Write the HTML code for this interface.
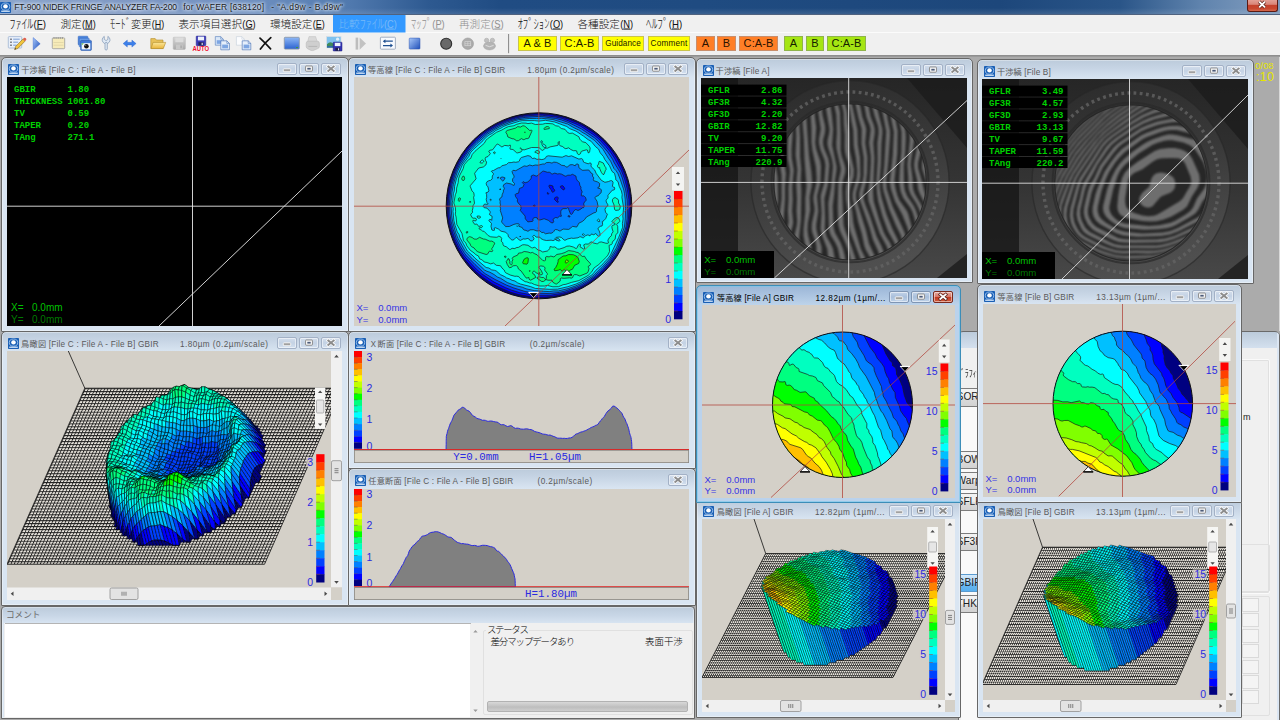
<!DOCTYPE html><html lang="ja"><head><meta charset="utf-8"><title>FT-900 NIDEK FRINGE ANALYZER FA-200 for WAFER</title><style>
*{box-sizing:border-box;margin:0;padding:0}
html,body{width:1280px;height:720px;overflow:hidden;background:#ababab}
body{font-family:"Liberation Sans","Noto Sans CJK JP",sans-serif;font-size:8px;color:#000;position:relative}
#root{position:absolute;left:0;top:0;width:1280px;height:720px;overflow:hidden;background:#ababab}
.abs{position:absolute}
#tb{position:absolute;left:0;top:0;width:1280px;height:15px;background:linear-gradient(rgba(255,255,255,0) 0,rgba(255,255,255,0) 8px,rgba(255,255,255,.12) 14px),linear-gradient(90deg,#8ba5cb 0,#8099c4 120px,#6f90c0 250px,#5079ae 350px,#2d5990 430px,#204c83 500px,#1f4b81 700px,#1d477b 1000px,#2a5588 1120px,#5f83ad 1200px,#7493b8 1245px,#7a98bb 1280px);border-bottom:1px solid #4f627f}
#tb .t{position:absolute;left:14px;top:1px;font-size:8.35px;line-height:13px;color:#1a1a1a;white-space:nowrap;text-shadow:0 0 3px #dfe9f6,0 0 3px #dfe9f6,0 0 4px #dfe9f6;letter-spacing:0.05px}
#tb .ic{position:absolute;left:0px;top:2px;width:11px;height:11px}
#tb .cl{position:absolute;left:1247px;top:-1px;width:31px;height:13px;border:1px solid #5b1a12;border-top:none;border-radius:0 0 3px 3px;background:linear-gradient(#e5a59b 0,#d98578 45%,#c4402b 50%,#c8472f 80%,#d4684c 100%)}
#mb{position:absolute;left:0;top:15px;width:1280px;height:18px;background:#f0f0f0;border-bottom:1px solid #fbfbfb;font-family:"Liberation Sans","Noto Sans CJK JP",sans-serif;font-size:10.4px;line-height:18px;white-space:nowrap}
#mb span{position:absolute;top:0;height:18px;letter-spacing:-0.2px}
#mb span u{text-decoration:underline;text-underline-offset:1px}
#mb .dis{color:#8d8d8d}
#mb .hl{background:#3399ff;color:#74b6f8}
#tl{position:absolute;left:0;top:33px;width:1280px;height:23px;background:#f0f0f0;border-bottom:1px solid #8e8e8e}
.tbtn{position:absolute;top:3px;height:15px;border:1px solid;text-align:center;white-space:nowrap;color:#1a1a00;font-family:"Liberation Sans",sans-serif}
.ty{background:#ffff00;border-color:#c9c44a}
.to{background:#ff7f27;border-color:#c98d6a;color:#2a1200}
.tg{background:#a5e513;border-color:#8fb44a;color:#142000}
.win{position:absolute;border:1px solid #676767;border-radius:5px 5px 1px 1px;background:linear-gradient(#bccbdb 0,#c6d4e4 8px,#d8e4f1 19px,#d9e5f2 20px);box-shadow:inset 0 0 0 1px rgba(255,255,255,.35)}
.win.act{border-color:#3c8db8;background:linear-gradient(#9bb6d6 0,#a9c2df 8px,#bdd3ea 19px,#bad2ec 20px);box-shadow:inset 0 0 0 1px rgba(120,200,235,.6)}
.win .ti{position:absolute;left:6px;top:6px;width:11px;height:11px}
.win .tt{position:absolute;left:19px;top:4px;height:14px;line-height:14px;font-size:8.2px;color:#5a5a5a;white-space:nowrap;letter-spacing:.22px}
.win.act .tt{color:#000}
.win .tr{position:absolute;top:4px;height:14px;line-height:14px;font-size:8.2px;color:#5a5a5a;white-space:nowrap;letter-spacing:.22px}
.win.act .tr{color:#000}
.wb{position:absolute;top:5.3px;width:20px;height:11.4px;border:1px solid #a3b1c6;border-radius:2px;background:linear-gradient(#d3deec,#c4d2e4 50%,#d4e1f0);box-shadow:inset 0 0 0 1px rgba(255,255,255,.5)}
.win.act .wb{border-color:#7f95b3;background:linear-gradient(#c3d3e8,#a9bfdb 50%,#bfd3ea)}
.win.act .wb.cl{border-color:#7a2a1c;background:linear-gradient(#e6a79d 0,#d77a6a 45%,#c23a22 52%,#d0593a 100%)}
.wb svg{position:absolute;left:0;top:0;width:18px;height:9.4px}
.cnt{position:absolute;overflow:hidden}
.mono{font-family:"Liberation Mono",monospace}
</style></head><body><div id="root"><div id="tb"><svg class="ic" viewBox="0 0 11 11" style=""><rect width="11" height="11" rx="0.8" fill="#1a5fb4"/><ellipse cx="5.5" cy="4.6" rx="4.2" ry="3.6" fill="none" stroke="#9cc3ee" stroke-width="0.9"/><ellipse cx="5.5" cy="4.4" rx="2.3" ry="2.1" fill="#fff"/><rect x="1.2" y="8.6" width="8.6" height="1.3" fill="#cfe2f7"/></svg><div class="t" style="left:14.25px;font-size:8.5px;letter-spacing:-0.083px">FT-900 NIDEK FRINGE ANALYZER FA-200</div><div class="t" style="left:183.25px;font-size:8.5px;letter-spacing:0.161px">for WAFER [638120]</div><div class="t" style="left:271.25px;font-size:8.5px;letter-spacing:0.366px">- &quot;A.d9w - B.d9w&quot;</div><div class="cl"><svg viewBox="0 0 29 12" width="29" height="12" style="position:absolute;left:0;top:0"><path d="M11.2 2.6L17 8.4M17 2.6L11.2 8.4" stroke="#5a1d14" stroke-width="3.4"/><path d="M11.2 2.6L17 8.4M17 2.6L11.2 8.4" stroke="#fff" stroke-width="1.9"/></svg></div></div><div id="mb"><svg width="1280" height="19" viewBox="0 0 1280 19" style="position:absolute;left:0;top:0"><rect x="333" y="-0.5" width="72.5" height="18" fill="#3399ff"/><text fill="#111" font-family="Liberation Sans,Noto Sans CJK JP,sans-serif" font-weight="300"><tspan x="9.50" y="12.8" font-size="13" textLength="23.75" lengthAdjust="spacingAndGlyphs">ﾌｧｲﾙ</tspan><tspan x="33.55" y="12.5" font-size="10.6" textLength="12.40" lengthAdjust="spacingAndGlyphs">(<tspan text-decoration="underline">F</tspan>)</tspan></text><text fill="#111" font-family="Liberation Sans,Noto Sans CJK JP,sans-serif" font-weight="300"><tspan x="60.50" y="12.5" font-size="10.5" textLength="21.25" lengthAdjust="spacingAndGlyphs">測定</tspan><tspan x="82.05" y="12.5" font-size="10.6" textLength="13.65" lengthAdjust="spacingAndGlyphs">(<tspan text-decoration="underline">M</tspan>)</tspan></text><text fill="#111" font-family="Liberation Sans,Noto Sans CJK JP,sans-serif" font-weight="300"><tspan x="110.00" y="12.8" font-size="13" textLength="21.00" lengthAdjust="spacingAndGlyphs">ﾓｰﾄﾞ</tspan><tspan x="131.00" y="12.5" font-size="10.5" textLength="20.50" lengthAdjust="spacingAndGlyphs">変更</tspan><tspan x="151.80" y="12.5" font-size="10.6" textLength="12.40" lengthAdjust="spacingAndGlyphs">(<tspan text-decoration="underline">H</tspan>)</tspan></text><text fill="#111" font-family="Liberation Sans,Noto Sans CJK JP,sans-serif" font-weight="300"><tspan x="178.50" y="12.5" font-size="10.5" textLength="63.50" lengthAdjust="spacingAndGlyphs">表示項目選択</tspan><tspan x="242.30" y="12.5" font-size="10.6" textLength="13.40" lengthAdjust="spacingAndGlyphs">(<tspan text-decoration="underline">G</tspan>)</tspan></text><text fill="#111" font-family="Liberation Sans,Noto Sans CJK JP,sans-serif" font-weight="300"><tspan x="270.00" y="12.5" font-size="10.5" textLength="42.40" lengthAdjust="spacingAndGlyphs">環境設定</tspan><tspan x="312.70" y="12.5" font-size="10.6" textLength="12.00" lengthAdjust="spacingAndGlyphs">(<tspan text-decoration="underline">E</tspan>)</tspan></text><text fill="#79b9f7" font-family="Liberation Sans,Noto Sans CJK JP,sans-serif" font-weight="300"><tspan x="338.50" y="12.5" font-size="10.5" textLength="21.20" lengthAdjust="spacingAndGlyphs">比較</tspan><tspan x="359.70" y="12.8" font-size="13" textLength="24.00" lengthAdjust="spacingAndGlyphs">ﾌｧｲﾙ</tspan><tspan x="384.00" y="12.5" font-size="10.6" textLength="12.90" lengthAdjust="spacingAndGlyphs">(<tspan text-decoration="underline">C</tspan>)</tspan></text><text fill="#8f8f8f" font-family="Liberation Sans,Noto Sans CJK JP,sans-serif" font-weight="300"><tspan x="411.00" y="12.8" font-size="13" textLength="21.00" lengthAdjust="spacingAndGlyphs">ﾏｯﾌﾟ</tspan><tspan x="432.30" y="12.5" font-size="10.6" textLength="12.40" lengthAdjust="spacingAndGlyphs">(<tspan text-decoration="underline">P</tspan>)</tspan></text><text fill="#8f8f8f" font-family="Liberation Sans,Noto Sans CJK JP,sans-serif" font-weight="300"><tspan x="459.00" y="12.5" font-size="10.5" textLength="31.80" lengthAdjust="spacingAndGlyphs">再測定</tspan><tspan x="491.10" y="12.5" font-size="10.6" textLength="12.60" lengthAdjust="spacingAndGlyphs">(<tspan text-decoration="underline">S</tspan>)</tspan></text><text fill="#111" font-family="Liberation Sans,Noto Sans CJK JP,sans-serif" font-weight="300"><tspan x="517.50" y="12.8" font-size="13" textLength="32.00" lengthAdjust="spacingAndGlyphs">ｵﾌﾟｼｮﾝ</tspan><tspan x="549.80" y="12.5" font-size="10.6" textLength="13.40" lengthAdjust="spacingAndGlyphs">(<tspan text-decoration="underline">O</tspan>)</tspan></text><text fill="#111" font-family="Liberation Sans,Noto Sans CJK JP,sans-serif" font-weight="300"><tspan x="577.50" y="12.5" font-size="10.5" textLength="42.40" lengthAdjust="spacingAndGlyphs">各種設定</tspan><tspan x="620.20" y="12.5" font-size="10.6" textLength="13.00" lengthAdjust="spacingAndGlyphs">(<tspan text-decoration="underline">N</tspan>)</tspan></text><text fill="#111" font-family="Liberation Sans,Noto Sans CJK JP,sans-serif" font-weight="300"><tspan x="646.00" y="12.8" font-size="13" textLength="22.50" lengthAdjust="spacingAndGlyphs">ﾍﾙﾌﾟ</tspan><tspan x="668.80" y="12.5" font-size="10.6" textLength="13.40" lengthAdjust="spacingAndGlyphs">(<tspan text-decoration="underline">H</tspan>)</tspan></text></svg></div><div id="tl"><svg width="512" height="23" viewBox="0 33 512 23" style="position:absolute;left:0;top:0"><defs>
<linearGradient id="gb" x1="0" y1="0" x2="0" y2="1"><stop offset="0" stop-color="#8fb8f6"/><stop offset="1" stop-color="#2a62d0"/></linearGradient>
<linearGradient id="gb2" x1="0" y1="0" x2="1" y2="1"><stop offset="0" stop-color="#a8c8fa"/><stop offset="1" stop-color="#1e4eb8"/></linearGradient>
<linearGradient id="gy" x1="0" y1="0" x2="0" y2="1"><stop offset="0" stop-color="#fbe79a"/><stop offset="1" stop-color="#e9b43a"/></linearGradient>
<linearGradient id="gg" x1="0" y1="0" x2="0" y2="1"><stop offset="0" stop-color="#d6d6d6"/><stop offset="1" stop-color="#a9a9a9"/></linearGradient>
</defs><rect x="8.3" y="36.6" width="13.4" height="11.4" rx="0.8" fill="#e9f0fa" stroke="#9fb4d2" stroke-width="0.8"/><path d="M10.2 39.2h1.6M10.2 42.2h1.6M10.2 45.2h1.6" stroke="#6f6f78" stroke-width="1.5"/><path d="M13.2 39.2h6.5M13.2 42.2h5M13.2 45.2h3.5" stroke="#9db7df" stroke-width="1.6"/><path d="M14.6 49.6l1.1 -3.2l7.2 -7.3l2.1 2.1l-7.2 7.3z" fill="#f2c53d" stroke="#8a6a20" stroke-width="0.6"/><path d="M22.9 39.1l1-1a1.1 1.1 0 0 1 1.6 0l.5.5a1.1 1.1 0 0 1 0 1.6l-1 1z" fill="#e0604f"/><path d="M14.6 49.6l.5-1.6l1.1 1.1z" fill="#333"/><path d="M33.2 37.6L40.2 43.8L33.2 50z" fill="url(#gb2)" stroke="#2a5ad0" stroke-width="0.4"/><rect x="52.3" y="37.9" width="12.4" height="10.8" rx="0.8" fill="#f6ebb8" stroke="#a5a5a0" stroke-width="0.9"/><path d="M54 37v2M56.1 37v2M58.2 37v2M60.3 37v2M62.4 37v2" stroke="#8f8f8f" stroke-width="0.8"/><path d="M53.5 42.5h10M53.5 45.2h10" stroke="#ddd0a0" stroke-width="0.7"/><rect x="78.2" y="36.2" width="9.6" height="8.6" rx="0.6" fill="#4a86e0" stroke="#2c5fb8" stroke-width="0.5"/><rect x="79.2" y="38.2" width="10" height="8.6" rx="0.6" fill="#6b9fe9" stroke="#2c5fb8" stroke-width="0.5"/><rect x="80.6" y="40.4" width="10.8" height="10" rx="0.8" fill="#3f79d6" stroke="#2856a8" stroke-width="0.6"/><rect x="81.7" y="43.2" width="8.6" height="6.2" fill="#f4f6f8"/><circle cx="86.4" cy="46.2" r="2.3" fill="#111"/><circle cx="85.7" cy="45.5" r="0.6" fill="#888"/><path d="M81.7 43.2h2.2l-2.2 2.2z" fill="#6cc04a"/><path d="M104.3 36.4a3.9 3.9 0 1 0 3.6 0v3l-1.8 1.2l-1.8 -1.2z" fill="#dfe9f4" stroke="#7f96b4" stroke-width="0.7"/><rect x="105" y="42.4" width="2.3" height="7.6" rx="1.1" fill="#dfe9f4" stroke="#7f96b4" stroke-width="0.7"/><path d="M123.1 43.6l4.2 -3.5v2.2h4.6v-2.2l4.2 3.5l-4.2 3.5v-2.2h-4.6v2.2z" fill="#3d80ea" stroke="#2a62c8" stroke-width="0.4"/><path d="M150.8 48.4v-9.8h4.4l1.2 1.4h6.6v8.4z" fill="#e8c25a" stroke="#b08a2a" stroke-width="0.6"/><path d="M151 48.6l2.1 -6.2h12.6l-2.4 6.2z" fill="url(#gy)" stroke="#b08a2a" stroke-width="0.6"/><rect x="173.2" y="37.2" width="12.2" height="12.2" rx="0.8" fill="url(#gg)" stroke="#b5b5b5" stroke-width="0.5"/><rect x="175.3" y="37.6" width="8" height="4.6" fill="#dcdcdc"/><rect x="176" y="44.6" width="6.6" height="4.6" fill="#c8c8c8"/><rect x="180.3" y="45.4" width="1.6" height="3" fill="#aaa"/><rect x="196.2" y="36.1" width="9.6" height="9.6" rx="0.6" fill="#3a3ab8" stroke="#23238a" stroke-width="0.5"/><rect x="197.9" y="36.6" width="6.2" height="3.8" fill="#eef2fb"/><rect x="198.4" y="42.2" width="5.2" height="3.3" fill="#23235a"/><rect x="201.6" y="42.8" width="1.2" height="2.2" fill="#dde"/><text x="200.8" y="51.2" font-family="Liberation Sans,sans-serif" font-weight="bold" font-size="6.8" fill="#f01030" text-anchor="middle" textLength="16.6" lengthAdjust="spacingAndGlyphs">AUTO</text><path d="M215.3 36.6h5.4l2.6 2.6v6.0h-8z" fill="#dbe8f8" stroke="#4f78b8" stroke-width="0.6"/><path d="M220.70000000000002 36.6v2.6h2.6" fill="none" stroke="#4f78b8" stroke-width="0.5"/><rect x="216.70000000000002" y="40.212" width="5.2" height="3.6119999999999997" fill="#7ea6e2"/><path d="M220.8 40.8h6.0l2.6 2.6v6.4h-8.6z" fill="#e6effb" stroke="#3a66b0" stroke-width="0.6"/><path d="M226.8 40.8v2.6h2.6" fill="none" stroke="#3a66b0" stroke-width="0.5"/><rect x="222.20000000000002" y="44.58" width="5.8" height="3.78" fill="#7ea6e2"/><path d="M236.4 36.6h5.4l2.6 2.6v6.0h-8z" fill="#fbfcfe" stroke="#c2ccd8" stroke-width="0.6"/><path d="M241.8 36.6v2.6h2.6" fill="none" stroke="#c2ccd8" stroke-width="0.5"/><path d="M242.2 40.8h6.0l2.6 2.6v6.4h-8.6z" fill="#e6effb" stroke="#3a66b0" stroke-width="0.6"/><path d="M248.2 40.8v2.6h2.6" fill="none" stroke="#3a66b0" stroke-width="0.5"/><rect x="243.6" y="44.58" width="5.8" height="3.78" fill="#7ea6e2"/><path d="M260 38.2q5 4.6 10.6 10.6M270.8 37.6q-5.8 5 -10.4 11.4" stroke="#111" stroke-width="1.7" fill="none" stroke-linecap="round"/><rect x="284.3" y="37.3" width="15" height="11.8" rx="0.8" fill="url(#gb)" stroke="#8a98ac" stroke-width="0.9"/><rect x="296" y="47" width="2" height="1" fill="#3c9a3c"/><path d="M309 36.6h6.6l1.6 5h-9.6z" fill="#d9d9d9" stroke="#bdbdbd" stroke-width="0.5"/><path d="M306.2 43.2q0 -2 2 -2h9.2q2 0 2 2v3.4q0 1.6 -2 2.2l-4 1.6q-1.2.4 -2.4 0l-3 -1.4q-1.8 -.8 -1.8 -2.4z" fill="#cfcfcf" stroke="#b4b4b4" stroke-width="0.5"/><path d="M308.4 46.4h8.8" stroke="#b0b0b0" stroke-width="0.8"/><rect x="326.6" y="36.6" width="14.4" height="11.2" fill="#7fc2ee" stroke="#d8dde4" stroke-width="0.7"/><path d="M327 44.2q3 -3.4 5.4 -1.2t4 -.4v5h-9.4z" fill="#3f8a58"/><path d="M327 46h9v1.6h-9z" fill="#2e6aa8"/><circle cx="337.6" cy="39.2" r="1.6" fill="#e8f4ff" opacity="0.9"/><rect x="333.2" y="42.2" width="8.8" height="8.8" rx="0.5" fill="#3434b4" stroke="#20207a" stroke-width="0.5"/><rect x="334.8" y="42.8" width="5.6" height="3.3" fill="#eef2fb"/><rect x="335.3" y="47.8" width="4.6" height="3" fill="#20204a"/><rect x="338" y="48.3" width="1.1" height="2" fill="#dde"/><rect x="355.6" y="37.6" width="2.6" height="12" fill="#bdbdbd"/><path d="M359.6 37.6L366 43.6L359.6 49.8z" fill="#c2c2c2"/><rect x="380.4" y="37.2" width="15" height="12" rx="0.8" fill="#f8fafe" stroke="#9aa6ba" stroke-width="0.9"/><path d="M384.6 41.2h8.2M391.2 45.6h-8.2" stroke="#1f4f90" stroke-width="1.3"/><path d="M385.4 39.2l-2.6 2l2.6 2zM390.4 43.6l2.6 2l-2.6 2z" fill="#1f4f90"/><rect x="409.2" y="38.1" width="10.8" height="11" rx="0.8" fill="url(#gb2)" stroke="#2a52b0" stroke-width="0.5"/><circle cx="446.2" cy="43.7" r="5.5" fill="#696969" stroke="#2e2e2e" stroke-width="1.1"/><circle cx="467.8" cy="43.7" r="5.7" fill="#ababab" stroke="#9a9a9a" stroke-width="0.6"/><rect x="464.9" y="41.7" width="5.8" height="4" fill="none" stroke="#d6d6d6" stroke-width="0.7"/><path d="M467.8 41.7v4M464.9 43.7h5.8" stroke="#d6d6d6" stroke-width="0.6"/><ellipse cx="489.5" cy="46" rx="6" ry="3.9" fill="#b4b4b4" stroke="#a0a0a0" stroke-width="0.5"/><circle cx="486.6" cy="40.4" r="2.2" fill="#c0c0c0" stroke="#a4a4a4" stroke-width="0.5"/><circle cx="492.4" cy="40.4" r="2.2" fill="#c0c0c0" stroke="#a4a4a4" stroke-width="0.5"/><path d="M485.6 45.4q4 2.6 8 0" stroke="#e2e2e2" stroke-width="0.9" fill="none"/><path d="M508.6 34v19.2" stroke="#7a7a7a" stroke-width="0.9"/></svg><div class="tbtn ty" style="left:518px;width:39px;font-size:11px;line-height:13px;letter-spacing:0.094px;text-indent:0.094px">A &amp; B</div><div class="tbtn ty" style="left:560px;width:39px;font-size:11px;line-height:13px;letter-spacing:0.131px;text-indent:0.131px">C:A-B</div><div class="tbtn ty" style="left:602px;width:42px;font-size:8.2px;line-height:13px;letter-spacing:0.067px;text-indent:0.067px">Guidance</div><div class="tbtn ty" style="left:648px;width:42px;font-size:8.2px;line-height:13px;letter-spacing:0.214px;text-indent:0.214px">Comment</div><div class="tbtn to" style="left:696px;width:19px;font-size:11px;line-height:13px">A</div><div class="tbtn to" style="left:717px;width:19px;font-size:11px;line-height:13px">B</div><div class="tbtn to" style="left:739px;width:39px;font-size:11px;line-height:13px;letter-spacing:0.131px;text-indent:0.131px">C:A-B</div><div class="tbtn tg" style="left:784px;width:19px;font-size:11px;line-height:13px">A</div><div class="tbtn tg" style="left:806px;width:18px;font-size:11px;line-height:13px">B</div><div class="tbtn tg" style="left:827px;width:39px;font-size:11px;line-height:13px;letter-spacing:0.131px;text-indent:0.131px">C:A-B</div></div><div class="abs" style="left:0;top:56px;width:1280px;height:1px;background:#9a9a9a"></div><div class="abs" style="left:1279px;top:57px;width:1px;height:274px;background:#d8d8d8"></div><div class="abs" style="left:1255px;top:60px;font-size:9.5px;line-height:11px;color:#e6e600;white-space:nowrap">0/08</div><div class="abs" style="left:1256px;top:70px;font-size:13px;line-height:14px;color:#e6e600;white-space:nowrap">:10</div><div class="abs" style="left:958px;top:331px;width:322px;height:400px;border:1px solid #6a6a6a;border-radius:5px 5px 0 0;background:linear-gradient(#bccbdb 0,#d4e0ee 16px,#dbe6f3 17px);overflow:hidden"><div class="abs" style="left:0;top:16px;width:318px;height:400px;background:#f0f0f0"></div><div class="abs" style="left:2px;top:74px;width:18px;height:326px;background:#f9f9f9"></div><div class="abs" style="left:-2px;top:36px;font-size:10px;line-height:12px;white-space:nowrap;color:#333;letter-spacing:-0.2px;transform:scaleX(.8);transform-origin:0 0">ｸﾞﾗﾌｨｯｸ</div><div class="abs" style="left:-5px;top:56px;width:60px;height:19px;border:1px solid #7c7c7c;background:linear-gradient(#f3f3f3 0,#ececec 50%,#dadada 55%,#d2d2d2);font-size:10.2px;line-height:16px;padding-left:1.6px;color:#222;white-space:nowrap">SORI</div><div class="abs" style="left:-5px;top:119px;width:60px;height:18px;border:1px solid #7c7c7c;background:linear-gradient(#f3f3f3 0,#ececec 50%,#dadada 55%,#d2d2d2);font-size:10.2px;line-height:15px;padding-left:1.6px;color:#222;white-space:nowrap">BOW</div><div class="abs" style="left:-5px;top:140px;width:60px;height:18px;border:1px solid #7c7c7c;background:linear-gradient(#f3f3f3 0,#ececec 50%,#dadada 55%,#d2d2d2);font-size:10.2px;line-height:15px;padding-left:1.6px;color:#222;white-space:nowrap">Warp</div><div class="abs" style="left:-5px;top:161px;width:60px;height:18px;border:1px solid #7c7c7c;background:linear-gradient(#f3f3f3 0,#ececec 50%,#dadada 55%,#d2d2d2);font-size:10.2px;line-height:15px;padding-left:1.6px;color:#222;white-space:nowrap">SFLR</div><div class="abs" style="left:-5px;top:201px;width:60px;height:18px;border:1px solid #7c7c7c;background:linear-gradient(#f3f3f3 0,#ececec 50%,#dadada 55%,#d2d2d2);font-size:10.2px;line-height:15px;padding-left:1.6px;color:#222;white-space:nowrap">SF3R</div><div class="abs" style="left:-5px;top:242px;width:60px;height:18px;border:1px solid #5a9bd0;background:linear-gradient(#d6eafb 0,#a4d2f5 50%,#6ab8f0 55%,#58afee);font-size:10.2px;line-height:15px;padding-left:1.6px;color:#222;white-space:nowrap">GBIR</div><div class="abs" style="left:-5px;top:263px;width:60px;height:18px;border:1px solid #7c7c7c;background:linear-gradient(#f3f3f3 0,#ececec 50%,#dadada 55%,#d2d2d2);font-size:10.2px;line-height:15px;padding-left:1.6px;color:#222;white-space:nowrap">THK</div><div class="abs" style="left:281px;top:27px;width:30px;height:235px;border:1px solid #fafafa;border-radius:2px;box-shadow:0 0 0 1px #e0e0e0 inset"></div><div class="abs" style="left:284px;top:80px;font-size:9px;color:#222">m</div><div class="abs" style="left:281px;top:212px;width:30px;height:48px;border:1px solid #e0e0e0;border-radius:2px"></div><div class="abs" style="left:281px;top:264px;width:30px;height:120px;border:1px solid #e0e0e0;border-radius:2px"></div><div class="abs" style="left:283px;top:266.0px;width:17px;height:14px;border:1px solid #dadada;background:#f4f4f4"></div><div class="abs" style="left:283px;top:281.4px;width:17px;height:14px;border:1px solid #dadada;background:#f4f4f4"></div><div class="abs" style="left:283px;top:296.8px;width:17px;height:14px;border:1px solid #dadada;background:#f4f4f4"></div><div class="abs" style="left:283px;top:312.2px;width:17px;height:14px;border:1px solid #dadada;background:#f4f4f4"></div><div class="abs" style="left:283px;top:327.6px;width:17px;height:14px;border:1px solid #dadada;background:#f4f4f4"></div><div class="abs" style="left:283px;top:343.0px;width:17px;height:14px;border:1px solid #dadada;background:#f4f4f4"></div><div class="abs" style="left:283px;top:358.4px;width:17px;height:14px;border:1px solid #dadada;background:#f4f4f4"></div><div class="abs" style="left:318px;top:0;width:3px;height:400px;background:#dbe6f3"></div></div><div class="win" style="left:1px;top:57px;width:348px;height:275px"><svg class="ti" viewBox="0 0 11 11" style=""><rect width="11" height="11" rx="0.8" fill="#1a5fb4"/><ellipse cx="5.5" cy="4.6" rx="4.2" ry="3.6" fill="none" stroke="#9cc3ee" stroke-width="0.9"/><ellipse cx="5.5" cy="4.4" rx="2.3" ry="2.1" fill="#fff"/><rect x="1.2" y="8.6" width="8.6" height="1.3" fill="#cfe2f7"/></svg><div class="tt" style="top:5.5px;letter-spacing:0.222px;left:19.2px">干渉縞 [File C : File A - File B]</div><div class="wb" style="left:274.5px"><svg viewBox="0 0 18 9"><rect x="5.3" y="4.6" width="7.4" height="2.9" rx="0.7" fill="#a0a0a0" stroke="#fff" stroke-width="0.8"/></svg></div><div class="wb" style="left:296.5px"><svg viewBox="0 0 18 9"><rect x="5.6" y="1.8" width="6.8" height="5.2" rx="0.5" fill="#fdfdfd" stroke="#8a8a8a" stroke-width="1"/><rect x="7.3" y="3.6" width="3.4" height="1.8" fill="#4b5a78"/></svg></div><div class="wb cl" style="left:318.5px"><svg viewBox="0 0 18 9"><path d="M6.3 2.3L11.7 6.7M11.7 2.3L6.3 6.7" stroke="#fff" stroke-width="3.3" stroke-linecap="square"/><path d="M6.3 2.3L11.7 6.7M11.7 2.3L6.3 6.7" stroke="#8c8c8c" stroke-width="1.9" stroke-linecap="square"/></svg></div><div class="cnt" style="left:5px;top:19px;width:335px;height:249px;background:#000"><svg width="335" height="249" viewBox="0 0 335 249" style="position:absolute;left:0;top:0;"><rect width="335" height="249" fill="#000"/><path d="M185.5 0V249M0 129.2H335M152 249L335 74" stroke="#e8e8e8" stroke-width="0.9" fill="none"/><text x="7" y="14.7" font-family="Liberation Mono,monospace" font-size="9" font-weight="bold" fill="#00d000" text-anchor="start" >GBIR</text><text x="60.5" y="14.7" font-family="Liberation Mono,monospace" font-size="9" font-weight="bold" fill="#00d000" text-anchor="start" >1.80</text><text x="7" y="26.8" font-family="Liberation Mono,monospace" font-size="9" font-weight="bold" fill="#00d000" text-anchor="start" >THICKNESS</text><text x="60.5" y="26.8" font-family="Liberation Mono,monospace" font-size="9" font-weight="bold" fill="#00d000" text-anchor="start" >1001.80</text><text x="7" y="38.8" font-family="Liberation Mono,monospace" font-size="9" font-weight="bold" fill="#00d000" text-anchor="start" >TV</text><text x="60.5" y="38.8" font-family="Liberation Mono,monospace" font-size="9" font-weight="bold" fill="#00d000" text-anchor="start" >0.59</text><text x="7" y="50.9" font-family="Liberation Mono,monospace" font-size="9" font-weight="bold" fill="#00d000" text-anchor="start" >TAPER</text><text x="60.5" y="50.9" font-family="Liberation Mono,monospace" font-size="9" font-weight="bold" fill="#00d000" text-anchor="start" >0.20</text><text x="7" y="62.9" font-family="Liberation Mono,monospace" font-size="9" font-weight="bold" fill="#00d000" text-anchor="start" >TAng</text><text x="60.5" y="62.9" font-family="Liberation Mono,monospace" font-size="9" font-weight="bold" fill="#00d000" text-anchor="start" >271.1</text><text x="4" y="234" font-family="Liberation Sans,sans-serif" font-size="10" font-weight="normal" fill="#00c000" text-anchor="start" >X=</text><text x="25" y="234" font-family="Liberation Sans,sans-serif" font-size="10" font-weight="normal" fill="#00c000" text-anchor="start" >0.0mm</text><text x="4" y="245.5" font-family="Liberation Sans,sans-serif" font-size="10" font-weight="normal" fill="#007800" text-anchor="start" >Y=</text><text x="25" y="245.5" font-family="Liberation Sans,sans-serif" font-size="10" font-weight="normal" fill="#007800" text-anchor="start" >0.0mm</text></svg></div></div><div class="win" style="left:348px;top:57px;width:348px;height:275px"><svg class="ti" viewBox="0 0 11 11" style=""><rect width="11" height="11" rx="0.8" fill="#1a5fb4"/><ellipse cx="5.5" cy="4.6" rx="4.2" ry="3.6" fill="none" stroke="#9cc3ee" stroke-width="0.9"/><ellipse cx="5.5" cy="4.4" rx="2.3" ry="2.1" fill="#fff"/><rect x="1.2" y="8.6" width="8.6" height="1.3" fill="#cfe2f7"/></svg><div class="tt" style="top:5.5px;letter-spacing:0.214px;left:18.9px">等高線 [File C : File A - File B] GBIR</div><div class="tr" style="left:178.2px;top:5.5px;letter-spacing:0.384px">1.80µm (0.2µm/scale)</div><div class="wb" style="left:274.5px"><svg viewBox="0 0 18 9"><rect x="5.3" y="4.6" width="7.4" height="2.9" rx="0.7" fill="#a0a0a0" stroke="#fff" stroke-width="0.8"/></svg></div><div class="wb" style="left:296.5px"><svg viewBox="0 0 18 9"><rect x="5.6" y="1.8" width="6.8" height="5.2" rx="0.5" fill="#fdfdfd" stroke="#8a8a8a" stroke-width="1"/><rect x="7.3" y="3.6" width="3.4" height="1.8" fill="#4b5a78"/></svg></div><div class="wb cl" style="left:318.5px"><svg viewBox="0 0 18 9"><path d="M6.3 2.3L11.7 6.7M11.7 2.3L6.3 6.7" stroke="#fff" stroke-width="3.3" stroke-linecap="square"/><path d="M6.3 2.3L11.7 6.7M11.7 2.3L6.3 6.7" stroke="#8c8c8c" stroke-width="1.9" stroke-linecap="square"/></svg></div><div class="cnt" style="left:5px;top:19px;width:335px;height:249px;background:#d4d0c8"><svg width="335" height="249" viewBox="0 0 335 249" style="position:absolute;left:0;top:0;"><clipPath id="cC"><ellipse cx="185" cy="128.8" rx="92.8" ry="93"/></clipPath><g clip-path="url(#cC)"><ellipse cx="185" cy="128.8" rx="93.8" ry="94" fill="#000080"/><path d="M172.6 37.7l8.7 -0.8 7.4 0.1 9.3 0.9 10.2 2.1 7.4 2.5 8.6 3.5 6.7 3.8 8.9 5.9 7.4 6.1 5.5 5.8 5.3 6.3 5 7.5 4.9 9.3 3.2 7.4 2.1 6.6 2.2 10.2 1 8.3 0.1 8.4 -0.9 11.2 -1.5 8.3 -2.3 7.5 -5 12.1 -3.8 6.8 -4.2 6.2 -6.1 7.2 -6.7 6.7 -5.6 4.7 -8.3 5.5 -8.1 4.3 -7.9 3.2 -7.9 2.3 -9.3 1.8 -7.4 0.7 -9.3 0.1 -6.5 -0.6 -11.1 -2 -8.4 -2.5 -10.6 -4.5 -7.1 -3.7 -9.7 -6.5 -5.6 -4.6 -6.9 -7 -6.5 -7.7 -3.7 -5.7 -4.6 -8.8 -3.6 -9 -2 -6.8 -1.8 -9 -0.7 -6.5 -0.2 -11.1 1.1 -9.3 1.6 -8.5 2.8 -9.2 3.7 -8.7 3.7 -6.8 6.5 -9.5 4.7 -5.5 5.5 -5.6 8.1 -6.7 7.1 -4.6 6.9 -3.8 8.8 -3.7 9 -2.7 9.9 -1.9z" fill="#0000ff" stroke="#1a1a1a" stroke-width="0.7" stroke-linejoin="round" fill-rule="evenodd"/><path d="M176 38.6l8.1 -0.5 4.6 0.2 13 1.7 6.5 1.4 13.9 5.5 4.7 2.4 13 8.6 4.9 3.9 7 7.5 5.3 6.5 3.6 5.6 7 12.6 3 7.8 2.7 10.3 1.6 10.2 0.1 9.3 -0.6 11.2 -2.2 10.8 -6.6 17.1 -3.7 6.5 -5.2 7.4 -7.4 8.4 -4.9 4.6 -8.4 6.5 -7.4 4.5 -5.6 2.7 -10.2 3.7 -6.5 1.6 -10.2 1.7 -13 0 -6.5 -0.6 -11.1 -2.1 -8.3 -2.6 -5.8 -2.4 -11.3 -5.5 -12.6 -8.4 -5.3 -4.7 -10.5 -11.3 -2.8 -3.7 -3.7 -6.2 -4.2 -8.5 -2.6 -7.5 -2.2 -8.3 -1.5 -9.3 -0.4 -10.3 0.2 -5.5 2.3 -14 2.7 -9.3 2 -5.2 3.7 -7.5 10.2 -14.9 7.4 -7.7 6.5 -5.7 4.9 -3.6 9.5 -5.6 8.1 -3.7 10 -3.2 7.4 -1.7 6.8 -0.7zM179.4 128.5l-0.2 0.3 1.2 0.7 0.9 -0.7 -0.9 -0.7 -1 0.4zM193.4 115.6l-0.1 1.1 1 0.6 0.5 -0.6 -0.7 -0.9 -0.7 -0.2zM195.2 108.2l-0.3 1.1 1.2 2.4 1.4 1.3 0.5 1.9 0.9 0.4 0.8 -0.4 0.9 -1 0.1 -0.9 -1.6 -1.9 -0.2 -2.1 -1.8 -0.6 -1.9 -0.2zM201.7 120l-0.9 0.9 -0.5 1.4 2.8 2.8 0.5 0.3 0.7 -0.3 -0.8 -1.9 0.7 -1.8 -0.2 -1 -0.4 -0.5 -1.9 0.1zM207.3 108.9l-0.9 0.4 0 0.9 2.7 2.7 1 -0.2 0.5 -0.6 0 -1 -1.5 -2.1 -0.9 -0.4 -0.9 0.3z" fill="#0040ff" stroke="#1a1a1a" stroke-width="0.7" stroke-linejoin="round" fill-rule="evenodd"/><path d="M183 39.5l4.8 0.1 13.9 1.9 5.6 1.4 7.4 2.7 13 6.5 13 8.9 3.7 3.2 9.3 10.7 4.9 7.4 1.7 3.7 5.8 9.3 2.2 5.6 3.4 12.1 1.5 10.2 0.2 8.4 -0.3 10.2 -1 7.5 -1 3.7 -7.2 18.2 -8 12.5 -7.8 8.8 -7.9 7 -5.1 3.7 -7.4 4.4 -4.7 2.3 -11.1 3.9 -6.5 1.6 -10.2 1.2 -13.9 -0.5 -5.6 -0.8 -4.6 -0.8 -11.2 -3.5 -7.4 -2.9 -11.7 -5.8 -9.6 -5.6 -2.8 -2.3 -7.4 -6.9 -8.4 -8.6 -2.2 -2.7 -4.3 -7.1 -3.9 -7.7 -3.2 -9.4 -2.1 -8.3 -1 -7.5 -0.4 -11.1 1 -9.3 1.5 -8.4 2.8 -9.3 1.7 -4.6 3.2 -6.5 8.6 -13.1 3 -3.6 5.5 -5.7 9.3 -8 3.7 -2.7 10.2 -5.8 6.5 -2.9 11.2 -3.5 7.4 -1.3 11.9 -0.9zM188.7 94.3l-5.6 4.6 -0.9 0.2 -2.8 -1.1 -1.8 0.7 -0.4 0.3 0.1 1.9 -0.3 0.9 -3.1 3.1 -2.8 0.9 -1.9 -1.2 -0.9 1 1.7 1.8 -0.8 2.2 -0.4 0.6 -3.3 1.2 -0.9 4.7 -2.8 0.8 -0.6 0.7 0.3 1.9 2 2.8 -0.2 1.9 0.9 1.8 2.6 2.8 0.2 2.8 -0.8 1.8 4.9 5.6 0.2 2.8 2.6 3.1 4.6 -0.5 0.5 -0.7 -0.2 -1.9 1.1 -0.9 1.4 -0.4 1.9 0.4 0.9 1.9 1.8 0.2 3.7 -1.1 1 0 3.7 1.4 2.8 2.3 1.8 0.3 0.8 -1.3 -0.6 -1.8 0.3 -1 2.3 -1.3 1.9 0.4 1.8 -1.7 1.9 0.1 0.2 -0.3 -0.7 -1.8 0 -2.8 0.5 -1.3 0.9 -1 0.9 -0.4 3.4 -0.1 1.4 -0.9 0.8 0.6 0 1.2 1.9 4.6 0.9 0.3 0.9 -0.7 1.2 -2.3 1.6 -1.8 0.9 0 1.9 0.9 2.1 -1 2.5 -1.8 0.9 0 0.7 -1 0 -0.9 -0.6 -1.9 0.9 -1.8 1.7 -1.9 -0.1 -0.9 -0.6 -1.9 -1 -0.9 -1 -0.7 -1.8 0.2 -0.3 -0.4 0 -1.9 0.8 -1.8 -1.4 -3 0.2 -1.7 -1.2 -1.9 -0.4 -2.7 -2.4 -2.5 -0.6 -1.3 -0.5 -2.8 -3.5 -1.7 -1.8 0.9 -2.8 0 -1.9 1 -0.9 -0.1 -3.3 -1.9 -2.3 -0.5 -1.8 0.3 -2.8 -0.9 -2.8 1.1 -1.9 -1.7 -0.9 -0.3 -1.8 0.1 -3.8 -1.2 -0.9 0.2zM214.7 138.5l-0.9 0.5 0.9 1 1.2 0 0 -1 -1.2 -0.5z" fill="#0080ff" stroke="#1a1a1a" stroke-width="0.7" stroke-linejoin="round" fill-rule="evenodd"/><path d="M182.5 41.4l5.3 -0.1 11.1 1.2 14.9 4.6 6 3.6 6 2.8 2.3 1.8 3.5 1.9 9.1 6.3 8.3 8.8 5.5 9.1 2.1 2.8 3.4 7.4 2 2 1.9 2.9 2.5 6.3 3.4 10.2 0.7 3.7 0.7 5.6 0.4 9.3 -0.3 10.2 -0.9 8.4 -7.9 20.5 -6.8 11.1 -7.6 8.5 -7.7 7.3 -2.5 2.1 -5.4 3.5 -6.4 3.7 -4.2 1.9 -7.8 2.8 -9.6 2.3 -4.7 0 -4.6 0.7 -5.6 -0.3 -9.2 -0.7 -8.4 -1.8 -3.7 -1.6 -6.5 -1.5 -8.4 -3.1 -6.8 -4.3 -3.4 -1.4 -3 -2.3 -4.4 -2.4 -2.8 -0.9 -2.5 -1.3 -8.6 -8.3 -2.8 -2 -7.8 -8.3 -7.3 -13 -2.3 -5.6 -3.1 -11.2 -1 -6.5 -0.7 -13 1.1 -10.2 1.4 -7.5 1.6 -5.6 2.5 -7.4 2.6 -5.6 7.1 -10.2 2 -3.7 2.4 -2.8 5.2 -5.4 10.7 -9.5 7.2 -4.7 6.8 -3.7 9.7 -3.9 7.4 -2.2 11.1 -1.2 6.8 -0.1zM192.4 85.6l-1.8 1.4 -1.9 0 -4.6 1.2 -2.8 -0.2 -2.8 0.8 -2.8 -0.8 -2.8 1.3 -2.7 -0.4 -8.4 4.8 -2.8 -0.4 -0.9 1.1 0.4 1.9 1.6 2.7 -0.2 1.4 -1.2 1.4 -0.2 1 0.2 1.8 1.8 1.9 -0.4 1.8 -0.8 0 -2.1 -1.3 -4.7 -1 -2.8 1.7 -0.5 1.6 1.1 1.8 0 1 -0.9 0.9 0 1.9 -1.2 2.7 -0.3 2.4 -2 1.4 -0.4 0.9 0.7 1.9 -0.2 1.8 0.5 1.9 -0.4 1.8 0.5 1.9 -0.3 1.9 2.4 7.4 -1.1 3.7 0.2 0.9 2.9 2.8 0.9 1.3 3.7 -0.1 4.6 -2.1 2.8 -0.7 1.9 0.2 0.7 0.5 -0.5 0.9 0.1 1 3.4 1.3 0.6 1.4 1 1 2.1 0.4 1.9 0.9 0.9 -0.3 0.9 -1.1 3.7 -0.2 3.7 1.3 1.9 -0.4 0.9 0.3 1.9 1.7 1.8 -0.2 1.9 1.4 3.7 -0.7 1.9 0.2 1.8 -0.9 0.9 -0.9 0.8 -1.5 1.1 -0.5 1.9 0.4 1.8 1 0.9 0 2.8 -1.8 5.6 0.3 1.9 -1.2 1.8 -1.9 3.7 0.7 0.9 -0.2 1.9 -3.7 3.3 -1.5 2.3 -1.9 2 -2.7 7.3 -4.1 2 -0.6 0.7 -0.7 0.1 -3 1.3 -1.9 0.1 -0.9 -1 -4.6 -1.8 -2.8 -0.1 -1 0.7 -0.9 2.6 -0.9 0.5 -1 2.2 -1.8 0.3 -2.8 -1.2 -1.4 -2.5 -0.5 0.5 -0.9 1.1 -0.3 0.4 -3.4 -2.2 -1.6 -3.8 -1.2 -0.4 -0.9 0.5 -1.9 -1.4 -1.9 0.5 -1.8 -1.9 -1.2 -1.7 -2.5 -1.1 -0.5 -5.6 0.3 -0.9 -0.5 -2.8 -2.1 -0.2 -2.8 -0.7 -0.8 -1 -0.1 -0.9 0.4 -0.7 0.5 -0.2 0.9 -2.8 -1.2 -2.8 0.3 -1.8 2 -1 0.2 -0.9 -0.3 -0.9 -1 -3.7 -0.6 -1.5 -1.2 -3.2 -1.6 -2.8 -0.3 -1.8 1 -2.8 -0.7 -2.8 0.2zM144.2 99.9l-0.9 1 0.9 0.4 0.4 -0.4 -0.1 -0.9 -0.3 -0.1zM146 111.9l-0.4 0.2 0.4 0.8 1 -0.8 -1 -0.2zM147 100.3l-0.7 0.6 0.1 0.9 2.4 2.3 0.7 -0.4 1.6 -2.8 -2.3 -0.9 -1.8 0.3zM162.7 149.1l0.8 0.2 -0.8 -0.2zM183.1 151.1l0.2 0 -0.2 0z" fill="#00c0ff" stroke="#1a1a1a" stroke-width="0.7" stroke-linejoin="round" fill-rule="evenodd"/><path d="M165.5 44.2l2.8 -0.5 12.1 -0.1 4.6 0.5 6.5 -0.8 9.3 1.7 12 4.5 2.8 2.1 6.5 2.6 7.4 4.9 4.7 3.6 2.8 1.5 4.6 5.5 3 2.4 1.6 3.7 3.2 3.7 1.3 2.8 4.8 6.5 2.5 5.6 2.5 1.9 1.2 4.6 0.1 1.9 2.2 1.8 1.2 4.7 2.2 4.6 0.8 3.7 -0.3 2.8 1.7 10.3 -0.8 8.3 0.3 2.8 -0.7 4.7 0.3 3.7 -4 10.2 -8.2 17.6 -2.7 3.8 -2.2 1.9 -2.6 3.2 -7.4 6.6 -2.4 3.2 -2.2 1.8 -11.2 6.8 -3.7 1.7 -8.3 2.7 -10.2 2.4 -8.4 0.2 -13.9 -0.9 -4.7 -1.8 -10.2 -2.6 -2.7 -1.1 -2.8 -1.9 -2.8 -0.7 -2.8 -1.5 -2.8 -0.9 -1.8 -1.3 -4.3 -2 -4.1 -3.6 -1.8 -0.7 -2.8 -0.4 -2.8 -1.9 -2.8 -0.5 -11.1 -9.3 -1.9 -2.2 -5.6 -4.8 -7.7 -13.8 -0.7 -2.8 -1.8 -2.6 -2.2 -6.7 -1.2 -4.6 -0.9 -9.3 0.3 -2.8 -0.8 -2.8 -0.3 -2.8 0.6 -2.8 0.6 -6.5 0.9 -2.8 0.3 -4.6 1.8 -7.3 5.9 -14.1 6.5 -8.4 1.6 -3.7 2.4 -2.8 10.2 -9.3 2.2 -2.6 3.7 -3 3.4 -1.8 3.4 -2.8 5.3 -2.4 2.7 -1.7 3.7 -1.5 12.1 -3.7zM173.9 78.6l-6.5 1.9 -1 0.9 -1.2 2.8 -0.6 0.5 -2.8 0.6 -1.9 -0.3 -2.7 0.6 -2.8 0.1 -1.9 1.8 -4.7 1.3 -1.8 2 -1.8 0 -4.7 2.7 -1.8 0.4 -0.4 0.5 2 1.9 0.2 0.9 -1.2 1.8 -0.1 2.8 -1.5 1.5 -1.8 0.4 -1.9 1 -0.8 1.8 0.4 1.8 1.4 1.6 0.9 4 -0.9 1.2 -2.1 0.7 0.7 1.8 0.1 2.8 -0.5 1.9 0.8 3.3 1.2 1.3 -1.2 0.5 -1.8 -0.3 -1 0.2 -0.9 1.5 -0.1 0.9 1 1 2.8 0.4 3 3.3 0.3 0.9 -0.8 1.9 0.3 0.8 2.1 1 0.2 1 -0.4 3.3 -0.4 -0.5 -1.5 -0.4 -0.6 0.4 -0.3 0.9 2.6 2.8 -0.5 2.8 0.9 3.7 1.6 0.5 1 -0.3 -0.3 -2.1 1.2 -0.4 3 1.3 2.6 2.2 4.6 1 2.4 2.4 0.4 2.2 1.9 1.6 0.9 1.2 0.9 0.5 1.8 -0.4 1.9 -2.1 0.9 -0.3 1.9 2.2 1.8 1 2.8 -1.6 1.9 0.2 2.8 -0.7 0.9 0.5 1.8 2.1 1.9 -0.3 0.9 -0.7 0.6 -1.6 -1.3 -1.9 0.7 -0.9 1 -0.2 1.8 1.7 3.7 0.1 1 1.4 2.7 1.3 2.8 0.6 4.7 -0.3 1.8 0.4 1.5 -0.4 0.4 -0.7 0.8 -0.2 -0.5 -0.9 1 -1 3.3 -0.4 1.9 0.4 2.8 2.6 0.9 0.3 2.8 -1.4 3.7 -0.8 1.8 0.3 4.7 -0.6 1.8 -1 1 0 1.8 0.9 0.9 0 1.9 -1.9 1.9 -0.8 0.9 0 1.8 0.9 1 -1.6 0.9 -0.2 1.9 0.7 1.8 -1.2 0.5 0.1 1.4 2 0.9 0.5 0.9 0 0.6 -0.6 0.2 -1.9 -0.9 -2.8 -1.2 -1.9 0.1 -0.9 2.1 -1.7 1.9 -0.5 0.5 -1.5 -0.3 -2.8 1.7 -1.1 1.8 -2.1 1.6 -4.2 -1.8 -1.9 -0.6 -2.8 0.6 -1.8 2.2 -1.9 0.2 -0.9 -1.7 -2.8 -0.3 -1.9 1.8 -1.8 0.3 -1 -0.2 -1.8 0.6 -1 3.8 -4.4 1.9 -0.3 0.4 -0.8 0.1 -1 -0.4 -0.9 -1.1 -0.2 -0.8 -0.7 0.7 -3.7 -0.8 -1.6 -0.9 -0.4 -0.9 0.1 -2.1 0.9 -3.5 0.7 -3.7 -2.1 -5.1 -6.9 -1.4 -3.3 -3.5 -3.3 -0.2 -0.9 0.3 -1.8 -0.3 -0.7 -1 -0.4 -1.8 0.9 -3.7 -1.3 -0.9 -0.4 -1 -2.8 -0.9 -0.7 -2.8 0.5 -7.4 -3.3 -2.8 0.7 -2.8 -0.9 -3.7 1.6 -13.9 -1.4 -1.9 0.6 -1.1 2 -2 0.9 -1.5 0.3 -2.8 -0.5 -1.9 0.3 -2.7 -1.3 -1.9 0.4 -0.9 -0.6 -1 -1.6 -2.7 -0.7zM147 81.2l0 0.4 0 -0.4zM203.6 161.3l-1.9 1 0.5 0.9 3.2 0.9 0.8 -0.9 -1.7 -1.6 -0.9 -0.3zM136.1 122.3l0.9 0 0.3 0.9 -0.6 0.5 -0.5 -0.5 -0.1 -0.9zM243.5 142.8l0.9 -0.7 0.9 0.5 0.3 2 -1.5 0 -0.8 -0.9 0.2 -0.9zM229.5 156.7l0.9 0.9 -0.9 0.8 -1.3 -0.8 1.3 -0.9zM165.7 159.5l1.1 0 -1.1 0z" fill="#00ffff" stroke="#1a1a1a" stroke-width="0.7" stroke-linejoin="round" fill-rule="evenodd"/><path d="M167.6 46l4.4 0.1 1.9 0.5 3.7 -0.5 3.7 1.4 7.4 -0.3 2.8 -0.8 4.6 0.2 2.8 0.3 2.8 1.9 2.8 0.4 2.8 2.3 3.7 0.8 2.8 3.4 1.8 0.7 2.8 -0.3 6.5 3.7 0.9 2.4 1 1.1 1.8 1.5 3.2 0.8 3.5 3.7 0.9 1.8 -0.6 3.8 -0.5 0.8 -0.9 0.1 -0.8 -2.8 -1.1 -0.2 -4.6 1.4 -0.7 0.7 -0.5 1.8 -1.7 1 -1.4 -1 -0.8 -2.8 -0.5 -0.2 -2.8 0 -2.7 -1.3 -1.9 -1.6 -2.8 0.9 -0.9 -0.2 -2.8 -2.2 -1.9 -0.3 -1.2 -1.6 0.3 -2.9 -0.9 0.4 -0.4 0.7 0.1 1.8 -0.4 1 -7.7 1.5 -2.7 1.3 -1.8 -0.1 0.3 -1.8 -0.3 -0.9 -2.9 -1.7 -0.7 0.7 0.8 1.9 2.7 1.8 -2.8 2.3 -0.9 -0.3 -2.8 -2.5 -7.4 -0.1 -7.4 2.4 -1.9 -0.4 -0.4 1.4 -0.9 1 -3.3 1 -1 -0.1 -3.7 -3.3 -2.8 -0.3 -0.3 -1.1 0.6 -1.8 -0.3 -1.3 -1.8 0.9 -3.7 -0.5 -2.8 1.6 -3.7 -2.7 -1 -0.2 -0.5 0.3 -4.1 5.4 -2.8 0.5 -0.8 0.6 -0.2 1 1.2 0.9 0.3 0.9 -2.3 2.8 -2.4 0.9 -0.4 1 0.2 1.8 1.2 1.9 -0.7 2.8 -2.6 2.1 -4.6 1 -4.1 5.3 1.5 5.5 -5.8 6.8 -0.1 0.7 1.8 4.6 1.8 1.9 0.4 2.8 -0.6 1.8 0.9 5.6 -0.5 1.5 -1.3 1.3 0.3 1.9 -0.7 2.8 0.3 1.8 -1.8 1.9 0 0.9 1.4 2.6 0.9 0.5 1.9 -0.1 1.3 0.7 0.1 1 -0.5 1 -0.9 0.1 -1.9 -0.7 -0.2 0.5 0 0.9 1.1 2.1 1 0.6 1.8 -0.2 0.5 0.3 1.4 2.1 2.8 -1 1.1 0.8 -1.1 1.4 -1.9 0 -0.5 0.4 0.1 0.9 2.1 1 1.1 1 1.8 0.4 4 4.2 2.5 1.2 5.6 0.5 0.9 -0.1 1 -0.9 0.9 -0.1 1.9 1 0.7 1.2 -0.5 2.7 1.6 1.7 0.3 2.1 0.6 0.9 2.8 1.1 2.8 2.4 0.9 0.2 1.9 -1.2 2.8 0.3 1.2 -0.9 2.5 -0.4 3.7 -2.4 1.9 -0.2 3.7 0.6 3.7 2.4 0.9 0.2 1.9 -0.6 0.9 0.3 2.8 2.5 1.9 0.3 2.7 1.6 4.7 -1 0.9 -0.7 1.4 -1.7 0.4 -2.1 2.8 0.7 1.9 -0.3 2.8 2.1 1.8 0.1 4.7 -1.5 2.7 -1.4 2.8 -0.2 3.7 1 2.8 1.6 1.1 -0.9 0.8 -2.3 1.8 -1.4 0.8 0.9 -0.6 1.8 3.5 2.3 1.3 -0.4 -1.1 -3.7 1.7 -0.9 2.8 0.1 2.8 -2.2 0.9 0.1 1.6 1 3 0.7 1 0 1.8 -1.4 1.9 -0.4 4.6 1.3 1.9 0.2 0.7 -0.4 -0.5 -2.8 0.5 -0.9 1.1 -1.9 1.9 -1.7 0.3 -2 1.4 -1.9 -1.1 -3.7 -0.1 -1.8 0.4 -0.7 2.9 -1.2 -0.2 -0.9 -2.2 -1 -0.9 -0.9 0.5 -0.9 2.7 -2.5 1.9 -0.8 1.8 0.8 0.9 2.4 0 1 -0.9 1 -1.5 0.9 -0.6 0.9 1 1.9 0.2 6.5 -2.1 1.8 -0.7 4.7 -2.1 1.8 -0.6 1 -0.3 1.8 -0.7 0.7 -1.9 0.4 -0.4 0.8 0.5 5.6 -1.7 3.7 -1.2 1.6 -7.8 7.7 -5 3.7 -2.1 3.7 -3.6 3.6 -9.3 5.2 -7.4 1.8 -5.6 1.9 -2.8 0.4 -4.6 2 -5.6 0.1 -5.5 -1.4 -2.8 0.6 -4.7 0 -5.5 -1.5 -2.8 -1.4 -1.9 -0.1 -2.8 -1.1 -1.8 -0.2 -5.1 -3.4 -1.4 -1.8 -1.9 -0.3 -1.8 0.1 -4.7 -1.3 -4.5 -2.2 -0.8 -1 -0.7 -1.8 -2.2 -1.9 -1 -1.9 -1 -0.5 -3.7 -0.4 -2.8 -2.3 -2.8 0.9 -3.7 -1.4 -2.8 -0.5 -1.8 -2 -2.8 -1.2 -1.1 -2.8 -2.6 -1.3 -1.9 -1.8 -3.7 -2.6 -3.5 -4.5 -1 -2.8 -1.9 -1.9 -0.5 -0.9 -1.4 -6.7 -5.2 -9.1 -0.7 -7.4 -0.8 -2.8 0.3 -2.8 -0.2 -3.7 -1.6 -4.7 1.6 -8.4 1.1 -2.7 0.1 -3.8 1.6 -5.5 0.3 -3.8 1.3 -3.7 3.4 -6.5 0.9 -3.7 4.4 -5.2 2.2 -1.3 1.5 -3.9 2.8 -3.2 9.2 -7.9 1.9 -3.3 1.3 -1.3 8.9 -6.4 5.6 -2.4 3.7 -2.2 2.8 -1.2 5.5 -0.9 2.8 -1.4 4.9 -1.3zM186.9 64.3l0 1.2 0.9 0.8 0.7 -1.7 -0.7 -0.9 -0.9 0.6zM116.3 124.1l-1 1 1 0.4 0.6 -0.4 -0.6 -1zM128.4 83l-0.9 0.4 -1.5 1.7 0.3 0.9 2 0 1 -0.9 0.5 -0.9 -0.5 -0.7 -0.9 -0.5zM166.4 70.7l-0.3 0.4 0.3 0.5 0.3 -0.5 -0.3 -0.4zM167.4 71.8l-0.4 0.3 0.4 0.4 0.5 -0.4 -0.5 -0.3zM182.1 73.9l1 -0.5 1.9 0.7 0.5 0.8 0 0.9 -0.5 0.8 -0.9 0.2 -1.9 -1.2 -0.9 0 -0.6 -0.7 1.4 -1zM140 74.9l0.8 0 0.5 0.9 -0.8 1.1 -1.2 -1.1 0.7 -0.9zM244.9 85.1l0.4 -0.8 4 1.7 1.6 3.4 1 1.3 0.2 1.8 -0.7 1 -1.4 3.8 -1 0.3 -1.7 -2.3 -1.6 -3.7 0.1 -0.9 -1.4 0.1 -0.8 -1.1 -0.3 -0.9 1.3 -1.8 0.3 -1.9zM259.3 121.4l1.8 -0.9 2.9 1.8 0.5 0.9 0 2.8 1.2 1.9 0.6 1.8 -0.6 2.6 -0.9 0.7 -2.8 0.4 -0.9 -0.3 -0.5 -0.6 -0.6 -4.6 -1.6 -3.7 0.2 -1.9 0.7 -0.9zM123.2 139l2.5 0 0.9 1 -0.4 0.9 -1.5 0.4 -0.9 -0.4 -0.7 -0.9 0.1 -1z" fill="#00ffc0" stroke="#1a1a1a" stroke-width="0.7" stroke-linejoin="round" fill-rule="evenodd"/><path d="M168.8 48.8l1.4 0.1 1.5 0.9 4 3.7 1.9 -0.4 0.3 0.4 -0.1 0.9 -3 6.7 -0.9 0.5 -1.9 0 -1.8 1 -1 0 -1.8 -1 -2.8 2 -1.9 0.2 -2.8 -1.9 -1.8 -0.2 -4.2 -1.7 -0.9 -2.8 -1.2 -1.9 0.3 -0.9 1.1 -0.9 8.6 -2.5 1.9 -1.4 2.7 0.5 2.4 -1.3zM192 49.8l1.4 -0.3 1.1 0.3 1 0.9 -0.3 0.9 -4.9 0.9 -0.5 -0.9 2.2 -1.8zM108.4 100l0.5 -0.8 0.9 -0.1 0.5 0.9 0.4 1.8 -0.9 1.7 -0.9 -0.1 -0.9 -0.6 -0.4 -1 0.8 -1.8zM104.5 121.4l0.7 -0.6 1.3 0.6 -0.4 1.7 -0.9 1.4 -0.9 -0.9 0.2 -2.2zM112.4 154.8l1.1 -0.3 0.4 0.3 -0.4 1.1 -0.9 0.2 -0.4 -0.3 0.2 -1zM114.2 160.4l1.2 -0.7 0.9 0.1 1.9 0.7 1.8 1.5 1.9 0.2 0.9 -0.1 2.8 -1.8 3.7 1.7 1.9 0.2 4.6 2 1.9 -0.1 1.8 0.8 1.1 1.1 0 0.9 -1.2 1.9 -0.2 0.9 -1.4 1.9 0.1 0.9 0.8 0.9 -0.3 1 -0.7 0.2 -1.9 -0.4 -0.6 0.2 -1.7 2.8 -1.4 0.3 -8.3 -2.7 -1.9 -1.5 -1.9 -2.4 -2.4 -1.2 -0.8 -0.9 -0.7 -1.9 -2.6 -3.1 -0.7 -1.5 0.2 -0.9 1.2 -1zM212.9 174.4l1.8 -0.8 5.6 0.8 1.8 0.8 1.9 0.3 0.9 0.6 2.8 3 0.9 0.4 1.9 -0.3 1.8 3 4 4.3 0.3 0.9 -0.6 0.9 -1.7 1 -0.1 0.9 0.8 0.9 -0.1 0.9 -0.8 2.8 -0.8 1.2 -7.5 3 -3.4 -1.4 -2.1 0.1 -1 0.9 -0.5 1.8 -1.3 0.7 -1.9 -0.3 -5.5 0.5 -2.8 -0.3 -1 0.7 -0.1 2.4 -3.6 2.9 -0.9 -0.1 -2.8 -1.6 -0.9 -2.1 -4 0 -2.5 -0.8 -0.1 0.8 -1.8 1.2 -1.8 0.2 -4.7 -3.3 0.1 -0.9 1.8 -0.7 2.8 0.8 1.8 0 1.9 1.7 0.9 -0.7 -0.1 -2.9 1 -1 0.1 -0.9 -2.8 -3.7 0.5 -1.9 -0.5 -1 -1.2 -0.8 -2.5 -0.4 -1.4 0.4 -0.7 0.9 2.7 3.7 1.1 2.8 -0.5 0.9 -3.1 0.5 -0.8 -0.5 1.3 -0.9 0.4 -1 -0.9 0.2 -0.9 0.7 -1.9 -0.8 -1.8 -1.6 -1 0 -0.9 1.6 0.3 0.9 1.7 0.9 1.3 2.8 -5.2 2.8 -1.5 -0.9 -0.3 -1.9 -1.9 0.7 -0.9 -0.2 -5 -7 -2.6 -1.9 -0.7 -2.2 -1 -1 -0.9 -0.2 -2.8 0.2 -1.8 1.6 -1.9 0.3 -2.1 -3.3 -1 -2.8 1.4 -1.9 0.2 -0.9 1.2 0 0.9 2.8 -0.1 1.9 1.4 1.2 0.7 -0.3 0.3 -0.9 -0.2 -1.9 0.9 -1.9 -0.8 -0.9 1 -1.8 4.5 -1.9 1 -2 2.8 -0.3 2.8 -1.3 3.7 0.5 2.7 0.9 1.9 -0.5 1.9 1.2 2.7 1.2 5.6 5.6 1.9 0.6 0.9 -0.9 0.2 -3.1 0.7 -0.5 2.8 0.4 0.9 -0.7 1 0 2.7 0.7 1.5 -0.9 1.3 -1.5 4.7 -0.8 3.7 -1.2 1.9 -1.1zM175.7 193.3l-0.4 0.6 0.4 0.7 0.4 -0.7 -0.4 -0.6zM150.4 180l0.3 -0.9 0.9 -0.1 0.6 1 -0.6 0.7 -1.2 -0.7z" fill="#00ff80" stroke="#1a1a1a" stroke-width="0.7" stroke-linejoin="round" fill-rule="evenodd"/><path d="M170.6 55.3l0.5 -0.4 0.1 0.4 -0.1 0.3 -0.5 -0.3zM213.3 178.1l1.4 -0.6 4.6 0.2 3.7 1.8 1.1 1.4 1.2 3.7 -0.7 1.9 -3.9 1.8 -2.3 4 -2.2 0.7 -1.5 1.8 -0.9 0.6 -1.9 -0.6 -0.9 -1.9 -0.9 -0.4 -1.9 1.5 -0.9 -0.3 -1 -1.3 -1.8 0.8 -3.7 0.6 -0.7 -0.8 0.2 -1 1.4 -1.5 1.6 -3.1 0.8 -2.8 0 -1.9 5 -3.7 2.8 -0.2 1.4 -0.7zM172.2 180.9l1.7 -0.1 0.5 1 -0.5 4.1 -1 1.3 -3.7 -0.5 -0.6 -1.2 1.6 -3.4 2 -1.2z" fill="#00ff00" stroke="#1a1a1a" stroke-width="0.7" stroke-linejoin="round" fill-rule="evenodd"/><path d="M211.6 183.7l1.2 -0.8 1.4 0.8 0 0.9 -0.9 0.9 -1.4 0.6 -0.7 -0.6 0.4 -1.8z" fill="#80ff00" stroke="#1a1a1a" stroke-width="0.7" stroke-linejoin="round" fill-rule="evenodd"/></g><ellipse cx="185" cy="128.8" rx="92.8" ry="93" fill="none" stroke="#101010" stroke-width="1"/><path d="M184.79999999999995 0V249M0 129.2H335M151 249L335 73" stroke="#b0433a" stroke-width="0.9" fill="none" opacity="0.85"/><path d="M213 192.6l4.6 5h-9.2z" fill="#fff" stroke="#000" stroke-width="0.7"/><path d="M208 198h10" stroke="#000" stroke-width="1.3"/><path d="M179.5 220.6l4.6 -5h-9.2z" fill="#000" stroke="#fff" stroke-width="0.7"/><path d="M174.5 215.4h10" stroke="#fff" stroke-width="1.1"/><rect x="318" y="90" width="12" height="23.5" fill="#f4f4f2"/><path d="M321.8 97.05l2.2 -2.6l2.2 2.6z M321.8 106.45l2.2 2.6l2.2 -2.6z" fill="#4a4a4a"/><rect x="320" y="114" width="8.5" height="8.3" fill="#ff0000"/><rect x="320" y="122" width="8.5" height="8.3" fill="#ff4000"/><rect x="320" y="130" width="8.5" height="8.3" fill="#ff8000"/><rect x="320" y="138" width="8.5" height="8.3" fill="#ffc000"/><rect x="320" y="146" width="8.5" height="8.3" fill="#ffff00"/><rect x="320" y="154" width="8.5" height="8.3" fill="#c0ff00"/><rect x="320" y="162" width="8.5" height="8.3" fill="#80ff00"/><rect x="320" y="170" width="8.5" height="8.3" fill="#00ff00"/><rect x="320" y="178" width="8.5" height="8.3" fill="#00ff80"/><rect x="320" y="186" width="8.5" height="8.3" fill="#00ffc0"/><rect x="320" y="194" width="8.5" height="8.3" fill="#00ffff"/><rect x="320" y="202" width="8.5" height="8.3" fill="#00c0ff"/><rect x="320" y="210" width="8.5" height="8.3" fill="#0080ff"/><rect x="320" y="218" width="8.5" height="8.3" fill="#0040ff"/><rect x="320" y="226" width="8.5" height="8.3" fill="#0000ff"/><rect x="320" y="234" width="8.5" height="8.3" fill="#000080"/><path d="M320 122h3.8M320 130h3.8M320 138h3.8M320 146h3.8M320 154h3.8M320 162h3.8M320 170h3.8M320 178h3.8M320 186h3.8M320 194h3.8M320 202h3.8M320 210h3.8M320 218h3.8M320 226h3.8M320 234h3.8" stroke="#a04030" stroke-width="0.6" opacity="0.8"/><text x="317" y="125.6" font-family="Liberation Sans,sans-serif" font-size="10.5" font-weight="normal" fill="#2a2ae0" text-anchor="end" >3</text><text x="317" y="165.6" font-family="Liberation Sans,sans-serif" font-size="10.5" font-weight="normal" fill="#2a2ae0" text-anchor="end" >2</text><text x="317" y="205.6" font-family="Liberation Sans,sans-serif" font-size="10.5" font-weight="normal" fill="#2a2ae0" text-anchor="end" >1</text><text x="317" y="245.6" font-family="Liberation Sans,sans-serif" font-size="10.5" font-weight="normal" fill="#2a2ae0" text-anchor="end" >0</text><text x="2.4" y="234.3" font-family="Liberation Sans,sans-serif" font-size="9.5" font-weight="normal" fill="#3434e6" text-anchor="start" >X=</text><text x="24.2" y="234.3" font-family="Liberation Sans,sans-serif" font-size="9.5" font-weight="normal" fill="#3434e6" text-anchor="start" >0.0mm</text><text x="2.4" y="245.5" font-family="Liberation Sans,sans-serif" font-size="9.5" font-weight="normal" fill="#3434e6" text-anchor="start" >Y=</text><text x="24.2" y="245.5" font-family="Liberation Sans,sans-serif" font-size="9.5" font-weight="normal" fill="#3434e6" text-anchor="start" >0.0mm</text></svg></div></div><div class="win" style="left:696px;top:58px;width:277px;height:225px"><svg class="ti" viewBox="0 0 11 11" style=""><rect width="11" height="11" rx="0.8" fill="#1a5fb4"/><ellipse cx="5.5" cy="4.6" rx="4.2" ry="3.6" fill="none" stroke="#9cc3ee" stroke-width="0.9"/><ellipse cx="5.5" cy="4.4" rx="2.3" ry="2.1" fill="#fff"/><rect x="1.2" y="8.6" width="8.6" height="1.3" fill="#cfe2f7"/></svg><div class="tt" style="top:5.5px;letter-spacing:0.177px;left:18.6px">干渉縞 [File A]</div><div class="wb" style="left:203.5px"><svg viewBox="0 0 18 9"><rect x="5.3" y="4.6" width="7.4" height="2.9" rx="0.7" fill="#a0a0a0" stroke="#fff" stroke-width="0.8"/></svg></div><div class="wb" style="left:225.5px"><svg viewBox="0 0 18 9"><rect x="5.6" y="1.8" width="6.8" height="5.2" rx="0.5" fill="#fdfdfd" stroke="#8a8a8a" stroke-width="1"/><rect x="7.3" y="3.6" width="3.4" height="1.8" fill="#4b5a78"/></svg></div><div class="wb cl" style="left:247.5px"><svg viewBox="0 0 18 9"><path d="M6.3 2.3L11.7 6.7M11.7 2.3L6.3 6.7" stroke="#fff" stroke-width="3.3" stroke-linecap="square"/><path d="M6.3 2.3L11.7 6.7M11.7 2.3L6.3 6.7" stroke="#8c8c8c" stroke-width="1.9" stroke-linecap="square"/></svg></div><div class="cnt" style="left:4px;top:19px;width:266px;height:200px;background:#222"><svg width="266" height="200" viewBox="0 0 266 200" style="position:absolute;left:0;top:0;"><defs><filter id="fAb" x="-5%" y="-5%" width="110%" height="110%"><feGaussianBlur stdDeviation="0.8"/></filter><radialGradient id="fAg" cx="0.55" cy="0.5" r="0.75"><stop offset="0" stop-color="#3d3d3d"/><stop offset="0.6" stop-color="#333"/><stop offset="1" stop-color="#1c1c1c"/></radialGradient><linearGradient id="fAl" x1="0" y1="0" x2="0" y2="1"><stop offset="0" stop-color="#262626"/><stop offset="0.55" stop-color="#353535"/><stop offset="1" stop-color="#484848"/></linearGradient><linearGradient id="fAr" x1="0" y1="0" x2="0.25" y2="1"><stop offset="0" stop-color="#2b2b2b"/><stop offset="0.5" stop-color="#3a3a3a"/><stop offset="1" stop-color="#505050"/></linearGradient><clipPath id="fAc"><ellipse cx="149" cy="104" rx="76.2" ry="78"/></clipPath></defs><rect width="266" height="200" fill="url(#fAl)"/><rect width="37" height="200" fill="#141414" opacity="0.75"/><path d="M206 0L266 0L266 70z" fill="#1a1a1a" opacity="0.7"/><path d="M236 200L266 200L266 176z" fill="#1c1c1c" opacity="0.8"/><ellipse cx="149" cy="104" rx="99.06" ry="101.4" fill="url(#fAr)" opacity="0.9"/><ellipse cx="149" cy="104" rx="99.06" ry="101.4" fill="none" stroke="#262626" stroke-width="1.4" opacity="0.6"/><ellipse cx="149" cy="104" rx="88.01100000000001" ry="90.09" fill="none" stroke="#636363" stroke-width="3.4" stroke-dasharray="2.8 3.4" opacity="0.8"/><ellipse cx="149" cy="104" rx="78.486" ry="80.34" fill="none" stroke="#2a2a2a" stroke-width="2" opacity="0.7"/><ellipse cx="149" cy="104" rx="76.2" ry="78" fill="#272727"/><g clip-path="url(#fAc)"><path d="M75.4 10.4l3.6 0 -0.5 15.6 -2.3 14 -2.2 18 2 13.2 -1.7 14.9 2.2 13.2 0.5 22.6 -1.9 12.5 -3.7 14.8 -0.7 13.3 -4.6 22.6 -0.3 5.5 1.1 7 -5.7 0 -0.5 -6.2 0.4 -4.7 5.2 -25 1.4 -14 4 -15.6 1.6 -9.4 -0.7 -22.6 -2.5 -14 1.5 -14.1 -2 -9.3 -0.3 -3.9 3.3 -20.3 2.6 -12.5 0.2 -15.6zM82.7 10.4l3.9 0 0 2.3 -0.2 6.3 -2.5 21.8 -0.8 19.5 0.1 11.7 -0.4 10.2 2.1 13.2 -0.9 12.5 0 13.3 -1.5 21.8 -3.1 11.7 -3 21.8 -0.1 9.4 1.4 11.7 -5.6 0 -1.2 -8.6 0.2 -6.2 3.4 -19.5 0.9 -12.5 2.9 -11.7 2.3 -17.9 0 -24.2 -2 -12.5 1.2 -12.5 -1.1 -14.8 1.3 -16.4 2.1 -17.1 0.6 -13.3zM90.6 10.4l3.9 0 0.2 4.7 -0.3 5.4 -2.2 11 -0.8 7 0.1 18.7 -1 14 0.2 8.6 2.1 12.5 -1.6 16.4 0.5 13.2 -0.6 11 1.1 11.7 -0.9 4.6 -3.2 9.4 -0.9 7.8 0.2 20.3 1.2 4.7 2.8 6.2 -7.3 0 -2.3 -11.7 -0.3 -12.5 1.7 -14.8 3.7 -10.9 0.7 -3.9 -0.7 -10.9 0.7 -11.7 -0.1 -11.7 1.5 -15.6 -0.3 -3.9 -2 -9.4 0.1 -13.3 0.7 -10.9 0.3 -16.4 0.9 -9.3 2 -12.5 -0.1 -7.8zM98.2 10.4l3.4 0 0.1 3.9 -0.5 7.8 -2.7 13.3 -0.6 6.2 1.1 17.9 0.1 19.5 1.1 11.7 -0.5 11.7 0.6 11 -0.4 28.8 -1.9 17.2 2.9 17.9 1.4 12.5 1.7 7.8 -5.7 0 -2.9 -7.8 -0.8 -3.9 0 -10.1 -1.5 -13.3 0.3 -4.7 2.3 -9.8 0.5 -5 -0.7 -10.1 0.5 -11.7 -0.7 -14.9 1.1 -14.8 -1.8 -14.8 0.7 -18.7 -0.7 -16.4 0.8 -7.8 2.6 -13.3 0.2 -10.1zM104.9 10.4l3.2 0 -0.2 8.6 -2.2 16.4 -0.3 6.2 2.5 35.3 2.5 17.7 0.6 7.8 -0.3 5.5 -2.1 10.9 0.6 13.3 -2.4 13.2 -0.3 7.1 0.7 5.4 2.9 10.9 0 12.5 0.5 5.5 1.3 4.7 2.7 6.2 -5.5 0 -2.2 -8.6 -1.6 -16.4 -2.8 -14.8 0.1 -7 1.8 -17.2 -0.1 -13.2 1.3 -12.5 -2.1 -27.3 -0.6 -19.5 -1.5 -19.5 0.4 -5.5 2.7 -14.8 0.4 -10.9zM111.3 10.4l3.4 0 0.1 5.5 -1.4 16.3 0.3 5.5 1.5 11.7 -1 15.6 1 6.2 4 11.7 0.8 5.5 -0.5 15.6 -3.5 14 1.3 15.6 -2 12.5 -0.1 3.9 0.7 3.9 4.6 14.8 0.2 3.9 -0.9 7.8 0.2 2.8 1.2 2.7 3.8 6.2 1.2 5.5 -5.4 0 -1.3 -3.1 -3.3 -5.1 -1.2 -2.7 -0.7 -5.5 1.2 -9.3 -0.1 -3.9 -0.9 -4.7 -3.1 -8.6 -0.7 -3.9 0.2 -5.5 2.7 -12.4 -0.1 -3.9 -1.1 -7.1 0.1 -3.9 2.7 -11.7 0.5 -6.2 -0.8 -11.7 -3.4 -15.6 -1 -8.6 0 -14 -0.9 -14.1 1.7 -18.7 0 -7zM118.3 10.4l3.6 0 -0.9 22.6 0.6 4.7 2.3 9.4 0.4 3.9 -0.4 3.9 -1.8 7 0 4.7 1 3.9 4.2 10.1 1.1 6.2 -1.6 20.3 -3.4 13.3 0.7 19.5 -0.4 11.7 1.7 6.6 5 9 1.6 3.9 3.8 20.3 0.5 6.2 -5.3 0 -0.6 -6.2 -3.1 -10.2 -1 -10.1 -5.4 -14.1 -1.3 -6.2 1 -15.6 -1 -16.4 0.5 -3.1 3.1 -10.1 1.3 -18 -0.8 -5.4 -4.4 -11 -1.4 -6.2 0.1 -3.9 1.8 -10.1 -2.7 -18 1.2 -22.6zM125.2 10.4l3.1 0 0.1 10.9 2.5 16.4 1.3 13.3 -1.1 16.3 4.5 21.1 -0.1 3.9 -1.4 9.4 -0.9 14 -1.5 12.5 0.8 21 1.5 5.5 5.6 10.1 2.4 6.3 1.6 6.2 3.7 20.3 -5.1 0 -5.3 -27.3 -2.4 -5.4 -4.9 -7.9 -1.6 -5.4 -0.7 -26.5 2.8 -15.6 1.9 -21.1 -1 -7 -3.8 -11.7 -0.8 -3.9 0.2 -3.9 1.6 -7 0.3 -3.9 -3.3 -19.5 -0.3 -10.2 0.3 -10.9zM131.4 10.4l3.4 0 0.3 9.4 3.8 14 0.8 22.6 -0.1 15.6 1 6 3 8.8 0.9 3.9 -0.2 3.9 -2.6 8.6 -0.7 6.3 1.6 37.4 1.7 6.2 5.5 13.3 4.2 12.5 1.8 8.6 0.9 10.1 -4.7 0 -2.8 -17.9 -1.3 -5.5 -2.8 -7.8 -6.1 -13.3 -1.6 -6.2 -0.7 -17.9 0.6 -21.9 0.5 -5.4 1.9 -8.6 0.1 -3.1 -4.3 -19.5 -0.2 -5.5 0.6 -10.1 -0.5 -18 -3.7 -17.1 -0.3 -9.4zM138.4 10.4l3.7 0 0.4 9.4 3.4 14 0.8 11 1.4 9.3 0.5 17.9 4.3 19.5 -0.3 7 -3 9.4 -1 4.7 -0.4 4.7 0.4 4.6 2.5 11 1.2 11.7 1.2 5.4 6.3 21.1 5.8 11.7 1.7 4.7 0.5 4.6 -0.3 5.5 -5.7 0 0.3 -7 -0.8 -4.7 -11.8 -32 -1.8 -7 -0.6 -12.5 -2 -12.5 -0.3 -7.8 0.7 -7 3.2 -10.1 0.4 -4.7 -0.8 -4.7 -3.3 -9.3 -1 -4.7 -0.3 -5.5 0.2 -10.9 -1 -10.9 -0.2 -10.9 -0.6 -3.9 -3.3 -11.7 -0.4 -9.4zM145.6 10.4l3.3 0 1.3 12.5 6.2 28.8 0.4 14.9 2.2 13.2 0.4 18 -0.8 4.6 -3.5 11.7 -0.3 3.9 0.3 3.2 9.9 31.2 3 13.2 5.7 12.5 4.9 14 1.4 5.5 -6.2 0 -0.7 -6.2 -1.9 -7.1 -1.9 -4.6 -4.4 -7.8 -1.5 -3.9 -2.6 -12.5 -3.4 -10.9 -2.4 -11.7 -3.1 -11 -0.4 -3.9 0.3 -3.9 4 -14 0.5 -7.8 -1.2 -11.7 -2.3 -12.5 -0.5 -15.6 -1.8 -9.3 -1.4 -10.2 -2.7 -11.7 -0.8 -10.9zM152.2 10.4l3.2 0 1.2 8.5 3 11 1.6 8.9 3.5 9.8 0.6 3.1 -1.1 13.3 2.2 14 -0.3 14.9 -1 9.3 -2.9 11.7 0.3 6.3 1.7 5.4 4.7 11.7 6.7 20.3 5.1 10.1 6.6 17.2 3 11.7 -4.9 0 -1.9 -7 -6.8 -18.7 -4.7 -10.2 -3.5 -12.5 -9.9 -28 -0.4 -3.9 0.3 -3.2 3.1 -10.9 1 -5.4 0.2 -18 -2.3 -14 0.2 -14.8 -3.2 -11 -3.7 -17.1 -1.6 -12.5zM158.8 10.4l3.6 0 1 6.2 3.9 11 2.2 10.9 3.3 8.6 0.9 3.9 0.1 3.9 -1.5 10.1 1.1 14.8 -1.4 34.3 0.7 9.4 5.2 17.2 4.6 13 2 4.1 4.5 7 2.1 4.7 5.5 16.4 3.2 11.7 -4.8 0 -1.7 -7.8 -2.1 -7 -5.6 -14.8 -6.8 -12.5 -11.3 -32.8 -0.6 -6.2 1.9 -14.1 1.1 -17.9 -0.1 -7 -1.7 -12.5 1.6 -13.3 -0.8 -3.9 -3.4 -8.5 -2 -11 -3.8 -11.7 -0.9 -6.2zM166.3 10.4l4.1 0 1 6.2 5 14.9 4.9 19.5 0.1 3.9 -1 10.9 -0.5 20.3 -1.4 17.9 0.4 7 1.3 7.6 5.1 17.4 6.3 15.6 5.1 10.1 12.3 35.9 -4.5 0 -10.5 -31.9 -6.9 -12.5 -5.3 -14.1 -4.5 -15.6 -1.3 -8.6 -0.6 -10.9 1.3 -21.8 -0.3 -17.2 1.2 -9.4 0 -3.9 -0.6 -3.9 -3.4 -10.1 -2.4 -10.1 -3.9 -11 -1 -6.2zM174.7 10.4l4.3 0 2.3 9.4 3.8 11.7 1.5 10.1 2.4 10.9 0.1 4.7 -1.9 27.3 -2.1 18.7 0.6 7.8 5.8 17.2 11.9 25.7 3.9 14.8 9 22.7 3.2 6.2 -5.7 0 -0.7 -1.6 -10.1 -27.3 -3.3 -11.7 -4.6 -9.3 -6.9 -16.4 -5.6 -17.9 -0.8 -5 -0.1 -5.2 1.6 -15.6 1.9 -34.3 -3.9 -20.3 -4.9 -14 -1.7 -8.6zM183.1 10.4l3.7 0 5.4 20.3 4.4 21.8 -0.3 22.6 -2.8 26.6 0.2 4.6 1.3 6.3 1.6 5.4 1.9 4.4 6.8 9.7 1.7 3.1 7.5 27.2 6.8 15.7 10.1 19.5 -5.9 0 -7.9 -15.9 -7 -16.9 -4.4 -16 -5.2 -12.8 -6.9 -12.5 -4.2 -12.5 -0.8 -4.7 -0.1 -3.9 2.8 -24.9 1.1 -23.4 -2.7 -13.3 -1.5 -10.1 -5.6 -20.3zM190.4 10.4l3.5 0 2.2 10.9 4.5 14.1 3.9 18.7 0.3 5.4 -0.5 12.5 -1.5 16.4 0.2 17.9 0.9 6.3 2.2 5.4 6.1 9.1 2.3 4.5 3.1 9.1 4.2 16.3 7.9 14.9 7.1 16.3 3.6 6.1 0 3.3 -3.1 0 -0.7 -0.9 -3.6 -6.1 -6.5 -13.3 -9.4 -20.3 -3.7 -17.1 -2 -6.3 -2.5 -4.6 -6.6 -9.1 -2.6 -6.5 -1.1 -6.3 -0.3 -5.4 0.8 -15.6 1.3 -11.7 0.2 -20.3 -4.4 -21.1 -3.4 -11.7 -2.4 -10.9zM197.5 10.4l3.6 0 2.4 10.9 4.9 13.2 4.5 19.6 0.1 8.6 -2.9 19.5 -0.4 4.6 1.8 13.3 0.3 8.6 0.5 3.1 1.4 3.9 5.9 10.1 9 18.8 1.5 3.9 3 10.9 7.3 15.7 0 10.9 -5.3 -13.4 -7.9 -15.6 -3.5 -11.7 -5.9 -14.8 -2.3 -4.7 -5.8 -9.3 -1.8 -4.7 -0.5 -3.9 -0.1 -8.6 -0.9 -12.5 2.4 -24.1 0 -7.1 -4.2 -20.2 -5 -14.1 -2.1 -10.9zM204.7 10.4l3.4 0 7.6 20.3 3.6 14.8 1.3 9.4 -0.3 13.2 -0.7 6.3 -2.6 10.1 0 5.5 3.3 10.9 3.1 12.5 11.7 26.7 2.8 7.6 2.5 10.1 0 9.3 -3.2 -7.7 -2.5 -10.2 -1.6 -4.6 -14.3 -28.9 -1.7 -4.7 -1 -9.3 -2.5 -10.2 -0.5 -4.7 0.5 -4.6 2.8 -14.1 0.7 -8.6 -0.2 -6.2 -4.8 -20.3 -4.7 -12.5 -2.7 -10.1zM211.6 10.4l3.8 0 8.9 17.9 1.4 3.9 0.5 3.9 1.4 35.1 -0.3 5.5 -1.9 9.4 0 3.9 1 4.6 7.7 24.2 6.3 15.8 0 10.5 -10.3 -26.3 -9 -28.1 -0.1 -5.4 2.3 -8.6 0.7 -5.5 -0.2 -16.3 -0.5 -7.1 -2.7 -16.3 -9 -21.1zM219.5 10.4l4.1 0 3.3 7 5 8.6 1.8 5.5 0.4 6.2 -0.9 14.8 1.4 18.7 -0.1 17.2 1.7 10.1 4.2 13.6 0 12 -6.5 -18.5 -2.7 -9.4 -1.1 -5.5 -0.1 -4.6 1.2 -14.1 -1.3 -19.5 0.5 -15.6 -0.3 -4.7 -1.5 -4.6 -4.5 -7.8 -4.6 -9.4z" fill="#6e6e6e" filter="url(#fAb)"/></g><ellipse cx="149" cy="104" rx="76.2" ry="78" fill="none" stroke="#222" stroke-width="1.2" opacity="0.8"/><path d="M147.70000000000005 0V200M0 104.4H266M73.39999999999998 200L266 22.5" stroke="#e0e0e0" stroke-width="0.9" fill="none"/><rect x="0" y="6.6" width="85.5" height="11" fill="#000"/><text x="7" y="15.2" font-family="Liberation Mono,monospace" font-size="9" font-weight="bold" fill="#00d000" text-anchor="start" >GFLR</text><text x="81.5" y="15.2" font-family="Liberation Mono,monospace" font-size="9" font-weight="bold" fill="#00d000" text-anchor="end" >2.86</text><rect x="0" y="18.5" width="85.5" height="11" fill="#000"/><text x="7" y="27.1" font-family="Liberation Mono,monospace" font-size="9" font-weight="bold" fill="#00d000" text-anchor="start" >GF3R</text><text x="81.5" y="27.1" font-family="Liberation Mono,monospace" font-size="9" font-weight="bold" fill="#00d000" text-anchor="end" >4.32</text><rect x="0" y="30.4" width="85.5" height="11" fill="#000"/><text x="7" y="39" font-family="Liberation Mono,monospace" font-size="9" font-weight="bold" fill="#00d000" text-anchor="start" >GF3D</text><text x="81.5" y="39" font-family="Liberation Mono,monospace" font-size="9" font-weight="bold" fill="#00d000" text-anchor="end" >2.20</text><rect x="0" y="42.3" width="85.5" height="11" fill="#000"/><text x="7" y="50.9" font-family="Liberation Mono,monospace" font-size="9" font-weight="bold" fill="#00d000" text-anchor="start" >GBIR</text><text x="81.5" y="50.9" font-family="Liberation Mono,monospace" font-size="9" font-weight="bold" fill="#00d000" text-anchor="end" >12.82</text><rect x="0" y="54.2" width="85.5" height="11" fill="#000"/><text x="7" y="62.8" font-family="Liberation Mono,monospace" font-size="9" font-weight="bold" fill="#00d000" text-anchor="start" >TV</text><text x="81.5" y="62.8" font-family="Liberation Mono,monospace" font-size="9" font-weight="bold" fill="#00d000" text-anchor="end" >9.20</text><rect x="0" y="66.1" width="85.5" height="11" fill="#000"/><text x="7" y="74.7" font-family="Liberation Mono,monospace" font-size="9" font-weight="bold" fill="#00d000" text-anchor="start" >TAPER</text><text x="81.5" y="74.7" font-family="Liberation Mono,monospace" font-size="9" font-weight="bold" fill="#00d000" text-anchor="end" >11.75</text><rect x="0" y="78" width="85.5" height="11" fill="#000"/><text x="7" y="86.6" font-family="Liberation Mono,monospace" font-size="9" font-weight="bold" fill="#00d000" text-anchor="start" >TAng</text><text x="81.5" y="86.6" font-family="Liberation Mono,monospace" font-size="9" font-weight="bold" fill="#00d000" text-anchor="end" >220.9</text><rect x="0" y="173" width="73" height="27" fill="#000"/><text x="3.2" y="185" font-family="Liberation Sans,sans-serif" font-size="9.6" font-weight="normal" fill="#00c000" text-anchor="start" >X=</text><text x="25" y="185" font-family="Liberation Sans,sans-serif" font-size="9.6" font-weight="normal" fill="#00c000" text-anchor="start" >0.0mm</text><text x="3.2" y="196.5" font-family="Liberation Sans,sans-serif" font-size="9.6" font-weight="normal" fill="#007800" text-anchor="start" >Y=</text><text x="25" y="196.5" font-family="Liberation Sans,sans-serif" font-size="9.6" font-weight="normal" fill="#007800" text-anchor="start" >0.0mm</text></svg></div></div><div class="win" style="left:977px;top:59px;width:277px;height:225px"><svg class="ti" viewBox="0 0 11 11" style=""><rect width="11" height="11" rx="0.8" fill="#1a5fb4"/><ellipse cx="5.5" cy="4.6" rx="4.2" ry="3.6" fill="none" stroke="#9cc3ee" stroke-width="0.9"/><ellipse cx="5.5" cy="4.4" rx="2.3" ry="2.1" fill="#fff"/><rect x="1.2" y="8.6" width="8.6" height="1.3" fill="#cfe2f7"/></svg><div class="tt" style="top:5.5px;letter-spacing:0.139px;left:18.9px">干渉縞 [File B]</div><div class="wb" style="left:203.5px"><svg viewBox="0 0 18 9"><rect x="5.3" y="4.6" width="7.4" height="2.9" rx="0.7" fill="#a0a0a0" stroke="#fff" stroke-width="0.8"/></svg></div><div class="wb" style="left:225.5px"><svg viewBox="0 0 18 9"><rect x="5.6" y="1.8" width="6.8" height="5.2" rx="0.5" fill="#fdfdfd" stroke="#8a8a8a" stroke-width="1"/><rect x="7.3" y="3.6" width="3.4" height="1.8" fill="#4b5a78"/></svg></div><div class="wb cl" style="left:247.5px"><svg viewBox="0 0 18 9"><path d="M6.3 2.3L11.7 6.7M11.7 2.3L6.3 6.7" stroke="#fff" stroke-width="3.3" stroke-linecap="square"/><path d="M6.3 2.3L11.7 6.7M11.7 2.3L6.3 6.7" stroke="#8c8c8c" stroke-width="1.9" stroke-linecap="square"/></svg></div><div class="cnt" style="left:4px;top:19px;width:266px;height:200px;background:#222"><svg width="266" height="200" viewBox="0 0 266 200" style="position:absolute;left:0;top:0;"><defs><filter id="fBb" x="-5%" y="-5%" width="110%" height="110%"><feGaussianBlur stdDeviation="0.8"/></filter><radialGradient id="fBg" cx="0.55" cy="0.5" r="0.75"><stop offset="0" stop-color="#3d3d3d"/><stop offset="0.6" stop-color="#333"/><stop offset="1" stop-color="#1c1c1c"/></radialGradient><linearGradient id="fBl" x1="0" y1="0" x2="0" y2="1"><stop offset="0" stop-color="#262626"/><stop offset="0.55" stop-color="#353535"/><stop offset="1" stop-color="#484848"/></linearGradient><linearGradient id="fBr" x1="0" y1="0" x2="0.25" y2="1"><stop offset="0" stop-color="#2b2b2b"/><stop offset="0.5" stop-color="#3a3a3a"/><stop offset="1" stop-color="#505050"/></linearGradient><clipPath id="fBc"><ellipse cx="149" cy="104" rx="76.2" ry="78"/></clipPath></defs><rect width="266" height="200" fill="url(#fBl)"/><rect width="37" height="200" fill="#141414" opacity="0.75"/><path d="M206 0L266 0L266 70z" fill="#1a1a1a" opacity="0.7"/><path d="M236 200L266 200L266 176z" fill="#1c1c1c" opacity="0.8"/><ellipse cx="149" cy="104" rx="99.06" ry="101.4" fill="url(#fBr)" opacity="0.9"/><ellipse cx="149" cy="104" rx="99.06" ry="101.4" fill="none" stroke="#262626" stroke-width="1.4" opacity="0.6"/><ellipse cx="149" cy="104" rx="88.01100000000001" ry="90.09" fill="none" stroke="#636363" stroke-width="3.4" stroke-dasharray="2.8 3.4" opacity="0.8"/><ellipse cx="149" cy="104" rx="78.486" ry="80.34" fill="none" stroke="#2a2a2a" stroke-width="2" opacity="0.7"/><ellipse cx="149" cy="104" rx="76.2" ry="78" fill="#272727"/><g clip-path="url(#fBc)"><path d="M175.6 93.9l3.1 -0.4 3.8 0.6 4.6 1.4 3 1.9 1.8 1.9 1.2 3.1 0.3 3.2 -0.6 3.1 -1.3 2.3 -2.6 2.4 -8.7 3.6 -2.2 1.6 -7.7 8.8 -3.8 1.3 -3.8 -0.7 -2.5 -1.4 -2.5 -3.1 -0.6 -2.3 0.6 -3.2 2.7 -4.2 6.6 -5.9 1 -2.3 1.3 -5.5 1.7 -3.1 2.4 -2.2 2.2 -0.9zM186.9 68.9l5.5 0.2 6.1 1.2 4.4 1.7 3.3 2.3 2.1 2.4 1.9 3.1 7 15.6 0.7 5.5 -1 4.7 -1.8 3.9 -5.1 7.8 -5 10.1 -4.2 3.7 -11.3 6.4 -8.5 3.2 -6.9 1.6 -6.1 0.3 -7.6 -0.7 -15.5 -2.8 -5 -2.1 -2 -1.8 -1.5 -2.3 -0.8 -2.4 -0.3 -3.1 1 -10.9 1.2 -7 2.5 -10.2 2.6 -5.4 4.1 -4.5 8.7 -6.5 17.2 -11 5.4 -2 8.9 -1zM189.4 79l-9.9 0.2 -4.6 1 -4.6 2.7 -9.9 7.3 -8.4 3.9 -3.5 2.9 -1.8 3 -1 3.2 -2.5 16.4 0.1 3.9 0.8 3.9 1.1 1.9 1.9 2 4.9 2.6 8.4 2.5 6.1 0.8 5.4 -0.5 3 -0.9 4 -2.2 18.9 -11.4 3 -2.7 7.7 -13.2 0.9 -3.9 -0.8 -4.6 -5.5 -13.3 -2.3 -3.1 -2.3 -1.5 -2.3 -0.7 -6.8 -0.2zM186.1 55.6l4 -0.1 5.4 0.7 18.3 4.8 4.4 3.2 6.5 8.6 2.8 4.7 1.8 4.7 1.8 10.1 -0.1 6.2 -0.8 6.3 -1.3 4.7 -2.2 4.8 -6.4 8.4 -3.9 7.8 -3.1 3.9 -5.7 3.9 -13.6 7.7 -4.6 2 -5 1.2 -8.7 1.1 -13.7 0.5 -19.1 -1.9 -4.6 -1.3 -4.5 -2.2 -5.8 -4 -4 -3.9 -2.3 -3.9 -0.7 -3.9 0.2 -3.1 4.2 -17.1 4.6 -11.7 3.5 -7.1 4.1 -5.9 4.5 -4.9 7.5 -6.3 10.8 -7.9 4.6 -2.7 5.3 -2.4 9.9 -3.6 5.9 -1.4zM182.5 61.8l-6.8 2 -5 2 -14.1 8.8 -13.1 10.7 -3.6 3.9 -2.3 3.4 -2.4 5.2 -4 12.4 -4 18 0.5 3.9 2 3.9 3.3 3.6 3.6 2.6 3.3 1.5 3.8 1 22.8 2.3 10.7 -0.7 11.4 -2.5 4.6 -2.1 9.8 -5.7 5.4 -3.9 2.8 -3.9 3.8 -8.6 7.2 -9.9 1.8 -4.1 0.8 -3.9 0.3 -4.7 -0.7 -5.5 -3.2 -8.6 -8.1 -12.4 -4.7 -4.1 -7 -3 -11.3 -2.1 -3.8 -0.1 -3.8 0.6zM187.6 47.1l7.9 -0.3 11.4 2.2 10.7 0.2 4.6 1 3 2 3.3 3.4 5.9 8.6 3 5.3 1.5 4.1 1.5 6.8 0 23 -1.6 6.1 -3.7 10.1 -3.9 7.8 -3.8 6.2 -3 3.5 -3.8 2.8 -24.6 12.5 -8.1 3 -9.2 1.6 -22.8 0.8 -14.5 -1.4 -7.6 -2.5 -16 -9 -3.9 -3.4 -2.3 -4 -1.1 -4.6 0.2 -4.7 2.7 -12.5 1.8 -5.5 7.2 -17.1 6 -9.4 6.1 -8 5.4 -5.6 19 -13.6 5.3 -2.6 11.5 -4.1 6.1 -1.7 5.8 -1zM187.9 50.9l-4.6 0.8 -5.3 1.5 -13 4.7 -4.6 2.3 -17.5 12.8 -5.3 5.2 -4.5 5.5 -6 9.4 -3.3 7 -4.3 11.7 -3.7 15.6 -0.2 4.7 1.4 4.6 2.3 3.2 4.6 3.9 11.4 6.6 4.6 1.7 4.5 1 16 1.3 11.5 -0.3 9.1 -0.7 7.6 -1.4 6.7 -2.8 20.8 -11 3.9 -3 2.7 -3.1 8.9 -15.6 2.6 -7 1.7 -6.9 0.8 -8 -0.2 -6.2 -1.2 -7 -2.5 -8.1 -2.3 -4.4 -5.7 -8.6 -2.6 -2.9 -2.3 -1.5 -3.8 -1.1 -9.9 -1.1 -11.5 -2.6 -6.8 -0.2zM192.7 39.3l8.1 -0.5 18.3 1.6 3.8 0.7 3.8 1.5 3.1 2 3 2.8 7.6 9.6 0 7.4 -7.4 -10.3 -4.1 -4.7 -4.5 -3.3 -4.5 -1.5 -11.5 -0.3 -11.4 -1.5 -7.6 0.5 -8.4 1.4 -6.1 1.5 -9.9 3.5 -6.1 2.8 -18.3 12.3 -4 3.3 -5.5 6.3 -10.3 14 -9.5 20.3 -1.9 5.4 -3.6 16.4 0.2 4.7 1.2 3.9 2.9 5 3.8 3.6 22.1 11.3 5.4 1.1 9.1 0.7 23.6 -0.3 9.2 -1 9.1 -2.6 16.8 -7.7 15 -7.8 4.6 -3.9 4 -5.4 3.8 -6.6 3.8 -8.7 0 8.8 -6.8 10.6 -3.1 3.7 -3.7 3.1 -15.6 8.6 -19.5 8.3 -7.6 2.3 -6.1 1.1 -26 0.4 -10.6 -0.3 -4.6 -0.5 -5.6 -2 -17.4 -8.5 -3.7 -2.3 -4.3 -4.8 -3 -6.2 -1.1 -5.5 0.6 -6.2 3.8 -15.6 1.7 -4.7 4.8 -8.6 5.4 -11.7 9.7 -13.4 4.3 -5.3 4.8 -4.4 22.1 -14.6 6.9 -3.1 9.1 -3.2 17.8 -3.5zM199.4 30.7l6.8 0.2 16 2.6 4.5 1 4.4 1.6 4.8 2.8 4.5 3.8 0 7 -3.4 -4.2 -3.4 -3.1 -3.3 -2.4 -3.6 -1.7 -6.1 -1.5 -20.5 -2.1 -7.7 0.9 -19.8 4.7 -11.4 4.4 -9.6 5.5 -15 10.1 -6.7 5.5 -4.5 5.4 -10.1 14.9 -4.8 9.3 -5.1 8.6 -2.4 6.2 -4.9 21.1 0.2 5.5 1.6 5.4 3.4 6.5 4.5 4.4 20.4 10.2 4.8 1.9 7.6 1.2 34.3 0 6.1 -0.8 8.5 -2.3 21.7 -8.6 14 -7.8 4.8 -3.1 4 -3.9 6.4 -8.5 0 4.3 -4.6 5.7 -4 3.9 -16.5 10.2 -6.7 3.1 -14.6 5.7 -9.2 2.9 -7 1.5 -7.5 0.5 -16.7 -0.3 -13.7 0.3 -4.6 -0.4 -5.3 -1.5 -6.1 -2.5 -16 -7.7 -3.9 -2.4 -2.6 -2.3 -1.9 -2.7 -3.8 -8.3 -1.2 -6.2 0.8 -7 2.5 -8.6 2.4 -11.1 1.9 -5.3 12 -20.3 10 -14.8 4.2 -4.7 5.9 -4.6 16.2 -11 10 -5.8 6.9 -3 6.8 -2.3 18.3 -5 7 -1zM198.4 23.7l6.2 -0.4 5.4 0.4 14.4 3 6.9 1.9 5.3 2.1 3.8 2 0 4.5 -7.4 -4.2 -9.3 -2.8 -17.5 -3.2 -5.4 -0.1 -6.1 0.6 -23.6 7 -9.1 3.7 -13.8 8 -16.7 11.6 -6 4.9 -4.6 5.4 -21.4 33.6 -1.9 5.4 -6.1 23.4 -0.4 6.3 1.2 6.2 2.1 4.7 2.7 4.7 2.8 3.1 3.4 2.5 16.7 8.4 5.7 2.3 8.1 2.5 6.8 0.7 13 -0.5 18.3 0.4 6.8 -0.8 6.9 -1.7 13.6 -4.5 17.6 -7.4 16 -10 3.8 -3.4 3.8 -4.3 0 3.6 -3.5 3.6 -4.1 3.2 -12.3 7.7 -6.7 3.5 -19.8 7.8 -13 3.6 -7.6 1.3 -6.9 0.4 -12.9 -0.4 -12.2 0.5 -7.6 -0.8 -6.9 -1.9 -6.9 -2.4 -17.1 -8.5 -3.9 -2.3 -2.6 -2.3 -2.6 -3.2 -2.8 -4.6 -2 -4.7 -1.3 -7 0.8 -7.8 6.4 -22.7 2.3 -6.2 21.9 -33.5 4 -4.8 5.3 -4.6 17.6 -12.4 13.7 -8.5 11.4 -5.1 19.8 -6 7.5 -1.5zM200.8 17.4l6.1 -0.4 5.3 0.3 16 3 12.2 4.7 0 3.7 -5.3 -2.5 -6.1 -2 -16.7 -3.7 -8.4 -0.4 -9.9 1.3 -22.9 6.6 -6.9 2.9 -7.6 4.2 -11.2 7.3 -17 12.1 -6.1 5.1 -5.2 6.2 -19.2 28.2 -3.1 5.3 -2.4 6.3 -7.1 22.6 -0.9 7.8 1 7 2.2 5.5 3.8 6.2 3.4 3.9 4.1 3.1 17.3 8.7 5.4 2.2 11.4 3.3 8.4 1.1 29.7 -0.5 8.4 -1.4 12.5 -3.2 12.6 -4.4 13.7 -6 15.3 -9.4 6.8 -5.5 0 3 -6.1 4.6 -10.8 6.7 -15.8 7.7 -10.7 3.9 -12.2 3.3 -7.6 1.8 -7.6 1.1 -24.4 0.9 -10.7 -1.1 -10.6 -2.8 -6.7 -2.3 -17 -8.1 -4.7 -2.8 -3.7 -3.1 -2.7 -3.1 -3.1 -4.7 -2.2 -4.7 -1.3 -3.9 -0.9 -4.7 -0.1 -4.7 0.5 -4.6 2 -7.1 6.3 -17.9 2.3 -5.5 3.7 -6.2 16.6 -24.2 6.4 -8 6.1 -5.7 17.5 -13.1 19.1 -12.1 9.1 -4.2 21.3 -6 8.4 -1.6zM203.2 12l9.8 -0.2 15.2 2 12.2 4.5 0 3.2 -11.4 -4.4 -10.8 -2 -11.3 -0.8 -10.7 1.2 -24.3 6.5 -5.4 2 -11.4 6.7 -17.5 11.8 -13.7 10.7 -7.2 7.1 -13.5 18 -11.4 17.2 -3.7 7.7 -8.4 23.4 -0.9 8.6 1.2 8.6 2.3 6.2 3.6 6.3 4.7 5.4 5.1 3.9 16 7.9 6.8 2.8 15.3 4.2 9.1 1.4 7.6 0 20.6 -1.4 9.1 -1.6 15.3 -4 12.2 -4.1 12.2 -5.6 10.2 -5.8 10.3 -7.2 0 2.5 -7.6 5.3 -8.4 5 -11.4 5.7 -8.9 3.5 -26.1 7.1 -10 1.5 -12.9 1.1 -7.6 0.4 -7.6 -0.6 -19.9 -4.7 -11.4 -4.3 -10.7 -5 -5.5 -3.3 -3.7 -3.1 -3.6 -3.9 -2.7 -3.9 -2.6 -4.7 -1.7 -4.7 -1.3 -5.4 -0.5 -5.5 0.1 -4.7 2.4 -9.3 8.3 -21.1 3.8 -7 9.6 -14.8 11.2 -14.9 9.3 -10.1 16.4 -13.3 16.2 -10.9 9.9 -6.2 6.1 -2.7 21.1 -5.9 12.5 -2.3zM184 11.2l3.2 -0.8 10.9 0 -11.8 2.6 -15.2 4.3 -5.3 2 -5.4 3 -22.1 14.6 -13.7 10.8 -8.4 7.9 -11.9 14.1 -7.9 10.7 -10.1 16.6 -2.9 6.2 -6.8 17.4 -2 6.8 -0.6 6.2 0.7 8.6 1.8 7 3.2 6.4 4.9 6.9 5 4.8 6.1 4 11.4 5.4 9.1 3.3 18.3 4.7 10.7 1.5 9.9 -0.1 17.5 -2.1 9.2 -1.7 18.5 -5 9.7 -3.2 9.8 -4.6 11.5 -6.2 9.1 -6.2 0 2.2 -6.8 4.7 -7.6 4.4 -10.7 5.4 -7.6 3.2 -27.5 7.5 -22.8 3.4 -12.2 0.2 -13 -1.9 -22.1 -5.9 -7.6 -3 -9.1 -4.4 -3.8 -2.5 -3.8 -3.2 -3.9 -4.3 -3.6 -5.1 -4.1 -7.8 -2 -9.3 -0.4 -8.6 1.2 -7 7.5 -20.3 4 -8.6 10.3 -17.2 6.3 -8.5 14.3 -16.4 10 -9.5 11.4 -9 25.2 -16.6 6.8 -3.2 15.2 -4.6zM169.9 11.2l2.4 -0.8 6.6 0 -11.6 3.8 -6.9 3.3 -25.4 17.1 -9.6 7.4 -7.6 7.1 -11.3 12 -12.4 15.1 -13.5 23.1 -6.3 15.6 -3.2 9.4 -1.3 7 0 7.8 0.9 7.8 2.1 6.1 4.6 7.6 5.8 7.4 5.2 4.6 5.7 3.5 9.9 4.5 8.4 2.7 21.4 5.1 12.9 1.6 12.2 -0.3 18.3 -2.8 28 -7.2 7 -2.5 8.4 -4 11.5 -6.2 8.3 -5.5 0 2 -15.2 9.3 -8.9 4.5 -6.3 2.7 -27.5 7.7 -19.8 3.4 -12.2 0.8 -13.7 -1.2 -25.1 -5.4 -9.2 -2.8 -12.2 -5.7 -6.6 -4.9 -4.3 -4.7 -5.1 -7 -3 -4.9 -2 -4.5 -1 -3.9 -0.6 -5.5 -0.1 -7 0.4 -5.4 2.5 -9.4 5.2 -14 4.6 -10.2 13.1 -21.7 9.1 -11 16 -16.8 11.5 -10 25.1 -17.3 7.2 -4.3 7.6 -3.1zM160.1 11.2l1.6 -0.8 4.8 0 -5.3 2.3 -6.1 3.6 -25.5 17.5 -7.3 5.9 -22.1 22.5 -6.3 7.5 -4.3 6.1 -13.5 23.5 -5.6 14 -3.7 11.8 -1.3 7.8 0.1 10.9 0.9 6.2 2.2 5.5 6.1 9.3 5.6 7.1 5.4 4.8 6 3.5 10.7 4.7 6.9 2 22.8 4.9 15.3 1.7 12.9 -0.3 18.3 -2.9 27.5 -7.3 6.8 -2.4 8.4 -3.9 11.4 -6.3 7.6 -4.9 0 1.8 -16.7 10 -13.7 6.2 -26.7 7.6 -18.3 3.3 -12.2 0.9 -15.2 -1.1 -8.8 -1.3 -24 -5 -14.5 -6 -7.5 -4.6 -7 -7.3 -8.5 -12.2 -3 -7 -1 -7.8 0.5 -13.3 2.5 -10.1 4.7 -13.3 5.4 -11.7 11.7 -20.2 8.3 -10.9 22.1 -22.7 6.1 -5.6 29 -20.1 6.5 -3.9zM152.8 11.2l1.2 -0.8 3.6 0 -30.2 20.3 -7.4 6 -24 24.4 -6.4 7.8 -4.2 6.2 -10.3 18 -3.8 7.8 -4.8 11.7 -4.2 14 -1.1 7.8 0 11.7 1.2 6.3 2.7 6.2 6.4 9.4 5.9 7.2 5.3 4.8 6.2 3.6 12.1 5.1 6.9 2.1 23.6 4.4 16 1.5 7.6 0.3 7.6 -0.5 16.6 -2.8 6.8 -1.6 26.1 -7.8 13.2 -6.2 15 -9 0 1.7 -16 9.5 -14.4 6.5 -25.2 7.4 -17.5 3.3 -29 0.1 -9.1 -1.1 -23.6 -4.3 -5.4 -1.7 -10.6 -4.4 -7.7 -4.1 -3.8 -3.1 -3.8 -3.9 -8.9 -11.7 -4.2 -7.8 -2 -7.8 -0.2 -12.5 1.4 -9.4 5 -15.6 6.1 -14 12.2 -21.8 6.6 -9.5 6.9 -7.8 24.4 -24.2 4.8 -3.8 26.4 -17.9zM146.7 11.2l1 -0.8 3.1 0 -25.4 17.3 -6.1 4.9 -23.6 23.5 -8.3 9.7 -6.2 9.3 -12.4 22.7 -5.7 13.2 -5.5 18 0 -7.4 6.4 -17.6 8 -16.2 8.7 -15 5.8 -8.6 8.4 -9.8 24.4 -24.1 5.3 -4.2 22.1 -14.9zM57.6 151.6l2.9 7.8 4.4 7 8.8 10.9 7.5 6.6 6.7 3.6 15.4 6 6.1 1.5 15.6 2.6 -10.8 0 -10.2 -2 -16.7 -6.3 -7.6 -4.1 -4 -3.2 -4.4 -4.4 -10.2 -12.8 -3.5 -6.7 0 -6.5zM240.3 172.6l0.1 1.6 -9.9 5.9 -9.9 5.2 -9.9 4.4 -26.6 7.9 -7.8 0 11.6 -2.6 23.6 -7.2 14.2 -6.6 14.6 -8.6zM141 11.2l1.1 -0.8 2.8 0 -21.8 14.8 -5.8 4.7 -22.4 22.2 -8 9 -7.2 10.2 -10.7 18.6 -7.2 14.9 -4.2 11.1 0 -5.1 8.3 -18.5 11.5 -20.3 8.4 -12 8.3 -9.5 22.5 -22.2 6 -4.6 18.4 -12.5zM57.6 163.3l3.7 5.4 6.9 8.4 4.7 4.9 4.5 3.9 8.4 4.7 18.8 7 -6.7 -0.3 -13.7 -5.3 -7.6 -4.4 -7.2 -6.4 -10.1 -11.7 -1.7 -2.4 0 -3.8zM240.4 175.8l0 1.5 -7.6 4.7 -8.4 4.6 -10.6 5 -7.6 2.9 -10.1 3.1 -5.8 0 15.1 -4.4 9.1 -3.5 13 -6.3 12.9 -7.6zM135.5 11.2l1.1 -0.8 2.7 0 -17.7 12.1 -6.1 4.8 -19.1 18.6 -9.9 10.8 -7.4 9.9 -7.2 11.7 -7.4 13.2 -6.9 14.7 0 -4.1 8 -16 10.8 -18 9.4 -12.7 12.9 -14 15.1 -14.6 6.2 -5 15.5 -10.6zM57.6 171.1l0 -0.5 11.4 12.8 6.5 5.6 7.2 4.3 11.3 4.3 -5 0 -2.2 -0.8 -7.1 -3.1 -5.4 -3.3 -6.8 -5.9 -9.5 -10.3 -0.4 -0.5 0 -2.6zM239.2 179.7l1.2 -0.8 0 1.6 -9.9 6 -9.1 4.6 -15.2 6.5 -4.6 0 9.1 -3.2 9.9 -4.5 9.2 -4.6 9.4 -5.6zM130.3 11.2l1 -0.8 2.6 0 -15.4 10.8 -6.8 5.5 -12.2 11.7 -13 13.8 -7.6 9.8 -6.8 10 -8.7 14.8 -5.8 11.5 0 -3.6 9.9 -18 8.6 -13.3 9.7 -12.5 12.9 -13.9 10.7 -10.2 7.6 -6.2 13.3 -9.4zM57.6 177.3l0 -0.8 8.7 9.4 5.7 5.1 5.4 3.5 6.7 3.1 -4.4 0 -4.6 -2.4 -4.5 -3.1 -5.4 -4.7 -7.6 -8 0 -2.1zM125.4 11.2l1.1 -0.8 2.4 0 -13.4 9.6 -7.4 6 -9.4 8.9 -12.9 13.8 -15.1 20.2 -13.1 22.3 0 -3.2 9.4 -16 7.5 -10.9 10.5 -13.6 12.2 -13.1 8.8 -8.4 7.5 -6.2 11.9 -8.6z" fill="#6e6e6e" filter="url(#fBb)"/></g><ellipse cx="149" cy="104" rx="76.2" ry="78" fill="none" stroke="#222" stroke-width="1.2" opacity="0.8"/><path d="M147.5 0V200M0 104.19999999999999H266M80 200L266 16" stroke="#e0e0e0" stroke-width="0.9" fill="none"/><rect x="0" y="6.6" width="85.5" height="11" fill="#000"/><text x="7" y="15.2" font-family="Liberation Mono,monospace" font-size="9" font-weight="bold" fill="#00d000" text-anchor="start" >GFLR</text><text x="81.5" y="15.2" font-family="Liberation Mono,monospace" font-size="9" font-weight="bold" fill="#00d000" text-anchor="end" >3.49</text><rect x="0" y="18.5" width="85.5" height="11" fill="#000"/><text x="7" y="27.1" font-family="Liberation Mono,monospace" font-size="9" font-weight="bold" fill="#00d000" text-anchor="start" >GF3R</text><text x="81.5" y="27.1" font-family="Liberation Mono,monospace" font-size="9" font-weight="bold" fill="#00d000" text-anchor="end" >4.57</text><rect x="0" y="30.4" width="85.5" height="11" fill="#000"/><text x="7" y="39" font-family="Liberation Mono,monospace" font-size="9" font-weight="bold" fill="#00d000" text-anchor="start" >GF3D</text><text x="81.5" y="39" font-family="Liberation Mono,monospace" font-size="9" font-weight="bold" fill="#00d000" text-anchor="end" >2.93</text><rect x="0" y="42.3" width="85.5" height="11" fill="#000"/><text x="7" y="50.9" font-family="Liberation Mono,monospace" font-size="9" font-weight="bold" fill="#00d000" text-anchor="start" >GBIR</text><text x="81.5" y="50.9" font-family="Liberation Mono,monospace" font-size="9" font-weight="bold" fill="#00d000" text-anchor="end" >13.13</text><rect x="0" y="54.2" width="85.5" height="11" fill="#000"/><text x="7" y="62.8" font-family="Liberation Mono,monospace" font-size="9" font-weight="bold" fill="#00d000" text-anchor="start" >TV</text><text x="81.5" y="62.8" font-family="Liberation Mono,monospace" font-size="9" font-weight="bold" fill="#00d000" text-anchor="end" >9.67</text><rect x="0" y="66.1" width="85.5" height="11" fill="#000"/><text x="7" y="74.7" font-family="Liberation Mono,monospace" font-size="9" font-weight="bold" fill="#00d000" text-anchor="start" >TAPER</text><text x="81.5" y="74.7" font-family="Liberation Mono,monospace" font-size="9" font-weight="bold" fill="#00d000" text-anchor="end" >11.59</text><rect x="0" y="78" width="85.5" height="11" fill="#000"/><text x="7" y="86.6" font-family="Liberation Mono,monospace" font-size="9" font-weight="bold" fill="#00d000" text-anchor="start" >TAng</text><text x="81.5" y="86.6" font-family="Liberation Mono,monospace" font-size="9" font-weight="bold" fill="#00d000" text-anchor="end" >220.2</text><rect x="0" y="173" width="73" height="27" fill="#000"/><text x="3.2" y="185" font-family="Liberation Sans,sans-serif" font-size="9.6" font-weight="normal" fill="#00c000" text-anchor="start" >X=</text><text x="25" y="185" font-family="Liberation Sans,sans-serif" font-size="9.6" font-weight="normal" fill="#00c000" text-anchor="start" >0.0mm</text><text x="3.2" y="196.5" font-family="Liberation Sans,sans-serif" font-size="9.6" font-weight="normal" fill="#007800" text-anchor="start" >Y=</text><text x="25" y="196.5" font-family="Liberation Sans,sans-serif" font-size="9.6" font-weight="normal" fill="#007800" text-anchor="start" >0.0mm</text></svg></div></div><div class="win" style="left:696px;top:499px;width:265px;height:219px"><svg class="ti" viewBox="0 0 11 11" style=""><rect width="11" height="11" rx="0.8" fill="#1a5fb4"/><ellipse cx="5.5" cy="4.6" rx="4.2" ry="3.6" fill="none" stroke="#9cc3ee" stroke-width="0.9"/><ellipse cx="5.5" cy="4.4" rx="2.3" ry="2.1" fill="#fff"/><rect x="1.2" y="8.6" width="8.6" height="1.3" fill="#cfe2f7"/></svg><div class="tt" style="top:5.5px;letter-spacing:0.167px;left:19.7px">鳥瞰図 [File A] GBIR</div><div class="tr" style="left:118px;top:5.5px;letter-spacing:0.486px">12.82µm (1µm/...</div><div class="wb" style="left:191.5px"><svg viewBox="0 0 18 9"><rect x="5.3" y="4.6" width="7.4" height="2.9" rx="0.7" fill="#a0a0a0" stroke="#fff" stroke-width="0.8"/></svg></div><div class="wb" style="left:213.5px"><svg viewBox="0 0 18 9"><rect x="5.6" y="1.8" width="6.8" height="5.2" rx="0.5" fill="#fdfdfd" stroke="#8a8a8a" stroke-width="1"/><rect x="7.3" y="3.6" width="3.4" height="1.8" fill="#4b5a78"/></svg></div><div class="wb cl" style="left:235.5px"><svg viewBox="0 0 18 9"><path d="M6.3 2.3L11.7 6.7M11.7 2.3L6.3 6.7" stroke="#fff" stroke-width="3.3" stroke-linecap="square"/><path d="M6.3 2.3L11.7 6.7M11.7 2.3L6.3 6.7" stroke="#8c8c8c" stroke-width="1.9" stroke-linecap="square"/></svg></div><div class="cnt" style="left:5px;top:19px;width:253px;height:193px;background:#d4d0c8"><svg width="253" height="193" viewBox="0 0 253 193" style="position:absolute;left:0;top:0;"><clipPath id="fl7k"><rect width="243" height="181"/></clipPath><g clip-path="url(#fl7k)"><pattern id="fl7" patternUnits="userSpaceOnUse" width="2.011" height="2.478" patternTransform="matrix(1 0 -0.5141 1 81.437 34.500)"><rect width="2.011" height="2.478" fill="#e8e4dc"/><path d="M0 0H2.011" stroke="#202020" stroke-width="1.36"/><path d="M0 0V2.478" stroke="#202020" stroke-width="1.2"/></pattern><path d="M0.0 158.4L191.0 158.4L254.7 34.5L63.7 34.5z" fill="url(#fl7)" stroke="#111" stroke-width="0.8"/><path d="M63.7 34.5L52.0 0" stroke="#111" stroke-width="0.8"/><g stroke="#000" stroke-width="0.4" stroke-linejoin="round"><path d="M138.8 30.7l2.3 0.5 -1.6 1.5 -2.3 -0.3zM141.1 31.2l2.4 0.5 -1.7 1.2 -2.3 -0.2zM143.5 31.7l2.4 0.8 -1.6 1.5 -2.5 -1.1zM145.9 32.5l2.5 0.9 -1.7 1.3 -2.4 -0.7zM148.4 33.4l2.4 0.8 -1.7 1.3 -2.4 -0.8z" fill="#00c0ff"/><path d="M150.8 34.2l2.5 0.7 -1.6 1.6 -2.6 -1zM153.3 34.9l2.3 0.7 -1.5 1.6 -2.4 -0.7zM155.6 35.6l2.4 0.5 -1.5 1.7 -2.4 -0.6zM158 36.1l2.4 0.8 -1.5 1.6 -2.4 -0.7zM160.4 36.9l2.4 0.7 -1.5 1.8 -2.4 -0.9zM162.8 37.6l2.6 1.3 -1.5 1.7 -2.6 -1.2z" fill="#0080ff"/><path d="M165.4 38.9l2.6 1.3 -1.5 1.5 -2.6 -1.1zM168 40.2l2.7 1.4 -1.6 1.4 -2.6 -1.3zM170.7 41.6l2.5 1.1 -1.6 1.5 -2.5 -1.2z" fill="#0040ff"/><path d="M173.2 42.7l-1.6 1.5 3.5 10.1 1.2 -2.5z" fill="#0000ff"/><path d="M130.2 30.8l2.5 0.8 -1.8 1.2 -2.4 -0.7z" fill="#00ffff"/><path d="M132.7 31.6l2.2 0.3 -1.7 1.3 -2.3 -0.4zM134.9 31.9l2.3 0.5 -1.6 1.2 -2.4 -0.4zM137.2 32.4l2.3 0.3 -1.6 1.4 -2.3 -0.5zM139.5 32.7l2.3 0.2 -1.5 1.8 -2.4 -0.6zM141.8 32.9l2.5 1.1 -1.6 1.3 -2.4 -0.6zM144.3 34l2.4 0.7 -1.5 1.8 -2.5 -1.2zM146.7 34.7l2.4 0.8 -1.5 1.8 -2.4 -0.8zM149.1 35.5l2.6 1 -1.6 1.7 -2.5 -0.9z" fill="#00c0ff"/><path d="M151.7 36.5l2.4 0.7 -1.7 1.3 -2.3 -0.3zM154.1 37.2l2.4 0.6 -1.7 1.4 -2.4 -0.7zM156.5 37.8l2.4 0.7 -1.6 1.6 -2.5 -0.9zM158.9 38.5l2.4 0.9 -1.5 1.7 -2.5 -1zM161.3 39.4l2.6 1.2 -1.6 1.5 -2.5 -1z" fill="#0080ff"/><path d="M163.9 40.6l2.6 1.1 -1.7 1.4 -2.5 -1zM166.5 41.7l2.6 1.3 -1.7 1.2 -2.6 -1.1zM169.1 43l2.5 1.2 -1.5 1.6 -2.7 -1.6zM171.6 44.2l2.6 1.3 -1.6 1.5 -2.5 -1.2z" fill="#0040ff"/><path d="M174.2 45.5l2.6 1.1 -1.6 1.6 -2.6 -1.2zM176.8 46.6l2.5 1 -1.5 1.9 -2.6 -1.3z" fill="#0000ff"/><path d="M179.3 47.6l-1.5 1.9 2.5 7.3 1.3 -2.5z" fill="#000080"/><path d="M123.9 31.3l2.3 0.3 -1.7 1.2 -2.2 0zM126.2 31.6l2.3 0.5 -1.7 1.2 -2.3 -0.5zM128.5 32.1l2.4 0.7 -1.7 1.2 -2.4 -0.7zM130.9 32.8l2.3 0.4 -1.7 1.2 -2.3 -0.4zM133.2 33.2l2.4 0.4 -1.7 1.5 -2.4 -0.7zM135.6 33.6l2.3 0.5 -1.5 1.7 -2.5 -0.7z" fill="#00ffff"/><path d="M137.9 34.1l2.4 0.6 -1.5 1.8 -2.4 -0.7zM140.3 34.7l2.4 0.6 -1.5 1.9 -2.4 -0.7zM142.7 35.3l2.5 1.2 -1.7 1.3 -2.3 -0.6zM145.2 36.5l2.4 0.8 -1.6 1.4 -2.5 -0.9zM147.6 37.3l2.5 0.9 -1.7 1.2 -2.4 -0.7zM150.1 38.2l2.3 0.3 -1.6 1.4 -2.4 -0.5z" fill="#00c0ff"/><path d="M152.4 38.5l2.4 0.7 -1.6 1.5 -2.4 -0.8zM154.8 39.2l2.5 0.9 -1.6 1.4 -2.5 -0.8zM157.3 40.1l2.5 1 -1.6 1.5 -2.5 -1.1zM159.8 41.1l2.5 1 -1.6 1.5 -2.5 -1zM162.3 42.1l2.5 1 -1.5 1.7 -2.6 -1.2z" fill="#0080ff"/><path d="M164.8 43.1l2.6 1.1 -1.5 1.9 -2.6 -1.3zM167.4 44.2l2.7 1.6 -1.5 1.9 -2.7 -1.6zM170.1 45.8l2.5 1.2 -1.5 1.8 -2.5 -1.1zM172.6 47l2.6 1.2 -1.5 1.8 -2.6 -1.2z" fill="#0040ff"/><path d="M175.2 48.2l2.6 1.3 -1.6 1.5 -2.5 -1zM177.8 49.5l2.6 1.3 -1.6 1.4 -2.6 -1.2zM180.4 50.8l2.5 0.9 -1.6 1.6 -2.5 -1.1zM182.9 51.7l2.5 0.9 -1.7 1.4 -2.4 -0.7z" fill="#0000ff"/><path d="M185.4 52.6l-1.7 1.4 1.8 5.3 1.3 -2.5z" fill="#000080"/><path d="M117.9 32.7l2.2 -0.1 -1.5 1.7 -2.3 -0.2zM120.1 32.6l2.2 0.2 -1.5 1.8 -2.2 -0.3zM122.3 32.8l2.2 0 -1.5 1.9 -2.2 -0.1zM124.5 32.8l2.3 0.5 -1.5 1.8 -2.3 -0.4zM126.8 33.3l2.4 0.7 -1.7 1.2 -2.2 -0.1zM129.2 34l2.3 0.4 -1.6 1.5 -2.4 -0.7zM131.5 34.4l2.4 0.7 -1.7 1.2 -2.3 -0.4zM133.9 35.1l2.5 0.7 -1.7 1.2 -2.5 -0.7zM136.4 35.8l2.4 0.7 -1.6 1.6 -2.5 -1.1z" fill="#00ffff"/><path d="M138.8 36.5l2.4 0.7 -1.6 1.5 -2.4 -0.6zM141.2 37.2l2.3 0.6 -1.6 1.3 -2.3 -0.4zM143.5 37.8l2.5 0.9 -1.7 1.1 -2.4 -0.7zM146 38.7l2.4 0.7 -1.7 1.2 -2.4 -0.8zM148.4 39.4l2.4 0.5 -1.6 1.6 -2.5 -0.9zM150.8 39.9l2.4 0.8 -1.6 1.5 -2.4 -0.7z" fill="#00c0ff"/><path d="M153.2 40.7l2.5 0.8 -1.5 2 -2.6 -1.3zM155.7 41.5l2.5 1.1 -1.6 1.6 -2.4 -0.7zM158.2 42.6l2.5 1 -1.5 1.9 -2.6 -1.3zM160.7 43.6l2.6 1.2 -1.5 1.8 -2.6 -1.1zM163.3 44.8l2.6 1.3 -1.5 1.9 -2.6 -1.4z" fill="#0080ff"/><path d="M165.9 46.1l2.7 1.6 -1.6 1.5 -2.6 -1.2zM168.6 47.7l2.5 1.1 -1.5 1.8 -2.6 -1.4zM171.1 48.8l2.6 1.2 -1.5 1.6 -2.6 -1z" fill="#0040ff"/><path d="M173.7 50l2.5 1 -1.5 1.7 -2.5 -1.1zM176.2 51l2.6 1.2 -1.6 1.4 -2.5 -0.9zM178.8 52.2l2.5 1.1 -1.7 1.1 -2.4 -0.8zM181.3 53.3l2.4 0.7 -1.5 1.7 -2.6 -1.3zM183.7 54l2.6 1.1 -1.5 1.7 -2.6 -1.1z" fill="#0000ff"/><path d="M186.3 55.1l-1.5 1.7 1.6 5 1.3 -2.5z" fill="#000080"/><path d="M111.6 33l2.4 0.7 -1.5 1.9 -2.2 -0.2zM114 33.7l2.3 0.4 -1.5 1.9 -2.3 -0.4zM116.3 34.1l2.3 0.2 -1.6 1.7 -2.2 0z" fill="#00ffc0"/><path d="M118.6 34.3l2.2 0.3 -1.5 1.8 -2.3 -0.4zM120.8 34.6l2.2 0.1 -1.5 1.8 -2.2 -0.1zM123 34.7l2.3 0.4 -1.6 1.5 -2.2 -0.1zM125.3 35.1l2.2 0.1 -1.5 1.8 -2.3 -0.4zM127.5 35.2l2.4 0.7 -1.6 1.5 -2.3 -0.4zM129.9 35.9l2.3 0.4 -1.6 1.4 -2.3 -0.3zM132.2 36.3l2.5 0.7 -1.5 1.8 -2.6 -1.1zM134.7 37l2.5 1.1 -1.5 1.7 -2.5 -1zM137.2 38.1l2.4 0.6 -1.6 1.5 -2.3 -0.4zM139.6 38.7l2.3 0.4 -1.5 1.8 -2.4 -0.7z" fill="#00ffff"/><path d="M141.9 39.1l2.4 0.7 -1.6 1.6 -2.3 -0.5zM144.3 39.8l2.4 0.8 -1.6 1.5 -2.4 -0.7zM146.7 40.6l2.5 0.9 -1.6 1.6 -2.5 -1zM149.2 41.5l2.4 0.7 -1.4 2.1 -2.6 -1.2zM151.6 42.2l2.6 1.3 -1.6 1.6 -2.4 -0.8z" fill="#00c0ff"/><path d="M154.2 43.5l2.4 0.7 -1.5 1.8 -2.5 -0.9zM156.6 44.2l2.6 1.3 -1.5 1.7 -2.6 -1.2zM159.2 45.5l2.6 1.1 -1.5 1.8 -2.6 -1.2zM161.8 46.6l2.6 1.4 -1.6 1.4 -2.5 -1z" fill="#0080ff"/><path d="M164.4 48l2.6 1.2 -1.6 1.6 -2.6 -1.4zM167 49.2l2.6 1.4 -1.6 1.5 -2.6 -1.3zM169.6 50.6l2.6 1 -1.6 1.6 -2.6 -1.1zM172.2 51.6l2.5 1.1 -1.7 1.2 -2.4 -0.7z" fill="#0040ff"/><path d="M174.7 52.7l2.5 0.9 -1.6 1.6 -2.6 -1.3zM177.2 53.6l2.4 0.8 -1.6 1.6 -2.4 -0.8zM179.6 54.4l2.6 1.3 -1.6 1.4 -2.6 -1.1zM182.2 55.7l2.6 1.1 -1.6 1.7 -2.6 -1.4zM184.8 56.8l2.5 1.2 -1.4 1.9 -2.7 -1.4z" fill="#0000ff"/><path d="M187.3 58l2.5 0.9 -1.5 1.9 -2.4 -0.9z" fill="#000080"/><path d="M189.8 58.9l-1.5 1.9 1.2 3.4 1.3 -2.4z" fill="#000080"/><path d="M107.8 34.3l2.5 1.1 -1.5 1.8 -2.5 -1zM110.3 35.4l2.2 0.2 -1.5 1.9 -2.2 -0.3zM112.5 35.6l2.3 0.4 -1.6 1.5 -2.2 0zM114.8 36l2.2 0 -1.6 1.5 -2.2 0zM117 36l2.3 0.4 -1.6 1.5 -2.3 -0.4zM119.3 36.4l2.2 0.1 -1.4 2.1 -2.4 -0.7z" fill="#00ffc0"/><path d="M121.5 36.5l2.2 0.1 -1.3 2.4 -2.3 -0.4zM123.7 36.6l2.3 0.4 -1.3 2.2 -2.3 -0.2zM126 37l2.3 0.4 -1.4 2 -2.2 -0.2zM128.3 37.4l2.3 0.3 -1.4 2 -2.3 -0.3zM130.6 37.7l2.6 1.1 -1.5 1.8 -2.5 -0.9zM133.2 38.8l2.5 1 -1.6 1.7 -2.4 -0.9zM135.7 39.8l2.3 0.4 -1.5 1.8 -2.4 -0.5zM138 40.2l2.4 0.7 -1.6 1.7 -2.3 -0.6zM140.4 40.9l2.3 0.5 -1.4 2.1 -2.5 -0.9z" fill="#00ffff"/><path d="M142.7 41.4l2.4 0.7 -1.4 2.2 -2.4 -0.8zM145.1 42.1l2.5 1 -1.4 2 -2.5 -0.8zM147.6 43.1l2.6 1.2 -1.5 1.7 -2.5 -0.9zM150.2 44.3l2.4 0.8 -1.6 1.3 -2.3 -0.4zM152.6 45.1l2.5 0.9 -1.7 1.1 -2.4 -0.7z" fill="#00c0ff"/><path d="M155.1 46l2.6 1.2 -1.7 1.4 -2.6 -1.5zM157.7 47.2l2.6 1.2 -1.8 1.2 -2.5 -1zM160.3 48.4l2.5 1 -1.7 1.4 -2.6 -1.2zM162.8 49.4l2.6 1.4 -1.6 1.3 -2.7 -1.3z" fill="#0080ff"/><path d="M165.4 50.8l2.6 1.3 -1.6 1.4 -2.6 -1.4zM168 52.1l2.6 1.1 -1.7 1.2 -2.5 -0.9zM170.6 53.2l2.4 0.7 -1.7 1.3 -2.4 -0.8zM173 53.9l2.6 1.3 -1.7 1.1 -2.6 -1.1z" fill="#0040ff"/><path d="M175.6 55.2l2.4 0.8 -1.5 1.9 -2.6 -1.6zM178 56l2.6 1.1 -1.5 1.8 -2.6 -1zM180.6 57.1l2.6 1.4 -1.5 1.7 -2.6 -1.3zM183.2 58.5l2.7 1.4 -1.6 1.6 -2.6 -1.3z" fill="#0000ff"/><path d="M185.9 59.9l2.4 0.9 -1.5 1.9 -2.5 -1.2zM188.3 60.8l2.5 0.9 -1.6 1.6 -2.4 -0.6z" fill="#000080"/><path d="M190.8 61.7l-1.6 1.6 1.2 3.4 1.3 -2.5z" fill="#000080"/><path d="M104 35.9l2.3 0.3 -1.6 1.5 -2.2 -0.1zM106.3 36.2l2.5 1 -1.7 1.3 -2.4 -0.8zM108.8 37.2l2.2 0.3 -1.5 1.5 -2.4 -0.5zM111 37.5l2.2 0 -1.6 1.3 -2.1 0.2zM113.2 37.5l2.2 0 -1.6 1.4 -2.2 -0.1zM115.4 37.5l2.3 0.4 -1.7 1.3 -2.2 -0.3zM117.7 37.9l2.4 0.7 -1.6 1.4 -2.5 -0.8zM120.1 38.6l2.3 0.4 -1.5 1.7 -2.4 -0.7zM122.4 39l2.3 0.2 -1.5 1.8 -2.3 -0.3z" fill="#00ffc0"/><path d="M124.7 39.2l2.2 0.2 -1.5 1.9 -2.2 -0.3zM126.9 39.4l2.3 0.3 -1.4 2.2 -2.4 -0.6zM129.2 39.7l2.5 0.9 -1.5 1.8 -2.4 -0.5zM131.7 40.6l2.4 0.9 -1.6 1.5 -2.3 -0.6zM134.1 41.5l2.4 0.5 -1.5 1.9 -2.5 -0.9zM136.5 42l2.3 0.6 -1.4 2 -2.4 -0.7zM138.8 42.6l2.5 0.9 -1.4 2 -2.5 -0.9z" fill="#00ffff"/><path d="M141.3 43.5l2.4 0.8 -1.5 1.8 -2.3 -0.6zM143.7 44.3l2.5 0.8 -1.5 1.9 -2.5 -0.9zM146.2 45.1l2.5 0.9 -1.7 1.3 -2.3 -0.3zM148.7 46l2.3 0.4 -1.6 1.5 -2.4 -0.6zM151 46.4l2.4 0.7 -1.5 1.8 -2.5 -1zM153.4 47.1l2.6 1.5 -1.7 1.2 -2.4 -0.9z" fill="#00c0ff"/><path d="M156 48.6l2.5 1 -1.6 1.4 -2.6 -1.2zM158.5 49.6l2.6 1.2 -1.6 1.5 -2.6 -1.3zM161.1 50.8l2.7 1.3 -1.6 1.8 -2.7 -1.6zM163.8 52.1l2.6 1.4 -1.6 1.6 -2.6 -1.2z" fill="#0080ff"/><path d="M166.4 53.5l2.5 0.9 -1.6 1.7 -2.5 -1zM168.9 54.4l2.4 0.8 -1.5 1.7 -2.5 -0.8zM171.3 55.2l2.6 1.1 -1.6 1.8 -2.5 -1.2zM173.9 56.3l2.6 1.6 -1.5 1.6 -2.7 -1.4z" fill="#0040ff"/><path d="M176.5 57.9l2.6 1 -1.5 1.8 -2.6 -1.2zM179.1 58.9l2.6 1.3 -1.6 1.5 -2.5 -1zM181.7 60.2l2.6 1.3 -1.6 1.4 -2.6 -1.2zM184.3 61.5l2.5 1.2 -1.5 1.5 -2.6 -1.3z" fill="#0000ff"/><path d="M186.8 62.7l2.4 0.6 -1.5 1.8 -2.4 -0.9zM189.2 63.3l2.5 0.8 -1.5 1.9 -2.5 -0.9z" fill="#000080"/><path d="M191.7 64.1l-1.5 1.9 1.1 3.2 1.3 -2.5z" fill="#000080"/><path d="M100.1 37.1l2.4 0.5 -1.5 1.9 -2.4 -0.8zM102.5 37.6l2.2 0.1 -1.6 1.7 -2.1 0.1zM104.7 37.7l2.4 0.8 -1.6 1.6 -2.4 -0.7zM107.1 38.5l2.4 0.5 -1.7 1.4 -2.3 -0.3zM109.5 39l2.1 -0.2 -1.5 1.9 -2.3 -0.3zM111.6 38.8l2.2 0.1 -1.6 1.7 -2.1 0.1zM113.8 38.9l2.2 0.3 -1.5 1.8 -2.3 -0.4zM116 39.2l2.5 0.8 -1.6 1.5 -2.4 -0.5zM118.5 40l2.4 0.7 -1.5 1.7 -2.5 -0.9zM120.9 40.7l2.3 0.3 -1.5 2 -2.3 -0.6zM123.2 41l2.2 0.3 -1.5 1.8 -2.2 -0.1zM125.4 41.3l2.4 0.6 -1.6 1.6 -2.3 -0.4z" fill="#00ffc0"/><path d="M127.8 41.9l2.4 0.5 -1.5 1.9 -2.5 -0.8zM130.2 42.4l2.3 0.6 -1.5 1.8 -2.3 -0.5zM132.5 43l2.5 0.9 -1.6 1.6 -2.4 -0.7zM135 43.9l2.4 0.7 -1.5 1.8 -2.5 -0.9zM137.4 44.6l2.5 0.9 -1.7 1.4 -2.3 -0.5zM139.9 45.5l2.3 0.6 -1.5 1.5 -2.5 -0.7z" fill="#00ffff"/><path d="M142.2 46.1l2.5 0.9 -1.7 1.3 -2.3 -0.7zM144.7 47l2.3 0.3 -1.6 1.5 -2.4 -0.5zM147 47.3l2.4 0.6 -1.5 2 -2.5 -1.1zM149.4 47.9l2.5 1 -1.6 1.6 -2.4 -0.6zM151.9 48.9l2.4 0.9 -1.6 1.4 -2.4 -0.7zM154.3 49.8l2.6 1.2 -1.6 1.5 -2.6 -1.3z" fill="#00c0ff"/><path d="M156.9 51l2.6 1.3 -1.6 1.5 -2.6 -1.3zM159.5 52.3l2.7 1.6 -1.6 1.5 -2.7 -1.6zM162.2 53.9l2.6 1.2 -1.6 1.6 -2.6 -1.3zM164.8 55.1l2.5 1 -1.6 1.4 -2.5 -0.8z" fill="#0080ff"/><path d="M167.3 56.1l2.5 0.8 -1.7 1.2 -2.4 -0.6zM169.8 56.9l2.5 1.2 -1.6 1.4 -2.6 -1.4zM172.3 58.1l2.7 1.4 -1.7 1.3 -2.6 -1.3zM175 59.5l2.6 1.2 -1.8 1.1 -2.5 -1z" fill="#0040ff"/><path d="M177.6 60.7l2.5 1 -1.7 1.3 -2.6 -1.2zM180.1 61.7l2.6 1.2 -1.6 1.6 -2.7 -1.5zM182.7 62.9l2.6 1.3 -1.6 1.7 -2.6 -1.4zM185.3 64.2l2.4 0.9 -1.5 1.7 -2.5 -0.9z" fill="#0000ff"/><path d="M187.7 65.1l2.5 0.9 -1.5 1.7 -2.5 -0.9zM190.2 66l2.5 1.1 -1.4 1.8 -2.6 -1.2z" fill="#000080"/><path d="M192.7 67.1l-1.4 1.8 0.9 2.8 1.3 -2.5z" fill="#000080"/><path d="M96.4 38.8l2.2 -0.1 -1.3 2.5 -2.2 -0.2zM98.6 38.7l2.4 0.8 -1.5 1.7 -2.2 0zM101 39.5l2.1 -0.1 -1.5 1.6 -2.1 0.2z" fill="#00ff80"/><path d="M103.1 39.4l2.4 0.7 -1.5 1.6 -2.4 -0.7zM105.5 40.1l2.3 0.3 -1.5 1.6 -2.3 -0.3zM107.8 40.4l2.3 0.3 -1.6 1.6 -2.2 -0.3zM110.1 40.7l2.1 -0.1 -1.4 2.1 -2.3 -0.4zM112.2 40.6l2.3 0.4 -1.4 1.9 -2.3 -0.2zM114.5 41l2.4 0.5 -1.5 1.9 -2.3 -0.5zM116.9 41.5l2.5 0.9 -1.6 1.7 -2.4 -0.7zM119.4 42.4l2.3 0.6 -1.3 2.2 -2.6 -1.1zM121.7 43l2.2 0.1 -1.3 2.2 -2.2 -0.1zM123.9 43.1l2.3 0.4 -1.4 2.1 -2.2 -0.3zM126.2 43.5l2.5 0.8 -1.5 1.9 -2.4 -0.6z" fill="#00ffc0"/><path d="M128.7 44.3l2.3 0.5 -1.5 1.8 -2.3 -0.4zM131 44.8l2.4 0.7 -1.5 1.7 -2.4 -0.6zM133.4 45.5l2.5 0.9 -1.7 1.2 -2.3 -0.4zM135.9 46.4l2.3 0.5 -1.6 1.5 -2.4 -0.8zM138.2 46.9l2.5 0.7 -1.7 1.4 -2.4 -0.6zM140.7 47.6l2.3 0.7 -1.6 1.4 -2.4 -0.7zM143 48.3l2.4 0.5 -1.6 1.7 -2.4 -0.8z" fill="#00ffff"/><path d="M145.4 48.8l2.5 1.1 -1.5 1.8 -2.6 -1.2zM147.9 49.9l2.4 0.6 -1.6 1.5 -2.3 -0.3zM150.3 50.5l2.4 0.7 -1.4 2 -2.6 -1.2zM152.7 51.2l2.6 1.3 -1.5 1.6 -2.5 -0.9zM155.3 52.5l2.6 1.3 -1.4 1.9 -2.7 -1.6z" fill="#00c0ff"/><path d="M157.9 53.8l2.7 1.6 -1.6 1.4 -2.5 -1.1zM160.6 55.4l2.6 1.3 -1.7 1 -2.5 -0.9zM163.2 56.7l2.5 0.8 -1.7 1.3 -2.5 -1.1zM165.7 57.5l2.4 0.6 -1.6 1.6 -2.5 -0.9z" fill="#0080ff"/><path d="M168.1 58.1l2.6 1.4 -1.8 1 -2.4 -0.8zM170.7 59.5l2.6 1.3 -1.7 1.2 -2.7 -1.5zM173.3 60.8l2.5 1 -1.6 1.4 -2.6 -1.2zM175.8 61.8l2.6 1.2 -1.7 1.2 -2.5 -1z" fill="#0040ff"/><path d="M178.4 63l2.7 1.5 -1.6 1.5 -2.8 -1.8zM181.1 64.5l2.6 1.4 -1.5 1.6 -2.7 -1.5zM183.7 65.9l2.5 0.9 -1.4 2.2 -2.6 -1.5zM186.2 66.8l2.5 0.9 -1.5 1.8 -2.4 -0.5z" fill="#0000ff"/><path d="M188.7 67.7l2.6 1.2 -1.6 1.7 -2.5 -1.1zM191.3 68.9l2.6 1.5 -1.6 1.6 -2.6 -1.4z" fill="#000080"/><path d="M193.9 70.4l-1.6 1.6 0.8 2.1 1.3 -2.4z" fill="#000080"/><path d="M92.7 40.5l2.4 0.5 -1.7 1.5 -2.2 -0.3zM95.1 41l2.2 0.2 -1.5 1.7 -2.4 -0.4zM97.3 41.2l2.2 0 -1.5 1.8 -2.2 -0.1zM99.5 41.2l2.1 -0.2 -1.4 2.2 -2.2 -0.2zM101.6 41l2.4 0.7 -1.5 1.9 -2.3 -0.4zM104 41.7l2.3 0.3 -1.4 2.1 -2.4 -0.5z" fill="#00ff80"/><path d="M106.3 42l2.2 0.3 -1.4 2.2 -2.2 -0.4zM108.5 42.3l2.3 0.4 -1.4 2 -2.3 -0.2zM110.8 42.7l2.3 0.2 -1.4 2.2 -2.3 -0.4zM113.1 42.9l2.3 0.5 -1.4 2.1 -2.3 -0.4zM115.4 43.4l2.4 0.7 -1.5 1.8 -2.3 -0.4zM117.8 44.1l2.6 1.1 -1.7 1.3 -2.4 -0.6zM120.4 45.2l2.2 0.1 -1.6 1.7 -2.3 -0.5zM122.6 45.3l2.2 0.3 -1.5 1.8 -2.3 -0.4zM124.8 45.6l2.4 0.6 -1.5 1.7 -2.4 -0.5zM127.2 46.2l2.3 0.4 -1.5 1.7 -2.3 -0.4z" fill="#00ffc0"/><path d="M129.5 46.6l2.4 0.6 -1.5 1.8 -2.4 -0.7zM131.9 47.2l2.3 0.4 -1.6 1.6 -2.2 -0.2zM134.2 47.6l2.4 0.8 -1.5 1.7 -2.5 -0.9zM136.6 48.4l2.4 0.6 -1.4 2 -2.5 -0.9zM139 49l2.4 0.7 -1.4 2.2 -2.4 -0.9zM141.4 49.7l2.4 0.8 -1.3 2.2 -2.5 -0.8zM143.8 50.5l2.6 1.2 -1.5 1.6 -2.4 -0.6z" fill="#00ffff"/><path d="M146.4 51.7l2.3 0.3 -1.5 2 -2.3 -0.7zM148.7 52l2.6 1.2 -1.6 1.7 -2.5 -0.9zM151.3 53.2l2.5 0.9 -1.6 1.6 -2.5 -0.8zM153.8 54.1l2.7 1.6 -1.8 1.2 -2.5 -1.2z" fill="#00c0ff"/><path d="M156.5 55.7l2.5 1.1 -1.6 1.4 -2.7 -1.3zM159 56.8l2.5 0.9 -1.7 1.3 -2.4 -0.8zM161.5 57.7l2.5 1.1 -1.6 1.4 -2.6 -1.2zM164 58.8l2.5 0.9 -1.6 1.6 -2.5 -1.1zM166.5 59.7l2.4 0.8 -1.4 2.1 -2.6 -1.3z" fill="#0080ff"/><path d="M168.9 60.5l2.7 1.5 -1.5 1.8 -2.6 -1.2zM171.6 62l2.6 1.2 -1.4 2 -2.7 -1.4zM174.2 63.2l2.5 1 -1.4 2.1 -2.5 -1.1zM176.7 64.2l2.8 1.8 -1.6 1.7 -2.6 -1.4z" fill="#0040ff"/><path d="M179.5 66l2.7 1.5 -1.7 1.5 -2.6 -1.3zM182.2 67.5l2.6 1.5 -1.6 1.3 -2.7 -1.3zM184.8 69l2.4 0.5 -1.5 1.9 -2.5 -1.1z" fill="#0000ff"/><path d="M187.2 69.5l2.5 1.1 -1.5 1.9 -2.5 -1.1zM189.7 70.6l2.6 1.4 -1.5 1.8 -2.6 -1.3zM192.3 72l2.7 1.4 -1.5 1.8 -2.7 -1.4z" fill="#000080"/><path d="M195 73.4l-1.5 1.8 0.5 1.4 1.2 -2.5z" fill="#000080"/><path d="M88.8 41.6l2.4 0.6 -1.6 1.6 -2.4 -0.8zM91.2 42.2l2.2 0.3 -1.6 1.2 -2.2 0.1zM93.4 42.5l2.4 0.4 -1.8 1.1 -2.2 -0.3zM95.8 42.9l2.2 0.1 -1.7 1.4 -2.3 -0.4zM98 43l2.2 0.2 -1.6 1.4 -2.3 -0.2zM100.2 43.2l2.3 0.4 -1.6 1.4 -2.3 -0.4zM102.5 43.6l2.4 0.5 -1.7 1.4 -2.3 -0.5zM104.9 44.1l2.2 0.4 -1.6 1.4 -2.3 -0.4zM107.1 44.5l2.3 0.2 -1.6 1.6 -2.3 -0.4z" fill="#00ff80"/><path d="M109.4 44.7l2.3 0.4 -1.7 1.3 -2.2 -0.1zM111.7 45.1l2.3 0.4 -1.6 1.4 -2.4 -0.5zM114 45.5l2.3 0.4 -1.7 1.3 -2.2 -0.3zM116.3 45.9l2.4 0.6 -1.7 1.2 -2.4 -0.5zM118.7 46.5l2.3 0.5 -1.7 1.2 -2.3 -0.5zM121 47l2.3 0.4 -1.6 1.4 -2.4 -0.6zM123.3 47.4l2.4 0.5 -1.6 1.6 -2.4 -0.7zM125.7 47.9l2.3 0.4 -1.6 1.7 -2.3 -0.5zM128 48.3l2.4 0.7 -1.6 1.6 -2.4 -0.6zM130.4 49l2.2 0.2 -1.4 2.1 -2.4 -0.7z" fill="#00ffc0"/><path d="M132.6 49.2l2.5 0.9 -1.4 2 -2.5 -0.8zM135.1 50.1l2.5 0.9 -1.6 1.7 -2.3 -0.6zM137.6 51l2.4 0.9 -1.4 2.1 -2.6 -1.3zM140 51.9l2.5 0.8 -1.4 2 -2.5 -0.7zM142.5 52.7l2.4 0.6 -1.5 1.9 -2.3 -0.5zM144.9 53.3l2.3 0.7 -1.4 1.9 -2.4 -0.7z" fill="#00ffff"/><path d="M147.2 54l2.5 0.9 -1.4 2 -2.5 -1zM149.7 54.9l2.5 0.8 -1.3 2.4 -2.6 -1.2zM152.2 55.7l2.5 1.2 -1.4 2.1 -2.4 -0.9zM154.7 56.9l2.7 1.3 -1.7 1.4 -2.4 -0.6z" fill="#00c0ff"/><path d="M157.4 58.2l2.4 0.8 -1.5 1.8 -2.6 -1.2zM159.8 59l2.6 1.2 -1.6 1.5 -2.5 -0.9zM162.4 60.2l2.5 1.1 -1.5 1.8 -2.6 -1.4zM164.9 61.3l2.6 1.3 -1.5 1.7 -2.6 -1.2z" fill="#0080ff"/><path d="M167.5 62.6l2.6 1.2 -1.4 2 -2.7 -1.5zM170.1 63.8l2.7 1.4 -1.5 1.9 -2.6 -1.3zM172.8 65.2l2.5 1.1 -1.5 1.9 -2.5 -1.1zM175.3 66.3l2.6 1.4 -1.4 1.9 -2.7 -1.4z" fill="#0040ff"/><path d="M177.9 67.7l2.6 1.3 -1.4 1.8 -2.6 -1.2zM180.5 69l2.7 1.3 -1.5 1.8 -2.6 -1.3zM183.2 70.3l2.5 1.1 -1.4 2.1 -2.6 -1.4zM185.7 71.4l2.5 1.1 -1.3 2.2 -2.6 -1.2z" fill="#0000ff"/><path d="M188.2 72.5l2.6 1.3 -1.3 2.1 -2.6 -1.2zM190.8 73.8l2.7 1.4 -1.4 2.3 -2.6 -1.6zM193.5 75.2l2.6 1.4 -1.3 2.3 -2.7 -1.4z" fill="#000080"/><path d="M196.1 76.6l-1.3 2.3 0.1 0.2 1.2 -2.5z" fill="#000080"/><path d="M87.2 43l2.4 0.8 -1.7 1.1 -2.3 -0.2zM89.6 43.8l2.2 -0.1 -1.7 1.4 -2.2 -0.2zM91.8 43.7l2.2 0.3 -1.6 1.4 -2.3 -0.3zM94 44l2.3 0.4 -1.6 1.5 -2.3 -0.5zM96.3 44.4l2.3 0.2 -1.6 1.7 -2.3 -0.4zM98.6 44.6l2.3 0.4 -1.6 1.7 -2.3 -0.4zM100.9 45l2.3 0.5 -1.6 1.4 -2.3 -0.2zM103.2 45.5l2.3 0.4 -1.6 1.5 -2.3 -0.5zM105.5 45.9l2.3 0.4 -1.6 1.3 -2.3 -0.2zM107.8 46.3l2.2 0.1 -1.6 1.5 -2.2 -0.3zM110 46.4l2.4 0.5 -1.7 1.2 -2.3 -0.2zM112.4 46.9l2.2 0.3 -1.7 1.1 -2.2 -0.2z" fill="#00ff80"/><path d="M114.6 47.2l2.4 0.5 -1.7 1.2 -2.4 -0.6zM117 47.7l2.3 0.5 -1.6 1.4 -2.4 -0.7zM119.3 48.2l2.4 0.6 -1.6 1.5 -2.4 -0.7zM121.7 48.8l2.4 0.7 -1.6 1.7 -2.4 -0.9zM124.1 49.5l2.3 0.5 -1.4 1.9 -2.5 -0.7zM126.4 50l2.4 0.6 -1.4 2.1 -2.4 -0.8zM128.8 50.6l2.4 0.7 -1.5 1.7 -2.3 -0.3z" fill="#00ffc0"/><path d="M131.2 51.3l2.5 0.8 -1.4 2.2 -2.6 -1.3zM133.7 52.1l2.3 0.6 -1.2 2.6 -2.5 -1zM136 52.7l2.6 1.3 -1.4 2.1 -2.4 -0.8zM138.6 54l2.5 0.7 -1.4 2.2 -2.5 -0.8zM141.1 54.7l2.3 0.5 -1.3 2.5 -2.4 -0.8zM143.4 55.2l2.4 0.7 -1.3 2.4 -2.4 -0.6z" fill="#00ffff"/><path d="M145.8 55.9l2.5 1 -1.5 1.9 -2.3 -0.5zM148.3 56.9l2.6 1.2 -1.6 1.5 -2.5 -0.8zM150.9 58.1l2.4 0.9 -1.6 1.5 -2.4 -0.9zM153.3 59l2.4 0.6 -1.5 1.7 -2.5 -0.8zM155.7 59.6l2.6 1.2 -1.5 1.7 -2.6 -1.2z" fill="#00c0ff"/><path d="M158.3 60.8l2.5 0.9 -1.5 1.8 -2.5 -1zM160.8 61.7l2.6 1.4 -1.6 1.5 -2.5 -1.1zM163.4 63.1l2.6 1.2 -1.6 1.6 -2.6 -1.3zM166 64.3l2.7 1.5 -1.6 1.6 -2.7 -1.5z" fill="#0080ff"/><path d="M168.7 65.8l2.6 1.3 -1.5 1.7 -2.7 -1.4zM171.3 67.1l2.5 1.1 -1.4 1.9 -2.6 -1.3zM173.8 68.2l2.7 1.4 -1.6 1.5 -2.5 -1zM176.5 69.6l2.6 1.2 -1.6 1.6 -2.6 -1.3z" fill="#0040ff"/><path d="M179.1 70.8l2.6 1.3 -1.6 1.7 -2.6 -1.4zM181.7 72.1l2.6 1.4 -1.6 1.5 -2.6 -1.2zM184.3 73.5l2.6 1.2 -1.6 1.6 -2.6 -1.3z" fill="#0000ff"/><path d="M186.9 74.7l2.6 1.2 -1.6 1.7 -2.6 -1.3zM189.5 75.9l2.6 1.6 -1.5 1.6 -2.7 -1.5zM192.1 77.5l2.7 1.4 -1.5 1.9 -2.7 -1.7z" fill="#000080"/><path d="M194.8 78.9l-1.5 1.9 0.3 0.8 1.3 -2.5z" fill="#000080"/><path d="M83.2 44l2.4 0.7 -1.4 2 -2.3 -0.4z" fill="#00ff00"/><path d="M85.6 44.7l2.3 0.2 -1.5 1.9 -2.2 -0.1zM87.9 44.9l2.2 0.2 -1.5 1.7 -2.2 0zM90.1 45.1l2.3 0.3 -1.5 1.9 -2.3 -0.5zM92.4 45.4l2.3 0.5 -1.5 1.7 -2.3 -0.3zM94.7 45.9l2.3 0.4 -1.6 1.4 -2.2 -0.1zM97 46.3l2.3 0.4 -1.5 1.8 -2.4 -0.8zM99.3 46.7l2.3 0.2 -1.5 1.9 -2.3 -0.3zM101.6 46.9l2.3 0.5 -1.6 1.6 -2.2 -0.2zM103.9 47.4l2.3 0.2 -1.6 1.6 -2.3 -0.2zM106.2 47.6l2.2 0.3 -1.5 1.7 -2.3 -0.4zM108.4 47.9l2.3 0.2 -1.5 2 -2.3 -0.5zM110.7 48.1l2.2 0.2 -1.6 1.6 -2.1 0.2zM112.9 48.3l2.4 0.6 -1.5 1.9 -2.5 -0.9zM115.3 48.9l2.4 0.7 -1.6 1.7 -2.3 -0.5z" fill="#00ff80"/><path d="M117.7 49.6l2.4 0.7 -1.7 1.3 -2.3 -0.3zM120.1 50.3l2.4 0.9 -1.6 1.3 -2.5 -0.9zM122.5 51.2l2.5 0.7 -1.7 1.4 -2.4 -0.8zM125 51.9l2.4 0.8 -1.6 1.4 -2.5 -0.8zM127.4 52.7l2.3 0.3 -1.6 1.6 -2.3 -0.5zM129.7 53l2.6 1.3 -1.6 1.6 -2.6 -1.3z" fill="#00ffc0"/><path d="M132.3 54.3l2.5 1 -1.6 1.5 -2.5 -0.9zM134.8 55.3l2.4 0.8 -1.6 1.5 -2.4 -0.8zM137.2 56.1l2.5 0.8 -1.5 1.8 -2.6 -1.1zM139.7 56.9l2.4 0.8 -1.5 1.7 -2.4 -0.7zM142.1 57.7l2.4 0.6 -1.6 1.6 -2.3 -0.5zM144.5 58.3l2.3 0.5 -1.5 1.6 -2.4 -0.5z" fill="#00ffff"/><path d="M146.8 58.8l2.5 0.8 -1.6 1.6 -2.4 -0.8zM149.3 59.6l2.4 0.9 -1.5 1.6 -2.5 -0.9zM151.7 60.5l2.5 0.8 -1.5 1.8 -2.5 -1zM154.2 61.3l2.6 1.2 -1.6 1.6 -2.5 -1zM156.8 62.5l2.5 1 -1.6 1.7 -2.5 -1.1z" fill="#00c0ff"/><path d="M159.3 63.5l2.5 1.1 -1.5 1.7 -2.6 -1.1zM161.8 64.6l2.6 1.3 -1.5 1.7 -2.6 -1.3zM164.4 65.9l2.7 1.5 -1.5 1.8 -2.7 -1.6z" fill="#0080ff"/><path d="M167.1 67.4l2.7 1.4 -1.6 1.7 -2.6 -1.3zM169.8 68.8l2.6 1.3 -1.6 1.5 -2.6 -1.1zM172.4 70.1l2.5 1 -1.5 2 -2.6 -1.5zM174.9 71.1l2.6 1.3 -1.4 2.1 -2.7 -1.4z" fill="#0040ff"/><path d="M177.5 72.4l2.6 1.4 -1.4 2 -2.6 -1.3zM180.1 73.8l2.6 1.2 -1.5 1.8 -2.5 -1zM182.7 75l2.6 1.3 -1.5 1.7 -2.6 -1.2zM185.3 76.3l2.6 1.3 -1.6 1.6 -2.5 -1.2z" fill="#0000ff"/><path d="M187.9 77.6l2.7 1.5 -1.6 1.6 -2.7 -1.5zM190.6 79.1l2.7 1.7 -1.7 1.3 -2.6 -1.4zM193.3 80.8l2.5 0.8 -1.5 1.8 -2.7 -1.3z" fill="#000080"/><path d="M195.8 81.6l-1.5 1.8 0.2 0.7 1.3 -2.5z" fill="#000080"/><path d="M81.9 46.3l2.3 0.4 -1.6 1.6 -2.3 -0.4zM84.2 46.7l2.2 0.1 -1.5 1.7 -2.3 -0.2zM86.4 46.8l2.2 0 -1.4 2.1 -2.3 -0.4zM88.6 46.8l2.3 0.5 -1.4 1.9 -2.3 -0.3z" fill="#00ff00"/><path d="M90.9 47.3l2.3 0.3 -1.6 1.6 -2.1 0zM93.2 47.6l2.2 0.1 -1.5 2 -2.3 -0.5zM95.4 47.7l2.4 0.8 -1.5 1.7 -2.4 -0.5zM97.8 48.5l2.3 0.3 -1.5 1.8 -2.3 -0.4zM100.1 48.8l2.2 0.2 -1.7 1.2 -2 0.4zM102.3 49l2.3 0.2 -1.7 1.2 -2.3 -0.2zM104.6 49.2l2.3 0.4 -1.6 1.6 -2.4 -0.8zM106.9 49.6l2.3 0.5 -1.7 1.3 -2.2 -0.2zM109.2 50.1l2.1 -0.2 -1.4 1.9 -2.4 -0.4zM111.3 49.9l2.5 0.9 -1.6 1.6 -2.3 -0.6zM113.8 50.8l2.3 0.5 -1.5 1.6 -2.4 -0.5zM116.1 51.3l2.3 0.3 -1.5 1.9 -2.3 -0.6z" fill="#00ff80"/><path d="M118.4 51.6l2.5 0.9 -1.6 1.6 -2.4 -0.6zM120.9 52.5l2.4 0.8 -1.5 1.7 -2.5 -0.9zM123.3 53.3l2.5 0.8 -1.7 1.4 -2.3 -0.5zM125.8 54.1l2.3 0.5 -1.6 1.5 -2.4 -0.6zM128.1 54.6l2.6 1.3 -1.7 1.2 -2.5 -1zM130.7 55.9l2.5 0.9 -1.7 1.2 -2.5 -0.9z" fill="#00ffc0"/><path d="M133.2 56.8l2.4 0.8 -1.7 1 -2.4 -0.6zM135.6 57.6l2.6 1.1 -1.8 0.9 -2.5 -1zM138.2 58.7l2.4 0.7 -1.9 0.6 -2.3 -0.4zM140.6 59.4l2.3 0.5 -1.8 1 -2.4 -0.9zM142.9 59.9l2.4 0.5 -1.7 1.3 -2.5 -0.8zM145.3 60.4l2.4 0.8 -1.6 1.6 -2.5 -1.1z" fill="#00ffff"/><path d="M147.7 61.2l2.5 0.9 -1.6 1.7 -2.5 -1zM150.2 62.1l2.5 1 -1.4 2.1 -2.7 -1.4zM152.7 63.1l2.5 1 -1.5 1.9 -2.4 -0.8zM155.2 64.1l2.5 1.1 -1.5 1.7 -2.5 -0.9zM157.7 65.2l2.6 1.1 -1.6 1.7 -2.5 -1.1z" fill="#00c0ff"/><path d="M160.3 66.3l2.6 1.3 -1.6 1.6 -2.6 -1.2zM162.9 67.6l2.7 1.6 -1.6 1.4 -2.7 -1.4zM165.6 69.2l2.6 1.3 -1.6 1.5 -2.6 -1.4z" fill="#0080ff"/><path d="M168.2 70.5l2.6 1.1 -1.5 1.9 -2.7 -1.5zM170.8 71.6l2.6 1.5 -1.5 1.7 -2.6 -1.3zM173.4 73.1l2.7 1.4 -1.6 1.7 -2.6 -1.4zM176.1 74.5l2.6 1.3 -1.6 1.6 -2.6 -1.2z" fill="#0040ff"/><path d="M178.7 75.8l2.5 1 -1.5 1.9 -2.6 -1.3zM181.2 76.8l2.6 1.2 -1.6 1.6 -2.5 -0.9zM183.8 78l2.5 1.2 -1.5 1.8 -2.6 -1.4z" fill="#0000ff"/><path d="M186.3 79.2l2.7 1.5 -1.5 1.7 -2.7 -1.4zM189 80.7l2.6 1.4 -1.5 1.7 -2.6 -1.4zM191.6 82.1l2.7 1.3 -1.6 1.7 -2.6 -1.3z" fill="#000080"/><path d="M194.3 83.4l-1.6 1.7 0.5 1.4 1.3 -2.4z" fill="#000080"/><path d="M80.3 47.9l2.3 0.4 -1.8 0.9 -2.2 0zM82.6 48.3l2.3 0.2 -1.6 1.6 -2.5 -0.9zM84.9 48.5l2.3 0.4 -1.5 1.8 -2.4 -0.6zM87.2 48.9l2.3 0.3 -1.5 1.9 -2.3 -0.4zM89.5 49.2l2.1 0 -1.4 2 -2.2 -0.1zM91.6 49.2l2.3 0.5 -1.4 1.9 -2.3 -0.4z" fill="#00ff00"/><path d="M93.9 49.7l2.4 0.5 -1.5 1.7 -2.3 -0.3zM96.3 50.2l2.3 0.4 -1.6 1.5 -2.2 -0.2zM98.6 50.6l2 -0.4 -1.4 1.9 -2.2 0zM100.6 50.2l2.3 0.2 -1.5 1.9 -2.2 -0.2zM102.9 50.4l2.4 0.8 -1.6 1.6 -2.3 -0.5zM105.3 51.2l2.2 0.2 -1.5 1.8 -2.3 -0.4zM107.5 51.4l2.4 0.4 -1.6 1.7 -2.3 -0.3zM109.9 51.8l2.3 0.6 -1.5 1.6 -2.4 -0.5zM112.2 52.4l2.4 0.5 -1.5 1.9 -2.4 -0.8zM114.6 52.9l2.3 0.6 -1.6 1.5 -2.2 -0.2zM116.9 53.5l2.4 0.6 -1.6 1.5 -2.4 -0.6zM119.3 54.1l2.5 0.9 -1.7 1.4 -2.4 -0.8z" fill="#00ff80"/><path d="M121.8 55l2.3 0.5 -1.5 1.8 -2.5 -0.9zM124.1 55.5l2.4 0.6 -1.5 1.8 -2.4 -0.6zM126.5 56.1l2.5 1 -1.6 1.4 -2.4 -0.6zM129 57.1l2.5 0.9 -1.8 1.1 -2.3 -0.6zM131.5 58l2.4 0.6 -1.7 1.3 -2.5 -0.8zM133.9 58.6l2.5 1 -1.8 1 -2.4 -0.7z" fill="#00ffc0"/><path d="M136.4 59.6l2.3 0.4 -1.6 1.5 -2.5 -0.9zM138.7 60l2.4 0.9 -1.5 1.5 -2.5 -0.9zM141.1 60.9l2.5 0.8 -1.6 1.6 -2.4 -0.9zM143.6 61.7l2.5 1.1 -1.6 1.5 -2.5 -1zM146.1 62.8l2.5 1 -1.4 2 -2.7 -1.5z" fill="#00ffff"/><path d="M148.6 63.8l2.7 1.4 -1.5 1.8 -2.6 -1.2zM151.3 65.2l2.4 0.8 -1.4 2 -2.5 -1zM153.7 66l2.5 0.9 -1.5 1.9 -2.4 -0.8zM156.2 66.9l2.5 1.1 -1.5 1.7 -2.5 -0.9z" fill="#00c0ff"/><path d="M158.7 68l2.6 1.2 -1.5 1.7 -2.6 -1.2zM161.3 69.2l2.7 1.4 -1.5 1.9 -2.7 -1.6zM164 70.6l2.6 1.4 -1.4 2.1 -2.7 -1.6zM166.6 72l2.7 1.5 -1.4 2.1 -2.7 -1.5z" fill="#0080ff"/><path d="M169.3 73.5l2.6 1.3 -1.4 2 -2.6 -1.2zM171.9 74.8l2.6 1.4 -1.5 1.8 -2.5 -1.2zM174.5 76.2l2.6 1.2 -1.5 1.7 -2.6 -1.1z" fill="#0040ff"/><path d="M177.1 77.4l2.6 1.3 -1.6 1.5 -2.5 -1.1zM179.7 78.7l2.5 0.9 -1.4 2 -2.7 -1.4zM182.2 79.6l2.6 1.4 -1.3 2.2 -2.7 -1.6zM184.8 81l2.7 1.4 -1.5 2 -2.5 -1.2z" fill="#0000ff"/><path d="M187.5 82.4l2.6 1.4 -1.4 2 -2.7 -1.4zM190.1 83.8l2.6 1.3 -1.5 1.6 -2.5 -0.9zM192.7 85.1l2.6 1.3 -1.6 1.4 -2.5 -1.1z" fill="#000080"/><path d="M195.3 86.4l-1.6 1.4 0.4 1.2 1.3 -2.5z" fill="#000080"/><path d="M76.4 49.1l2.2 0.1 -1.6 1.4 -2.4 -0.7zM78.6 49.2l2.2 0 -1.6 1.4 -2.2 0zM80.8 49.2l2.5 0.9 -1.7 1.3 -2.4 -0.8zM83.3 50.1l2.4 0.6 -1.6 1.6 -2.5 -0.9zM85.7 50.7l2.3 0.4 -1.6 1.6 -2.3 -0.4zM88 51.1l2.2 0.1 -1.5 2 -2.3 -0.5zM90.2 51.2l2.3 0.4 -1.6 1.5 -2.2 0.1zM92.5 51.6l2.3 0.3 -1.7 1.5 -2.2 -0.3zM94.8 51.9l2.2 0.2 -1.6 1.6 -2.3 -0.3zM97 52.1l2.2 0 -1.6 1.7 -2.2 -0.1zM99.2 52.1l2.2 0.2 -1.6 1.5 -2.2 0z" fill="#00ff00"/><path d="M101.4 52.3l2.3 0.5 -1.6 1.4 -2.3 -0.4zM103.7 52.8l2.3 0.4 -1.5 1.7 -2.4 -0.7zM106 53.2l2.3 0.3 -1.5 1.7 -2.3 -0.3zM108.3 53.5l2.4 0.5 -1.7 1.5 -2.2 -0.3zM110.7 54l2.4 0.8 -1.7 1.4 -2.4 -0.7zM113.1 54.8l2.2 0.2 -1.5 1.8 -2.4 -0.6zM115.3 55l2.4 0.6 -1.5 1.8 -2.4 -0.6zM117.7 55.6l2.4 0.8 -1.5 1.8 -2.4 -0.8zM120.1 56.4l2.5 0.9 -1.5 1.7 -2.5 -0.8z" fill="#00ff80"/><path d="M122.6 57.3l2.4 0.6 -1.6 1.5 -2.3 -0.4zM125 57.9l2.4 0.6 -1.6 1.5 -2.4 -0.6zM127.4 58.5l2.3 0.6 -1.4 1.9 -2.5 -1zM129.7 59.1l2.5 0.8 -1.5 1.8 -2.4 -0.7zM132.2 59.9l2.4 0.7 -1.4 2 -2.5 -0.9zM134.6 60.6l2.5 0.9 -1.5 2 -2.4 -0.9z" fill="#00ffc0"/><path d="M137.1 61.5l2.5 0.9 -1.6 1.7 -2.4 -0.6zM139.6 62.4l2.4 0.9 -1.5 1.8 -2.5 -1zM142 63.3l2.5 1 -1.5 1.6 -2.5 -0.8zM144.5 64.3l2.7 1.5 -1.6 1.5 -2.6 -1.4z" fill="#00ffff"/><path d="M147.2 65.8l2.6 1.2 -1.7 1.2 -2.5 -0.9zM149.8 67l2.5 1 -1.7 1.2 -2.5 -1zM152.3 68l2.4 0.8 -1.5 1.6 -2.6 -1.2zM154.7 68.8l2.5 0.9 -1.5 1.7 -2.5 -1zM157.2 69.7l2.6 1.2 -1.5 1.8 -2.6 -1.3z" fill="#00c0ff"/><path d="M159.8 70.9l2.7 1.6 -1.4 2.1 -2.8 -1.9zM162.5 72.5l2.7 1.6 -1.4 2.1 -2.7 -1.6zM165.2 74.1l2.7 1.5 -1.5 1.9 -2.6 -1.3z" fill="#0080ff"/><path d="M167.9 75.6l2.6 1.2 -1.5 2.1 -2.6 -1.4zM170.5 76.8l2.5 1.2 -1.5 1.9 -2.5 -1zM173 78l2.6 1.1 -1.6 1.7 -2.5 -0.9zM175.6 79.1l2.5 1.1 -1.5 1.7 -2.6 -1.1z" fill="#0040ff"/><path d="M178.1 80.2l2.7 1.4 -1.5 1.8 -2.7 -1.5zM180.8 81.6l2.7 1.6 -1.5 1.8 -2.7 -1.6zM183.5 83.2l2.5 1.2 -1.3 2.2 -2.7 -1.6z" fill="#0000ff"/><path d="M186 84.4l2.7 1.4 -1.4 2.1 -2.6 -1.3zM188.7 85.8l2.5 0.9 -1.5 1.8 -2.4 -0.6zM191.2 86.7l2.5 1.1 -1.4 2.2 -2.6 -1.5z" fill="#000080"/><path d="M193.7 87.8l-1.4 2.2 0.5 1.5 1.3 -2.5z" fill="#000080"/><path d="M74.6 49.9l2.4 0.7 -1.6 1.4 -2.3 -0.3zM77 50.6l2.2 0 -1.5 1.8 -2.3 -0.4zM79.2 50.6l2.4 0.8 -1.5 1.6 -2.4 -0.6zM81.6 51.4l2.5 0.9 -1.6 1.4 -2.4 -0.7zM84.1 52.3l2.3 0.4 -1.6 1.4 -2.3 -0.4zM86.4 52.7l2.3 0.5 -1.6 1.3 -2.3 -0.4zM88.7 53.2l2.2 -0.1 -1.7 1.4 -2.1 0zM90.9 53.1l2.2 0.3 -1.5 1.6 -2.4 -0.5zM93.1 53.4l2.3 0.3 -1.7 1.1 -2.1 0.2zM95.4 53.7l2.2 0.1 -1.6 1.4 -2.3 -0.4zM97.6 53.8l2.2 0 -1.5 1.8 -2.3 -0.4zM99.8 53.8l2.3 0.4 -1.5 1.8 -2.3 -0.4zM102.1 54.2l2.4 0.7 -1.6 1.5 -2.3 -0.4z" fill="#00ff00"/><path d="M104.5 54.9l2.3 0.3 -1.6 1.6 -2.3 -0.4zM106.8 55.2l2.2 0.3 -1.4 1.8 -2.4 -0.5zM109 55.5l2.4 0.7 -1.3 2.1 -2.5 -1zM111.4 56.2l2.4 0.6 -1.5 1.8 -2.2 -0.3zM113.8 56.8l2.4 0.6 -1.4 2 -2.5 -0.8zM116.2 57.4l2.4 0.8 -1.3 2.2 -2.5 -1zM118.6 58.2l2.5 0.8 -1.5 1.9 -2.3 -0.5zM121.1 59l2.3 0.4 -1.4 2.1 -2.4 -0.6z" fill="#00ff80"/><path d="M123.4 59.4l2.4 0.6 -1.5 2.1 -2.3 -0.6zM125.8 60l2.5 1 -1.5 2 -2.5 -0.9zM128.3 61l2.4 0.7 -1.5 1.7 -2.4 -0.4zM130.7 61.7l2.5 0.9 -1.6 1.6 -2.4 -0.8zM133.2 62.6l2.4 0.9 -1.5 1.8 -2.5 -1.1zM135.6 63.5l2.4 0.6 -1.5 1.8 -2.4 -0.6z" fill="#00ffc0"/><path d="M138 64.1l2.5 1 -1.6 1.4 -2.4 -0.6zM140.5 65.1l2.5 0.8 -1.6 1.8 -2.5 -1.2zM143 65.9l2.6 1.4 -1.6 1.4 -2.6 -1zM145.6 67.3l2.5 0.9 -1.6 1.6 -2.5 -1.1z" fill="#00ffff"/><path d="M148.1 68.2l2.5 1 -1.5 1.8 -2.6 -1.2zM150.6 69.2l2.6 1.2 -1.7 1.4 -2.4 -0.8zM153.2 70.4l2.5 1 -1.5 1.8 -2.7 -1.4zM155.7 71.4l2.6 1.3 -1.5 1.9 -2.6 -1.4z" fill="#00c0ff"/><path d="M158.3 72.7l2.8 1.9 -1.6 1.6 -2.7 -1.6zM161.1 74.6l2.7 1.6 -1.5 1.7 -2.8 -1.7zM163.8 76.2l2.6 1.3 -1.4 2 -2.7 -1.6z" fill="#0080ff"/><path d="M166.4 77.5l2.6 1.4 -1.4 1.9 -2.6 -1.3zM169 78.9l2.5 1 -1.5 1.7 -2.4 -0.8zM171.5 79.9l2.5 0.9 -1.5 1.6 -2.5 -0.8zM174 80.8l2.6 1.1 -1.4 2.3 -2.7 -1.8z" fill="#0040ff"/><path d="M176.6 81.9l2.7 1.5 -1.4 2.2 -2.7 -1.4zM179.3 83.4l2.7 1.6 -1.4 2.1 -2.7 -1.5zM182 85l2.7 1.6 -1.5 1.9 -2.6 -1.4z" fill="#0000ff"/><path d="M184.7 86.6l2.6 1.3 -1.5 1.9 -2.6 -1.3zM187.3 87.9l2.4 0.6 -1.3 2.6 -2.6 -1.3zM189.7 88.5l2.6 1.5 -1.3 2.3 -2.6 -1.2z" fill="#000080"/><path d="M192.3 90l-1.3 2.3 0.6 1.7 1.2 -2.5z" fill="#000080"/><path d="M73.1 51.7l2.3 0.3 -1.6 1.5 -2.2 0.1zM75.4 52l2.3 0.4 -1.6 1.7 -2.3 -0.6z" fill="#80ff00"/><path d="M77.7 52.4l2.4 0.6 -1.6 1.7 -2.4 -0.6zM80.1 53l2.4 0.7 -1.6 1.6 -2.4 -0.6zM82.5 53.7l2.3 0.4 -1.6 1.5 -2.3 -0.3zM84.8 54.1l2.3 0.4 -1.7 1.2 -2.2 -0.1zM87.1 54.5l2.1 0 -1.6 1.5 -2.2 -0.3zM89.2 54.5l2.4 0.5 -1.7 1.2 -2.3 -0.2zM91.6 55l2.1 -0.2 -1.6 1.5 -2.2 -0.1zM93.7 54.8l2.3 0.4 -1.6 1.5 -2.3 -0.4zM96 55.2l2.3 0.4 -1.5 1.8 -2.4 -0.7zM98.3 55.6l2.3 0.4 -1.5 1.8 -2.3 -0.4zM100.6 56l2.3 0.4 -1.4 2.1 -2.4 -0.7zM102.9 56.4l2.3 0.4 -1.4 2.2 -2.3 -0.5z" fill="#00ff00"/><path d="M105.2 56.8l2.4 0.5 -1.5 2 -2.3 -0.3zM107.6 57.3l2.5 1 -1.7 1.5 -2.3 -0.5zM110.1 58.3l2.2 0.3 -1.4 2 -2.5 -0.8zM112.3 58.6l2.5 0.8 -1.5 1.8 -2.4 -0.6zM114.8 59.4l2.5 1 -1.6 1.5 -2.4 -0.7zM117.3 60.4l2.3 0.5 -1.6 1.5 -2.3 -0.5zM119.6 60.9l2.4 0.6 -1.5 1.7 -2.5 -0.8zM122 61.5l2.3 0.6 -1.5 1.6 -2.3 -0.5z" fill="#00ff80"/><path d="M124.3 62.1l2.5 0.9 -1.6 1.3 -2.4 -0.6zM126.8 63l2.4 0.4 -1.5 1.9 -2.5 -1zM129.2 63.4l2.4 0.8 -1.5 1.9 -2.4 -0.8zM131.6 64.2l2.5 1.1 -1.6 1.5 -2.4 -0.7zM134.1 65.3l2.4 0.6 -1.5 1.8 -2.5 -0.9zM136.5 65.9l2.4 0.6 -1.5 1.8 -2.4 -0.6z" fill="#00ffc0"/><path d="M138.9 66.5l2.5 1.2 -1.6 1.5 -2.4 -0.9zM141.4 67.7l2.6 1 -1.6 1.7 -2.6 -1.2zM144 68.7l2.5 1.1 -1.5 1.7 -2.6 -1.1zM146.5 69.8l2.6 1.2 -1.6 1.6 -2.5 -1.1z" fill="#00ffff"/><path d="M149.1 71l2.4 0.8 -1.4 2.1 -2.6 -1.3zM151.5 71.8l2.7 1.4 -1.5 1.8 -2.6 -1.1zM154.2 73.2l2.6 1.4 -1.5 1.7 -2.6 -1.3zM156.8 74.6l2.7 1.6 -1.5 1.6 -2.7 -1.5z" fill="#00c0ff"/><path d="M159.5 76.2l2.8 1.7 -1.6 1.7 -2.7 -1.8zM162.3 77.9l2.7 1.6 -1.7 1.4 -2.6 -1.3zM165 79.5l2.6 1.3 -1.6 1.6 -2.7 -1.5z" fill="#0080ff"/><path d="M167.6 80.8l2.4 0.8 -1.4 1.9 -2.6 -1.1zM170 81.6l2.5 0.8 -1.4 2.4 -2.5 -1.3zM172.5 82.4l2.7 1.8 -1.4 1.9 -2.7 -1.3zM175.2 84.2l2.7 1.4 -1.5 1.8 -2.6 -1.3z" fill="#0040ff"/><path d="M177.9 85.6l2.7 1.5 -1.5 1.8 -2.7 -1.5zM180.6 87.1l2.6 1.4 -1.5 1.7 -2.6 -1.3zM183.2 88.5l2.6 1.3 -1.5 1.9 -2.6 -1.5z" fill="#0000ff"/><path d="M185.8 89.8l2.6 1.3 -1.5 1.7 -2.6 -1.1zM188.4 91.1l2.6 1.2 -1.6 1.6 -2.5 -1.1z" fill="#000080"/><path d="M191 92.3l-1.6 1.6 0.9 2.6 1.3 -2.5z" fill="#000080"/><path d="M71.6 53.6l2.2 -0.1 -1.6 1.6 -2.3 -0.3zM73.8 53.5l2.3 0.6 -1.6 1.3 -2.3 -0.3zM76.1 54.1l2.4 0.6 -1.7 1.2 -2.3 -0.5zM78.5 54.7l2.4 0.6 -1.7 1.3 -2.4 -0.7z" fill="#80ff00"/><path d="M80.9 55.3l2.3 0.3 -1.8 1.2 -2.2 -0.2zM83.2 55.6l2.2 0.1 -1.7 1.2 -2.3 -0.1zM85.4 55.7l2.2 0.3 -1.6 1.4 -2.3 -0.5zM87.6 56l2.3 0.2 -1.6 1.5 -2.3 -0.3zM89.9 56.2l2.2 0.1 -1.5 1.9 -2.3 -0.5zM92.1 56.3l2.3 0.4 -1.5 1.8 -2.3 -0.3zM94.4 56.7l2.4 0.7 -1.5 1.8 -2.4 -0.7zM96.8 57.4l2.3 0.4 -1.6 1.5 -2.2 -0.1zM99.1 57.8l2.4 0.7 -1.6 1.6 -2.4 -0.8zM101.5 58.5l2.3 0.5 -1.6 1.4 -2.3 -0.3zM103.8 59l2.3 0.3 -1.5 1.7 -2.4 -0.6zM106.1 59.3l2.3 0.5 -1.5 1.7 -2.3 -0.5z" fill="#00ff00"/><path d="M108.4 59.8l2.5 0.8 -1.6 1.6 -2.4 -0.7zM110.9 60.6l2.4 0.6 -1.6 1.7 -2.4 -0.7zM113.3 61.2l2.4 0.7 -1.6 1.6 -2.4 -0.6zM115.7 61.9l2.3 0.5 -1.6 1.4 -2.3 -0.3zM118 62.4l2.5 0.8 -1.6 1.7 -2.5 -1.1zM120.5 63.2l2.3 0.5 -1.6 1.4 -2.3 -0.2zM122.8 63.7l2.4 0.6 -1.6 1.6 -2.4 -0.8z" fill="#00ff80"/><path d="M125.2 64.3l2.5 1 -1.6 1.4 -2.5 -0.8zM127.7 65.3l2.4 0.8 -1.6 1.5 -2.4 -0.9zM130.1 66.1l2.4 0.7 -1.5 1.8 -2.5 -1zM132.5 66.8l2.5 0.9 -1.6 1.6 -2.4 -0.7zM135 67.7l2.4 0.6 -1.5 1.8 -2.5 -0.8zM137.4 68.3l2.4 0.9 -1.5 1.8 -2.4 -0.9z" fill="#00ffc0"/><path d="M139.8 69.2l2.6 1.2 -1.6 1.5 -2.5 -0.9zM142.4 70.4l2.6 1.1 -1.7 1.4 -2.5 -1zM145 71.5l2.5 1.1 -1.6 1.3 -2.6 -1zM147.5 72.6l2.6 1.3 -1.7 1.2 -2.5 -1.2z" fill="#00ffff"/><path d="M150.1 73.9l2.6 1.1 -1.6 1.6 -2.7 -1.5zM152.7 75l2.6 1.3 -1.5 1.8 -2.7 -1.5zM155.3 76.3l2.7 1.5 -1.5 2 -2.7 -1.7z" fill="#00c0ff"/><path d="M158 77.8l2.7 1.8 -1.5 1.6 -2.7 -1.4zM160.7 79.6l2.6 1.3 -1.5 1.8 -2.6 -1.5zM163.3 80.9l2.7 1.5 -1.5 1.7 -2.7 -1.4z" fill="#0080ff"/><path d="M166 82.4l2.6 1.1 -1.5 1.9 -2.6 -1.3zM168.6 83.5l2.5 1.3 -1.4 1.8 -2.6 -1.2zM171.1 84.8l2.7 1.3 -1.5 1.9 -2.6 -1.4zM173.8 86.1l2.6 1.3 -1.6 1.7 -2.5 -1.1z" fill="#0040ff"/><path d="M176.4 87.4l2.7 1.5 -1.7 1.4 -2.6 -1.2zM179.1 88.9l2.6 1.3 -1.6 1.7 -2.7 -1.6zM181.7 90.2l2.6 1.5 -1.6 1.5 -2.6 -1.3zM184.3 91.7l2.6 1.1 -1.6 1.4 -2.6 -1z" fill="#0000ff"/><path d="M186.9 92.8l2.5 1.1 -1.6 1.5 -2.5 -1.2z" fill="#000080"/><path d="M189.4 93.9l-1.6 1.5 1.2 3.5 1.3 -2.4z" fill="#000080"/><path d="M69.9 54.8l2.3 0.3 -1.8 1 -2.2 -0.2zM72.2 55.1l2.3 0.3 -1.7 1.4 -2.4 -0.7zM74.5 55.4l2.3 0.5 -1.6 1.5 -2.4 -0.6zM76.8 55.9l2.4 0.7 -1.7 1.2 -2.3 -0.4zM79.2 56.6l2.2 0.2 -1.6 1.4 -2.3 -0.4zM81.4 56.8l2.3 0.1 -1.6 1.7 -2.3 -0.4zM83.7 56.9l2.3 0.5 -1.6 1.5 -2.3 -0.3zM86 57.4l2.3 0.3 -1.7 1.4 -2.2 -0.2z" fill="#80ff00"/><path d="M88.3 57.7l2.3 0.5 -1.6 1.4 -2.4 -0.5zM90.6 58.2l2.3 0.3 -1.7 1.4 -2.2 -0.3zM92.9 58.5l2.4 0.7 -1.7 1.1 -2.4 -0.4zM95.3 59.2l2.2 0.1 -1.6 1.5 -2.3 -0.5zM97.5 59.3l2.4 0.8 -1.6 1.3 -2.4 -0.6zM99.9 60.1l2.3 0.3 -1.6 1.4 -2.3 -0.4zM102.2 60.4l2.4 0.6 -1.7 1.2 -2.3 -0.4zM104.6 61l2.3 0.5 -1.8 1 -2.2 -0.3zM106.9 61.5l2.4 0.7 -1.7 1.3 -2.5 -1z" fill="#00ff00"/><path d="M109.3 62.2l2.4 0.7 -1.6 1.5 -2.5 -0.9zM111.7 62.9l2.4 0.6 -1.6 1.5 -2.4 -0.6zM114.1 63.5l2.3 0.3 -1.5 1.8 -2.4 -0.6zM116.4 63.8l2.5 1.1 -1.6 1.4 -2.4 -0.7zM118.9 64.9l2.3 0.2 -1.5 1.9 -2.4 -0.7zM121.2 65.1l2.4 0.8 -1.6 1.6 -2.3 -0.5zM123.6 65.9l2.5 0.8 -1.7 1.5 -2.4 -0.7z" fill="#00ff80"/><path d="M126.1 66.7l2.4 0.9 -1.6 1.6 -2.5 -1zM128.5 67.6l2.5 1 -1.6 1.4 -2.5 -0.8zM131 68.6l2.4 0.7 -1.6 1.6 -2.4 -0.9zM133.4 69.3l2.5 0.8 -1.5 1.8 -2.6 -1zM135.9 70.1l2.4 0.9 -1.6 1.3 -2.3 -0.4zM138.3 71l2.5 0.9 -1.6 1.3 -2.5 -0.9z" fill="#00ffc0"/><path d="M140.8 71.9l2.5 1 -1.6 1.6 -2.5 -1.3zM143.3 72.9l2.6 1 -1.6 1.8 -2.6 -1.2zM145.9 73.9l2.5 1.2 -1.4 2.1 -2.7 -1.5zM148.4 75.1l2.7 1.5 -1.6 1.7 -2.5 -1.1z" fill="#00ffff"/><path d="M151.1 76.6l2.7 1.5 -1.6 1.6 -2.7 -1.4zM153.8 78.1l2.7 1.7 -1.6 1.4 -2.7 -1.5zM156.5 79.8l2.7 1.4 -1.6 1.6 -2.7 -1.6z" fill="#00c0ff"/><path d="M159.2 81.2l2.6 1.5 -1.6 1.4 -2.6 -1.3zM161.8 82.7l2.7 1.4 -1.7 1.3 -2.6 -1.3zM164.5 84.1l2.6 1.3 -1.6 1.4 -2.7 -1.4z" fill="#0080ff"/><path d="M167.1 85.4l2.6 1.2 -1.5 1.8 -2.7 -1.6zM169.7 86.6l2.6 1.4 -1.6 1.6 -2.5 -1.2zM172.3 88l2.5 1.1 -1.5 1.6 -2.6 -1.1zM174.8 89.1l2.6 1.2 -1.4 2 -2.7 -1.6z" fill="#0040ff"/><path d="M177.4 90.3l2.7 1.6 -1.6 1.6 -2.5 -1.2zM180.1 91.9l2.6 1.3 -1.6 1.3 -2.6 -1zM182.7 93.2l2.6 1 -1.7 1.3 -2.5 -1zM185.3 94.2l2.5 1.2 -1.7 1.3 -2.5 -1.2z" fill="#0000ff"/><path d="M187.8 95.4l-1.7 1.3 1.6 4.7 1.3 -2.5z" fill="#000080"/><path d="M68.2 55.9l2.2 0.2 -1.8 1 -2.2 -0.4zM70.4 56.1l2.4 0.7 -1.6 1.3 -2.6 -1zM72.8 56.8l2.4 0.6 -1.7 1.1 -2.3 -0.4zM75.2 57.4l2.3 0.4 -1.7 1.1 -2.3 -0.4zM77.5 57.8l2.3 0.4 -1.6 1.3 -2.4 -0.6zM79.8 58.2l2.3 0.4 -1.7 1.3 -2.2 -0.4zM82.1 58.6l2.3 0.3 -1.6 1.6 -2.4 -0.6zM84.4 58.9l2.2 0.2 -1.6 1.4 -2.2 0zM86.6 59.1l2.4 0.5 -1.7 1.3 -2.3 -0.4zM89 59.6l2.2 0.3 -1.5 1.6 -2.4 -0.6zM91.2 59.9l2.4 0.4 -1.7 1.4 -2.2 -0.2z" fill="#80ff00"/><path d="M93.6 60.3l2.3 0.5 -1.7 1.2 -2.3 -0.3zM95.9 60.8l2.4 0.6 -1.7 1.4 -2.4 -0.8zM98.3 61.4l2.3 0.4 -1.6 1.7 -2.4 -0.7zM100.6 61.8l2.3 0.4 -1.6 1.5 -2.3 -0.2zM102.9 62.2l2.2 0.3 -1.5 1.6 -2.3 -0.4zM105.1 62.5l2.5 1 -1.6 1.3 -2.4 -0.7zM107.6 63.5l2.5 0.9 -1.7 1 -2.4 -0.6zM110.1 64.4l2.4 0.6 -1.6 1.6 -2.5 -1.2z" fill="#00ff00"/><path d="M112.5 65l2.4 0.6 -1.5 1.8 -2.5 -0.8zM114.9 65.6l2.4 0.7 -1.6 1.6 -2.3 -0.5zM117.3 66.3l2.4 0.7 -1.6 1.6 -2.4 -0.7zM119.7 67l2.3 0.5 -1.5 1.6 -2.4 -0.5zM122 67.5l2.4 0.7 -1.4 1.9 -2.5 -1zM124.4 68.2l2.5 1 -1.5 1.6 -2.4 -0.7z" fill="#00ff80"/><path d="M126.9 69.2l2.5 0.8 -1.5 1.8 -2.5 -1zM129.4 70l2.4 0.9 -1.5 1.5 -2.4 -0.6zM131.8 70.9l2.6 1 -1.6 1.5 -2.5 -1zM134.4 71.9l2.3 0.4 -1.5 2 -2.4 -0.9zM136.7 72.3l2.5 0.9 -1.4 2.1 -2.6 -1z" fill="#00ffc0"/><path d="M139.2 73.2l2.5 1.3 -1.4 2.1 -2.5 -1.3zM141.7 74.5l2.6 1.2 -1.4 2.1 -2.6 -1.2zM144.3 75.7l2.7 1.5 -1.5 1.8 -2.6 -1.2zM147 77.2l2.5 1.1 -1.5 1.7 -2.5 -1z" fill="#00ffff"/><path d="M149.5 78.3l2.7 1.4 -1.6 1.6 -2.6 -1.3zM152.2 79.7l2.7 1.5 -1.6 1.6 -2.7 -1.5zM154.9 81.2l2.7 1.6 -1.7 1.4 -2.6 -1.4z" fill="#00c0ff"/><path d="M157.6 82.8l2.6 1.3 -1.7 1.3 -2.6 -1.2zM160.2 84.1l2.6 1.3 -1.7 1.3 -2.6 -1.3zM162.8 85.4l2.7 1.4 -1.7 1.4 -2.7 -1.5zM165.5 86.8l2.7 1.6 -1.7 1.4 -2.7 -1.6z" fill="#0080ff"/><path d="M168.2 88.4l2.5 1.2 -1.5 1.7 -2.7 -1.5zM170.7 89.6l2.6 1.1 -1.5 1.9 -2.6 -1.3zM173.3 90.7l2.7 1.6 -1.6 1.6 -2.6 -1.3z" fill="#0040ff"/><path d="M176 92.3l2.5 1.2 -1.5 1.6 -2.6 -1.2zM178.5 93.5l2.6 1 -1.6 1.6 -2.5 -1zM181.1 94.5l2.5 1 -1.6 1.7 -2.5 -1.1zM183.6 95.5l2.5 1.2 -1.5 1.6 -2.6 -1.1z" fill="#0000ff"/><path d="M186.1 96.7l-1.5 1.6 1.9 5.6 1.2 -2.5z" fill="#000080"/><path d="M66.4 56.7l2.2 0.4 -1.8 0.9 -2.3 -0.4zM68.6 57.1l2.6 1 -2 0.5 -2.4 -0.6zM71.2 58.1l2.3 0.4 -1.9 0.9 -2.4 -0.8z" fill="#c0ff00"/><path d="M73.5 58.5l2.3 0.4 -1.7 1.2 -2.5 -0.7zM75.8 58.9l2.4 0.6 -1.8 1.2 -2.3 -0.6zM78.2 59.5l2.2 0.4 -1.6 1.2 -2.4 -0.4zM80.4 59.9l2.4 0.6 -1.7 1.1 -2.3 -0.5zM82.8 60.5l2.2 0 -1.6 1.4 -2.3 -0.3zM85 60.5l2.3 0.4 -1.6 1.5 -2.3 -0.5zM87.3 60.9l2.4 0.6 -1.7 1.3 -2.3 -0.4zM89.7 61.5l2.2 0.2 -1.7 1.1 -2.2 0zM91.9 61.7l2.3 0.3 -1.6 1.6 -2.4 -0.8zM94.2 62l2.4 0.8 -1.6 1.3 -2.4 -0.5z" fill="#80ff00"/><path d="M96.6 62.8l2.4 0.7 -1.7 1.2 -2.3 -0.6zM99 63.5l2.3 0.2 -1.5 1.8 -2.5 -0.8zM101.3 63.7l2.3 0.4 -1.6 1.6 -2.2 -0.2zM103.6 64.1l2.4 0.7 -1.6 1.5 -2.4 -0.6zM106 64.8l2.4 0.6 -1.6 1.6 -2.4 -0.7zM108.4 65.4l2.5 1.2 -1.6 1.4 -2.5 -1zM110.9 66.6l2.5 0.8 -1.6 1.7 -2.5 -1.1z" fill="#00ff00"/><path d="M113.4 67.4l2.3 0.5 -1.5 1.8 -2.4 -0.6zM115.7 67.9l2.4 0.7 -1.6 1.5 -2.3 -0.4zM118.1 68.6l2.4 0.5 -1.5 1.8 -2.5 -0.8zM120.5 69.1l2.5 1 -1.6 1.7 -2.4 -0.9zM123 70.1l2.4 0.7 -1.6 1.7 -2.4 -0.7zM125.4 70.8l2.5 1 -1.6 1.7 -2.5 -1z" fill="#00ff80"/><path d="M127.9 71.8l2.4 0.6 -1.6 1.6 -2.4 -0.5zM130.3 72.4l2.5 1 -1.7 1.5 -2.4 -0.9zM132.8 73.4l2.4 0.9 -1.6 1.5 -2.5 -0.9zM135.2 74.3l2.6 1 -1.5 2 -2.7 -1.5zM137.8 75.3l2.5 1.3 -1.4 1.8 -2.6 -1.1z" fill="#00ffc0"/><path d="M140.3 76.6l2.6 1.2 -1.5 1.7 -2.5 -1.1zM142.9 77.8l2.6 1.2 -1.5 1.7 -2.6 -1.2zM145.5 79l2.5 1 -1.5 1.8 -2.5 -1.1zM148 80l2.6 1.3 -1.6 1.5 -2.5 -1z" fill="#00ffff"/><path d="M150.6 81.3l2.7 1.5 -1.6 1.5 -2.7 -1.5zM153.3 82.8l2.6 1.4 -1.7 1.1 -2.5 -1zM155.9 84.2l2.6 1.2 -1.5 1.6 -2.8 -1.7z" fill="#00c0ff"/><path d="M158.5 85.4l2.6 1.3 -1.5 1.7 -2.6 -1.4zM161.1 86.7l2.7 1.5 -1.6 1.6 -2.6 -1.4zM163.8 88.2l2.7 1.6 -1.5 1.8 -2.8 -1.8z" fill="#0080ff"/><path d="M166.5 89.8l2.7 1.5 -1.5 1.8 -2.7 -1.5zM169.2 91.3l2.6 1.3 -1.7 1.3 -2.4 -0.8zM171.8 92.6l2.6 1.3 -1.6 1.4 -2.7 -1.4zM174.4 93.9l2.6 1.2 -1.7 1.3 -2.5 -1.1z" fill="#0040ff"/><path d="M177 95.1l2.5 1 -1.6 1.5 -2.6 -1.2zM179.5 96.1l2.5 1.1 -1.5 1.6 -2.6 -1.2zM182 97.2l2.6 1.1 -1.5 2 -2.6 -1.5z" fill="#0000ff"/><path d="M184.6 98.3l-1.5 2 2.1 6.1 1.3 -2.5z" fill="#000080"/><path d="M64.5 57.6l2.3 0.4 -1.6 1.3 -2.4 -0.7z" fill="#c0ff00"/><path d="M62.8 58.6l2.4 0.7 16.7 49.5 -2.2 0z" fill="#00ffff"/><path d="M66.8 58l2.4 0.6 -1.8 1 -2.2 -0.3zM69.2 58.6l2.4 0.8 -1.8 0.8 -2.4 -0.6zM71.6 59.4l2.5 0.7 -1.8 0.9 -2.5 -0.8zM74.1 60.1l2.3 0.6 -1.8 0.9 -2.3 -0.6z" fill="#c0ff00"/><path d="M76.4 60.7l2.4 0.4 -2 0.6 -2.2 -0.1zM78.8 61.1l2.3 0.5 -1.8 1 -2.5 -0.9zM81.1 61.6l2.3 0.3 -1.7 1.3 -2.4 -0.6zM83.4 61.9l2.3 0.5 -1.8 1.1 -2.2 -0.3zM85.7 62.4l2.3 0.4 -1.7 1.3 -2.4 -0.6zM88 62.8l2.2 0 -1.5 1.8 -2.4 -0.5zM90.2 62.8l2.4 0.8 -1.6 1.6 -2.3 -0.6zM92.6 63.6l2.4 0.5 -1.7 1.3 -2.3 -0.2zM95 64.1l2.3 0.6 -1.6 1.4 -2.4 -0.7zM97.3 64.7l2.5 0.8 -1.8 1.2 -2.3 -0.6z" fill="#80ff00"/><path d="M99.8 65.5l2.2 0.2 -1.6 1.4 -2.4 -0.4zM102 65.7l2.4 0.6 -1.8 1.1 -2.2 -0.3zM104.4 66.3l2.4 0.7 -1.7 1.1 -2.5 -0.7zM106.8 67l2.5 1 -1.7 1.1 -2.5 -1zM109.3 68l2.5 1.1 -1.8 0.9 -2.4 -0.9zM111.8 69.1l2.4 0.6 -1.7 1.3 -2.5 -1z" fill="#00ff00"/><path d="M114.2 69.7l2.3 0.4 -1.5 1.9 -2.5 -1zM116.5 70.1l2.5 0.8 -1.6 1.6 -2.4 -0.5zM119 70.9l2.4 0.9 -1.6 1.5 -2.4 -0.8zM121.4 71.8l2.4 0.7 -1.5 1.7 -2.5 -0.9zM123.8 72.5l2.5 1 -1.6 1.4 -2.4 -0.7zM126.3 73.5l2.4 0.5 -1.5 1.7 -2.5 -0.8z" fill="#00ff80"/><path d="M128.7 74l2.4 0.9 -1.3 2.2 -2.6 -1.4zM131.1 74.9l2.5 0.9 -1.3 2.5 -2.5 -1.2zM133.6 75.8l2.7 1.5 -1.4 2 -2.6 -1zM136.3 77.3l2.6 1.1 -1.6 1.7 -2.4 -0.8z" fill="#00ffc0"/><path d="M138.9 78.4l2.5 1.1 -1.5 1.7 -2.6 -1.1zM141.4 79.5l2.6 1.2 -1.6 1.7 -2.5 -1.2zM144 80.7l2.5 1.1 -1.5 1.8 -2.6 -1.2zM146.5 81.8l2.5 1 -1.4 2.1 -2.6 -1.3z" fill="#00ffff"/><path d="M149 82.8l2.7 1.5 -1.6 1.6 -2.5 -1zM151.7 84.3l2.5 1 -1.5 1.8 -2.6 -1.2zM154.2 85.3l2.8 1.7 -1.6 1.5 -2.7 -1.4zM157 87l2.6 1.4 -1.6 1.5 -2.6 -1.4z" fill="#00c0ff"/><path d="M159.6 88.4l2.6 1.4 -1.5 1.7 -2.7 -1.6zM162.2 89.8l2.8 1.8 -1.6 1.4 -2.7 -1.5zM165 91.6l2.7 1.5 -1.7 1.3 -2.6 -1.4z" fill="#0080ff"/><path d="M167.7 93.1l2.4 0.8 -1.6 1.5 -2.5 -1zM170.1 93.9l2.7 1.4 -1.7 1.4 -2.6 -1.3zM172.8 95.3l2.5 1.1 -1.5 1.8 -2.7 -1.5zM175.3 96.4l2.6 1.2 -1.6 1.5 -2.5 -0.9z" fill="#0040ff"/><path d="M177.9 97.6l2.6 1.2 -1.5 2 -2.7 -1.7zM180.5 98.8l2.6 1.5 -1.5 1.7 -2.6 -1.2z" fill="#0000ff"/><path d="M183.1 100.3l-1.5 1.7 2.3 6.8 1.3 -2.4zM179 100.8l2.6 1.2 2.3 6.8 -2.1 0z" fill="#000080"/><path d="M65.2 59.3l2.2 0.3 -1.7 1 -2.4 -0.5zM67.4 59.6l2.4 0.6 -1.8 0.9 -2.3 -0.5zM69.8 60.2l2.5 0.8 -1.8 1 -2.5 -0.9zM72.3 61l2.3 0.6 -1.8 0.8 -2.3 -0.4zM74.6 61.6l2.2 0.1 -1.6 1.3 -2.4 -0.6zM76.8 61.7l2.5 0.9 -1.7 1.2 -2.4 -0.8zM79.3 62.6l2.4 0.6 -1.7 1.2 -2.4 -0.6z" fill="#c0ff00"/><path d="M81.7 63.2l2.2 0.3 -1.6 1.5 -2.3 -0.6zM83.9 63.5l2.4 0.6 -1.6 1.4 -2.4 -0.5zM86.3 64.1l2.4 0.5 -1.7 1.4 -2.3 -0.5zM88.7 64.6l2.3 0.6 -1.6 1.4 -2.4 -0.6zM91 65.2l2.3 0.2 -1.5 2 -2.4 -0.8zM93.3 65.4l2.4 0.7 -1.5 1.8 -2.4 -0.5zM95.7 66.1l2.3 0.6 -1.5 1.5 -2.3 -0.3zM98 66.7l2.4 0.4 -1.7 1.4 -2.2 -0.3zM100.4 67.1l2.2 0.3 -1.6 1.5 -2.3 -0.4z" fill="#80ff00"/><path d="M102.6 67.4l2.5 0.7 -1.6 1.7 -2.5 -0.9zM105.1 68.1l2.5 1 -1.7 1.4 -2.4 -0.7zM107.6 69.1l2.4 0.9 -1.6 1.5 -2.5 -1zM110 70l2.5 1 -1.5 1.6 -2.6 -1.1zM112.5 71l2.5 1 -1.6 1.5 -2.4 -0.9z" fill="#00ff00"/><path d="M115 72l2.4 0.5 -1.5 2 -2.5 -1zM117.4 72.5l2.4 0.8 -1.4 2 -2.5 -0.8zM119.8 73.3l2.5 0.9 -1.5 1.9 -2.4 -0.8zM122.3 74.2l2.4 0.7 -1.5 1.7 -2.4 -0.5zM124.7 74.9l2.5 0.8 -1.5 2 -2.5 -1.1zM127.2 75.7l2.6 1.4 -1.5 1.8 -2.6 -1.2z" fill="#00ff80"/><path d="M129.8 77.1l2.5 1.2 -1.4 1.9 -2.6 -1.3zM132.3 78.3l2.6 1 -1.6 1.7 -2.4 -0.8zM134.9 79.3l2.4 0.8 -1.5 1.9 -2.5 -1zM137.3 80.1l2.6 1.1 -1.5 1.8 -2.6 -1z" fill="#00ffc0"/><path d="M139.9 81.2l2.5 1.2 -1.5 1.8 -2.5 -1.2zM142.4 82.4l2.6 1.2 -1.4 1.9 -2.7 -1.3zM145 83.6l2.6 1.3 -1.4 1.9 -2.6 -1.3zM147.6 84.9l2.5 1 -1.4 2 -2.5 -1.1z" fill="#00ffff"/><path d="M150.1 85.9l2.6 1.2 -1.3 2.3 -2.7 -1.5zM152.7 87.1l2.7 1.4 -1.5 2.1 -2.5 -1.2zM155.4 88.5l2.6 1.4 -1.5 1.7 -2.6 -1zM158 89.9l2.7 1.6 -1.6 1.4 -2.6 -1.3z" fill="#00c0ff"/><path d="M160.7 91.5l2.7 1.5 -1.7 1.4 -2.6 -1.5zM163.4 93l2.6 1.4 -1.7 1.3 -2.6 -1.3zM166 94.4l2.5 1 -1.5 1.8 -2.7 -1.5z" fill="#0080ff"/><path d="M168.5 95.4l2.6 1.3 -1.5 1.7 -2.6 -1.2zM171.1 96.7l2.7 1.5 -1.5 1.7 -2.7 -1.5zM173.8 98.2l2.5 0.9 -1.5 2 -2.5 -1.2z" fill="#0040ff"/><path d="M176.3 99.1l2.7 1.7 -1.6 1.5 -2.6 -1.2z" fill="#0000ff"/><path d="M179 100.8l-1.6 1.5 3.1 9 1.3 -2.5z" fill="#000080"/><path d="M63.3 60.1l2.4 0.5 -1.7 1.2 -2.4 -0.5zM65.7 60.6l2.3 0.5 -1.7 1.3 -2.3 -0.6z" fill="#ffff00"/><path d="M68 61.1l2.5 0.9 -1.8 0.8 -2.4 -0.4zM70.5 62l2.3 0.4 -1.8 1 -2.3 -0.6zM72.8 62.4l2.4 0.6 -1.8 1 -2.4 -0.6zM75.2 63l2.4 0.8 -1.7 1.3 -2.5 -1.1zM77.6 63.8l2.4 0.6 -1.8 1.1 -2.3 -0.4zM80 64.4l2.3 0.6 -1.8 0.8 -2.3 -0.3zM82.3 65l2.4 0.5 -1.8 1 -2.4 -0.7z" fill="#c0ff00"/><path d="M84.7 65.5l2.3 0.5 -1.6 1.3 -2.5 -0.8zM87 66l2.4 0.6 -1.7 1.1 -2.3 -0.4zM89.4 66.6l2.4 0.8 -1.8 0.8 -2.3 -0.5zM91.8 67.4l2.4 0.5 -1.8 1 -2.4 -0.7zM94.2 67.9l2.3 0.3 -1.7 1.3 -2.4 -0.6zM96.5 68.2l2.2 0.3 -1.5 1.6 -2.4 -0.6zM98.7 68.5l2.3 0.4 -1.5 1.8 -2.3 -0.6zM101 68.9l2.5 0.9 -1.6 1.4 -2.4 -0.5z" fill="#80ff00"/><path d="M103.5 69.8l2.4 0.7 -1.6 1.5 -2.4 -0.8zM105.9 70.5l2.5 1 -1.5 1.8 -2.6 -1.3zM108.4 71.5l2.6 1.1 -1.6 1.6 -2.5 -0.9zM111 72.6l2.4 0.9 -1.6 1.3 -2.4 -0.6zM113.4 73.5l2.5 1 -1.6 1.4 -2.5 -1.1z" fill="#00ff00"/><path d="M115.9 74.5l2.5 0.8 -1.5 2 -2.6 -1.4zM118.4 75.3l2.4 0.8 -1.5 1.8 -2.4 -0.6zM120.8 76.1l2.4 0.5 -1.5 2 -2.4 -0.7zM123.2 76.6l2.5 1.1 -1.5 1.9 -2.5 -1zM125.7 77.7l2.6 1.2 -1.4 2.2 -2.7 -1.5z" fill="#00ff80"/><path d="M128.3 78.9l2.6 1.3 -1.5 2 -2.5 -1.1zM130.9 80.2l2.4 0.8 -1.3 2.3 -2.6 -1.1zM133.3 81l2.5 1 -1.3 2.2 -2.5 -0.9zM135.8 82l2.6 1 -1.4 2.4 -2.5 -1.2z" fill="#00ffc0"/><path d="M138.4 83l2.5 1.2 -1.3 2.3 -2.6 -1.1zM140.9 84.2l2.7 1.3 -1.7 1.5 -2.3 -0.5zM143.6 85.5l2.6 1.3 -1.7 1.4 -2.6 -1.2zM146.2 86.8l2.5 1.1 -1.5 1.9 -2.7 -1.6z" fill="#00ffff"/><path d="M148.7 87.9l2.7 1.5 -1.6 1.6 -2.6 -1.2zM151.4 89.4l2.5 1.2 -1.5 1.6 -2.6 -1.2zM153.9 90.6l2.6 1 -1.5 2 -2.6 -1.4zM156.5 91.6l2.6 1.3 -1.5 2 -2.6 -1.3z" fill="#00c0ff"/><path d="M159.1 92.9l2.6 1.5 -1.6 1.4 -2.5 -0.9zM161.7 94.4l2.6 1.3 -1.6 1.4 -2.6 -1.3zM164.3 95.7l2.7 1.5 -1.6 1.4 -2.7 -1.5zM167 97.2l2.6 1.2 -1.5 1.7 -2.7 -1.5z" fill="#0080ff"/><path d="M169.6 98.4l2.7 1.5 -1.5 1.9 -2.7 -1.7zM172.3 99.9l2.5 1.2 -1.5 1.7 -2.5 -1zM174.8 101.1l2.6 1.2 -1.5 1.6 -2.6 -1.1z" fill="#0040ff"/><path d="M177.4 102.3l-1.5 1.6 3.3 9.9 1.3 -2.5z" fill="#0000ff"/><path d="M61.6 61.3l2.4 0.5 -1.8 1.2 -2.3 -0.4z" fill="#ffff00"/><path d="M59.9 62.6l2.3 0.4 18.1 53.3 -2.2 0z" fill="#00ffff"/><path d="M64 61.8l2.3 0.6 -1.7 1.2 -2.4 -0.6zM66.3 62.4l2.4 0.4 -1.8 1.2 -2.3 -0.4zM68.7 62.8l2.3 0.6 -1.7 1.2 -2.4 -0.6z" fill="#ffff00"/><path d="M71 63.4l2.4 0.6 -1.7 1.3 -2.4 -0.7zM73.4 64l2.5 1.1 -1.7 1.2 -2.5 -1zM75.9 65.1l2.3 0.4 -1.7 1.1 -2.3 -0.3zM78.2 65.5l2.3 0.3 -1.7 1.2 -2.3 -0.4zM80.5 65.8l2.4 0.7 -1.7 1.1 -2.4 -0.6zM82.9 66.5l2.5 0.8 -1.8 1 -2.4 -0.7zM85.4 67.3l2.3 0.4 -1.8 1 -2.3 -0.4zM87.7 67.7l2.3 0.5 -1.8 1 -2.3 -0.5z" fill="#c0ff00"/><path d="M90 68.2l2.4 0.7 -1.7 1.1 -2.5 -0.8zM92.4 68.9l2.4 0.6 -1.8 1 -2.3 -0.5zM94.8 69.5l2.4 0.6 -1.8 1.2 -2.4 -0.8zM97.2 70.1l2.3 0.6 -1.6 1.4 -2.5 -0.8zM99.5 70.7l2.4 0.5 -1.6 1.6 -2.4 -0.7zM101.9 71.2l2.4 0.8 -1.5 1.7 -2.5 -0.9z" fill="#80ff00"/><path d="M104.3 72l2.6 1.3 -1.6 1.4 -2.5 -1zM106.9 73.3l2.5 0.9 -1.5 1.8 -2.6 -1.3zM109.4 74.2l2.4 0.6 -1.5 2 -2.4 -0.8zM111.8 74.8l2.5 1.1 -1.5 1.8 -2.5 -0.9zM114.3 75.9l2.6 1.4 -1.6 1.5 -2.5 -1.1z" fill="#00ff00"/><path d="M116.9 77.3l2.4 0.6 -1.5 1.8 -2.5 -0.9zM119.3 77.9l2.4 0.7 -1.5 1.8 -2.4 -0.7zM121.7 78.6l2.5 1 -1.3 2.2 -2.7 -1.4zM124.2 79.6l2.7 1.5 -1.4 2 -2.6 -1.3z" fill="#00ff80"/><path d="M126.9 81.1l2.5 1.1 -1.3 2.1 -2.6 -1.2zM129.4 82.2l2.6 1.1 -1.4 2.2 -2.5 -1.2zM132 83.3l2.5 0.9 -1.4 2.2 -2.5 -0.9zM134.5 84.2l2.5 1.2 -1.4 2 -2.5 -1zM137 85.4l2.6 1.1 -1.5 1.8 -2.5 -0.9z" fill="#00ffc0"/><path d="M139.6 86.5l2.3 0.5 -1.4 2.1 -2.4 -0.8zM141.9 87l2.6 1.2 -1.5 1.8 -2.5 -0.9zM144.5 88.2l2.7 1.6 -1.5 1.7 -2.7 -1.5zM147.2 89.8l2.6 1.2 -1.5 1.7 -2.6 -1.2z" fill="#00ffff"/><path d="M149.8 91l2.6 1.2 -1.5 1.9 -2.6 -1.4zM152.4 92.2l2.6 1.4 -1.4 2.2 -2.7 -1.7zM155 93.6l2.6 1.3 -1.4 2 -2.6 -1.1zM157.6 94.9l2.5 0.9 -1.5 1.7 -2.4 -0.6z" fill="#00c0ff"/><path d="M160.1 95.8l2.6 1.3 -1.5 1.8 -2.6 -1.4zM162.7 97.1l2.7 1.5 -1.6 1.6 -2.6 -1.3zM165.4 98.6l2.7 1.5 -1.6 1.7 -2.7 -1.6z" fill="#0080ff"/><path d="M168.1 100.1l2.7 1.7 -1.7 1.2 -2.6 -1.2zM170.8 101.8l2.5 1 -1.5 1.8 -2.7 -1.6zM173.3 102.8l2.6 1.1 -1.4 2.1 -2.7 -1.4z" fill="#0040ff"/><path d="M175.9 103.9l-1.4 2.1 3.4 10.3 1.3 -2.5zM171.8 104.6l2.7 1.4 3.4 10.3 -2.1 0z" fill="#0000ff"/><path d="M62.2 63l2.4 0.6 -1.8 0.8 -2.3 -0.4z" fill="#ffff00"/><path d="M60.5 64l2.3 0.4 18.4 54.4 -2.2 0z" fill="#00ffff"/><path d="M64.6 63.6l2.3 0.4 -1.8 0.7 -2.3 -0.3zM66.9 64l2.4 0.6 -1.8 0.9 -2.4 -0.8zM69.3 64.6l2.4 0.7 -1.8 1 -2.4 -0.8zM71.7 65.3l2.5 1 -1.8 0.7 -2.5 -0.7z" fill="#ffff00"/><path d="M74.2 66.3l2.3 0.3 -1.7 1.1 -2.4 -0.7zM76.5 66.6l2.3 0.4 -1.6 1.4 -2.4 -0.7zM78.8 67l2.4 0.6 -1.7 1.4 -2.3 -0.6zM81.2 67.6l2.4 0.7 -1.6 1.7 -2.5 -1zM83.6 68.3l2.3 0.4 -1.6 1.5 -2.3 -0.2zM85.9 68.7l2.3 0.5 -1.5 1.7 -2.4 -0.7zM88.2 69.2l2.5 0.8 -1.7 1.2 -2.3 -0.3zM90.7 70l2.3 0.5 -1.7 1.3 -2.3 -0.6z" fill="#c0ff00"/><path d="M93 70.5l2.4 0.8 -1.6 1.4 -2.5 -0.9zM95.4 71.3l2.5 0.8 -1.7 1.3 -2.4 -0.7zM97.9 72.1l2.4 0.7 -1.6 1.6 -2.5 -1zM100.3 72.8l2.5 0.9 -1.5 1.9 -2.6 -1.2zM102.8 73.7l2.5 1 -1.5 1.8 -2.5 -0.9z" fill="#80ff00"/><path d="M105.3 74.7l2.6 1.3 -1.5 1.9 -2.6 -1.4zM107.9 76l2.4 0.8 -1.5 1.8 -2.4 -0.7zM110.3 76.8l2.5 0.9 -1.5 1.7 -2.5 -0.8zM112.8 77.7l2.5 1.1 -1.6 1.3 -2.4 -0.7zM115.3 78.8l2.5 0.9 -1.6 1.6 -2.5 -1.2z" fill="#00ff00"/><path d="M117.8 79.7l2.4 0.7 -1.4 2 -2.6 -1.1zM120.2 80.4l2.7 1.4 -1.5 2 -2.6 -1.4zM122.9 81.8l2.6 1.3 -1.5 1.9 -2.6 -1.2zM125.5 83.1l2.6 1.2 -1.4 2.1 -2.7 -1.4z" fill="#00ff80"/><path d="M128.1 84.3l2.5 1.2 -1.5 1.8 -2.4 -0.9zM130.6 85.5l2.5 0.9 -1.4 1.9 -2.6 -1zM133.1 86.4l2.5 1 -1.5 1.8 -2.4 -0.9zM135.6 87.4l2.5 0.9 -1.6 1.7 -2.4 -0.8zM138.1 88.3l2.4 0.8 -1.5 1.8 -2.5 -0.9z" fill="#00ffc0"/><path d="M140.5 89.1l2.5 0.9 -1.5 1.7 -2.5 -0.8zM143 90l2.7 1.5 -1.6 1.5 -2.6 -1.3zM145.7 91.5l2.6 1.2 -1.5 2 -2.7 -1.7z" fill="#00ffff"/><path d="M148.3 92.7l2.6 1.4 -1.4 2.1 -2.7 -1.5zM150.9 94.1l2.7 1.7 -1.4 1.9 -2.7 -1.5zM153.6 95.8l2.6 1.1 -1.5 1.7 -2.5 -0.9zM156.2 96.9l2.4 0.6 -1.4 2.3 -2.5 -1.2z" fill="#00c0ff"/><path d="M158.6 97.5l2.6 1.4 -1.4 2 -2.6 -1.1zM161.2 98.9l2.6 1.3 -1.5 1.8 -2.5 -1.1zM163.8 100.2l2.7 1.6 -1.6 1.5 -2.6 -1.3zM166.5 101.8l2.6 1.2 -1.5 1.7 -2.7 -1.4z" fill="#0080ff"/><path d="M169.1 103l2.7 1.6 -1.5 1.6 -2.7 -1.5z" fill="#0040ff"/><path d="M171.8 104.6l-1.5 1.6 4.2 12.6 1.3 -2.5z" fill="#0000ff"/><path d="M62.8 64.4l2.3 0.3 -1.8 1 -2.3 -0.2zM65.1 64.7l2.4 0.8 -1.7 1.1 -2.5 -0.9zM67.5 65.5l2.4 0.8 -1.7 1.2 -2.4 -0.9zM69.9 66.3l2.5 0.7 -1.8 1 -2.4 -0.5zM72.4 67l2.4 0.7 -1.8 1 -2.4 -0.7zM74.8 67.7l2.4 0.7 -1.8 1.2 -2.4 -0.9z" fill="#ffff00"/><path d="M77.2 68.4l2.3 0.6 -1.6 1.3 -2.5 -0.7zM79.5 69l2.5 1 -1.6 1.2 -2.5 -0.9zM82 70l2.3 0.2 -1.6 1.5 -2.3 -0.5zM84.3 70.2l2.4 0.7 -1.6 1.4 -2.4 -0.6zM86.7 70.9l2.3 0.3 -1.6 1.7 -2.3 -0.6zM89 71.2l2.3 0.6 -1.5 1.8 -2.4 -0.7zM91.3 71.8l2.5 0.9 -1.6 1.5 -2.4 -0.6z" fill="#c0ff00"/><path d="M93.8 72.7l2.4 0.7 -1.6 1.4 -2.4 -0.6zM96.2 73.4l2.5 1 -1.6 1.5 -2.5 -1.1zM98.7 74.4l2.6 1.2 -1.5 1.8 -2.7 -1.5zM101.3 75.6l2.5 0.9 -1.5 1.8 -2.5 -0.9zM103.8 76.5l2.6 1.4 -1.6 1.5 -2.5 -1.1z" fill="#80ff00"/><path d="M106.4 77.9l2.4 0.7 -1.5 1.7 -2.5 -0.9zM108.8 78.6l2.5 0.8 -1.6 1.5 -2.4 -0.6zM111.3 79.4l2.4 0.7 -1.5 1.9 -2.5 -1.1zM113.7 80.1l2.5 1.2 -1.5 1.6 -2.5 -0.9zM116.2 81.3l2.6 1.1 -1.4 2.2 -2.7 -1.7z" fill="#00ff00"/><path d="M118.8 82.4l2.6 1.4 -1.4 1.8 -2.6 -1zM121.4 83.8l2.6 1.2 -1.5 1.7 -2.5 -1.1zM124 85l2.7 1.4 -1.8 1.2 -2.4 -0.9zM126.7 86.4l2.4 0.9 -1.6 1.3 -2.6 -1z" fill="#00ff80"/><path d="M129.1 87.3l2.6 1 -1.7 1.4 -2.5 -1.1zM131.7 88.3l2.4 0.9 -1.5 1.7 -2.6 -1.2zM134.1 89.2l2.4 0.8 -1.4 2 -2.5 -1.1zM136.5 90l2.5 0.9 -1.5 1.9 -2.4 -0.8z" fill="#00ffc0"/><path d="M139 90.9l2.5 0.8 -1.3 2.4 -2.7 -1.3zM141.5 91.7l2.6 1.3 -1.4 2.2 -2.5 -1.1zM144.1 93l2.7 1.7 -1.5 1.8 -2.6 -1.3zM146.8 94.7l2.7 1.5 -1.6 1.5 -2.6 -1.2z" fill="#00ffff"/><path d="M149.5 96.2l2.7 1.5 -1.6 1.6 -2.7 -1.6zM152.2 97.7l2.5 0.9 -1.5 1.9 -2.6 -1.2zM154.7 98.6l2.5 1.2 -1.5 1.6 -2.5 -0.9zM157.2 99.8l2.6 1.1 -1.6 1.7 -2.5 -1.2z" fill="#00c0ff"/><path d="M159.8 100.9l2.5 1.1 -1.5 1.8 -2.6 -1.2zM162.3 102l2.6 1.3 -1.5 1.6 -2.6 -1.1zM164.9 103.3l2.7 1.4 -1.6 1.7 -2.6 -1.5z" fill="#0080ff"/><path d="M167.6 104.7l2.7 1.5 -1.7 1.4 -2.6 -1.2z" fill="#0040ff"/><path d="M170.3 106.2l-1.7 1.4 4.6 13.6 1.3 -2.4zM166 106.4l2.6 1.2 4.6 13.6 -2.2 0z" fill="#0000ff"/><path d="M61 65.5l2.3 0.2 -1.7 1.2 -2.3 -0.4z" fill="#ffc000"/><path d="M59.3 66.5l2.3 0.4 19.2 56.8 -2.2 0z" fill="#00ffc0"/><path d="M63.3 65.7l2.5 0.9 -1.8 0.9 -2.4 -0.6z" fill="#ffc000"/><path d="M65.8 66.6l2.4 0.9 -1.7 1.1 -2.5 -1.1zM68.2 67.5l2.4 0.5 -1.7 1.2 -2.4 -0.6zM70.6 68l2.4 0.7 -1.9 0.8 -2.2 -0.3zM73 68.7l2.4 0.9 -1.9 0.5 -2.4 -0.6zM75.4 69.6l2.5 0.7 -1.8 1 -2.6 -1.2zM77.9 70.3l2.5 0.9 -1.9 0.8 -2.4 -0.7z" fill="#ffff00"/><path d="M80.4 71.2l2.3 0.5 -1.8 0.9 -2.4 -0.6zM82.7 71.7l2.4 0.6 -1.8 1 -2.4 -0.7zM85.1 72.3l2.3 0.6 -1.8 0.9 -2.3 -0.5zM87.4 72.9l2.4 0.7 -1.7 1.1 -2.5 -0.9zM89.8 73.6l2.4 0.6 -1.7 1.2 -2.4 -0.7zM92.2 74.2l2.4 0.6 -1.6 1.5 -2.5 -0.9z" fill="#c0ff00"/><path d="M94.6 74.8l2.5 1.1 -1.6 1.4 -2.5 -1zM97.1 75.9l2.7 1.5 -1.7 1.2 -2.6 -1.3zM99.8 77.4l2.5 0.9 -1.6 1.5 -2.6 -1.2zM102.3 78.3l2.5 1.1 -1.7 1.3 -2.4 -0.9zM104.8 79.4l2.5 0.9 -1.6 1.5 -2.6 -1.1z" fill="#80ff00"/><path d="M107.3 80.3l2.4 0.6 -1.6 1.6 -2.4 -0.7zM109.7 80.9l2.5 1.1 -1.6 1.6 -2.5 -1.1zM112.2 82l2.5 0.9 -1.5 1.9 -2.6 -1.2zM114.7 82.9l2.7 1.7 -1.5 1.6 -2.7 -1.4z" fill="#00ff00"/><path d="M117.4 84.6l2.6 1 -1.6 1.6 -2.5 -1zM120 85.6l2.5 1.1 -1.5 1.8 -2.6 -1.3zM122.5 86.7l2.4 0.9 -1.5 1.8 -2.4 -0.9zM124.9 87.6l2.6 1 -1.6 1.6 -2.5 -0.8z" fill="#00ff80"/><path d="M127.5 88.6l2.5 1.1 -1.5 1.8 -2.6 -1.3zM130 89.7l2.6 1.2 -1.5 1.8 -2.6 -1.2zM132.6 90.9l2.5 1.1 -1.5 1.7 -2.5 -1zM135.1 92l2.4 0.8 -1.2 2.5 -2.7 -1.6zM137.5 92.8l2.7 1.3 -1.4 2.1 -2.5 -0.9z" fill="#00ffc0"/><path d="M140.2 94.1l2.5 1.1 -1.4 2 -2.5 -1zM142.7 95.2l2.6 1.3 -1.5 1.9 -2.5 -1.2zM145.3 96.5l2.6 1.2 -1.6 1.5 -2.5 -0.8zM147.9 97.7l2.7 1.6 -1.6 1.4 -2.7 -1.5z" fill="#00ffff"/><path d="M150.6 99.3l2.6 1.2 -1.6 1.5 -2.6 -1.3zM153.2 100.5l2.5 0.9 -1.7 1.5 -2.4 -0.9zM155.7 101.4l2.5 1.2 -1.6 1.4 -2.6 -1.1zM158.2 102.6l2.6 1.2 -1.6 1.4 -2.6 -1.2z" fill="#00c0ff"/><path d="M160.8 103.8l2.6 1.1 -1.5 2 -2.7 -1.7zM163.4 104.9l2.6 1.5 -1.5 1.8 -2.6 -1.3z" fill="#0080ff"/><path d="M166 106.4l-1.5 1.8 5.3 15.5 1.2 -2.5zM161.9 106.9l2.6 1.3 5.3 15.5 -2.2 0z" fill="#0000ff"/><path d="M61.6 66.9l2.4 0.6 -1.8 1.1 -2.4 -0.8z" fill="#ffc000"/><path d="M59.8 67.8l2.4 0.8 19.5 57.6 -2.2 0z" fill="#00ffc0"/><path d="M64 67.5l2.5 1.1 -1.8 0.8 -2.5 -0.8zM66.5 68.6l2.4 0.6 -1.9 0.7 -2.3 -0.5z" fill="#ffc000"/><path d="M68.9 69.2l2.2 0.3 -1.9 0.6 -2.2 -0.2zM71.1 69.5l2.4 0.6 -1.9 0.4 -2.4 -0.4zM73.5 70.1l2.6 1.2 -2.1 0.1 -2.4 -0.9zM76.1 71.3l2.4 0.7 -1.9 0.6 -2.6 -1.2zM78.5 72l2.4 0.6 -1.9 0.8 -2.4 -0.8zM80.9 72.6l2.4 0.7 -1.8 0.9 -2.5 -0.8z" fill="#ffff00"/><path d="M83.3 73.3l2.3 0.5 -1.7 1 -2.4 -0.6zM85.6 73.8l2.5 0.9 -1.8 0.8 -2.4 -0.7zM88.1 74.7l2.4 0.7 -1.7 1.3 -2.5 -1.2zM90.5 75.4l2.5 0.9 -1.9 0.8 -2.3 -0.4zM93 76.3l2.5 1 -1.7 1.2 -2.7 -1.4z" fill="#c0ff00"/><path d="M95.5 77.3l2.6 1.3 -1.6 1.5 -2.7 -1.6zM98.1 78.6l2.6 1.2 -1.7 1.4 -2.5 -1.1zM100.7 79.8l2.4 0.9 -1.5 1.7 -2.6 -1.2zM103.1 80.7l2.6 1.1 -1.6 1.6 -2.5 -1zM105.7 81.8l2.4 0.7 -1.4 2 -2.6 -1.1z" fill="#80ff00"/><path d="M108.1 82.5l2.5 1.1 -1.5 1.8 -2.4 -0.9zM110.6 83.6l2.6 1.2 -1.4 2 -2.7 -1.4zM113.2 84.8l2.7 1.4 -1.6 1.6 -2.5 -1zM115.9 86.2l2.5 1 -1.6 1.7 -2.5 -1.1z" fill="#00ff00"/><path d="M118.4 87.2l2.6 1.3 -1.6 1.6 -2.6 -1.2zM121 88.5l2.4 0.9 -1.5 1.7 -2.5 -1zM123.4 89.4l2.5 0.8 -1.4 2 -2.6 -1.1zM125.9 90.2l2.6 1.3 -1.4 2 -2.6 -1.3z" fill="#00ff80"/><path d="M128.5 91.5l2.6 1.2 -1.5 1.9 -2.5 -1.1zM131.1 92.7l2.5 1 -1.5 1.9 -2.5 -1zM133.6 93.7l2.7 1.6 -1.6 1.5 -2.6 -1.2zM136.3 95.3l2.5 0.9 -1.6 1.7 -2.5 -1.1z" fill="#00ffc0"/><path d="M138.8 96.2l2.5 1 -1.5 1.9 -2.6 -1.2zM141.3 97.2l2.5 1.2 -1.5 1.7 -2.5 -1zM143.8 98.4l2.5 0.8 -1.4 2.1 -2.6 -1.2zM146.3 99.2l2.7 1.5 -1.5 1.8 -2.6 -1.2z" fill="#00ffff"/><path d="M149 100.7l2.6 1.3 -1.6 1.6 -2.5 -1.1zM151.6 102l2.4 0.9 -1.5 1.5 -2.5 -0.8zM154 102.9l2.6 1.1 -1.6 1.5 -2.5 -1.1zM156.6 104l2.6 1.2 -1.6 1.5 -2.6 -1.2z" fill="#00c0ff"/><path d="M159.2 105.2l2.7 1.7 -1.6 1.4 -2.7 -1.6z" fill="#0080ff"/><path d="M161.9 106.9l-1.6 1.4 6 17.9 1.3 -2.5z" fill="#0000ff"/><path d="M157.6 106.7l2.7 1.6 6 17.9 -2.1 0z" fill="#0040ff"/><path d="M62.2 68.6l2.5 0.8 -1.9 0.9 -2.3 -0.5z" fill="#ffc000"/><path d="M60.5 69.8l2.3 0.5 19.8 58.4 -2.2 0z" fill="#00ffc0"/><path d="M64.7 69.4l2.3 0.5 -1.8 0.9 -2.4 -0.5zM67 69.9l2.2 0.2 -1.7 1.1 -2.3 -0.4zM69.2 70.1l2.4 0.4 -1.9 0.9 -2.2 -0.2zM71.6 70.5l2.4 0.9 -1.8 0.8 -2.5 -0.8z" fill="#ffc000"/><path d="M74 71.4l2.6 1.2 -1.8 0.9 -2.6 -1.3zM76.6 72.6l2.4 0.8 -1.7 1 -2.5 -0.9zM79 73.4l2.5 0.8 -1.7 1.2 -2.5 -1zM81.5 74.2l2.4 0.6 -1.8 1.2 -2.3 -0.6zM83.9 74.8l2.4 0.7 -1.7 1.4 -2.5 -0.9z" fill="#ffff00"/><path d="M86.3 75.5l2.5 1.2 -1.7 1.2 -2.5 -1zM88.8 76.7l2.3 0.4 -1.4 2 -2.6 -1.2zM91.1 77.1l2.7 1.4 -1.5 1.8 -2.6 -1.2zM93.8 78.5l2.7 1.6 -1.7 1.3 -2.5 -1.1z" fill="#c0ff00"/><path d="M96.5 80.1l2.5 1.1 -1.6 1.5 -2.6 -1.3zM99 81.2l2.6 1.2 -1.6 1.5 -2.6 -1.2zM101.6 82.4l2.5 1 -1.4 1.9 -2.7 -1.4zM104.1 83.4l2.6 1.1 -1.5 1.8 -2.5 -1z" fill="#80ff00"/><path d="M106.7 84.5l2.4 0.9 -1.4 2 -2.5 -1.1zM109.1 85.4l2.7 1.4 -1.6 1.4 -2.5 -0.8zM111.8 86.8l2.5 1 -1.7 1.3 -2.4 -0.9zM114.3 87.8l2.5 1.1 -1.6 1.6 -2.6 -1.4zM116.8 88.9l2.6 1.2 -1.6 1.6 -2.6 -1.2z" fill="#00ff00"/><path d="M119.4 90.1l2.5 1 -1.4 1.9 -2.7 -1.3zM121.9 91.1l2.6 1.1 -1.5 2 -2.5 -1.2zM124.5 92.2l2.6 1.3 -1.6 1.8 -2.5 -1.1zM127.1 93.5l2.5 1.1 -1.5 1.9 -2.6 -1.2z" fill="#00ff80"/><path d="M129.6 94.6l2.5 1 -1.4 2 -2.6 -1.1zM132.1 95.6l2.6 1.2 -1.5 2 -2.5 -1.2zM134.7 96.8l2.5 1.1 -1.4 1.9 -2.6 -1zM137.2 97.9l2.6 1.2 -1.4 2 -2.6 -1.3z" fill="#00ffc0"/><path d="M139.8 99.1l2.5 1 -1.4 2.1 -2.5 -1.1zM142.3 100.1l2.6 1.2 -1.5 1.7 -2.5 -0.8zM144.9 101.3l2.6 1.2 -1.6 1.7 -2.5 -1.2zM147.5 102.5l2.5 1.1 -1.5 1.7 -2.6 -1.1z" fill="#00ffff"/><path d="M150 103.6l2.5 0.8 -1.4 2.1 -2.6 -1.2zM152.5 104.4l2.5 1.1 -1.5 2 -2.4 -1zM155 105.5l2.6 1.2 -1.5 1.8 -2.6 -1z" fill="#00c0ff"/><path d="M157.6 106.7l-1.5 1.8 6.8 20.2 1.3 -2.5zM153.5 107.5l2.6 1 6.8 20.2 -2.2 0z" fill="#0040ff"/><path d="M62.8 70.3l2.4 0.5 -1.9 0.7 -2.2 -0.2z" fill="#ffc000"/><path d="M61.1 71.3l2.2 0.2 20.2 59.6 -2.2 0z" fill="#00ffc0"/><path d="M65.2 70.8l2.3 0.4 -1.8 1.1 -2.4 -0.8zM67.5 71.2l2.2 0.2 -1.6 1.4 -2.4 -0.5zM69.7 71.4l2.5 0.8 -1.6 1.7 -2.5 -1.1zM72.2 72.2l2.6 1.3 -1.7 1.3 -2.5 -0.9z" fill="#ffc000"/><path d="M74.8 73.5l2.5 0.9 -1.6 1.7 -2.6 -1.3zM77.3 74.4l2.5 1 -1.8 1.1 -2.3 -0.4zM79.8 75.4l2.3 0.6 -1.6 1.3 -2.5 -0.8zM82.1 76l2.5 0.9 -1.7 1.1 -2.4 -0.7zM84.6 76.9l2.5 1 -1.6 1.4 -2.6 -1.3z" fill="#ffff00"/><path d="M87.1 77.9l2.6 1.2 -1.6 1.6 -2.6 -1.4zM89.7 79.1l2.6 1.2 -1.6 1.7 -2.6 -1.3zM92.3 80.3l2.5 1.1 -1.5 1.8 -2.6 -1.2zM94.8 81.4l2.6 1.3 -1.5 1.9 -2.6 -1.4z" fill="#c0ff00"/><path d="M97.4 82.7l2.6 1.2 -1.5 1.8 -2.6 -1.1zM100 83.9l2.7 1.4 -1.6 1.7 -2.6 -1.3zM102.7 85.3l2.5 1 -1.6 1.8 -2.5 -1.1zM105.2 86.3l2.5 1.1 -1.5 1.7 -2.6 -1z" fill="#80ff00"/><path d="M107.7 87.4l2.5 0.8 -1.6 1.8 -2.4 -0.9zM110.2 88.2l2.4 0.9 -1.5 1.7 -2.5 -0.8zM112.6 89.1l2.6 1.4 -1.4 1.8 -2.7 -1.5zM115.2 90.5l2.6 1.2 -1.4 2 -2.6 -1.4z" fill="#00ff00"/><path d="M117.8 91.7l2.7 1.3 -1.5 2 -2.6 -1.3zM120.5 93l2.5 1.2 -1.5 1.8 -2.5 -1zM123 94.2l2.5 1.1 -1.5 1.6 -2.5 -0.9zM125.5 95.3l2.6 1.2 -1.5 1.8 -2.6 -1.4z" fill="#00ff80"/><path d="M128.1 96.5l2.6 1.1 -1.5 2 -2.6 -1.3zM130.7 97.6l2.5 1.2 -1.5 1.6 -2.5 -0.8zM133.2 98.8l2.6 1 -1.5 1.9 -2.6 -1.3zM135.8 99.8l2.6 1.3 -1.5 2 -2.6 -1.4z" fill="#00ffc0"/><path d="M138.4 101.1l2.5 1.1 -1.4 2.1 -2.6 -1.2zM140.9 102.2l2.5 0.8 -1.4 2.1 -2.5 -0.8zM143.4 103l2.5 1.2 -1.5 1.8 -2.4 -0.9zM145.9 104.2l2.6 1.1 -1.5 2 -2.6 -1.3z" fill="#00ffff"/><path d="M148.5 105.3l2.6 1.2 -1.6 1.5 -2.5 -0.7zM151.1 106.5l2.4 1 -1.5 1.7 -2.5 -1.2z" fill="#00c0ff"/><path d="M153.5 107.5l-1.5 1.7 7.4 21.9 1.3 -2.4zM149.5 108l2.5 1.2 7.4 21.9 -2.1 0z" fill="#0040ff"/><path d="M63.3 71.5l2.4 0.8 -1.7 1.1 -2.4 -0.9z" fill="#ffc000"/><path d="M61.6 72.5l2.4 0.9 20.4 60.2 -2.2 0z" fill="#00ffc0"/><path d="M65.7 72.3l2.4 0.5 -1.6 1.4 -2.5 -0.8z" fill="#ffc000"/><path d="M64 73.4l2.5 0.8 20 59.4 -2.1 0z" fill="#00ffc0"/><path d="M68.1 72.8l2.5 1.1 -1.8 0.9 -2.3 -0.6zM70.6 73.9l2.5 0.9 -1.8 1 -2.5 -1zM73.1 74.8l2.6 1.3 -1.8 0.8 -2.6 -1.1z" fill="#ffc000"/><path d="M75.7 76.1l2.3 0.4 -1.7 1.1 -2.4 -0.7zM78 76.5l2.5 0.8 -1.7 1.4 -2.5 -1.1zM80.5 77.3l2.4 0.7 -1.5 1.8 -2.6 -1.1zM82.9 78l2.6 1.3 -1.6 1.6 -2.5 -1.1zM85.5 79.3l2.6 1.4 -1.6 1.3 -2.6 -1.1z" fill="#ffff00"/><path d="M88.1 80.7l2.6 1.3 -1.6 1.4 -2.6 -1.4zM90.7 82l2.6 1.2 -1.6 1.4 -2.6 -1.2zM93.3 83.2l2.6 1.4 -1.7 1 -2.5 -1zM95.9 84.6l2.6 1.1 -1.7 1.3 -2.6 -1.4z" fill="#c0ff00"/><path d="M98.5 85.7l2.6 1.3 -1.6 1.4 -2.7 -1.4zM101.1 87l2.5 1.1 -1.5 1.6 -2.6 -1.3zM103.6 88.1l2.6 1 -1.5 1.8 -2.6 -1.2zM106.2 89.1l2.4 0.9 -1.3 2.2 -2.6 -1.3z" fill="#80ff00"/><path d="M108.6 90l2.5 0.8 -1.3 2.4 -2.5 -1zM111.1 90.8l2.7 1.5 -1.5 2.1 -2.5 -1.2zM113.8 92.3l2.6 1.4 -1.4 2 -2.7 -1.3zM116.4 93.7l2.6 1.3 -1.5 1.7 -2.5 -1z" fill="#00ff00"/><path d="M119 95l2.5 1 -1.4 2 -2.6 -1.3zM121.5 96l2.5 0.9 -1.4 2.2 -2.5 -1.1zM124 96.9l2.6 1.4 -1.4 1.9 -2.6 -1.1zM126.6 98.3l2.6 1.3 -1.5 1.6 -2.5 -1z" fill="#00ff80"/><path d="M129.2 99.6l2.5 0.8 -1.7 1.4 -2.3 -0.6zM131.7 100.4l2.6 1.3 -1.5 1.7 -2.8 -1.6zM134.3 101.7l2.6 1.4 -1.5 1.7 -2.6 -1.4z" fill="#00ffc0"/><path d="M136.9 103.1l2.6 1.2 -1.4 2 -2.7 -1.5zM139.5 104.3l2.5 0.8 -1.4 2.2 -2.5 -1zM142 105.1l2.4 0.9 -1.3 2.2 -2.5 -0.9zM144.4 106l2.6 1.3 -1.4 1.9 -2.5 -1zM147 107.3l2.5 0.7 -1.5 1.9 -2.4 -0.7z" fill="#00ffff"/><path d="M149.5 108l-1.5 1.9 8 23.7 1.3 -2.5zM145.6 109.2l2.4 0.7 8 23.7 -2.2 0z" fill="#0040ff"/><path d="M66.5 74.2l2.3 0.6 -1.7 1.2 -2.4 -0.7z" fill="#ffc000"/><path d="M64.7 75.3l2.4 0.7 20.3 60.1 -2.1 0z" fill="#00ffc0"/><path d="M68.8 74.8l2.5 1 -1.8 0.8 -2.4 -0.6zM71.3 75.8l2.6 1.1 -1.9 0.7 -2.5 -1zM73.9 76.9l2.4 0.7 -1.7 1.1 -2.6 -1.1zM76.3 77.6l2.5 1.1 -1.7 1.2 -2.5 -1.2z" fill="#ffc000"/><path d="M78.8 78.7l2.6 1.1 -1.8 1.1 -2.5 -1zM81.4 79.8l2.5 1.1 -1.7 1.2 -2.6 -1.2zM83.9 80.9l2.6 1.1 -1.8 1 -2.5 -0.9zM86.5 82l2.6 1.4 -1.8 1 -2.6 -1.4z" fill="#ffff00"/><path d="M89.1 83.4l2.6 1.2 -1.7 1.2 -2.7 -1.4zM91.7 84.6l2.5 1 -1.7 1.3 -2.5 -1.1zM94.2 85.6l2.6 1.4 -1.6 1.3 -2.7 -1.4zM96.8 87l2.7 1.4 -1.6 1.5 -2.7 -1.6z" fill="#c0ff00"/><path d="M99.5 88.4l2.6 1.3 -1.6 1.7 -2.6 -1.5zM102.1 89.7l2.6 1.2 -1.5 1.8 -2.7 -1.3zM104.7 90.9l2.6 1.3 -1.6 1.7 -2.5 -1.2z" fill="#80ff00"/><path d="M107.3 92.2l2.5 1 -1.5 1.8 -2.6 -1.1zM109.8 93.2l2.5 1.2 -1.4 2 -2.6 -1.4zM112.3 94.4l2.7 1.3 -1.6 1.8 -2.5 -1.1zM115 95.7l2.5 1 -1.5 1.8 -2.6 -1z" fill="#00ff00"/><path d="M117.5 96.7l2.6 1.3 -1.5 1.7 -2.6 -1.2zM120.1 98l2.5 1.1 -1.4 2 -2.6 -1.4zM122.6 99.1l2.6 1.1 -1.5 1.8 -2.5 -0.9zM125.2 100.2l2.5 1 -1.5 1.8 -2.5 -1z" fill="#00ff80"/><path d="M127.7 101.2l2.3 0.6 -1.3 2.1 -2.5 -0.9zM130 101.8l2.8 1.6 -1.5 1.9 -2.6 -1.4zM132.8 103.4l2.6 1.4 -1.5 1.7 -2.6 -1.2zM135.4 104.8l2.7 1.5 -1.5 2 -2.7 -1.8z" fill="#00ffc0"/><path d="M138.1 106.3l2.5 1 -1.5 1.9 -2.5 -0.9zM140.6 107.3l2.5 0.9 -1.5 1.9 -2.5 -0.9z" fill="#00ffff"/><path d="M139.1 109.2l2.5 0.9 8.8 26 -2.2 0z" fill="#0040ff"/><path d="M143.1 108.2l2.5 1 -1.6 1.7 -2.4 -0.8z" fill="#00ffff"/><path d="M145.6 109.2l-1.6 1.7 8.5 25.2 1.3 -2.5zM141.6 110.1l2.4 0.8 8.5 25.2 -2.1 0z" fill="#0040ff"/><path d="M67.1 76l2.4 0.6 -1.7 1.3 -2.3 -0.4z" fill="#ff8000"/><path d="M65.5 77.5l2.3 0.4 20.5 60.7 -2.1 0z" fill="#00ffc0"/><path d="M69.5 76.6l2.5 1 -1.7 1.1 -2.5 -0.8z" fill="#ffc000"/><path d="M67.8 77.9l2.5 0.8 20.2 59.9 -2.2 0z" fill="#00ffc0"/><path d="M72 77.6l2.6 1.1 -1.8 1.1 -2.5 -1.1zM74.6 78.7l2.5 1.2 -1.6 1.3 -2.7 -1.4zM77.1 79.9l2.5 1 -1.6 1.3 -2.5 -1z" fill="#ffc000"/><path d="M79.6 80.9l2.6 1.2 -1.8 1 -2.4 -0.9zM82.2 82.1l2.5 0.9 -1.7 1.3 -2.6 -1.2zM84.7 83l2.6 1.4 -1.7 1.2 -2.6 -1.3zM87.3 84.4l2.7 1.4 -1.7 1.4 -2.7 -1.6z" fill="#ffff00"/><path d="M90 85.8l2.5 1.1 -1.5 1.7 -2.7 -1.4zM92.5 86.9l2.7 1.4 -1.6 1.6 -2.6 -1.3zM95.2 88.3l2.7 1.6 -1.6 1.5 -2.7 -1.5z" fill="#c0ff00"/><path d="M97.9 89.9l2.6 1.5 -1.5 1.6 -2.7 -1.6zM100.5 91.4l2.7 1.3 -1.6 1.8 -2.6 -1.5zM103.2 92.7l2.5 1.2 -1.4 2.2 -2.7 -1.6zM105.7 93.9l2.6 1.1 -1.4 2.2 -2.6 -1.1z" fill="#80ff00"/><path d="M108.3 95l2.6 1.4 -1.5 1.7 -2.5 -0.9zM110.9 96.4l2.5 1.1 -1.5 1.8 -2.5 -1.2zM113.4 97.5l2.6 1 -1.5 1.8 -2.6 -1zM116 98.5l2.6 1.2 -1.6 1.6 -2.5 -1z" fill="#00ff00"/><path d="M118.6 99.7l2.6 1.4 -1.7 1.3 -2.5 -1.1zM121.2 101.1l2.5 0.9 -1.5 1.9 -2.7 -1.5zM123.7 102l2.5 1 -1.5 2 -2.5 -1.1zM126.2 103l2.5 0.9 -1.5 1.9 -2.5 -0.8z" fill="#00ff80"/><path d="M128.7 103.9l2.6 1.4 -1.5 1.7 -2.6 -1.2zM131.3 105.3l2.6 1.2 -1.4 2.1 -2.7 -1.6zM133.9 106.5l2.7 1.8 -1.5 1.8 -2.6 -1.5z" fill="#00ffc0"/><path d="M132.5 108.6l2.6 1.5 9.7 28.5 -2.2 0z" fill="#0080ff"/><path d="M136.6 108.3l2.5 0.9 -1.4 2 -2.6 -1.1z" fill="#00ffff"/><path d="M139.1 109.2l-1.4 2 9.2 27.4 1.3 -2.5z" fill="#0040ff"/><path d="M135.1 110.1l2.6 1.1 9.2 27.4 -2.1 0z" fill="#0080ff"/><path d="M70.3 78.7l2.5 1.1 -1.8 1 -2.6 -1.2z" fill="#ffc000"/><path d="M68.4 79.6l2.6 1.2 20.4 60.3 -2.2 0z" fill="#00ffc0"/><path d="M72.8 79.8l2.7 1.4 -1.8 1 -2.7 -1.4z" fill="#ffc000"/><path d="M71 80.8l2.7 1.4 19.9 58.9 -2.2 0z" fill="#00ffc0"/><path d="M75.5 81.2l2.5 1 -1.8 1.1 -2.5 -1.1z" fill="#ffc000"/><path d="M73.7 82.2l2.5 1.1 19.5 57.8 -2.1 0z" fill="#00ffc0"/><path d="M78 82.2l2.4 0.9 -1.6 1.3 -2.6 -1.1z" fill="#ffc000"/><path d="M80.4 83.1l2.6 1.2 -1.6 1.4 -2.6 -1.3zM83 84.3l2.6 1.3 -1.5 1.7 -2.7 -1.6zM85.6 85.6l2.7 1.6 -1.6 1.5 -2.6 -1.4zM88.3 87.2l2.7 1.4 -1.7 1.4 -2.6 -1.3z" fill="#ffff00"/><path d="M91 88.6l2.6 1.3 -1.6 1.6 -2.7 -1.5zM93.6 89.9l2.7 1.5 -1.7 1.5 -2.6 -1.4zM96.3 91.4l2.7 1.6 -1.6 1.5 -2.8 -1.6z" fill="#c0ff00"/><path d="M99 93l2.6 1.5 -1.5 1.6 -2.7 -1.6zM101.6 94.5l2.7 1.6 -1.6 1.3 -2.6 -1.3zM104.3 96.1l2.6 1.1 -1.6 1.4 -2.6 -1.2z" fill="#80ff00"/><path d="M106.9 97.2l2.5 0.9 -1.5 1.8 -2.6 -1.3zM109.4 98.1l2.5 1.2 -1.4 1.8 -2.6 -1.2zM111.9 99.3l2.6 1 -1.4 2.1 -2.6 -1.3zM114.5 100.3l2.5 1 -1.5 2 -2.4 -0.9z" fill="#00ff00"/><path d="M117 101.3l2.5 1.1 -1.4 2 -2.6 -1.1zM119.5 102.4l2.7 1.5 -1.6 1.6 -2.5 -1.1zM122.2 103.9l2.5 1.1 -1.5 1.8 -2.6 -1.3zM124.7 105l2.5 0.8 -1.4 2.2 -2.6 -1.2z" fill="#00ff80"/><path d="M123.2 106.8l2.6 1.2 11.2 33.1 -2.2 0z" fill="#0080ff"/><path d="M127.2 105.8l2.6 1.2 -1.5 2.1 -2.5 -1.1z" fill="#00ffc0"/><path d="M125.8 108l2.5 1.1 10.8 32 -2.1 0z" fill="#0080ff"/><path d="M129.8 107l2.7 1.6 -1.6 1.7 -2.6 -1.2z" fill="#00ffc0"/><path d="M132.5 108.6l-1.6 1.7 10.4 30.8 1.3 -2.5zM128.3 109.1l2.6 1.2 10.4 30.8 -2.2 0z" fill="#0080ff"/><path d="M76.2 83.3l2.6 1.1 -1.6 1.6 -2.6 -1.4z" fill="#ffc000"/><path d="M74.6 84.6l2.6 1.4 19.4 57.5 -2.1 0z" fill="#00ffc0"/><path d="M78.8 84.4l2.6 1.3 -1.6 1.7 -2.6 -1.4z" fill="#ffc000"/><path d="M77.2 86l2.6 1.4 19 56.1 -2.2 0z" fill="#00ffc0"/><path d="M81.4 85.7l2.7 1.6 -1.5 1.9 -2.8 -1.8z" fill="#ffff00"/><path d="M79.8 87.4l2.8 1.8 18.4 54.3 -2.2 0z" fill="#00ffff"/><path d="M84.1 87.3l2.6 1.4 -1.4 2 -2.7 -1.5z" fill="#ffff00"/><path d="M82.6 89.2l2.7 1.5 17.8 52.8 -2.1 0z" fill="#00ffff"/><path d="M86.7 88.7l2.6 1.3 -1.4 1.9 -2.6 -1.2z" fill="#ffff00"/><path d="M89.3 90l2.7 1.5 -1.6 1.6 -2.5 -1.2zM92 91.5l2.6 1.4 -1.5 1.7 -2.7 -1.5zM94.6 92.9l2.8 1.6 -1.6 1.7 -2.7 -1.6z" fill="#c0ff00"/><path d="M97.4 94.5l2.7 1.6 -1.6 1.6 -2.7 -1.5zM100.1 96.1l2.6 1.3 -1.6 1.6 -2.6 -1.3zM102.7 97.4l2.6 1.2 -1.6 1.7 -2.6 -1.3zM105.3 98.6l2.6 1.3 -1.5 1.9 -2.7 -1.5z" fill="#80ff00"/><path d="M107.9 99.9l2.6 1.2 -1.5 1.8 -2.6 -1.1zM110.5 101.1l2.6 1.3 -1.5 1.8 -2.6 -1.3zM113.1 102.4l2.4 0.9 -1.3 2.2 -2.6 -1.3zM115.5 103.3l2.6 1.1 -1.5 2 -2.4 -0.9z" fill="#00ff00"/><path d="M114.2 105.5l2.4 0.9 12.6 37.1 -2.2 0z" fill="#00c0ff"/><path d="M118.1 104.4l2.5 1.1 -1.3 2.2 -2.7 -1.3z" fill="#00ff80"/><path d="M116.6 106.4l2.7 1.3 12.1 35.8 -2.2 0z" fill="#0080ff"/><path d="M120.6 105.5l2.6 1.3 -1.4 2 -2.5 -1.1z" fill="#00ff80"/><path d="M123.2 106.8l-1.4 2 11.7 34.7 1.3 -2.4zM119.3 107.7l2.5 1.1 11.7 34.7 -2.1 0z" fill="#0080ff"/><path d="M85.3 90.7l2.6 1.2 -1.4 2.1 -2.7 -1.4z" fill="#ffff00"/><path d="M83.8 92.6l2.7 1.4 17.5 52 -2.1 0z" fill="#00ffff"/><path d="M87.9 91.9l2.5 1.2 -1.5 1.6 -2.4 -0.7z" fill="#ffff00"/><path d="M86.5 94l2.4 0.7 17.3 51.3 -2.2 0z" fill="#00ffff"/><path d="M90.4 93.1l2.7 1.5 -1.5 1.6 -2.7 -1.5z" fill="#c0ff00"/><path d="M88.9 94.7l2.7 1.5 16.8 49.8 -2.2 0z" fill="#00ffff"/><path d="M93.1 94.6l2.7 1.6 -1.6 1.6 -2.6 -1.6z" fill="#c0ff00"/><path d="M91.6 96.2l2.6 1.6 16.4 48.2 -2.2 0z" fill="#00ffff"/><path d="M95.8 96.2l2.7 1.5 -1.7 1.3 -2.6 -1.2z" fill="#c0ff00"/><path d="M94.2 97.8l2.6 1.2 15.9 47 -2.1 0z" fill="#00ffff"/><path d="M98.5 97.7l2.6 1.3 -1.7 1.3 -2.6 -1.3z" fill="#80ff00"/><path d="M96.8 99l2.6 1.3 15.5 45.7 -2.2 0z" fill="#00c0ff"/><path d="M101.1 99l2.6 1.3 -1.6 1.4 -2.7 -1.4z" fill="#80ff00"/><path d="M99.4 100.3l2.7 1.4 15 44.3 -2.2 0z" fill="#00c0ff"/><path d="M103.7 100.3l2.7 1.5 -1.6 1.5 -2.7 -1.6z" fill="#80ff00"/><path d="M102.1 101.7l2.7 1.6 14.4 42.7 -2.1 0z" fill="#00c0ff"/><path d="M106.4 101.8l2.6 1.1 -1.6 1.6 -2.6 -1.2z" fill="#00ff00"/><path d="M104.8 103.3l2.6 1.2 14 41.5 -2.2 0z" fill="#00c0ff"/><path d="M109 102.9l2.6 1.3 -1.6 1.6 -2.6 -1.3z" fill="#00ff00"/><path d="M107.4 104.5l2.6 1.3 13.6 40.2 -2.2 0z" fill="#00c0ff"/><path d="M111.6 104.2l2.6 1.3 -1.6 1.6 -2.6 -1.3z" fill="#00ff00"/><path d="M114.2 105.5l-1.6 1.6 13.1 38.9 1.3 -2.5zM110 105.8l2.6 1.3 13.1 38.9 -2.1 0z" fill="#00c0ff"/></g></g><rect x="225.20000000000005" y="8" width="10.8" height="40.7" fill="#f6f6f4"/><path d="M228.40000000000006 13.5l2.2 -2.6l2.2 2.6z M228.40000000000006 43.2l2.2 2.6l2.2 -2.6z" fill="#4a4a4a"/><rect x="226.70000000000005" y="23" width="7.800000000000001" height="10" rx="1" fill="#e6e6e6" stroke="#9a9a9a" stroke-width="0.7"/><rect x="227.20000000000005" y="47.5" width="8" height="8.3" fill="#ff0000"/><rect x="227.20000000000005" y="55.5" width="8" height="8.3" fill="#ff4000"/><rect x="227.20000000000005" y="63.5" width="8" height="8.3" fill="#ff8000"/><rect x="227.20000000000005" y="71.5" width="8" height="8.3" fill="#ffc000"/><rect x="227.20000000000005" y="79.5" width="8" height="8.3" fill="#ffff00"/><rect x="227.20000000000005" y="87.5" width="8" height="8.3" fill="#c0ff00"/><rect x="227.20000000000005" y="95.5" width="8" height="8.3" fill="#80ff00"/><rect x="227.20000000000005" y="103.5" width="8" height="8.3" fill="#00ff00"/><rect x="227.20000000000005" y="111.5" width="8" height="8.3" fill="#00ff80"/><rect x="227.20000000000005" y="119.5" width="8" height="8.3" fill="#00ffc0"/><rect x="227.20000000000005" y="127.5" width="8" height="8.3" fill="#00ffff"/><rect x="227.20000000000005" y="135.5" width="8" height="8.3" fill="#00c0ff"/><rect x="227.20000000000005" y="143.5" width="8" height="8.3" fill="#0080ff"/><rect x="227.20000000000005" y="151.5" width="8" height="8.3" fill="#0040ff"/><rect x="227.20000000000005" y="159.5" width="8" height="8.3" fill="#0000ff"/><rect x="227.20000000000005" y="167.5" width="8" height="8.3" fill="#000080"/><path d="M227.20000000000005 55.5h3.6M227.20000000000005 63.5h3.6M227.20000000000005 71.5h3.6M227.20000000000005 79.5h3.6M227.20000000000005 87.5h3.6M227.20000000000005 95.5h3.6M227.20000000000005 103.5h3.6M227.20000000000005 111.5h3.6M227.20000000000005 119.5h3.6M227.20000000000005 127.5h3.6M227.20000000000005 135.5h3.6M227.20000000000005 143.5h3.6M227.20000000000005 151.5h3.6M227.20000000000005 159.5h3.6M227.20000000000005 167.5h3.6" stroke="#a04030" stroke-width="0.6" opacity="0.8"/><rect x="210.7" y="50.4" width="14" height="10" fill="#d4d0c8" opacity="0.8"/><text x="224.2" y="59.1" font-family="Liberation Sans,sans-serif" font-size="10.5" font-weight="normal" fill="#2a2ae0" text-anchor="end" >15</text><rect x="210.7" y="90.3" width="14" height="10" fill="#d4d0c8" opacity="0.8"/><text x="224.2" y="99" font-family="Liberation Sans,sans-serif" font-size="10.5" font-weight="normal" fill="#2a2ae0" text-anchor="end" >10</text><rect x="217.2" y="130.2" width="7.5" height="10" fill="#d4d0c8" opacity="0.8"/><text x="224.2" y="138.9" font-family="Liberation Sans,sans-serif" font-size="10.5" font-weight="normal" fill="#2a2ae0" text-anchor="end" >5</text><rect x="217.2" y="170" width="7.5" height="10" fill="#d4d0c8" opacity="0.8"/><text x="224.2" y="178.7" font-family="Liberation Sans,sans-serif" font-size="10.5" font-weight="normal" fill="#2a2ae0" text-anchor="end" >0</text><rect x="243" y="0" width="10" height="181" fill="#f0f0f0"/><path d="M245.7 6.5l2.3 -2.8l2.3 2.8z M245.7 174.5l2.3 2.8l2.3 -2.8z" fill="#4a4a4a"/><rect x="243.5" y="91.39999999999998" width="9" height="14" rx="1.5" fill="#e3e3e3" stroke="#8e8e8e" stroke-width="0.8"/><path d="M246.0 96.39999999999998h4M246.0 98.39999999999998h4M246.0 100.39999999999998h4" stroke="#555" stroke-width="0.7"/><rect x="0" y="181" width="243" height="12" fill="#f0f0f0"/><path d="M6.5 184.7l-2.8 2.3l2.8 2.3z M236.5 184.7l2.8 2.3l-2.8 2.3z" fill="#4a4a4a"/><rect x="78.5" y="181.5" width="20.5" height="11" rx="1.5" fill="#e3e3e3" stroke="#8e8e8e" stroke-width="0.8"/><path d="M86.75 185.0v4M88.75 185.0v4M90.75 185.0v4" stroke="#555" stroke-width="0.7"/><rect x="243" y="181" width="10" height="12" fill="#d4d0c8"/></svg></div></div><div class="win" style="left:977px;top:499px;width:265px;height:219px"><svg class="ti" viewBox="0 0 11 11" style=""><rect width="11" height="11" rx="0.8" fill="#1a5fb4"/><ellipse cx="5.5" cy="4.6" rx="4.2" ry="3.6" fill="none" stroke="#9cc3ee" stroke-width="0.9"/><ellipse cx="5.5" cy="4.4" rx="2.3" ry="2.1" fill="#fff"/><rect x="1.2" y="8.6" width="8.6" height="1.3" fill="#cfe2f7"/></svg><div class="tt" style="top:5.5px;letter-spacing:0.141px;left:19.7px">鳥瞰図 [File B] GBIR</div><div class="tr" style="left:118px;top:5.5px;letter-spacing:0.486px">13.13µm (1µm/...</div><div class="wb" style="left:191.5px"><svg viewBox="0 0 18 9"><rect x="5.3" y="4.6" width="7.4" height="2.9" rx="0.7" fill="#a0a0a0" stroke="#fff" stroke-width="0.8"/></svg></div><div class="wb" style="left:213.5px"><svg viewBox="0 0 18 9"><rect x="5.6" y="1.8" width="6.8" height="5.2" rx="0.5" fill="#fdfdfd" stroke="#8a8a8a" stroke-width="1"/><rect x="7.3" y="3.6" width="3.4" height="1.8" fill="#4b5a78"/></svg></div><div class="wb cl" style="left:235.5px"><svg viewBox="0 0 18 9"><path d="M6.3 2.3L11.7 6.7M11.7 2.3L6.3 6.7" stroke="#fff" stroke-width="3.3" stroke-linecap="square"/><path d="M6.3 2.3L11.7 6.7M11.7 2.3L6.3 6.7" stroke="#8c8c8c" stroke-width="1.9" stroke-linecap="square"/></svg></div><div class="cnt" style="left:5px;top:19px;width:253px;height:193px;background:#d4d0c8"><svg width="253" height="193" viewBox="0 0 253 193" style="position:absolute;left:0;top:0;"><clipPath id="fl8k"><rect width="243" height="181"/></clipPath><g clip-path="url(#fl8k)"><pattern id="fl8" patternUnits="userSpaceOnUse" width="2.041" height="2.746" patternTransform="matrix(1 0 -0.4406 1 71.926 28.200)"><rect width="2.041" height="2.746" fill="#e8e4dc"/><path d="M0 0H2.041" stroke="#202020" stroke-width="1.36"/><path d="M0 0V2.746" stroke="#202020" stroke-width="1.2"/></pattern><path d="M-1.0 165.5L192.9 165.5L253.4 28.2L59.5 28.2z" fill="url(#fl8)" stroke="#111" stroke-width="0.8"/><path d="M59.5 28.2L50.0 0" stroke="#111" stroke-width="0.8"/><g stroke="#000" stroke-width="0.4" stroke-linejoin="round"><path d="M136.3 26l2.6 1 -1.6 1.6 -2.4 -0.4zM138.9 27l2.4 0.8 -1.7 1.3 -2.3 -0.5zM141.3 27.8l2.3 0.2 -1.4 2.1 -2.6 -1z" fill="#00c0ff"/><path d="M143.6 28l2.5 0.9 -1.4 2 -2.5 -0.8zM146.1 28.9l2.5 0.9 -1.5 1.8 -2.4 -0.7zM148.6 29.8l2.6 1.1 -1.6 1.7 -2.5 -1zM151.2 30.9l2.4 0.5 -1.5 2 -2.5 -0.8zM153.6 31.4l2.5 1 -1.4 2.2 -2.6 -1.2zM156.1 32.4l2.6 1 -1.4 2.2 -2.6 -1z" fill="#0080ff"/><path d="M158.7 33.4l2.5 1 -1.6 1.7 -2.3 -0.5zM161.2 34.4l2.5 1 -1.5 1.8 -2.6 -1.1zM163.7 35.4l2.4 0.5 -1.4 2 -2.5 -0.7zM166.1 35.9l2.4 0.6 -1.4 2.2 -2.4 -0.8zM168.5 36.5l2.6 1.1 -1.4 2.2 -2.6 -1.1z" fill="#0040ff"/><path d="M171.1 37.6l-1.4 2.2 3.5 10.4 1.2 -2.8z" fill="#0000ff"/><path d="M127.5 25.9l2.5 0.6 -1.4 2.3 -2.5 -0.8zM130 26.5l2.4 0.6 -1.4 2.2 -2.4 -0.5zM132.4 27.1l2.5 1.1 -1.5 1.8 -2.4 -0.7zM134.9 28.2l2.4 0.4 -1.5 2.1 -2.4 -0.7zM137.3 28.6l2.3 0.5 -1.3 2.3 -2.5 -0.7zM139.6 29.1l2.6 1 -1.4 2.2 -2.5 -0.9zM142.2 30.1l2.5 0.8 -1.4 2.2 -2.5 -0.8z" fill="#00c0ff"/><path d="M144.7 30.9l2.4 0.7 -1.4 2.3 -2.4 -0.8zM147.1 31.6l2.5 1 -1.3 2.4 -2.6 -1.1zM149.6 32.6l2.5 0.8 -1.3 2.4 -2.5 -0.8zM152.1 33.4l2.6 1.2 -1.5 1.7 -2.4 -0.5zM154.7 34.6l2.6 1 -1.5 2 -2.6 -1.3zM157.3 35.6l2.3 0.5 -1.4 2.2 -2.4 -0.7z" fill="#0080ff"/><path d="M159.6 36.1l2.6 1.1 -1.5 1.9 -2.5 -0.8zM162.2 37.2l2.5 0.7 -1.6 1.7 -2.4 -0.5zM164.7 37.9l2.4 0.8 -1.4 2.1 -2.6 -1.2zM167.1 38.7l2.6 1.1 -1.6 1.7 -2.4 -0.7zM169.7 39.8l2.5 1 -1.4 2.1 -2.7 -1.4z" fill="#0040ff"/><path d="M172.2 40.8l2.5 0.7 -1.3 2.6 -2.6 -1.2zM174.7 41.5l2.5 1 -1.3 2.3 -2.5 -0.7z" fill="#0000ff"/><path d="M177.2 42.5l-1.3 2.3 2.7 8.1 1.2 -2.7z" fill="#000080"/><path d="M121.3 26.8l2.5 0.7 -1.5 2.2 -2.4 -0.8zM123.8 27.5l2.3 0.5 -1.3 2.5 -2.5 -0.8zM126.1 28l2.5 0.8 -1.5 2 -2.3 -0.3z" fill="#00ffff"/><path d="M128.6 28.8l2.4 0.5 -1.3 2.6 -2.6 -1.1zM131 29.3l2.4 0.7 -1.3 2.5 -2.4 -0.6zM133.4 30l2.4 0.7 -1.2 2.6 -2.5 -0.8zM135.8 30.7l2.5 0.7 -1.3 2.5 -2.4 -0.6zM138.3 31.4l2.5 0.9 -1.3 2.5 -2.5 -0.9zM140.8 32.3l2.5 0.8 -1.3 2.6 -2.5 -0.9zM143.3 33.1l2.4 0.8 -1.3 2.4 -2.4 -0.6z" fill="#00c0ff"/><path d="M145.7 33.9l2.6 1.1 -1.4 2.2 -2.5 -0.9zM148.3 35l2.5 0.8 -1.4 2.2 -2.5 -0.8zM150.8 35.8l2.4 0.5 -1.2 2.8 -2.6 -1.1zM153.2 36.3l2.6 1.3 -1.4 2.1 -2.4 -0.6zM155.8 37.6l2.4 0.7 -1.3 2.4 -2.5 -1z" fill="#0080ff"/><path d="M158.2 38.3l2.5 0.8 -1.3 2.3 -2.5 -0.7zM160.7 39.1l2.4 0.5 -1.2 2.7 -2.5 -0.9zM163.1 39.6l2.6 1.2 -1.4 2.3 -2.4 -0.8zM165.7 40.8l2.4 0.7 -1.2 2.5 -2.6 -0.9zM168.1 41.5l2.7 1.4 -1.3 2.3 -2.6 -1.2z" fill="#0040ff"/><path d="M170.8 42.9l2.6 1.2 -1.4 2.1 -2.5 -1zM173.4 44.1l2.5 0.7 -1.4 2.1 -2.5 -0.7zM175.9 44.8l2.5 0.9 -1.3 2.4 -2.6 -1.2zM178.4 45.7l2.5 1 -1.3 2.4 -2.5 -1zM180.9 46.7l2.6 1.2 -1.3 2.5 -2.6 -1.3z" fill="#0000ff"/><path d="M183.5 47.9l-1.3 2.5 1.8 5.3 1.2 -2.8z" fill="#000080"/><path d="M115.1 27.7l2.4 0.8 -1.3 2.3 -2.5 -0.7zM117.5 28.5l2.4 0.4 -1.3 2.5 -2.4 -0.6zM119.9 28.9l2.4 0.8 -1.2 2.5 -2.5 -0.8zM122.3 29.7l2.5 0.8 -1.5 1.9 -2.2 -0.2zM124.8 30.5l2.3 0.3 -1.2 2.8 -2.6 -1.2zM127.1 30.8l2.6 1.1 -1.3 2.3 -2.5 -0.6z" fill="#00ffff"/><path d="M129.7 31.9l2.4 0.6 -1.3 2.5 -2.4 -0.8zM132.1 32.5l2.5 0.8 -1.3 2.4 -2.5 -0.7zM134.6 33.3l2.4 0.6 -1.3 2.5 -2.4 -0.7zM137 33.9l2.5 0.9 -1.3 2.3 -2.5 -0.7zM139.5 34.8l2.5 0.9 -1.5 1.9 -2.3 -0.5zM142 35.7l2.4 0.6 -1.4 2 -2.5 -0.7z" fill="#00c0ff"/><path d="M144.4 36.3l2.5 0.9 -1.4 2.2 -2.5 -1.1zM146.9 37.2l2.5 0.8 -1.5 2 -2.4 -0.6zM149.4 38l2.6 1.1 -1.5 1.8 -2.6 -0.9zM152 39.1l2.4 0.6 -1.4 2.2 -2.5 -1zM154.4 39.7l2.5 1 -1.5 1.9 -2.4 -0.7zM156.9 40.7l2.5 0.7 -1.6 1.8 -2.4 -0.6z" fill="#0080ff"/><path d="M159.4 41.4l2.5 0.9 -1.5 2 -2.6 -1.1zM161.9 42.3l2.4 0.8 -1.4 2 -2.5 -0.8zM164.3 43.1l2.6 0.9 -1.4 2.2 -2.6 -1.1zM166.9 44l2.6 1.2 -1.5 1.9 -2.5 -0.9zM169.5 45.2l2.5 1 -1.5 2 -2.5 -1.1z" fill="#0040ff"/><path d="M172 46.2l2.5 0.7 -1.4 2.4 -2.6 -1.1zM174.5 46.9l2.6 1.2 -1.3 2.5 -2.7 -1.3zM177.1 48.1l2.5 1 -1.5 2 -2.3 -0.5zM179.6 49.1l2.6 1.3 -1.3 2.4 -2.8 -1.7z" fill="#0000ff"/><path d="M182.2 50.4l2.6 1.1 -1.3 2.5 -2.6 -1.2z" fill="#000080"/><path d="M184.8 51.5l-1.3 2.5 1.5 4.4 1.2 -2.7z" fill="#000080"/><path d="M109.2 29.8l2.4 0.3 -1.4 2.3 -2.3 -0.3zM111.6 30.1l2.1 0 -1.3 2.3 -2.2 0zM113.7 30.1l2.5 0.7 -1.4 2.1 -2.4 -0.5zM116.2 30.8l2.4 0.6 -1.3 2.4 -2.5 -0.9zM118.6 31.4l2.5 0.8 -1.4 2.4 -2.4 -0.8zM121.1 32.2l2.2 0.2 -1.1 3 -2.5 -0.8zM123.3 32.4l2.6 1.2 -1.3 2.3 -2.4 -0.5zM125.9 33.6l2.5 0.6 -1.4 2.3 -2.4 -0.6z" fill="#00ffff"/><path d="M128.4 34.2l2.4 0.8 -1.4 2.1 -2.4 -0.6zM130.8 35l2.5 0.7 -1.4 2.2 -2.5 -0.8zM133.3 35.7l2.4 0.7 -1.5 2 -2.3 -0.5zM135.7 36.4l2.5 0.7 -1.5 2.1 -2.5 -0.8zM138.2 37.1l2.3 0.5 -1.4 2.2 -2.4 -0.6zM140.5 37.6l2.5 0.7 -1.6 1.6 -2.3 -0.1zM143 38.3l2.5 1.1 -1.7 1.3 -2.4 -0.8z" fill="#00c0ff"/><path d="M145.5 39.4l2.4 0.6 -1.6 1.4 -2.5 -0.7zM147.9 40l2.6 0.9 -1.7 1.5 -2.5 -1zM150.5 40.9l2.5 1 -1.7 1.4 -2.5 -0.9zM153 41.9l2.4 0.7 -1.6 1.6 -2.5 -0.9zM155.4 42.6l2.4 0.6 -1.5 1.8 -2.5 -0.8zM157.8 43.2l2.6 1.1 -1.6 1.6 -2.5 -0.9z" fill="#0080ff"/><path d="M160.4 44.3l2.5 0.8 -1.5 1.9 -2.6 -1.1zM162.9 45.1l2.6 1.1 -1.6 1.9 -2.5 -1.1zM165.5 46.2l2.5 0.9 -1.4 2.3 -2.7 -1.3zM168 47.1l2.5 1.1 -1.2 2.5 -2.7 -1.3zM170.5 48.2l2.6 1.1 -1.4 2.2 -2.4 -0.8z" fill="#0040ff"/><path d="M173.1 49.3l2.7 1.3 -1.5 1.9 -2.6 -1zM175.8 50.6l2.3 0.5 -1.3 2.4 -2.5 -1zM178.1 51.1l2.8 1.7 -1.5 2 -2.6 -1.3zM180.9 52.8l2.6 1.2 -1.3 2.3 -2.8 -1.5z" fill="#0000ff"/><path d="M183.5 54l2.6 1.2 -1.3 2.3 -2.6 -1.2zM186.1 55.2l2.7 1.4 -1.3 2.4 -2.7 -1.5z" fill="#000080"/><path d="M188.8 56.6l-1.3 2.4 0.7 2.2 1.2 -2.8z" fill="#000080"/><path d="M105.3 31.1l2.6 1 -1.4 2.1 -2.4 -0.6z" fill="#00ffc0"/><path d="M107.9 32.1l2.3 0.3 -1.4 2.2 -2.3 -0.4zM110.2 32.4l2.2 0 -1.3 2.5 -2.3 -0.3zM112.4 32.4l2.4 0.5 -1.4 2.2 -2.3 -0.2zM114.8 32.9l2.5 0.9 -1.4 2.3 -2.5 -1zM117.3 33.8l2.4 0.8 -1.5 1.8 -2.3 -0.3zM119.7 34.6l2.5 0.8 -1.4 2 -2.6 -1zM122.2 35.4l2.4 0.5 -1.4 2.3 -2.4 -0.8zM124.6 35.9l2.4 0.6 -1.5 2 -2.3 -0.3zM127 36.5l2.4 0.6 -1.5 1.9 -2.4 -0.5z" fill="#00ffff"/><path d="M129.4 37.1l2.5 0.8 -1.5 1.9 -2.5 -0.8zM131.9 37.9l2.3 0.5 -1.5 1.9 -2.3 -0.5zM134.2 38.4l2.5 0.8 -1.5 1.7 -2.5 -0.6zM136.7 39.2l2.4 0.6 -1.6 1.4 -2.3 -0.3zM139.1 39.8l2.3 0.1 -1.6 1.7 -2.3 -0.4zM141.4 39.9l2.4 0.8 -1.5 1.9 -2.5 -1zM143.8 40.7l2.5 0.7 -1.6 1.6 -2.4 -0.4zM146.3 41.4l2.5 1 -1.5 1.7 -2.6 -1.1z" fill="#00c0ff"/><path d="M148.8 42.4l2.5 0.9 -1.6 1.4 -2.4 -0.6zM151.3 43.3l2.5 0.9 -1.6 1.4 -2.5 -0.9zM153.8 44.2l2.5 0.8 -1.6 1.5 -2.5 -0.9zM156.3 45l2.5 0.9 -1.5 1.8 -2.6 -1.2zM158.8 45.9l2.6 1.1 -1.6 1.6 -2.5 -0.9z" fill="#0080ff"/><path d="M161.4 47l2.5 1.1 -1.5 1.9 -2.6 -1.4zM163.9 48.1l2.7 1.3 -1.4 2.1 -2.8 -1.5zM166.6 49.4l2.7 1.3 -1.6 1.7 -2.5 -0.9zM169.3 50.7l2.4 0.8 -1.3 2.3 -2.7 -1.4z" fill="#0040ff"/><path d="M171.7 51.5l2.6 1 -1.4 2.4 -2.5 -1.1zM174.3 52.5l2.5 1 -1.3 2.5 -2.6 -1.1zM176.8 53.5l2.6 1.3 -1.2 2.7 -2.7 -1.5zM179.4 54.8l2.8 1.5 -1.4 2.5 -2.6 -1.3z" fill="#0000ff"/><path d="M182.2 56.3l2.6 1.2 -1.4 2.4 -2.6 -1.1zM184.8 57.5l2.7 1.5 -1.5 1.9 -2.6 -1zM187.5 59l2.5 1.1 -1.4 1.9 -2.6 -1.1z" fill="#000080"/><path d="M190 60.1l-1.4 1.9 0.6 1.9 1.2 -2.7z" fill="#000080"/><path d="M101.8 33.4l2.3 0.2 -1.4 2.3 -2.4 -0.6zM104.1 33.6l2.4 0.6 -1.4 2.3 -2.4 -0.6zM106.5 34.2l2.3 0.4 -1.3 2.5 -2.4 -0.6z" fill="#00ffc0"/><path d="M108.8 34.6l2.3 0.3 -1.2 2.7 -2.4 -0.5zM111.1 34.9l2.3 0.2 -1.2 2.8 -2.3 -0.3zM113.4 35.1l2.5 1 -1.4 2.1 -2.3 -0.3zM115.9 36.1l2.3 0.3 -1.3 2.5 -2.4 -0.7zM118.2 36.4l2.6 1 -1.6 1.8 -2.3 -0.3zM120.8 37.4l2.4 0.8 -1.5 2 -2.5 -1zM123.2 38.2l2.3 0.3 -1.3 2.3 -2.5 -0.6zM125.5 38.5l2.4 0.5 -1.5 2 -2.2 -0.2zM127.9 39l2.5 0.8 -1.6 1.6 -2.4 -0.4zM130.4 39.8l2.3 0.5 -1.5 1.7 -2.4 -0.6z" fill="#00ffff"/><path d="M132.7 40.3l2.5 0.6 -1.8 1.1 -2.2 0zM135.2 40.9l2.3 0.3 -1.8 1.2 -2.3 -0.4zM137.5 41.2l2.3 0.4 -1.6 1.6 -2.5 -0.8zM139.8 41.6l2.5 1 -1.6 1.6 -2.5 -1zM142.3 42.6l2.4 0.4 -1.4 2.1 -2.6 -0.9zM144.7 43l2.6 1.1 -1.6 1.8 -2.4 -0.8zM147.3 44.1l2.4 0.6 -1.5 1.9 -2.5 -0.7z" fill="#00c0ff"/><path d="M149.7 44.7l2.5 0.9 -1.6 1.8 -2.4 -0.8zM152.2 45.6l2.5 0.9 -1.5 1.9 -2.6 -1zM154.7 46.5l2.6 1.2 -1.5 1.8 -2.6 -1.1zM157.3 47.7l2.5 0.9 -1.4 2.3 -2.6 -1.4zM159.8 48.6l2.6 1.4 -1.4 2 -2.6 -1.1z" fill="#0080ff"/><path d="M162.4 50l2.8 1.5 -1.6 1.7 -2.6 -1.2zM165.2 51.5l2.5 0.9 -1.3 2.6 -2.8 -1.8zM167.7 52.4l2.7 1.4 -1.3 2.6 -2.7 -1.4z" fill="#0040ff"/><path d="M170.4 53.8l2.5 1.1 -1.2 2.8 -2.6 -1.3zM172.9 54.9l2.6 1.1 -1.1 3 -2.7 -1.3zM175.5 56l2.7 1.5 -1.2 2.6 -2.6 -1.1zM178.2 57.5l2.6 1.3 -1.2 2.6 -2.6 -1.3z" fill="#0000ff"/><path d="M180.8 58.8l2.6 1.1 -1.2 2.6 -2.6 -1.1zM183.4 59.9l2.6 1 -1.2 2.8 -2.6 -1.2zM186 60.9l2.6 1.1 -1.3 2.7 -2.5 -1zM188.6 62l2.6 1.2 -1.4 2.4 -2.5 -0.9z" fill="#000080"/><path d="M191.2 63.2l-1.4 2.4 0.4 1 1.2 -2.7z" fill="#000080"/><path d="M97.9 34.7l2.4 0.6 -1.3 2.5 -2.5 -0.8zM100.3 35.3l2.4 0.6 -1.4 2.4 -2.3 -0.5zM102.7 35.9l2.4 0.6 -1.4 2.4 -2.4 -0.6zM105.1 36.5l2.4 0.6 -1.3 2.6 -2.5 -0.8zM107.5 37.1l2.4 0.5 -1.3 2.5 -2.4 -0.4z" fill="#00ffc0"/><path d="M109.9 37.6l2.3 0.3 -1.3 2.6 -2.3 -0.4zM112.2 37.9l2.3 0.3 -1.2 2.7 -2.4 -0.4zM114.5 38.2l2.4 0.7 -1.3 2.6 -2.3 -0.6zM116.9 38.9l2.3 0.3 -1.2 2.6 -2.4 -0.3zM119.2 39.2l2.5 1 -1.4 2.1 -2.3 -0.5zM121.7 40.2l2.5 0.6 -1.5 1.9 -2.4 -0.4zM124.2 40.8l2.2 0.2 -1.4 2.1 -2.3 -0.4zM126.4 41l2.4 0.4 -1.4 2.3 -2.4 -0.6zM128.8 41.4l2.4 0.6 -1.6 1.8 -2.2 -0.1zM131.2 42l2.2 0 -1.5 2 -2.3 -0.2zM133.4 42l2.3 0.4 -1.5 1.7 -2.3 -0.1z" fill="#00ffff"/><path d="M135.7 42.4l2.5 0.8 -1.6 1.7 -2.4 -0.8zM138.2 43.2l2.5 1 -1.5 1.8 -2.6 -1.1zM140.7 44.2l2.6 0.9 -1.6 1.8 -2.5 -0.9zM143.3 45.1l2.4 0.8 -1.6 1.6 -2.4 -0.6zM145.7 45.9l2.5 0.7 -1.5 1.9 -2.6 -1zM148.2 46.6l2.4 0.8 -1.4 2.2 -2.5 -1.1z" fill="#00c0ff"/><path d="M150.6 47.4l2.6 1 -1.5 2.1 -2.5 -0.9zM153.2 48.4l2.6 1.1 -1.6 1.7 -2.5 -0.7zM155.8 49.5l2.6 1.4 -1.6 1.6 -2.6 -1.3zM158.4 50.9l2.6 1.1 -1.6 1.6 -2.6 -1.1z" fill="#0080ff"/><path d="M161 52l2.6 1.2 -1.5 1.9 -2.7 -1.5zM163.6 53.2l2.8 1.8 -1.5 1.7 -2.8 -1.6zM166.4 55l2.7 1.4 -1.4 2.1 -2.8 -1.8zM169.1 56.4l2.6 1.3 -1.3 2.2 -2.7 -1.4z" fill="#0040ff"/><path d="M171.7 57.7l2.7 1.3 -1.4 2.4 -2.6 -1.5zM174.4 59l2.6 1.1 -1.4 2.4 -2.6 -1.1zM177 60.1l2.6 1.3 -1.4 2.3 -2.6 -1.2z" fill="#0000ff"/><path d="M179.6 61.4l2.6 1.1 -1.3 2.7 -2.7 -1.5zM182.2 62.5l2.6 1.2 -1.4 2.4 -2.5 -0.9zM184.8 63.7l2.5 1 -1.3 2.4 -2.6 -1zM187.3 64.7l2.5 0.9 -1.3 2.4 -2.5 -0.9zM189.8 65.6l2.5 0.9 -1.2 2.6 -2.6 -1.1z" fill="#000080"/><path d="M192.3 66.5l-1.2 2.6 0.1 0.3 1.2 -2.8z" fill="#000080"/><path d="M94.3 37.1l2.2 -0.1 -1.2 2.7 -2.3 -0.2zM96.5 37l2.5 0.8 -1.4 2.3 -2.3 -0.4zM99 37.8l2.3 0.5 -1.3 2.2 -2.4 -0.4zM101.3 38.3l2.4 0.6 -1.4 2.1 -2.3 -0.5zM103.7 38.9l2.5 0.8 -1.4 2 -2.5 -0.7zM106.2 39.7l2.4 0.4 -1.5 2 -2.3 -0.4zM108.6 40.1l2.3 0.4 -1.5 1.9 -2.3 -0.3z" fill="#00ffc0"/><path d="M110.9 40.5l2.4 0.4 -1.6 1.9 -2.3 -0.4zM113.3 40.9l2.3 0.6 -1.4 2 -2.5 -0.7zM115.6 41.5l2.4 0.3 -1.4 2.2 -2.4 -0.5zM118 41.8l2.3 0.5 -1.4 2.1 -2.3 -0.4zM120.3 42.3l2.4 0.4 -1.6 1.7 -2.2 0zM122.7 42.7l2.3 0.4 -1.5 1.8 -2.4 -0.5zM125 43.1l2.4 0.6 -1.5 1.7 -2.4 -0.5zM127.4 43.7l2.2 0.1 -1.4 1.9 -2.3 -0.3zM129.6 43.8l2.3 0.2 -1.5 1.8 -2.2 -0.1zM131.9 44l2.3 0.1 -1.5 2 -2.3 -0.3zM134.2 44.1l2.4 0.8 -1.5 1.9 -2.4 -0.7z" fill="#00ffff"/><path d="M136.6 44.9l2.6 1.1 -1.5 1.8 -2.6 -1zM139.2 46l2.5 0.9 -1.6 1.5 -2.4 -0.6zM141.7 46.9l2.4 0.6 -1.6 1.7 -2.4 -0.8zM144.1 47.5l2.6 1 -1.6 1.7 -2.6 -1zM146.7 48.5l2.5 1.1 -1.5 1.6 -2.6 -1zM149.2 49.6l2.5 0.9 -1.5 1.6 -2.5 -0.9z" fill="#00c0ff"/><path d="M151.7 50.5l2.5 0.7 -1.5 1.9 -2.5 -1zM154.2 51.2l2.6 1.3 -1.4 2.1 -2.7 -1.5zM156.8 52.5l2.6 1.1 -1.3 2.3 -2.7 -1.3zM159.4 53.6l2.7 1.5 -1.3 2.4 -2.7 -1.6z" fill="#0080ff"/><path d="M162.1 55.1l2.8 1.6 -1.4 2.4 -2.7 -1.6zM164.9 56.7l2.8 1.8 -1.5 1.8 -2.7 -1.2zM167.7 58.5l2.7 1.4 -1.6 1.8 -2.6 -1.4z" fill="#0040ff"/><path d="M170.4 59.9l2.6 1.5 -1.6 1.4 -2.6 -1.1zM173 61.4l2.6 1.1 -1.5 1.7 -2.7 -1.4zM175.6 62.5l2.6 1.2 -1.4 2.1 -2.7 -1.6zM178.2 63.7l2.7 1.5 -1.4 1.9 -2.7 -1.3z" fill="#0000ff"/><path d="M180.9 65.2l2.5 0.9 -1.3 2.4 -2.6 -1.4zM183.4 66.1l2.6 1 -1.3 2.5 -2.6 -1.1zM186 67.1l2.5 0.9 -1.3 2.4 -2.5 -0.8zM188.5 68l2.6 1.1 -1.4 2.3 -2.5 -1zM191.1 69.1l2.3 0.3 -1.2 2.7 -2.5 -0.7z" fill="#000080"/><path d="M193.4 69.4l-1.2 2.7 0 0 1.2 -2.7z" fill="#000080"/><path d="M90.8 39.5l2.2 0 -1.5 2 -2.3 -0.4zM93 39.5l2.3 0.2 -1.5 2 -2.3 -0.2zM95.3 39.7l2.3 0.4 -1.4 2.1 -2.4 -0.5zM97.6 40.1l2.4 0.4 -1.3 2.5 -2.5 -0.8zM100 40.5l2.3 0.5 -1.3 2.5 -2.3 -0.5zM102.3 41l2.5 0.7 -1.5 2 -2.3 -0.2zM104.8 41.7l2.3 0.4 -1.6 1.6 -2.2 0zM107.1 42.1l2.3 0.3 -1.5 1.7 -2.4 -0.4zM109.4 42.4l2.3 0.4 -1.5 1.7 -2.3 -0.4zM111.7 42.8l2.5 0.7 -1.6 1.7 -2.4 -0.7z" fill="#00ffc0"/><path d="M114.2 43.5l2.4 0.5 -1.6 1.6 -2.4 -0.4zM116.6 44l2.3 0.4 -1.6 1.6 -2.3 -0.4zM118.9 44.4l2.2 0 -1.5 1.9 -2.3 -0.3zM121.1 44.4l2.4 0.5 -1.6 1.7 -2.3 -0.3zM123.5 44.9l2.4 0.5 -1.6 1.6 -2.4 -0.4zM125.9 45.4l2.3 0.3 -1.6 1.7 -2.3 -0.4zM128.2 45.7l2.2 0.1 -1.4 2.3 -2.4 -0.7zM130.4 45.8l2.3 0.3 -1.5 2 -2.2 0zM132.7 46.1l2.4 0.7 -1.4 2.2 -2.5 -0.9zM135.1 46.8l2.6 1 -1.5 2.1 -2.5 -0.9z" fill="#00ffff"/><path d="M137.7 47.8l2.4 0.6 -1.5 2 -2.4 -0.5zM140.1 48.4l2.4 0.8 -1.5 1.6 -2.4 -0.4zM142.5 49.2l2.6 1 -1.7 1.3 -2.4 -0.7zM145.1 50.2l2.6 1 -1.6 1.6 -2.7 -1.3zM147.7 51.2l2.5 0.9 -1.5 1.9 -2.6 -1.2zM150.2 52.1l2.5 1 -1.4 2.1 -2.6 -1.2z" fill="#00c0ff"/><path d="M152.7 53.1l2.7 1.5 -1.5 1.9 -2.6 -1.3zM155.4 54.6l2.7 1.3 -1.5 2.2 -2.7 -1.6zM158.1 55.9l2.7 1.6 -1.4 2.1 -2.8 -1.5z" fill="#0080ff"/><path d="M160.8 57.5l2.7 1.6 -1.6 1.6 -2.5 -1.1zM163.5 59.1l2.7 1.2 -1.7 1.5 -2.6 -1.1zM166.2 60.3l2.6 1.4 -1.7 1.3 -2.6 -1.2zM168.8 61.7l2.6 1.1 -1.7 1.4 -2.6 -1.2z" fill="#0040ff"/><path d="M171.4 62.8l2.7 1.4 -1.7 1.4 -2.7 -1.4zM174.1 64.2l2.7 1.6 -1.8 1.1 -2.6 -1.3zM176.8 65.8l2.7 1.3 -1.8 1.2 -2.7 -1.4zM179.5 67.1l2.6 1.4 -1.7 1.3 -2.7 -1.5z" fill="#0000ff"/><path d="M182.1 68.5l2.6 1.1 -1.6 1.7 -2.7 -1.5zM184.7 69.6l2.5 0.8 -1.5 1.8 -2.6 -0.9zM187.2 70.4l2.5 1 -1.5 1.8 -2.5 -1zM189.7 71.4l2.5 0.7 -1.5 2 -2.5 -0.9zM192.2 72.1l2.2 0 -1.2 2.8 -2.5 -0.8z" fill="#000080"/><path d="M194.4 72.1l-1.2 2.8 0 0 1.2 -2.8z" fill="#000080"/><path d="M86.8 40.5l2.4 0.6 -1.4 2.1 -2.3 -0.3z" fill="#00ff80"/><path d="M89.2 41.1l2.3 0.4 -1.4 2 -2.3 -0.3zM91.5 41.5l2.3 0.2 -1.5 1.9 -2.2 -0.1zM93.8 41.7l2.4 0.5 -1.4 2.2 -2.5 -0.8zM96.2 42.2l2.5 0.8 -1.5 2.1 -2.4 -0.7zM98.7 43l2.3 0.5 -1.5 1.9 -2.3 -0.3zM101 43.5l2.3 0.2 -1.5 1.9 -2.3 -0.2zM103.3 43.7l2.2 0 -1.4 2.2 -2.3 -0.3zM105.5 43.7l2.4 0.4 -1.3 2.5 -2.5 -0.7zM107.9 44.1l2.3 0.4 -1.3 2.4 -2.3 -0.3zM110.2 44.5l2.4 0.7 -1.5 1.8 -2.2 -0.1zM112.6 45.2l2.4 0.4 -1.5 1.9 -2.4 -0.5zM115 45.6l2.3 0.4 -1.5 1.9 -2.3 -0.4z" fill="#00ffc0"/><path d="M117.3 46l2.3 0.3 -1.4 2.1 -2.4 -0.5zM119.6 46.3l2.3 0.3 -1.5 1.8 -2.2 0zM121.9 46.6l2.4 0.4 -1.6 1.9 -2.3 -0.5zM124.3 47l2.3 0.4 -1.4 2.2 -2.5 -0.7zM126.6 47.4l2.4 0.7 -1.5 1.8 -2.3 -0.3zM129 48.1l2.2 0 -1.5 1.9 -2.2 -0.1zM131.2 48.1l2.5 0.9 -1.5 1.7 -2.5 -0.7zM133.7 49l2.5 0.9 -1.6 1.5 -2.4 -0.7zM136.2 49.9l2.4 0.5 -1.5 1.7 -2.5 -0.7zM138.6 50.4l2.4 0.4 -1.6 1.8 -2.3 -0.5z" fill="#00ffff"/><path d="M141 50.8l2.4 0.7 -1.5 2 -2.5 -0.9zM143.4 51.5l2.7 1.3 -1.5 1.9 -2.7 -1.2zM146.1 52.8l2.6 1.2 -1.5 2 -2.6 -1.3zM148.7 54l2.6 1.2 -1.4 2.3 -2.7 -1.5z" fill="#00c0ff"/><path d="M151.3 55.2l2.6 1.3 -1.4 2.1 -2.6 -1.1zM153.9 56.5l2.7 1.6 -1.4 2 -2.7 -1.5zM156.6 58.1l2.8 1.5 -1.7 1.3 -2.5 -0.8zM159.4 59.6l2.5 1.1 -1.6 1.6 -2.6 -1.4z" fill="#0080ff"/><path d="M161.9 60.7l2.6 1.1 -1.6 1.5 -2.6 -1zM164.5 61.8l2.6 1.2 -1.8 1.1 -2.4 -0.8zM167.1 63l2.6 1.2 -1.6 1.4 -2.8 -1.5zM169.7 64.2l2.7 1.4 -1.7 1.4 -2.6 -1.4z" fill="#0040ff"/><path d="M172.4 65.6l2.6 1.3 -1.5 1.7 -2.8 -1.6zM175 66.9l2.7 1.4 -1.6 1.6 -2.6 -1.3zM177.7 68.3l2.7 1.5 -1.6 1.6 -2.7 -1.5zM180.4 69.8l2.7 1.5 -1.6 1.6 -2.7 -1.5z" fill="#0000ff"/><path d="M183.1 71.3l2.6 0.9 -1.6 1.8 -2.6 -1.1zM185.7 72.2l2.5 1 -1.5 1.9 -2.6 -1.1zM188.2 73.2l2.5 0.9 -1.5 1.9 -2.5 -0.9zM190.7 74.1l2.5 0.8 -1.3 2.6 -2.7 -1.5zM193.2 74.9l2.2 0 -1.2 2.7 -2.3 -0.1z" fill="#000080"/><path d="M195.4 74.9l-1.2 2.7 0 0 1.2 -2.7z" fill="#000080"/><path d="M85.5 42.9l2.3 0.3 -1.4 2.3 -2.3 -0.3zM87.8 43.2l2.3 0.3 -1.3 2.6 -2.4 -0.6z" fill="#00ff80"/><path d="M90.1 43.5l2.2 0.1 -1.1 3 -2.4 -0.5zM92.3 43.6l2.5 0.8 -1.3 2.4 -2.3 -0.2zM94.8 44.4l2.4 0.7 -1.3 2.3 -2.4 -0.6zM97.2 45.1l2.3 0.3 -1.4 2.1 -2.2 -0.1zM99.5 45.4l2.3 0.2 -1.4 2.2 -2.3 -0.3zM101.8 45.6l2.3 0.3 -1.3 2.4 -2.4 -0.5zM104.1 45.9l2.5 0.7 -1.6 1.8 -2.2 -0.1zM106.6 46.6l2.3 0.3 -1.5 1.9 -2.4 -0.4zM108.9 46.9l2.2 0.1 -1.6 1.7 -2.1 0.1zM111.1 47l2.4 0.5 -1.6 1.7 -2.4 -0.5zM113.5 47.5l2.3 0.4 -1.5 1.8 -2.4 -0.5zM115.8 47.9l2.4 0.5 -1.5 1.9 -2.4 -0.6zM118.2 48.4l2.2 0 -1.4 2.3 -2.3 -0.4z" fill="#00ffc0"/><path d="M120.4 48.4l2.3 0.5 -1.3 2.4 -2.4 -0.6zM122.7 48.9l2.5 0.7 -1.4 2.2 -2.4 -0.5zM125.2 49.6l2.3 0.3 -1.4 2.3 -2.3 -0.4zM127.5 49.9l2.2 0.1 -1.4 2.1 -2.2 0.1zM129.7 50l2.5 0.7 -1.4 2.2 -2.5 -0.8zM132.2 50.7l2.4 0.7 -1.7 1.4 -2.1 0.1zM134.6 51.4l2.5 0.7 -1.7 1.4 -2.5 -0.7zM137.1 52.1l2.3 0.5 -1.4 1.9 -2.6 -1zM139.4 52.6l2.5 0.9 -1.5 1.9 -2.4 -0.9z" fill="#00ffff"/><path d="M141.9 53.5l2.7 1.2 -1.6 1.9 -2.6 -1.2zM144.6 54.7l2.6 1.3 -1.6 1.6 -2.6 -1zM147.2 56l2.7 1.5 -1.6 1.6 -2.7 -1.5zM149.9 57.5l2.6 1.1 -1.5 2 -2.7 -1.5z" fill="#00c0ff"/><path d="M152.5 58.6l2.7 1.5 -1.6 1.6 -2.6 -1.1zM155.2 60.1l2.5 0.8 -1.6 1.8 -2.5 -1zM157.7 60.9l2.6 1.4 -1.7 1.3 -2.5 -0.9zM160.3 62.3l2.6 1 -1.7 1.3 -2.6 -1z" fill="#0080ff"/><path d="M162.9 63.3l2.4 0.8 -1.5 1.6 -2.6 -1.1zM165.3 64.1l2.8 1.5 -1.7 1.4 -2.6 -1.3zM168.1 65.6l2.6 1.4 -1.5 1.9 -2.8 -1.9zM170.7 67l2.8 1.6 -1.6 1.8 -2.7 -1.5z" fill="#0040ff"/><path d="M173.5 68.6l2.6 1.3 -1.4 2.2 -2.8 -1.7zM176.1 69.9l2.7 1.5 -1.4 2.2 -2.7 -1.5zM178.8 71.4l2.7 1.5 -1.4 2.2 -2.7 -1.5z" fill="#0000ff"/><path d="M181.5 72.9l2.6 1.1 -1.4 2.2 -2.6 -1.1zM184.1 74l2.6 1.1 -1.4 2.2 -2.6 -1.1zM186.7 75.1l2.5 0.9 -1.4 2.3 -2.5 -1zM189.2 76l2.7 1.5 -1.6 1.6 -2.5 -0.8zM191.9 77.5l2.3 0.1 -1.2 2.8 -2.7 -1.3z" fill="#000080"/><path d="M194.2 77.6l-1.2 2.8 0 0 1.2 -2.8z" fill="#000080"/><path d="M81.8 44.8l2.3 0.4 -1.3 2.4 -2.4 -0.5zM84.1 45.2l2.3 0.3 -1.3 2.5 -2.3 -0.4zM86.4 45.5l2.4 0.6 -1.4 2 -2.3 -0.1zM88.8 46.1l2.4 0.5 -1.5 1.7 -2.3 -0.2z" fill="#00ff80"/><path d="M91.2 46.6l2.3 0.2 -1.5 2 -2.3 -0.5zM93.5 46.8l2.4 0.6 -1.6 1.7 -2.3 -0.3zM95.9 47.4l2.2 0.1 -1.5 1.8 -2.3 -0.2zM98.1 47.5l2.3 0.3 -1.5 1.8 -2.3 -0.3zM100.4 47.8l2.4 0.5 -1.6 1.6 -2.3 -0.3zM102.8 48.3l2.2 0.1 -1.4 2 -2.4 -0.5zM105 48.4l2.4 0.4 -1.6 1.8 -2.2 -0.2zM107.4 48.8l2.1 -0.1 -1.5 1.8 -2.2 0.1zM109.5 48.7l2.4 0.5 -1.6 1.6 -2.3 -0.3zM111.9 49.2l2.4 0.5 -1.6 1.7 -2.4 -0.6zM114.3 49.7l2.4 0.6 -1.5 1.8 -2.5 -0.7zM116.7 50.3l2.3 0.4 -1.4 2.1 -2.4 -0.7zM119 50.7l2.4 0.6 -1.5 1.7 -2.3 -0.2zM121.4 51.3l2.4 0.5 -1.5 1.8 -2.4 -0.6z" fill="#00ffc0"/><path d="M123.8 51.8l2.3 0.4 -1.4 2 -2.4 -0.6zM126.1 52.2l2.2 -0.1 -1.3 2.5 -2.3 -0.4zM128.3 52.1l2.5 0.8 -1.5 1.8 -2.3 -0.1zM130.8 52.9l2.1 -0.1 -1.3 2.3 -2.3 -0.4zM132.9 52.8l2.5 0.7 -1.4 2.2 -2.4 -0.6zM135.4 53.5l2.6 1 -1.5 2.1 -2.5 -0.9zM138 54.5l2.4 0.9 -1.3 2.2 -2.6 -1zM140.4 55.4l2.6 1.2 -1.5 1.8 -2.4 -0.8z" fill="#00ffff"/><path d="M143 56.6l2.6 1 -1.6 1.6 -2.5 -0.8zM145.6 57.6l2.7 1.5 -1.6 1.6 -2.7 -1.5zM148.3 59.1l2.7 1.5 -1.6 1.5 -2.7 -1.4zM151 60.6l2.6 1.1 -1.6 1.6 -2.6 -1.2z" fill="#00c0ff"/><path d="M153.6 61.7l2.5 1 -1.6 1.5 -2.5 -0.9zM156.1 62.7l2.5 0.9 -1.6 1.6 -2.5 -1zM158.6 63.6l2.6 1 -1.6 1.5 -2.6 -0.9zM161.2 64.6l2.6 1.1 -1.6 1.6 -2.6 -1.2z" fill="#0080ff"/><path d="M163.8 65.7l2.6 1.3 -1.5 1.9 -2.7 -1.6zM166.4 67l2.8 1.9 -1.5 1.8 -2.8 -1.8zM169.2 68.9l2.7 1.5 -1.4 2 -2.8 -1.7z" fill="#0040ff"/><path d="M171.9 70.4l2.8 1.7 -1.3 2.2 -2.9 -1.9zM174.7 72.1l2.7 1.5 -1.3 2.3 -2.7 -1.6zM177.4 73.6l2.7 1.5 -1.4 2.1 -2.6 -1.3zM180.1 75.1l2.6 1.1 -1.4 2 -2.6 -1z" fill="#0000ff"/><path d="M182.7 76.2l2.6 1.1 -1.4 2.1 -2.6 -1.2zM185.3 77.3l2.5 1 -1.6 1.6 -2.3 -0.5zM187.8 78.3l2.5 0.8 -1.4 2.1 -2.7 -1.3zM190.3 79.1l2.7 1.3 -1.4 2.3 -2.7 -1.5zM193 80.4l2.2 0 -1.3 2.7 -2.3 -0.4z" fill="#000080"/><path d="M195.2 80.4l-1.3 2.7 0 0 1.3 -2.7z" fill="#000080"/><path d="M80.4 47.1l2.4 0.5 -1.4 2.3 -2.2 -0.1zM82.8 47.6l2.3 0.4 -1.3 2.3 -2.4 -0.4zM85.1 48l2.3 0.1 -1.4 2.3 -2.2 -0.1zM87.4 48.1l2.3 0.2 -1.5 2.2 -2.2 -0.1zM89.7 48.3l2.3 0.5 -1.5 1.8 -2.3 -0.1zM92 48.8l2.3 0.3 -1.6 1.5 -2.2 0zM94.3 49.1l2.3 0.2 -1.6 1.6 -2.3 -0.3zM96.6 49.3l2.3 0.3 -1.6 1.6 -2.3 -0.3z" fill="#00ff80"/><path d="M98.9 49.6l2.3 0.3 -1.4 2.2 -2.5 -0.9zM101.2 49.9l2.4 0.5 -1.6 1.8 -2.2 -0.1zM103.6 50.4l2.2 0.2 -1.6 1.5 -2.2 0.1zM105.8 50.6l2.2 -0.1 -1.5 1.7 -2.3 -0.1zM108 50.5l2.3 0.3 -1.5 1.8 -2.3 -0.4zM110.3 50.8l2.4 0.6 -1.5 1.7 -2.4 -0.5zM112.7 51.4l2.5 0.7 -1.6 1.7 -2.4 -0.7zM115.2 52.1l2.4 0.7 -1.6 1.6 -2.4 -0.6zM117.6 52.8l2.3 0.2 -1.6 1.7 -2.3 -0.3zM119.9 53l2.4 0.6 -1.7 1.3 -2.3 -0.2zM122.3 53.6l2.4 0.6 -1.7 1.4 -2.4 -0.7zM124.7 54.2l2.3 0.4 -1.7 1.3 -2.3 -0.3z" fill="#00ffc0"/><path d="M127 54.6l2.3 0.1 -1.7 1.5 -2.3 -0.3zM129.3 54.7l2.3 0.4 -1.5 1.8 -2.5 -0.7zM131.6 55.1l2.4 0.6 -1.6 1.6 -2.3 -0.4zM134 55.7l2.5 0.9 -1.4 2.2 -2.7 -1.5zM136.5 56.6l2.6 1 -1.6 1.9 -2.4 -0.7zM139.1 57.6l2.4 0.8 -1.5 1.7 -2.5 -0.6zM141.5 58.4l2.5 0.8 -1.6 1.7 -2.4 -0.8z" fill="#00ffff"/><path d="M144 59.2l2.7 1.5 -1.7 1.4 -2.6 -1.2zM146.7 60.7l2.7 1.4 -1.7 1.2 -2.7 -1.2zM149.4 62.1l2.6 1.2 -1.7 1.2 -2.6 -1.2zM152 63.3l2.5 0.9 -1.7 1.2 -2.5 -0.9z" fill="#00c0ff"/><path d="M154.5 64.2l2.5 1 -1.6 1.6 -2.6 -1.4zM157 65.2l2.6 0.9 -1.6 1.9 -2.6 -1.2zM159.6 66.1l2.6 1.2 -1.6 1.7 -2.6 -1zM162.2 67.3l2.7 1.6 -1.6 1.7 -2.7 -1.6z" fill="#0080ff"/><path d="M164.9 68.9l2.8 1.8 -1.5 2 -2.9 -2.1zM167.7 70.7l2.8 1.7 -1.4 2.3 -2.9 -2zM170.5 72.4l2.9 1.9 -1.5 2 -2.8 -1.6z" fill="#0040ff"/><path d="M173.4 74.3l2.7 1.6 -1.5 1.8 -2.7 -1.4zM176.1 75.9l2.6 1.3 -1.5 2 -2.6 -1.5zM178.7 77.2l2.6 1 -1.5 1.9 -2.6 -0.9z" fill="#0000ff"/><path d="M181.3 78.2l2.6 1.2 -1.5 1.9 -2.6 -1.2zM183.9 79.4l2.3 0.5 -1.3 2.5 -2.5 -1.1zM186.2 79.9l2.7 1.3 -1.4 2.2 -2.6 -1zM188.9 81.2l2.7 1.5 -1.6 1.5 -2.5 -0.8zM191.6 82.7l2.3 0.4 -1.5 1.8 -2.4 -0.7z" fill="#000080"/><path d="M193.9 83.1l-1.5 1.8 0.3 1 1.2 -2.8z" fill="#000080"/><path d="M79.2 49.8l2.2 0.1 -1.4 2.2 -2.2 0zM81.4 49.9l2.4 0.4 -1.5 1.9 -2.3 -0.1zM83.8 50.3l2.2 0.1 -1.4 2.1 -2.3 -0.3zM86 50.4l2.2 0.1 -1.3 2.3 -2.3 -0.3zM88.2 50.5l2.3 0.1 -1.4 2.1 -2.2 0.1zM90.5 50.6l2.2 0 -1.4 2.1 -2.2 0zM92.7 50.6l2.3 0.3 -1.5 1.9 -2.2 -0.1zM95 50.9l2.3 0.3 -1.5 1.8 -2.3 -0.2zM97.3 51.2l2.5 0.9 -1.7 1.3 -2.3 -0.4zM99.8 52.1l2.2 0.1 -1.7 1.3 -2.2 -0.1zM102 52.2l2.2 -0.1 -1.6 1.7 -2.3 -0.3zM104.2 52.1l2.3 0.1 -1.7 1.6 -2.2 0z" fill="#00ff80"/><path d="M106.5 52.2l2.3 0.4 -1.7 1.3 -2.3 -0.1zM108.8 52.6l2.4 0.5 -1.7 1.4 -2.4 -0.6zM111.2 53.1l2.4 0.7 -1.7 1.4 -2.4 -0.7zM113.6 53.8l2.4 0.6 -1.6 1.5 -2.5 -0.7zM116 54.4l2.3 0.3 -1.6 1.6 -2.3 -0.4zM118.3 54.7l2.3 0.2 -1.6 1.7 -2.3 -0.3zM120.6 54.9l2.4 0.7 -1.7 1.4 -2.3 -0.4zM123 55.6l2.3 0.3 -1.5 1.7 -2.5 -0.6zM125.3 55.9l2.3 0.3 -1.6 1.5 -2.2 -0.1zM127.6 56.2l2.5 0.7 -1.7 1.4 -2.4 -0.6zM130.1 56.9l2.3 0.4 -1.5 2 -2.5 -1z" fill="#00ffc0"/><path d="M132.4 57.3l2.7 1.5 -1.6 1.6 -2.6 -1.1zM135.1 58.8l2.4 0.7 -1.6 1.4 -2.4 -0.5zM137.5 59.5l2.5 0.6 -1.7 1.4 -2.4 -0.6zM140 60.1l2.4 0.8 -1.6 1.6 -2.5 -1zM142.4 60.9l2.6 1.2 -1.5 1.7 -2.7 -1.3z" fill="#00ffff"/><path d="M145 62.1l2.7 1.2 -1.6 1.7 -2.6 -1.2zM147.7 63.3l2.6 1.2 -1.5 1.9 -2.7 -1.4zM150.3 64.5l2.5 0.9 -1.5 2.1 -2.5 -1.1zM152.8 65.4l2.6 1.4 -1.5 1.9 -2.6 -1.2z" fill="#00c0ff"/><path d="M155.4 66.8l2.6 1.2 -1.4 2 -2.7 -1.3zM158 68l2.6 1 -1.4 2.3 -2.6 -1.3zM160.6 69l2.7 1.6 -1.4 2 -2.7 -1.3z" fill="#0080ff"/><path d="M163.3 70.6l2.9 2.1 -1.4 2 -2.9 -2.1zM166.2 72.7l2.9 2 -1.5 1.8 -2.8 -1.8zM169.1 74.7l2.8 1.6 -1.6 1.7 -2.7 -1.5z" fill="#0040ff"/><path d="M171.9 76.3l2.7 1.4 -1.6 1.9 -2.7 -1.6zM174.6 77.7l2.6 1.5 -1.4 1.9 -2.8 -1.5zM177.2 79.2l2.6 0.9 -1.4 2.3 -2.6 -1.3zM179.8 80.1l2.6 1.2 -1.5 2 -2.5 -0.9z" fill="#0000ff"/><path d="M182.4 81.3l2.5 1.1 -1.4 2 -2.6 -1.1zM184.9 82.4l2.6 1 -1.6 1.7 -2.4 -0.7zM187.5 83.4l2.5 0.8 -1.5 2.1 -2.6 -1.2zM190 84.2l2.4 0.7 -1.5 1.9 -2.4 -0.5zM192.4 84.9l2.5 0.9 -1.5 1.9 -2.5 -0.9z" fill="#000080"/><path d="M194.9 85.8l-1.5 1.9 0.3 0.9 1.2 -2.7z" fill="#000080"/><path d="M75.6 51.9l2.2 0.2 -1.4 2 -2.3 -0.3zM77.8 52.1l2.2 0 -1.4 2.1 -2.2 -0.1zM80 52.1l2.3 0.1 -1.4 2.4 -2.3 -0.4zM82.3 52.2l2.3 0.3 -1.3 2.5 -2.4 -0.4zM84.6 52.5l2.3 0.3 -1.5 2 -2.1 0.2zM86.9 52.8l2.2 -0.1 -1.5 1.9 -2.2 0.2zM89.1 52.7l2.2 0 -1.5 1.9 -2.2 0zM91.3 52.7l2.2 0.1 -1.5 2 -2.2 -0.2zM93.5 52.8l2.3 0.2 -1.5 2 -2.3 -0.2zM95.8 53l2.3 0.4 -1.7 1.3 -2.1 0.3zM98.1 53.4l2.2 0.1 -1.7 1.3 -2.2 -0.1zM100.3 53.5l2.3 0.3 -1.8 1 -2.2 0zM102.6 53.8l2.2 0 -1.7 1.2 -2.3 -0.2zM104.8 53.8l2.3 0.1 -1.7 1.4 -2.3 -0.3zM107.1 53.9l2.4 0.6 -1.8 1.1 -2.3 -0.3zM109.5 54.5l2.4 0.7 -1.6 1.5 -2.6 -1.1z" fill="#00ff80"/><path d="M111.9 55.2l2.5 0.7 -1.6 1.6 -2.5 -0.8zM114.4 55.9l2.3 0.4 -1.7 1.2 -2.2 0zM116.7 56.3l2.3 0.3 -1.7 1.2 -2.3 -0.3zM119 56.6l2.3 0.4 -1.5 1.6 -2.5 -0.8zM121.3 57l2.5 0.6 -1.7 1.6 -2.3 -0.6zM123.8 57.6l2.2 0.1 -1.7 1.4 -2.2 0.1zM126 57.7l2.4 0.6 -1.6 1.6 -2.5 -0.8zM128.4 58.3l2.5 1 -1.5 1.7 -2.6 -1.1zM130.9 59.3l2.6 1.1 -1.6 1.6 -2.5 -1z" fill="#00ffc0"/><path d="M133.5 60.4l2.4 0.5 -1.5 2.1 -2.5 -1zM135.9 60.9l2.4 0.6 -1.5 2 -2.4 -0.5zM138.3 61.5l2.5 1 -1.4 2.1 -2.6 -1.1zM140.8 62.5l2.7 1.3 -1.5 1.9 -2.6 -1.1zM143.5 63.8l2.6 1.2 -1.4 2.3 -2.7 -1.6z" fill="#00ffff"/><path d="M146.1 65l2.7 1.4 -1.4 2.2 -2.7 -1.3zM148.8 66.4l2.5 1.1 -1.4 2.2 -2.5 -1.1zM151.3 67.5l2.6 1.2 -1.4 2 -2.6 -1zM153.9 68.7l2.7 1.3 -1.5 1.8 -2.6 -1.1z" fill="#00c0ff"/><path d="M156.6 70l2.6 1.3 -1.4 1.9 -2.7 -1.4zM159.2 71.3l2.7 1.3 -1.4 2.3 -2.7 -1.7zM161.9 72.6l2.9 2.1 -1.5 2 -2.8 -1.8z" fill="#0080ff"/><path d="M164.8 74.7l2.8 1.8 -1.7 1.4 -2.6 -1.2zM167.6 76.5l2.7 1.5 -1.7 1.3 -2.7 -1.4zM170.3 78l2.7 1.6 -1.7 1.2 -2.7 -1.5z" fill="#0040ff"/><path d="M173 79.6l2.8 1.5 -1.8 1.2 -2.7 -1.5zM175.8 81.1l2.6 1.3 -1.7 1.3 -2.7 -1.4zM178.4 82.4l2.5 0.9 -1.6 1.7 -2.6 -1.3zM180.9 83.3l2.6 1.1 -1.6 1.7 -2.6 -1.1z" fill="#0000ff"/><path d="M183.5 84.4l2.4 0.7 -1.4 2.1 -2.6 -1.1zM185.9 85.1l2.6 1.2 -1.6 1.5 -2.4 -0.6zM188.5 86.3l2.4 0.5 -1.5 1.8 -2.5 -0.8zM190.9 86.8l2.5 0.9 -1.6 1.5 -2.4 -0.6z" fill="#000080"/><path d="M193.4 87.7l-1.6 1.5 0.7 2.2 1.2 -2.8z" fill="#000080"/><path d="M74.1 53.8l2.3 0.3 -1.6 1.6 -2.2 0.1zM76.4 54.1l2.2 0.1 -1.5 1.9 -2.3 -0.4zM78.6 54.2l2.3 0.4 -1.5 1.7 -2.3 -0.2zM80.9 54.6l2.4 0.4 -1.6 1.6 -2.3 -0.3zM83.3 55l2.1 -0.2 -1.5 1.9 -2.2 -0.1zM85.4 54.8l2.2 -0.2 -1.5 2.1 -2.2 0zM87.6 54.6l2.2 0 -1.4 2.2 -2.3 -0.1zM89.8 54.6l2.2 0.2 -1.4 2.2 -2.2 -0.2zM92 54.8l2.3 0.2 -1.7 1.4 -2 0.6zM94.3 55l2.1 -0.3 -1.6 1.5 -2.2 0.2zM96.4 54.7l2.2 0.1 -1.6 1.5 -2.2 -0.1zM98.6 54.8l2.2 0 -1.5 1.7 -2.3 -0.2zM100.8 54.8l2.3 0.2 -1.6 1.7 -2.2 -0.2zM103.1 55l2.3 0.3 -1.7 1.2 -2.2 0.2zM105.4 55.3l2.3 0.3 -1.7 1.3 -2.3 -0.4zM107.7 55.6l2.6 1.1 -1.7 1.2 -2.6 -1zM110.3 56.7l2.5 0.8 -1.8 1 -2.4 -0.6zM112.8 57.5l2.2 0 -1.5 1.9 -2.5 -0.9z" fill="#00ff80"/><path d="M115 57.5l2.3 0.3 -1.5 1.9 -2.3 -0.3zM117.3 57.8l2.5 0.8 -1.6 1.7 -2.4 -0.6zM119.8 58.6l2.3 0.6 -1.6 1.5 -2.3 -0.4zM122.1 59.2l2.2 -0.1 -1.5 1.9 -2.3 -0.3zM124.3 59.1l2.5 0.8 -1.6 1.6 -2.4 -0.5zM126.8 59.9l2.6 1.1 -1.6 1.5 -2.6 -1zM129.4 61l2.5 1 -1.6 1.5 -2.5 -1zM131.9 62l2.5 1 -1.5 1.7 -2.6 -1.2z" fill="#00ffc0"/><path d="M134.4 63l2.4 0.5 -1.4 2 -2.5 -0.8zM136.8 63.5l2.6 1.1 -1.5 1.9 -2.5 -1zM139.4 64.6l2.6 1.1 -1.5 1.8 -2.6 -1zM142 65.7l2.7 1.6 -1.6 1.4 -2.6 -1.2z" fill="#00ffff"/><path d="M144.7 67.3l2.7 1.3 -1.7 1.5 -2.6 -1.4zM147.4 68.6l2.5 1.1 -1.6 1.5 -2.6 -1.1zM149.9 69.7l2.6 1 -1.7 1.5 -2.5 -1zM152.5 70.7l2.6 1.1 -1.6 1.7 -2.7 -1.3z" fill="#00c0ff"/><path d="M155.1 71.8l2.7 1.4 -1.5 2.1 -2.8 -1.8zM157.8 73.2l2.7 1.7 -1.5 1.9 -2.7 -1.5zM160.5 74.9l2.8 1.8 -1.6 1.5 -2.7 -1.4zM163.3 76.7l2.6 1.2 -1.7 1.3 -2.5 -1z" fill="#0080ff"/><path d="M165.9 77.9l2.7 1.4 -1.7 1.3 -2.7 -1.4zM168.6 79.3l2.7 1.5 -1.8 0.9 -2.6 -1.1zM171.3 80.8l2.7 1.5 -1.6 1.5 -2.9 -2.1z" fill="#0040ff"/><path d="M174 82.3l2.7 1.4 -1.5 1.8 -2.8 -1.7zM176.7 83.7l2.6 1.3 -1.4 1.9 -2.7 -1.4zM179.3 85l2.6 1.1 -1.5 1.9 -2.5 -1.1zM181.9 86.1l2.6 1.1 -1.6 1.7 -2.5 -0.9z" fill="#0000ff"/><path d="M184.5 87.2l2.4 0.6 -1.5 1.8 -2.5 -0.7zM186.9 87.8l2.5 0.8 -1.6 1.6 -2.4 -0.6zM189.4 88.6l2.4 0.6 -1.6 1.6 -2.4 -0.6z" fill="#000080"/><path d="M191.8 89.2l-1.6 1.6 1.1 3.3 1.2 -2.7z" fill="#000080"/><path d="M72.6 55.8l2.2 -0.1 -1.4 2.2 -2.3 -0.1zM74.8 55.7l2.3 0.4 -1.5 1.8 -2.2 0zM77.1 56.1l2.3 0.2 -1.5 1.9 -2.3 -0.3zM79.4 56.3l2.3 0.3 -1.5 1.8 -2.3 -0.2zM81.7 56.6l2.2 0.1 -1.6 1.6 -2.1 0.1zM83.9 56.7l2.2 0 -1.6 1.6 -2.2 0zM86.1 56.7l2.3 0.1 -1.7 1.5 -2.2 0zM88.4 56.8l2.2 0.2 -1.6 1.4 -2.3 -0.1zM90.6 57l2 -0.6 -1.6 1.6 -2 0.4zM92.6 56.4l2.2 -0.2 -1.4 2.1 -2.4 -0.3zM94.8 56.2l2.2 0.1 -1.4 2.2 -2.2 -0.2zM97 56.3l2.3 0.2 -1.5 1.9 -2.2 0.1zM99.3 56.5l2.2 0.2 -1.6 1.4 -2.1 0.3zM101.5 56.7l2.2 -0.2 -1.4 2.2 -2.4 -0.6zM103.7 56.5l2.3 0.4 -1.4 2.1 -2.3 -0.3zM106 56.9l2.6 1 -1.6 1.7 -2.4 -0.6zM108.6 57.9l2.4 0.6 -1.6 1.8 -2.4 -0.7zM111 58.5l2.5 0.9 -1.8 1.2 -2.3 -0.3zM113.5 59.4l2.3 0.3 -1.7 1.2 -2.4 -0.3zM115.8 59.7l2.4 0.6 -1.7 1.2 -2.4 -0.6zM118.2 60.3l2.3 0.4 -1.6 1.6 -2.4 -0.8z" fill="#00ff80"/><path d="M120.5 60.7l2.3 0.3 -1.7 1.3 -2.2 0zM122.8 61l2.4 0.5 -1.5 1.9 -2.6 -1.1zM125.2 61.5l2.6 1 -1.6 1.7 -2.5 -0.8zM127.8 62.5l2.5 1 -1.5 2 -2.6 -1.3zM130.3 63.5l2.6 1.2 -1.5 1.8 -2.6 -1zM132.9 64.7l2.5 0.8 -1.5 1.9 -2.5 -0.9z" fill="#00ffc0"/><path d="M135.4 65.5l2.5 1 -1.6 1.6 -2.4 -0.7zM137.9 66.5l2.6 1 -1.7 1.6 -2.5 -1zM140.5 67.5l2.6 1.2 -1.6 1.7 -2.7 -1.3zM143.1 68.7l2.6 1.4 -1.6 1.6 -2.6 -1.3z" fill="#00ffff"/><path d="M145.7 70.1l2.6 1.1 -1.6 1.7 -2.6 -1.2zM148.3 71.2l2.5 1 -1.4 1.9 -2.7 -1.2zM150.8 72.2l2.7 1.3 -1.6 1.7 -2.5 -1.1zM153.5 73.5l2.8 1.8 -1.5 1.7 -2.9 -1.8z" fill="#00c0ff"/><path d="M156.3 75.3l2.7 1.5 -1.5 1.7 -2.7 -1.5zM159 76.8l2.7 1.4 -1.7 1.2 -2.5 -0.9zM161.7 78.2l2.5 1 -1.6 1.4 -2.6 -1.2zM164.2 79.2l2.7 1.4 -1.7 1.4 -2.6 -1.4z" fill="#0080ff"/><path d="M166.9 80.6l2.6 1.1 -1.6 1.6 -2.7 -1.3zM169.5 81.7l2.9 2.1 -1.7 1.3 -2.8 -1.8zM172.4 83.8l2.8 1.7 -1.7 1.3 -2.8 -1.7z" fill="#0040ff"/><path d="M175.2 85.5l2.7 1.4 -1.8 1.3 -2.6 -1.4zM177.9 86.9l2.5 1.1 -1.6 1.5 -2.7 -1.3zM180.4 88l2.5 0.9 -1.4 2 -2.7 -1.4zM182.9 88.9l2.5 0.7 -1.4 2.2 -2.5 -0.9z" fill="#0000ff"/><path d="M185.4 89.6l2.4 0.6 -1.5 2 -2.3 -0.4zM187.8 90.2l2.4 0.6 -1.6 1.7 -2.3 -0.3z" fill="#000080"/><path d="M190.2 90.8l-1.6 1.7 1.5 4.4 1.2 -2.8z" fill="#000080"/><path d="M71.1 57.8l2.3 0.1 -1.6 1.6 -2.2 0.2zM73.4 57.9l2.2 0 -1.5 1.9 -2.3 -0.3zM75.6 57.9l2.3 0.3 -1.6 1.7 -2.2 -0.1zM77.9 58.2l2.3 0.2 -1.6 1.6 -2.3 -0.1zM80.2 58.4l2.1 -0.1 -1.6 1.5 -2.1 0.2zM82.3 58.3l2.2 0 -1.6 1.6 -2.2 -0.1zM84.5 58.3l2.2 0 -1.6 1.5 -2.2 0.1zM86.7 58.3l2.3 0.1 -1.7 1.3 -2.2 0.1zM89 58.4l2 -0.4 -1.5 1.9 -2.2 -0.2zM91 58l2.4 0.3 -1.6 1.8 -2.3 -0.2z" fill="#00ff00"/><path d="M93.4 58.3l2.2 0.2 -1.5 1.8 -2.3 -0.2zM95.6 58.5l2.2 -0.1 -1.4 2.1 -2.3 -0.2zM97.8 58.4l2.1 -0.3 -1.4 2.2 -2.1 0.2zM99.9 58.1l2.4 0.6 -1.6 1.5 -2.2 0.1zM102.3 58.7l2.3 0.3 -1.5 1.8 -2.4 -0.6zM104.6 59l2.4 0.6 -1.5 1.8 -2.4 -0.6zM107 59.6l2.4 0.7 -1.5 1.9 -2.4 -0.8zM109.4 60.3l2.3 0.3 -1.4 2 -2.4 -0.4zM111.7 60.6l2.4 0.3 -1.5 2 -2.3 -0.3zM114.1 60.9l2.4 0.6 -1.5 2 -2.4 -0.6zM116.5 61.5l2.4 0.8 -1.6 1.6 -2.3 -0.4zM118.9 62.3l2.2 0 -1.3 2.3 -2.5 -0.7zM121.1 62.3l2.6 1.1 -1.6 1.7 -2.3 -0.5z" fill="#00ff80"/><path d="M123.7 63.4l2.5 0.8 -1.6 1.8 -2.5 -0.9zM126.2 64.2l2.6 1.3 -1.6 1.4 -2.6 -0.9zM128.8 65.5l2.6 1 -1.6 1.8 -2.6 -1.4zM131.4 66.5l2.5 0.9 -1.5 1.9 -2.6 -1zM133.9 67.4l2.4 0.7 -1.4 2.2 -2.5 -1z" fill="#00ffc0"/><path d="M136.3 68.1l2.5 1 -1.4 2 -2.5 -0.8zM138.8 69.1l2.7 1.3 -1.4 2.1 -2.7 -1.4zM141.5 70.4l2.6 1.3 -1.5 1.9 -2.5 -1.1zM144.1 71.7l2.6 1.2 -1.5 1.7 -2.6 -1z" fill="#00ffff"/><path d="M146.7 72.9l2.7 1.2 -1.5 2.1 -2.7 -1.6zM149.4 74.1l2.5 1.1 -1.3 2.4 -2.7 -1.4zM151.9 75.2l2.9 1.8 -1.6 1.8 -2.6 -1.2zM154.8 77l2.7 1.5 -1.7 1.5 -2.6 -1.2z" fill="#00c0ff"/><path d="M157.5 78.5l2.5 0.9 -1.6 1.7 -2.6 -1.1zM160 79.4l2.6 1.2 -1.6 1.7 -2.6 -1.2zM162.6 80.6l2.6 1.4 -1.5 1.8 -2.7 -1.5zM165.2 82l2.7 1.3 -1.5 1.9 -2.7 -1.4z" fill="#0080ff"/><path d="M167.9 83.3l2.8 1.8 -1.6 1.7 -2.7 -1.6zM170.7 85.1l2.8 1.7 -1.6 1.7 -2.8 -1.7zM173.5 86.8l2.6 1.4 -1.5 1.7 -2.7 -1.4z" fill="#0040ff"/><path d="M176.1 88.2l2.7 1.3 -1.6 1.7 -2.6 -1.3zM178.8 89.5l2.7 1.4 -1.6 1.6 -2.7 -1.3zM181.5 90.9l2.5 0.9 -1.5 1.8 -2.6 -1.1zM184 91.8l2.3 0.4 -1.4 2.1 -2.4 -0.7zM186.3 92.2l2.3 0.3 -1.5 1.9 -2.2 -0.1z" fill="#0000ff"/><path d="M188.6 92.5l-1.5 1.9 1.8 5.2 1.2 -2.7z" fill="#000080"/><path d="M69.6 59.7l2.2 -0.2 -1.4 2.2 -2.1 0.2zM71.8 59.5l2.3 0.3 -1.6 1.8 -2.1 0.1zM74.1 59.8l2.2 0.1 -1.6 1.5 -2.2 0.2zM76.3 59.9l2.3 0.1 -1.6 1.7 -2.3 -0.3zM78.6 60l2.1 -0.2 -1.6 1.7 -2.1 0.2zM80.7 59.8l2.2 0.1 -1.6 1.6 -2.2 0zM82.9 59.9l2.2 -0.1 -1.6 1.7 -2.2 0zM85.1 59.8l2.2 -0.1 -1.7 1.5 -2.1 0.3zM87.3 59.7l2.2 0.2 -1.6 1.5 -2.3 -0.2zM89.5 59.9l2.3 0.2 -1.7 1.2 -2.2 0.1zM91.8 60.1l2.3 0.2 -1.6 1.5 -2.4 -0.5zM94.1 60.3l2.3 0.2 -1.6 1.8 -2.3 -0.5zM96.4 60.5l2.1 -0.2 -1.5 2 -2.2 0zM98.5 60.3l2.2 -0.1 -1.4 2.2 -2.3 -0.1zM100.7 60.2l2.4 0.6 -1.5 1.9 -2.3 -0.3z" fill="#00ff00"/><path d="M103.1 60.8l2.4 0.6 -1.6 1.7 -2.3 -0.4zM105.5 61.4l2.4 0.8 -1.6 1.6 -2.4 -0.7zM107.9 62.2l2.4 0.4 -1.7 1.4 -2.3 -0.2zM110.3 62.6l2.3 0.3 -1.6 1.6 -2.4 -0.5zM112.6 62.9l2.4 0.6 -1.7 1.3 -2.3 -0.3zM115 63.5l2.3 0.4 -1.4 1.9 -2.6 -1zM117.3 63.9l2.5 0.7 -1.5 2 -2.4 -0.8zM119.8 64.6l2.3 0.5 -1.4 2.1 -2.4 -0.6zM122.1 65.1l2.5 0.9 -1.5 1.8 -2.4 -0.6z" fill="#00ff80"/><path d="M124.6 66l2.6 0.9 -1.4 2.2 -2.7 -1.3zM127.2 66.9l2.6 1.4 -1.5 1.7 -2.5 -0.9zM129.8 68.3l2.6 1 -1.6 1.7 -2.5 -1zM132.4 69.3l2.5 1 -1.6 1.6 -2.5 -0.9zM134.9 70.3l2.5 0.8 -1.5 2 -2.6 -1.2z" fill="#00ffc0"/><path d="M137.4 71.1l2.7 1.4 -1.5 1.9 -2.7 -1.3zM140.1 72.5l2.5 1.1 -1.4 1.9 -2.6 -1.1zM142.6 73.6l2.6 1 -1.5 1.9 -2.5 -1zM145.2 74.6l2.7 1.6 -1.5 1.7 -2.7 -1.4z" fill="#00ffff"/><path d="M147.9 76.2l2.7 1.4 -1.6 1.6 -2.6 -1.3zM150.6 77.6l2.6 1.2 -1.5 1.8 -2.7 -1.4zM153.2 78.8l2.6 1.2 -1.5 1.8 -2.6 -1.2z" fill="#00c0ff"/><path d="M155.8 80l2.6 1.1 -1.5 2 -2.6 -1.3zM158.4 81.1l2.6 1.2 -1.5 2 -2.6 -1.2zM161 82.3l2.7 1.5 -1.4 2.1 -2.8 -1.6zM163.7 83.8l2.7 1.4 -1.3 2.4 -2.8 -1.7z" fill="#0080ff"/><path d="M166.4 85.2l2.7 1.6 -1.3 2.4 -2.7 -1.6zM169.1 86.8l2.8 1.7 -1.4 2.1 -2.7 -1.4zM171.9 88.5l2.7 1.4 -1.4 2.1 -2.7 -1.4z" fill="#0040ff"/><path d="M174.6 89.9l2.6 1.3 -1.4 2 -2.6 -1.2zM177.2 91.2l2.7 1.3 -1.6 1.5 -2.5 -0.8zM179.9 92.5l2.6 1.1 -1.8 1.2 -2.4 -0.8zM182.5 93.6l2.4 0.7 -1.7 1.3 -2.5 -0.8zM184.9 94.3l2.2 0.1 -1.5 1.7 -2.4 -0.5z" fill="#0000ff"/><path d="M187.1 94.4l-1.5 1.7 2.1 6.2 1.2 -2.7z" fill="#000080"/><path d="M68.3 61.9l2.1 -0.2 -1.6 1.8 -2.2 -0.1zM70.4 61.7l2.1 -0.1 -1.4 1.9 -2.3 0zM72.5 61.6l2.2 -0.2 -1.4 2.2 -2.2 -0.1zM74.7 61.4l2.3 0.3 -1.6 1.7 -2.1 0.2zM77 61.7l2.1 -0.2 -1.5 1.8 -2.2 0.1zM79.1 61.5l2.2 0 -1.4 2 -2.3 -0.2zM81.3 61.5l2.2 0 -1.4 1.9 -2.2 0.1zM83.5 61.5l2.1 -0.3 -1.3 2.3 -2.2 -0.1zM85.6 61.2l2.3 0.2 -1.4 2.1 -2.2 0zM87.9 61.4l2.2 -0.1 -1.4 2.2 -2.2 0zM90.1 61.3l2.4 0.5 -1.5 2.1 -2.3 -0.4zM92.5 61.8l2.3 0.5 -1.5 1.7 -2.3 -0.1zM94.8 62.3l2.2 0 -1.6 1.6 -2.1 0.1zM97 62.3l2.3 0.1 -1.7 1.4 -2.2 0.1zM99.3 62.4l2.3 0.3 -1.6 1.6 -2.4 -0.5zM101.6 62.7l2.3 0.4 -1.4 2.1 -2.5 -0.9zM103.9 63.1l2.4 0.7 -1.5 1.7 -2.3 -0.3z" fill="#00ff00"/><path d="M106.3 63.8l2.3 0.2 -1.5 1.8 -2.3 -0.3zM108.6 64l2.4 0.5 -1.6 1.7 -2.3 -0.4zM111 64.5l2.3 0.3 -1.5 1.9 -2.4 -0.5zM113.3 64.8l2.6 1 -1.5 2.1 -2.6 -1.2zM115.9 65.8l2.4 0.8 -1.5 2 -2.4 -0.7zM118.3 66.6l2.4 0.6 -1.4 2.2 -2.5 -0.8zM120.7 67.2l2.4 0.6 -1.3 2.5 -2.5 -0.9zM123.1 67.8l2.7 1.3 -1.5 2 -2.5 -0.8z" fill="#00ff80"/><path d="M125.8 69.1l2.5 0.9 -1.6 1.7 -2.4 -0.6zM128.3 70l2.5 1 -1.5 1.7 -2.6 -1zM130.8 71l2.5 0.9 -1.5 1.8 -2.5 -1zM133.3 71.9l2.6 1.2 -1.5 1.9 -2.6 -1.3z" fill="#00ffc0"/><path d="M135.9 73.1l2.7 1.3 -1.5 1.9 -2.7 -1.3zM138.6 74.4l2.6 1.1 -1.5 2 -2.6 -1.2zM141.2 75.5l2.5 1 -1.5 1.9 -2.5 -0.9zM143.7 76.5l2.7 1.4 -1.4 2.1 -2.8 -1.6z" fill="#00ffff"/><path d="M146.4 77.9l2.6 1.3 -1.4 2.1 -2.6 -1.3zM149 79.2l2.7 1.4 -1.4 2.1 -2.7 -1.4zM151.7 80.6l2.6 1.2 -1.4 2.3 -2.6 -1.4zM154.3 81.8l2.6 1.3 -1.4 2.1 -2.6 -1.1z" fill="#00c0ff"/><path d="M156.9 83.1l2.6 1.2 -1.4 2.2 -2.6 -1.3zM159.5 84.3l2.8 1.6 -1.6 1.6 -2.6 -1zM162.3 85.9l2.8 1.7 -1.6 1.7 -2.8 -1.8z" fill="#0080ff"/><path d="M165.1 87.6l2.7 1.6 -1.6 1.7 -2.7 -1.6zM167.8 89.2l2.7 1.4 -1.5 1.9 -2.8 -1.6zM170.5 90.6l2.7 1.4 -1.5 2.1 -2.7 -1.6zM173.2 92l2.6 1.2 -1.4 2.2 -2.7 -1.3z" fill="#0040ff"/><path d="M175.8 93.2l2.5 0.8 -1.5 2 -2.4 -0.6zM178.3 94l2.4 0.8 -1.5 1.8 -2.4 -0.6zM180.7 94.8l2.5 0.8 -1.7 1.4 -2.3 -0.4zM183.2 95.6l2.4 0.5 -1.6 1.6 -2.5 -0.7z" fill="#0000ff"/><path d="M185.6 96.1l-1.6 1.6 2.5 7.4 1.2 -2.8z" fill="#000080"/><path d="M66.6 63.4l2.2 0.1 -1.5 1.8 -2.3 -0.4zM68.8 63.5l2.3 0 -1.5 2 -2.3 -0.2zM71.1 63.5l2.2 0.1 -1.5 1.8 -2.2 0.1zM73.3 63.6l2.1 -0.2 -1.4 2 -2.2 0zM75.4 63.4l2.2 -0.1 -1.4 2.1 -2.2 0zM77.6 63.3l2.3 0.2 -1.5 1.9 -2.2 0zM79.9 63.5l2.2 -0.1 -1.6 1.9 -2.1 0.1zM82.1 63.4l2.2 0.1 -1.5 1.9 -2.3 -0.1zM84.3 63.5l2.2 0 -1.4 2.3 -2.3 -0.4zM86.5 63.5l2.2 0 -1.4 2.2 -2.2 0.1zM88.7 63.5l2.3 0.4 -1.5 2 -2.2 -0.2zM91 63.9l2.3 0.1 -1.6 1.7 -2.2 0.2zM93.3 64l2.1 -0.1 -1.4 2 -2.3 -0.2zM95.4 63.9l2.2 -0.1 -1.4 2.3 -2.2 -0.2zM97.6 63.8l2.4 0.5 -1.4 2.1 -2.4 -0.3zM100 64.3l2.5 0.9 -1.6 1.7 -2.3 -0.5zM102.5 65.2l2.3 0.3 -1.4 2.2 -2.5 -0.8zM104.8 65.5l2.3 0.3 -1.5 2 -2.2 -0.1zM107.1 65.8l2.3 0.4 -1.3 2.4 -2.5 -0.8z" fill="#00ff00"/><path d="M109.4 66.2l2.4 0.5 -1.4 2.3 -2.3 -0.4zM111.8 66.7l2.6 1.2 -1.5 1.8 -2.5 -0.7zM114.4 67.9l2.4 0.7 -1.5 1.6 -2.4 -0.5zM116.8 68.6l2.5 0.8 -1.5 1.8 -2.5 -1zM119.3 69.4l2.5 0.9 -1.6 1.6 -2.4 -0.7zM121.8 70.3l2.5 0.8 -1.5 1.9 -2.6 -1.1z" fill="#00ff80"/><path d="M124.3 71.1l2.4 0.6 -1.5 1.9 -2.4 -0.6zM126.7 71.7l2.6 1 -1.6 1.9 -2.5 -1zM129.3 72.7l2.5 1 -1.5 1.8 -2.6 -0.9zM131.8 73.7l2.6 1.3 -1.4 2 -2.7 -1.5zM134.4 75l2.7 1.3 -1.6 1.8 -2.5 -1.1z" fill="#00ffc0"/><path d="M137.1 76.3l2.6 1.2 -1.5 1.9 -2.7 -1.3zM139.7 77.5l2.5 0.9 -1.2 2.7 -2.8 -1.7zM142.2 78.4l2.8 1.6 -1.4 2.3 -2.6 -1.2zM145 80l2.6 1.3 -1.3 2.6 -2.7 -1.6z" fill="#00ffff"/><path d="M147.6 81.3l2.7 1.4 -1.4 2.3 -2.6 -1.1zM150.3 82.7l2.6 1.4 -1.4 2.1 -2.6 -1.2zM152.9 84.1l2.6 1.1 -1.4 2.1 -2.6 -1.1zM155.5 85.2l2.6 1.3 -1.4 2 -2.6 -1.2z" fill="#00c0ff"/><path d="M158.1 86.5l2.6 1 -1.5 2 -2.5 -1zM160.7 87.5l2.8 1.8 -1.5 1.7 -2.8 -1.5zM163.5 89.3l2.7 1.6 -1.5 1.6 -2.7 -1.5z" fill="#0080ff"/><path d="M166.2 90.9l2.8 1.6 -1.7 1.4 -2.6 -1.4zM169 92.5l2.7 1.6 -1.6 1.4 -2.8 -1.6zM171.7 94.1l2.7 1.3 -1.8 1.1 -2.5 -1zM174.4 95.4l2.4 0.6 -1.7 1.2 -2.5 -0.7z" fill="#0040ff"/><path d="M176.8 96l2.4 0.6 -1.6 1.5 -2.5 -0.9zM179.2 96.6l2.3 0.4 -1.5 1.8 -2.4 -0.7zM181.5 97l2.5 0.7 -1.6 1.7 -2.4 -0.6z" fill="#0000ff"/><path d="M184 97.7l-1.6 1.7 2.9 8.4 1.2 -2.7z" fill="#000080"/><path d="M65 64.9l2.3 0.4 -1.7 1.3 -2.4 -0.6z" fill="#00ff00"/><path d="M63.2 66l2.4 0.6 14.9 44 -2.2 0z" fill="#00c0ff"/><path d="M67.3 65.3l2.3 0.2 -1.7 1.3 -2.3 -0.2zM69.6 65.5l2.2 -0.1 -1.6 1.7 -2.3 -0.3zM71.8 65.4l2.2 0 -1.6 1.6 -2.2 0.1zM74 65.4l2.2 0 -1.6 1.6 -2.2 0zM76.2 65.4l2.2 0 -1.6 1.8 -2.2 -0.2zM78.4 65.4l2.1 -0.1 -1.3 2.2 -2.4 -0.3zM80.5 65.3l2.3 0.1 -1.4 2.2 -2.2 -0.1zM82.8 65.4l2.3 0.4 -1.4 2 -2.3 -0.2zM85.1 65.8l2.2 -0.1 -1.4 2.3 -2.2 -0.2zM87.3 65.7l2.2 0.2 -1.3 2.3 -2.3 -0.2zM89.5 65.9l2.2 -0.2 -1.2 2.7 -2.3 -0.2zM91.7 65.7l2.3 0.2 -1.2 2.7 -2.3 -0.2zM94 65.9l2.2 0.2 -1.2 2.6 -2.2 -0.1zM96.2 66.1l2.4 0.3 -1.4 2.4 -2.2 -0.1zM98.6 66.4l2.3 0.5 -1.3 2.5 -2.4 -0.6zM100.9 66.9l2.5 0.8 -1.5 2 -2.3 -0.3zM103.4 67.7l2.2 0.1 -1.4 2 -2.3 -0.1zM105.6 67.8l2.5 0.8 -1.4 2.3 -2.5 -1.1zM108.1 68.6l2.3 0.4 -1.3 2.3 -2.4 -0.4z" fill="#00ff00"/><path d="M110.4 69l2.5 0.7 -1.3 2.6 -2.5 -1zM112.9 69.7l2.4 0.5 -1.4 2.4 -2.3 -0.3zM115.3 70.2l2.5 1 -1.6 1.7 -2.3 -0.3zM117.8 71.2l2.4 0.7 -1.4 2.2 -2.6 -1.2zM120.2 71.9l2.6 1.1 -1.7 1.3 -2.3 -0.2zM122.8 73l2.4 0.6 -1.6 1.6 -2.5 -0.9zM125.2 73.6l2.5 1 -1.5 1.7 -2.6 -1.1z" fill="#00ff80"/><path d="M127.7 74.6l2.6 0.9 -1.5 2 -2.6 -1.2zM130.3 75.5l2.7 1.5 -1.5 1.8 -2.7 -1.3zM133 77l2.5 1.1 -1.5 1.9 -2.5 -1.2zM135.5 78.1l2.7 1.3 -1.5 1.9 -2.7 -1.3z" fill="#00ffc0"/><path d="M138.2 79.4l2.8 1.7 -1.6 1.7 -2.7 -1.5zM141 81.1l2.6 1.2 -1.6 1.7 -2.6 -1.2zM143.6 82.3l2.7 1.6 -1.6 1.4 -2.7 -1.3z" fill="#00ffff"/><path d="M146.3 83.9l2.6 1.1 -1.6 1.6 -2.6 -1.3zM148.9 85l2.6 1.2 -1.5 2 -2.7 -1.6zM151.5 86.2l2.6 1.1 -1.5 2 -2.6 -1.1zM154.1 87.3l2.6 1.2 -1.5 2.1 -2.6 -1.3z" fill="#00c0ff"/><path d="M156.7 88.5l2.5 1 -1.3 2.2 -2.7 -1.1zM159.2 89.5l2.8 1.5 -1.5 2.2 -2.6 -1.5zM162 91l2.7 1.5 -1.6 1.7 -2.6 -1zM164.7 92.5l2.6 1.4 -1.6 1.5 -2.6 -1.2z" fill="#0080ff"/><path d="M167.3 93.9l2.8 1.6 -1.7 1.4 -2.7 -1.5zM170.1 95.5l2.5 1 -1.7 1.4 -2.5 -1zM172.6 96.5l2.5 0.7 -1.8 1 -2.4 -0.3zM175.1 97.2l2.5 0.9 -1.8 1.1 -2.5 -1zM177.6 98.1l2.4 0.7 -1.8 1 -2.4 -0.6z" fill="#0040ff"/><path d="M180 98.8l2.4 0.6 -1.7 1.2 -2.5 -0.8z" fill="#0000ff"/><path d="M182.4 99.4l-1.7 1.2 3.3 10 1.3 -2.8z" fill="#000080"/><path d="M178.2 99.8l2.5 0.8 3.3 10 -2.2 0z" fill="#0000ff"/><path d="M65.6 66.6l2.3 0.2 -1.6 1.5 -2.3 -0.1zM67.9 66.8l2.3 0.3 -1.6 1.5 -2.3 -0.3zM70.2 67.1l2.2 -0.1 -1.6 1.5 -2.2 0.1zM72.4 67l2.2 0 -1.5 1.9 -2.3 -0.4zM74.6 67l2.2 0.2 -1.5 1.7 -2.2 0z" fill="#80ff00"/><path d="M76.8 67.2l2.4 0.3 -1.5 1.9 -2.4 -0.5zM79.2 67.5l2.2 0.1 -1.3 2.4 -2.4 -0.6zM81.4 67.6l2.3 0.2 -1.4 2.2 -2.2 0zM83.7 67.8l2.2 0.2 -1.4 2.1 -2.2 -0.1zM85.9 68l2.3 0.2 -1.6 1.7 -2.1 0.2zM88.2 68.2l2.3 0.2 -1.5 2 -2.4 -0.5zM90.5 68.4l2.3 0.2 -1.5 2.1 -2.3 -0.3zM92.8 68.6l2.2 0.1 -1.4 2.3 -2.3 -0.3zM95 68.7l2.2 0.1 -1.3 2.5 -2.3 -0.3zM97.2 68.8l2.4 0.6 -1.4 2.1 -2.3 -0.2zM99.6 69.4l2.3 0.3 -1.5 1.7 -2.2 0.1zM101.9 69.7l2.3 0.1 -1.4 2.4 -2.4 -0.8zM104.2 69.8l2.5 1.1 -1.4 2.1 -2.5 -0.8zM106.7 70.9l2.4 0.4 -1.3 2.4 -2.5 -0.7zM109.1 71.3l2.5 1 -1.5 1.9 -2.3 -0.5z" fill="#00ff00"/><path d="M111.6 72.3l2.3 0.3 -1.4 2.2 -2.4 -0.6zM113.9 72.6l2.3 0.3 -1.3 2.4 -2.4 -0.5zM116.2 72.9l2.6 1.2 -1.5 1.7 -2.4 -0.5zM118.8 74.1l2.3 0.2 -1.3 2.3 -2.5 -0.8zM121.1 74.3l2.5 0.9 -1.3 2.3 -2.5 -0.9zM123.6 75.2l2.6 1.1 -1.4 2.2 -2.5 -1z" fill="#00ff80"/><path d="M126.2 76.3l2.6 1.2 -1.3 2.4 -2.7 -1.4zM128.8 77.5l2.7 1.3 -1.4 2.4 -2.6 -1.3zM131.5 78.8l2.5 1.2 -1.5 1.8 -2.4 -0.6zM134 80l2.7 1.3 -1.6 1.7 -2.6 -1.2z" fill="#00ffc0"/><path d="M136.7 81.3l2.7 1.5 -1.4 2.1 -2.9 -1.9zM139.4 82.8l2.6 1.2 -1.4 2 -2.6 -1.1zM142 84l2.7 1.3 -1.5 1.9 -2.6 -1.2zM144.7 85.3l2.6 1.3 -1.5 1.8 -2.6 -1.2z" fill="#00ffff"/><path d="M147.3 86.6l2.7 1.6 -1.5 1.9 -2.7 -1.7zM150 88.2l2.6 1.1 -1.3 2.3 -2.8 -1.5zM152.6 89.3l2.6 1.3 -1.3 2.3 -2.6 -1.3zM155.2 90.6l2.7 1.1 -1.4 2.4 -2.6 -1.2z" fill="#00c0ff"/><path d="M157.9 91.7l2.6 1.5 -1.3 2.4 -2.7 -1.5zM160.5 93.2l2.6 1 -1.4 2.3 -2.5 -0.9zM163.1 94.2l2.6 1.2 -1.4 2.2 -2.6 -1.1zM165.7 95.4l2.7 1.5 -1.5 1.8 -2.6 -1.1z" fill="#0080ff"/><path d="M168.4 96.9l2.5 1 -1.6 1.4 -2.4 -0.6zM170.9 97.9l2.4 0.3 -1.7 1.4 -2.3 -0.3zM173.3 98.2l2.5 1 -1.9 0.9 -2.3 -0.5zM175.8 99.2l2.4 0.6 -1.8 1 -2.5 -0.7z" fill="#0040ff"/><path d="M178.2 99.8l-1.8 1 4.2 12.5 1.2 -2.7z" fill="#0000ff"/><path d="M64 68.2l2.3 0.1 -1.5 1.9 -2.3 -0.3zM66.3 68.3l2.3 0.3 -1.7 1.4 -2.1 0.2zM68.6 68.6l2.2 -0.1 -1.6 1.7 -2.3 -0.2zM70.8 68.5l2.3 0.4 -1.5 1.9 -2.4 -0.6zM73.1 68.9l2.2 0 -1.5 2.1 -2.2 -0.2zM75.3 68.9l2.4 0.5 -1.6 1.8 -2.3 -0.2zM77.7 69.4l2.4 0.6 -1.7 1.5 -2.3 -0.3z" fill="#80ff00"/><path d="M80.1 70l2.2 0 -1.6 1.7 -2.3 -0.2zM82.3 70l2.2 0.1 -1.4 2.1 -2.4 -0.5zM84.5 70.1l2.1 -0.2 -1.4 2 -2.1 0.3zM86.6 69.9l2.4 0.5 -1.5 1.9 -2.3 -0.4zM89 70.4l2.3 0.3 -1.5 2 -2.3 -0.4zM91.3 70.7l2.3 0.3 -1.5 1.8 -2.3 -0.1zM93.6 71l2.3 0.3 -1.5 1.9 -2.3 -0.4zM95.9 71.3l2.3 0.2 -1.4 2.1 -2.4 -0.4zM98.2 71.5l2.2 -0.1 -1.5 2.1 -2.1 0.1zM100.4 71.4l2.4 0.8 -1.4 2 -2.5 -0.7zM102.8 72.2l2.5 0.8 -1.4 2.1 -2.5 -0.9zM105.3 73l2.5 0.7 -1.6 1.8 -2.3 -0.4zM107.8 73.7l2.3 0.5 -1.4 2 -2.5 -0.7zM110.1 74.2l2.4 0.6 -1.3 2.3 -2.5 -0.9z" fill="#00ff00"/><path d="M112.5 74.8l2.4 0.5 -1.3 2.5 -2.4 -0.7zM114.9 75.3l2.4 0.5 -1.3 2.6 -2.4 -0.6zM117.3 75.8l2.5 0.8 -1.4 2.5 -2.4 -0.7zM119.8 76.6l2.5 0.9 -1.3 2.6 -2.6 -1zM122.3 77.5l2.5 1 -1.2 2.8 -2.6 -1.2zM124.8 78.5l2.7 1.4 -1.5 2.1 -2.4 -0.7z" fill="#00ff80"/><path d="M127.5 79.9l2.6 1.3 -1.4 2.3 -2.7 -1.5zM130.1 81.2l2.4 0.6 -1.2 2.6 -2.6 -0.9zM132.5 81.8l2.6 1.2 -1.4 2.2 -2.4 -0.8zM135.1 83l2.9 1.9 -1.6 1.7 -2.7 -1.4z" fill="#00ffc0"/><path d="M138 84.9l2.6 1.1 -1.6 1.7 -2.6 -1.1zM140.6 86l2.6 1.2 -1.5 1.9 -2.7 -1.4zM143.2 87.2l2.6 1.2 -1.4 2.4 -2.7 -1.7z" fill="#00ffff"/><path d="M145.8 88.4l2.7 1.7 -1.4 1.9 -2.7 -1.2zM148.5 90.1l2.8 1.5 -1.5 2.1 -2.7 -1.7zM151.3 91.6l2.6 1.3 -1.5 2 -2.6 -1.2zM153.9 92.9l2.6 1.2 -1.4 2.3 -2.7 -1.5z" fill="#00c0ff"/><path d="M156.5 94.1l2.7 1.5 -1.4 2 -2.7 -1.2zM159.2 95.6l2.5 0.9 -1.5 1.7 -2.4 -0.6zM161.7 96.5l2.6 1.1 -1.6 1.6 -2.5 -1zM164.3 97.6l2.6 1.1 -1.7 1.3 -2.5 -0.8zM166.9 98.7l2.4 0.6 -1.6 1.7 -2.5 -1z" fill="#0080ff"/><path d="M169.3 99.3l2.3 0.3 -1.5 1.8 -2.4 -0.4zM171.6 99.6l2.3 0.5 -1.5 1.8 -2.3 -0.5zM173.9 100.1l2.5 0.7 -1.6 1.6 -2.4 -0.5z" fill="#0040ff"/><path d="M176.4 100.8l-1.6 1.6 4.6 13.7 1.2 -2.8z" fill="#0000ff"/><path d="M62.5 69.9l2.3 0.3 -1.6 1.6 -2.4 -0.5z" fill="#80ff00"/><path d="M60.8 71.3l2.4 0.5 15.9 47 -2.2 0z" fill="#00c0ff"/><path d="M64.8 70.2l2.1 -0.2 -1.4 2.1 -2.3 -0.3zM66.9 70l2.3 0.2 -1.3 2.5 -2.4 -0.6zM69.2 70.2l2.4 0.6 -1.4 2.3 -2.3 -0.4zM71.6 70.8l2.2 0.2 -1.4 2 -2.2 0.1zM73.8 71l2.3 0.2 -1.4 2 -2.3 -0.2zM76.1 71.2l2.3 0.3 -1.6 1.5 -2.1 0.2zM78.4 71.5l2.3 0.2 -1.5 1.9 -2.4 -0.6zM80.7 71.7l2.4 0.5 -1.7 1.5 -2.2 -0.1zM83.1 72.2l2.1 -0.3 -1.4 2.2 -2.4 -0.4zM85.2 71.9l2.3 0.4 -1.5 2 -2.2 -0.2zM87.5 72.3l2.3 0.4 -1.5 1.8 -2.3 -0.2z" fill="#80ff00"/><path d="M89.8 72.7l2.3 0.1 -1.4 2.1 -2.4 -0.4zM92.1 72.8l2.3 0.4 -1.5 1.9 -2.2 -0.2zM94.4 73.2l2.4 0.4 -1.5 2 -2.4 -0.5zM96.8 73.6l2.1 -0.1 -1.3 2.5 -2.3 -0.4zM98.9 73.5l2.5 0.7 -1.3 2.4 -2.5 -0.6zM101.4 74.2l2.5 0.9 -1.4 2.2 -2.4 -0.7zM103.9 75.1l2.3 0.4 -1.4 2.2 -2.3 -0.4zM106.2 75.5l2.5 0.7 -1.5 2.1 -2.4 -0.6zM108.7 76.2l2.5 0.9 -1.5 1.9 -2.5 -0.7zM111.2 77.1l2.4 0.7 -1.5 2 -2.4 -0.8z" fill="#00ff00"/><path d="M113.6 77.8l2.4 0.6 -1.5 1.8 -2.4 -0.4zM116 78.4l2.4 0.7 -1.3 2.2 -2.6 -1.1zM118.4 79.1l2.6 1 -1.4 2.1 -2.5 -0.9zM121 80.1l2.6 1.2 -1.5 1.8 -2.5 -0.9zM123.6 81.3l2.4 0.7 -1.3 2.2 -2.6 -1.1z" fill="#00ff80"/><path d="M126 82l2.7 1.5 -1.5 1.8 -2.5 -1.1zM128.7 83.5l2.6 0.9 -1.4 2.3 -2.7 -1.4zM131.3 84.4l2.4 0.8 -1.1 3 -2.7 -1.5zM133.7 85.2l2.7 1.4 -1.2 2.6 -2.6 -1z" fill="#00ffc0"/><path d="M136.4 86.6l2.6 1.1 -1.2 2.7 -2.6 -1.2zM139 87.7l2.7 1.4 -1.4 2.3 -2.5 -1zM141.7 89.1l2.7 1.7 -1.5 1.6 -2.6 -1zM144.4 90.8l2.7 1.2 -1.5 2.2 -2.7 -1.8z" fill="#00ffff"/><path d="M147.1 92l2.7 1.7 -1.3 2.3 -2.9 -1.8zM149.8 93.7l2.6 1.2 -1.3 2.3 -2.6 -1.2zM152.4 94.9l2.7 1.5 -1.4 2 -2.6 -1.2z" fill="#00c0ff"/><path d="M155.1 96.4l2.7 1.2 -1.5 2 -2.6 -1.2zM157.8 97.6l2.4 0.6 -1.7 1.5 -2.2 -0.1zM160.2 98.2l2.5 1 -1.8 1.1 -2.4 -0.6zM162.7 99.2l2.5 0.8 -1.6 1.7 -2.7 -1.4zM165.2 100l2.5 1 -1.8 1 -2.3 -0.3zM167.7 101l2.4 0.4 -1.7 1.3 -2.5 -0.7zM170.1 101.4l2.3 0.5 -1.8 1 -2.2 -0.2zM172.4 101.9l2.4 0.5 -1.6 1.5 -2.6 -1z" fill="#0080ff"/><path d="M174.8 102.4l-1.6 1.5 5 14.9 1.2 -2.7zM170.6 102.9l2.6 1 5 14.9 -2.2 0z" fill="#0000ff"/><path d="M63.2 71.8l2.3 0.3 -1.5 2 -2.4 -0.6z" fill="#80ff00"/><path d="M61.6 73.5l2.4 0.6 16.1 47.5 -2.2 0z" fill="#00c0ff"/><path d="M65.5 72.1l2.4 0.6 -1.6 1.7 -2.3 -0.3zM67.9 72.7l2.3 0.4 -1.7 1.2 -2.2 0.1zM70.2 73.1l2.2 -0.1 -1.6 1.6 -2.3 -0.3zM72.4 73l2.3 0.2 -1.6 1.6 -2.3 -0.2zM74.7 73.2l2.1 -0.2 -1.4 2.1 -2.3 -0.3zM76.8 73l2.4 0.6 -1.5 2 -2.3 -0.5zM79.2 73.6l2.2 0.1 -1.3 2.3 -2.4 -0.4zM81.4 73.7l2.4 0.4 -1.4 2.1 -2.3 -0.2zM83.8 74.1l2.2 0.2 -1.3 2.4 -2.3 -0.5zM86 74.3l2.3 0.2 -1.3 2.3 -2.3 -0.1zM88.3 74.5l2.4 0.4 -1.5 2.1 -2.2 -0.2zM90.7 74.9l2.2 0.2 -1.4 2.2 -2.3 -0.3z" fill="#80ff00"/><path d="M92.9 75.1l2.4 0.5 -1.5 1.8 -2.3 -0.1zM95.3 75.6l2.3 0.4 -1.4 2.1 -2.4 -0.7zM97.6 76l2.5 0.6 -1.4 2.3 -2.5 -0.8zM100.1 76.6l2.4 0.7 -1.5 2 -2.3 -0.4zM102.5 77.3l2.3 0.4 -1.4 2.2 -2.4 -0.6zM104.8 77.7l2.4 0.6 -1.3 2.4 -2.5 -0.8zM107.2 78.3l2.5 0.7 -1.4 2.3 -2.4 -0.6zM109.7 79l2.4 0.8 -1.4 2 -2.4 -0.5zM112.1 79.8l2.4 0.4 -1.4 2.1 -2.4 -0.5z" fill="#00ff00"/><path d="M114.5 80.2l2.6 1.1 -1.5 1.9 -2.5 -0.9zM117.1 81.3l2.5 0.9 -1.5 2 -2.5 -1zM119.6 82.2l2.5 0.9 -1.5 2 -2.5 -0.9zM122.1 83.1l2.6 1.1 -1.5 2.1 -2.6 -1.2zM124.7 84.2l2.5 1.1 -1.3 2.5 -2.7 -1.5z" fill="#00ff80"/><path d="M127.2 85.3l2.7 1.4 -1.3 2.4 -2.7 -1.3zM129.9 86.7l2.7 1.5 -1.4 2.2 -2.6 -1.3zM132.6 88.2l2.6 1 -1.5 2.1 -2.5 -0.9zM135.2 89.2l2.6 1.2 -1.4 2.3 -2.7 -1.4z" fill="#00ffc0"/><path d="M137.8 90.4l2.5 1 -1.3 2.4 -2.6 -1.1zM140.3 91.4l2.6 1 -1.3 2.6 -2.6 -1.2zM142.9 92.4l2.7 1.8 -1.3 2.2 -2.7 -1.4z" fill="#00ffff"/><path d="M145.6 94.2l2.9 1.8 -1.5 1.9 -2.7 -1.5zM148.5 96l2.6 1.2 -1.5 1.8 -2.6 -1.1zM151.1 97.2l2.6 1.2 -1.6 1.5 -2.5 -0.9zM153.7 98.4l2.6 1.2 -1.8 1 -2.4 -0.7zM156.3 99.6l2.2 0.1 -1.7 1.2 -2.3 -0.3zM158.5 99.7l2.4 0.6 -1.7 1.1 -2.4 -0.5z" fill="#00c0ff"/><path d="M160.9 100.3l2.7 1.4 -1.9 0.8 -2.5 -1.1zM163.6 101.7l2.3 0.3 -1.8 1 -2.4 -0.5zM165.9 102l2.5 0.7 -1.9 0.8 -2.4 -0.5zM168.4 102.7l2.2 0.2 -1.6 1.5 -2.5 -0.9z" fill="#0080ff"/><path d="M170.6 102.9l-1.6 1.5 5.8 17.2 1.2 -2.8z" fill="#0000ff"/><path d="M64 74.1l2.3 0.3 -1.8 1 -2.2 -0.1zM66.3 74.4l2.2 -0.1 -1.7 1.3 -2.3 -0.2zM68.5 74.3l2.3 0.3 -1.7 1.4 -2.3 -0.4zM70.8 74.6l2.3 0.2 -1.6 1.8 -2.4 -0.6zM73.1 74.8l2.3 0.3 -1.5 2 -2.4 -0.5zM75.4 75.1l2.3 0.5 -1.5 1.7 -2.3 -0.2zM77.7 75.6l2.4 0.4 -1.7 1.3 -2.2 0zM80.1 76l2.3 0.2 -1.6 1.8 -2.4 -0.7zM82.4 76.2l2.3 0.5 -1.4 2.1 -2.5 -0.8zM84.7 76.7l2.3 0.1 -1.6 1.7 -2.1 0.3zM87 76.8l2.2 0.2 -1.5 1.7 -2.3 -0.2zM89.2 77l2.3 0.3 -1.4 1.9 -2.4 -0.5zM91.5 77.3l2.3 0.1 -1.4 2.4 -2.3 -0.6zM93.8 77.4l2.4 0.7 -1.4 2.2 -2.4 -0.5z" fill="#80ff00"/><path d="M96.2 78.1l2.5 0.8 -1.5 1.9 -2.4 -0.5zM98.7 78.9l2.3 0.4 -1.5 1.7 -2.3 -0.2zM101 79.3l2.4 0.6 -1.4 2 -2.5 -0.9zM103.4 79.9l2.5 0.8 -1.5 2 -2.4 -0.8zM105.9 80.7l2.4 0.6 -1.5 1.9 -2.4 -0.5zM108.3 81.3l2.4 0.5 -1.4 2.2 -2.5 -0.8zM110.7 81.8l2.4 0.5 -1.4 2.2 -2.4 -0.5zM113.1 82.3l2.5 0.9 -1.4 2.3 -2.5 -1z" fill="#00ff00"/><path d="M115.6 83.2l2.5 1 -1.5 2 -2.4 -0.7zM118.1 84.2l2.5 0.9 -1.4 2.2 -2.6 -1.1zM120.6 85.1l2.6 1.2 -1.3 2.3 -2.7 -1.3zM123.2 86.3l2.7 1.5 -1.4 2.2 -2.6 -1.4z" fill="#00ff80"/><path d="M125.9 87.8l2.7 1.3 -1.4 2.4 -2.7 -1.5zM128.6 89.1l2.6 1.3 -1.3 2.4 -2.7 -1.3zM131.2 90.4l2.5 0.9 -1.3 2.4 -2.5 -0.9zM133.7 91.3l2.7 1.4 -1.4 2.3 -2.6 -1.3z" fill="#00ffc0"/><path d="M136.4 92.7l2.6 1.1 -1.5 2 -2.5 -0.8zM139 93.8l2.6 1.2 -1.3 2.5 -2.8 -1.7zM141.6 95l2.7 1.4 -1.5 2.1 -2.5 -1zM144.3 96.4l2.7 1.5 -1.5 1.9 -2.7 -1.3z" fill="#00ffff"/><path d="M147 97.9l2.6 1.1 -1.7 1.5 -2.4 -0.7zM149.6 99l2.5 0.9 -1.7 1.3 -2.5 -0.7zM152.1 99.9l2.4 0.7 -1.7 1.2 -2.4 -0.6zM154.5 100.6l2.3 0.3 -1.6 1.5 -2.4 -0.6zM156.8 100.9l2.4 0.5 -1.8 1.2 -2.2 -0.2zM159.2 101.4l2.5 1.1 -1.8 0.8 -2.5 -0.7zM161.7 102.5l2.4 0.5 -1.8 0.9 -2.4 -0.6z" fill="#00c0ff"/><path d="M164.1 103l2.4 0.5 -1.8 1.1 -2.4 -0.7zM166.5 103.5l2.5 0.9 -1.8 0.9 -2.5 -0.7z" fill="#0080ff"/><path d="M169 104.4l-1.8 0.9 6.4 19 1.2 -2.7zM164.7 104.6l2.5 0.7 6.4 19 -2.2 0z" fill="#0000ff"/><path d="M62.3 75.3l2.2 0.1 -1.7 1.2 -2.3 -0.3z" fill="#c0ff00"/><path d="M60.5 76.3l2.3 0.3 17 50.5 -2.2 0z" fill="#00ffff"/><path d="M64.5 75.4l2.3 0.2 -1.7 1.2 -2.3 -0.2zM66.8 75.6l2.3 0.4 -1.8 1 -2.2 -0.2zM69.1 76l2.4 0.6 -1.9 0.7 -2.3 -0.3z" fill="#c0ff00"/><path d="M71.5 76.6l2.4 0.5 -1.8 1 -2.5 -0.8zM73.9 77.1l2.3 0.2 -1.8 0.9 -2.3 -0.1zM76.2 77.3l2.2 0 -1.7 1.3 -2.3 -0.4zM78.4 77.3l2.4 0.7 -1.8 0.9 -2.3 -0.3zM80.8 78l2.5 0.8 -1.9 0.6 -2.4 -0.5zM83.3 78.8l2.1 -0.3 -1.7 1.4 -2.3 -0.5zM85.4 78.5l2.3 0.2 -1.6 1.6 -2.4 -0.4zM87.7 78.7l2.4 0.5 -1.6 1.7 -2.4 -0.6zM90.1 79.2l2.3 0.6 -1.5 1.8 -2.4 -0.7zM92.4 79.8l2.4 0.5 -1.4 2.1 -2.5 -0.8zM94.8 80.3l2.4 0.5 -1.5 1.8 -2.3 -0.2z" fill="#80ff00"/><path d="M97.2 80.8l2.3 0.2 -1.5 1.9 -2.3 -0.3zM99.5 81l2.5 0.9 -1.6 1.7 -2.4 -0.7zM102 81.9l2.4 0.8 -1.5 1.8 -2.5 -0.9zM104.4 82.7l2.4 0.5 -1.6 1.7 -2.3 -0.4zM106.8 83.2l2.5 0.8 -1.6 1.6 -2.5 -0.7zM109.3 84l2.4 0.5 -1.5 1.9 -2.5 -0.8zM111.7 84.5l2.5 1 -1.5 1.8 -2.5 -0.9z" fill="#00ff00"/><path d="M114.2 85.5l2.4 0.7 -1.3 2.3 -2.6 -1.2zM116.6 86.2l2.6 1.1 -1.3 2.4 -2.6 -1.2zM119.2 87.3l2.7 1.3 -1.3 2.7 -2.7 -1.6zM121.9 88.6l2.6 1.4 -1.3 2.3 -2.6 -1z" fill="#00ff80"/><path d="M124.5 90l2.7 1.5 -1.5 1.8 -2.5 -1zM127.2 91.5l2.7 1.3 -1.6 1.7 -2.6 -1.2zM129.9 92.8l2.5 0.9 -1.4 2.1 -2.7 -1.3zM132.4 93.7l2.6 1.3 -1.4 2.2 -2.6 -1.4z" fill="#00ffc0"/><path d="M135 95l2.5 0.8 -1.4 2.2 -2.5 -0.8zM137.5 95.8l2.8 1.7 -1.6 1.6 -2.6 -1.1zM140.3 97.5l2.5 1 -1.4 2.1 -2.7 -1.5zM142.8 98.5l2.7 1.3 -1.6 1.7 -2.5 -0.9zM145.5 99.8l2.4 0.7 -1.7 1.4 -2.3 -0.4z" fill="#00ffff"/><path d="M147.9 100.5l2.5 0.7 -1.7 1.3 -2.5 -0.6zM150.4 101.2l2.4 0.6 -1.7 1.3 -2.4 -0.6zM152.8 101.8l2.4 0.6 -1.7 1.3 -2.4 -0.6zM155.2 102.4l2.2 0.2 -1.6 1.5 -2.3 -0.4zM157.4 102.6l2.5 0.7 -1.7 1.3 -2.4 -0.5zM159.9 103.3l2.4 0.6 -1.6 1.5 -2.5 -0.8zM162.3 103.9l2.4 0.7 -1.6 1.5 -2.4 -0.7z" fill="#00c0ff"/><path d="M164.7 104.6l-1.6 1.5 7.1 21 1.2 -2.8zM160.7 105.4l2.4 0.7 7.1 21 -2.2 0z" fill="#0040ff"/><path d="M62.8 76.6l2.3 0.2 -1.9 0.8 -2.3 -0.2z" fill="#c0ff00"/><path d="M60.9 77.4l2.3 0.2 17.6 52.2 -2.2 0z" fill="#00ffff"/><path d="M65.1 76.8l2.2 0.2 -1.8 0.8 -2.3 -0.2zM67.3 77l2.3 0.3 -1.8 0.8 -2.3 -0.3zM69.6 77.3l2.5 0.8 -2 0.5 -2.3 -0.5zM72.1 78.1l2.3 0.1 -2 0.6 -2.3 -0.2zM74.4 78.2l2.3 0.4 -2 0.4 -2.3 -0.2zM76.7 78.6l2.3 0.3 -1.9 0.6 -2.4 -0.5zM79 78.9l2.4 0.5 -1.8 1 -2.5 -0.9z" fill="#c0ff00"/><path d="M81.4 79.4l2.3 0.5 -1.7 1.1 -2.4 -0.6zM83.7 79.9l2.4 0.4 -1.7 1.4 -2.4 -0.7zM86.1 80.3l2.4 0.6 -1.7 1.3 -2.4 -0.5zM88.5 80.9l2.4 0.7 -1.7 1.1 -2.4 -0.5zM90.9 81.6l2.5 0.8 -1.6 1.6 -2.6 -1.3zM93.4 82.4l2.3 0.2 -1.5 2 -2.4 -0.6zM95.7 82.6l2.3 0.3 -1.4 2.2 -2.4 -0.5zM98 82.9l2.4 0.7 -1.4 2 -2.4 -0.5z" fill="#80ff00"/><path d="M100.4 83.6l2.5 0.9 -1.5 1.7 -2.4 -0.6zM102.9 84.5l2.3 0.4 -1.5 1.9 -2.3 -0.6zM105.2 84.9l2.5 0.7 -1.5 1.8 -2.5 -0.6zM107.7 85.6l2.5 0.8 -1.7 1.5 -2.3 -0.5zM110.2 86.4l2.5 0.9 -1.6 1.8 -2.6 -1.2zM112.7 87.3l2.6 1.2 -1.5 1.9 -2.7 -1.3z" fill="#00ff00"/><path d="M115.3 88.5l2.6 1.2 -1.5 2 -2.6 -1.3zM117.9 89.7l2.7 1.6 -1.5 1.8 -2.7 -1.4zM120.6 91.3l2.6 1 -1.5 2 -2.6 -1.2zM123.2 92.3l2.5 1 -1.5 1.9 -2.5 -0.9z" fill="#00ff80"/><path d="M125.7 93.3l2.6 1.2 -1.5 1.8 -2.6 -1.1zM128.3 94.5l2.7 1.3 -1.6 1.7 -2.6 -1.2zM131 95.8l2.6 1.4 -1.6 1.4 -2.6 -1.1zM133.6 97.2l2.5 0.8 -1.6 1.6 -2.5 -1z" fill="#00ffc0"/><path d="M136.1 98l2.6 1.1 -1.5 1.9 -2.7 -1.4zM138.7 99.1l2.7 1.5 -1.7 1.4 -2.5 -1zM141.4 100.6l2.5 0.9 -1.7 1.2 -2.5 -0.7zM143.9 101.5l2.3 0.4 -1.6 1.4 -2.4 -0.6zM146.2 101.9l2.5 0.6 -1.7 1.5 -2.4 -0.7zM148.7 102.5l2.4 0.6 -1.7 1.3 -2.4 -0.4zM151.1 103.1l2.4 0.6 -1.8 1.1 -2.3 -0.4z" fill="#00ffff"/><path d="M153.5 103.7l2.3 0.4 -1.8 1.1 -2.3 -0.4zM155.8 104.1l2.4 0.5 -1.7 1.4 -2.5 -0.8zM158.2 104.6l2.5 0.8 -1.7 1.4 -2.5 -0.8z" fill="#00c0ff"/><path d="M160.7 105.4l-1.7 1.4 7.8 23 1.2 -2.7zM156.5 106l2.5 0.8 7.8 23 -2.2 0z" fill="#0040ff"/><path d="M63.2 77.6l2.3 0.2 -1.8 1 -2.3 -0.3z" fill="#c0ff00"/><path d="M61.4 78.5l2.3 0.3 18.1 53.7 -2.2 0z" fill="#00ffff"/><path d="M65.5 77.8l2.3 0.3 -1.9 0.8 -2.2 -0.1zM67.8 78.1l2.3 0.5 -1.9 0.6 -2.3 -0.3zM70.1 78.6l2.3 0.2 -1.9 0.8 -2.3 -0.4zM72.4 78.8l2.3 0.2 -1.8 1 -2.4 -0.4zM74.7 79l2.4 0.5 -1.8 1.1 -2.4 -0.6zM77.1 79.5l2.5 0.9 -1.9 0.9 -2.4 -0.7zM79.6 80.4l2.4 0.6 -1.9 0.9 -2.4 -0.6zM82 81l2.4 0.7 -1.8 1.1 -2.5 -0.9z" fill="#c0ff00"/><path d="M84.4 81.7l2.4 0.5 -1.8 1.1 -2.4 -0.5zM86.8 82.2l2.4 0.5 -1.6 1.6 -2.6 -1zM89.2 82.7l2.6 1.3 -1.9 0.7 -2.3 -0.4zM91.8 84l2.4 0.6 -1.8 0.9 -2.5 -0.8zM94.2 84.6l2.4 0.5 -1.9 0.9 -2.3 -0.5zM96.6 85.1l2.4 0.5 -1.8 1 -2.5 -0.6zM99 85.6l2.4 0.6 -1.6 1.6 -2.6 -1.2zM101.4 86.2l2.3 0.6 -1.6 1.4 -2.3 -0.4z" fill="#80ff00"/><path d="M103.7 86.8l2.5 0.6 -1.6 1.6 -2.5 -0.8zM106.2 87.4l2.3 0.5 -1.5 1.8 -2.4 -0.7zM108.5 87.9l2.6 1.2 -1.4 1.9 -2.7 -1.3zM111.1 89.1l2.7 1.3 -1.5 2 -2.6 -1.4zM113.8 90.4l2.6 1.3 -1.5 1.9 -2.6 -1.2z" fill="#00ff00"/><path d="M116.4 91.7l2.7 1.4 -1.6 1.6 -2.6 -1.1zM119.1 93.1l2.6 1.2 -1.6 1.7 -2.6 -1.3zM121.7 94.3l2.5 0.9 -1.6 1.6 -2.5 -0.8zM124.2 95.2l2.6 1.1 -1.7 1.4 -2.5 -0.9z" fill="#00ff80"/><path d="M126.8 96.3l2.6 1.2 -1.6 1.6 -2.7 -1.4zM129.4 97.5l2.6 1.1 -1.5 1.8 -2.7 -1.3zM132 98.6l2.5 1 -1.4 2.1 -2.6 -1.3zM134.5 99.6l2.7 1.4 -1.5 1.8 -2.6 -1.1z" fill="#00ffc0"/><path d="M137.2 101l2.5 1 -1.6 1.5 -2.4 -0.7zM139.7 102l2.5 0.7 -1.8 1.2 -2.3 -0.4zM142.2 102.7l2.4 0.6 -1.7 1.3 -2.5 -0.7zM144.6 103.3l2.4 0.7 -1.6 1.4 -2.5 -0.8zM147 104l2.4 0.4 -1.6 1.7 -2.4 -0.7zM149.4 104.4l2.3 0.4 -1.6 1.5 -2.3 -0.2zM151.7 104.8l2.3 0.4 -1.5 1.7 -2.4 -0.6zM154 105.2l2.5 0.8 -1.6 1.5 -2.4 -0.6z" fill="#00ffff"/><path d="M156.5 106l-1.6 1.5 8.5 25 1.2 -2.7zM152.5 106.9l2.4 0.6 8.5 25 -2.3 0z" fill="#0040ff"/><path d="M63.7 78.8l2.2 0.1 -1.9 0.7 -2.1 0.2z" fill="#ffff00"/><path d="M61.9 79.8l2.1 -0.2 18.8 55.7 -2.2 0z" fill="#00ffff"/><path d="M65.9 78.9l2.3 0.3 -1.9 0.6 -2.3 -0.2zM68.2 79.2l2.3 0.4 -2 0.3 -2.2 -0.1zM70.5 79.6l2.4 0.4 -1.9 0.8 -2.5 -0.9z" fill="#ffff00"/><path d="M72.9 80l2.4 0.6 -1.8 0.9 -2.5 -0.7zM75.3 80.6l2.4 0.7 -1.8 1 -2.4 -0.8zM77.7 81.3l2.4 0.6 -1.8 1 -2.4 -0.6zM80.1 81.9l2.5 0.9 -1.9 0.6 -2.4 -0.5zM82.6 82.8l2.4 0.5 -1.8 0.8 -2.5 -0.7zM85 83.3l2.6 1 -2 0.6 -2.4 -0.8zM87.6 84.3l2.3 0.4 -1.8 0.9 -2.5 -0.7z" fill="#c0ff00"/><path d="M89.9 84.7l2.5 0.8 -1.8 1.2 -2.5 -1.1zM92.4 85.5l2.3 0.5 -1.7 1.2 -2.4 -0.5zM94.7 86l2.5 0.6 -1.8 1.2 -2.4 -0.6zM97.2 86.6l2.6 1.2 -1.9 0.8 -2.5 -0.8zM99.8 87.8l2.3 0.4 -1.8 1.1 -2.4 -0.7zM102.1 88.2l2.5 0.8 -1.8 1.2 -2.5 -0.9zM104.6 89l2.4 0.7 -1.7 1.4 -2.5 -0.9z" fill="#80ff00"/><path d="M107 89.7l2.7 1.3 -1.8 1.3 -2.6 -1.2zM109.7 91l2.6 1.4 -1.8 1 -2.6 -1.1zM112.3 92.4l2.6 1.2 -1.7 1.1 -2.7 -1.3zM114.9 93.6l2.6 1.1 -1.6 1.4 -2.7 -1.4z" fill="#00ff00"/><path d="M117.5 94.7l2.6 1.3 -1.8 1 -2.4 -0.9zM120.1 96l2.5 0.8 -1.6 1.4 -2.7 -1.2zM122.6 96.8l2.5 0.9 -1.5 1.7 -2.6 -1.2zM125.1 97.7l2.7 1.4 -1.5 1.8 -2.7 -1.5z" fill="#00ff80"/><path d="M127.8 99.1l2.7 1.3 -1.6 1.8 -2.6 -1.3zM130.5 100.4l2.6 1.3 -1.6 1.6 -2.6 -1.1zM133.1 101.7l2.6 1.1 -1.7 1.3 -2.5 -0.8zM135.7 102.8l2.4 0.7 -1.7 1.3 -2.4 -0.7zM138.1 103.5l2.3 0.4 -1.6 1.5 -2.4 -0.6z" fill="#00ffc0"/><path d="M140.4 103.9l2.5 0.7 -1.6 1.6 -2.5 -0.8zM142.9 104.6l2.5 0.8 -1.6 1.8 -2.5 -1zM145.4 105.4l2.4 0.7 -1.5 1.7 -2.5 -0.6zM147.8 106.1l2.3 0.2 -1.6 1.6 -2.2 -0.1zM150.1 106.3l2.4 0.6 -1.6 1.6 -2.4 -0.6z" fill="#00ffff"/><path d="M152.5 106.9l-1.6 1.6 9 26.8 1.2 -2.8zM148.5 107.9l2.4 0.6 9 26.8 -2.2 0z" fill="#0040ff"/><path d="M64 79.6l2.3 0.2 -1.7 1.3 -2.3 -0.3z" fill="#ffff00"/><path d="M62.3 80.8l2.3 0.3 19.2 56.9 -2.2 0z" fill="#00ffff"/><path d="M66.3 79.8l2.2 0.1 -1.7 1.3 -2.2 -0.1z" fill="#ffff00"/><path d="M64.6 81.1l2.2 0.1 19.2 56.8 -2.2 0z" fill="#00ffff"/><path d="M68.5 79.9l2.5 0.9 -1.8 0.9 -2.4 -0.5zM71 80.8l2.5 0.7 -2.1 0.2 -2.2 0zM73.5 81.5l2.4 0.8 -2 0.4 -2.5 -1zM75.9 82.3l2.4 0.6 -2 0.3 -2.4 -0.5z" fill="#ffff00"/><path d="M78.3 82.9l2.4 0.5 -2 0.5 -2.4 -0.7zM80.7 83.4l2.5 0.7 -1.9 0.7 -2.6 -0.9zM83.2 84.1l2.4 0.8 -1.8 0.9 -2.5 -1zM85.6 84.9l2.5 0.7 -1.8 1.2 -2.5 -1zM88.1 85.6l2.5 1.1 -1.7 1.1 -2.6 -1zM90.6 86.7l2.4 0.5 -1.7 1.4 -2.4 -0.8z" fill="#c0ff00"/><path d="M93 87.2l2.4 0.6 -1.8 1 -2.3 -0.2zM95.4 87.8l2.5 0.8 -1.8 0.9 -2.5 -0.7zM97.9 88.6l2.4 0.7 -1.8 1 -2.4 -0.8zM100.3 89.3l2.5 0.9 -1.8 1 -2.5 -0.9zM102.8 90.2l2.5 0.9 -1.8 0.8 -2.5 -0.7zM105.3 91.1l2.6 1.2 -1.9 0.5 -2.5 -0.9z" fill="#80ff00"/><path d="M107.9 92.3l2.6 1.1 -1.7 1.2 -2.8 -1.8zM110.5 93.4l2.7 1.3 -1.8 1 -2.6 -1.1zM113.2 94.7l2.7 1.4 -1.8 1.1 -2.7 -1.5zM115.9 96.1l2.4 0.9 -1.6 1.5 -2.6 -1.3z" fill="#00ff00"/><path d="M118.3 97l2.7 1.2 -1.7 1.4 -2.6 -1.1zM121 98.2l2.6 1.2 -1.7 1.3 -2.6 -1.1zM123.6 99.4l2.7 1.5 -1.8 1 -2.6 -1.2zM126.3 100.9l2.6 1.3 -1.7 1.3 -2.7 -1.6z" fill="#00ff80"/><path d="M128.9 102.2l2.6 1.1 -1.7 1.2 -2.6 -1zM131.5 103.3l2.5 0.8 -1.8 1 -2.4 -0.6zM134 104.1l2.4 0.7 -1.8 1 -2.4 -0.7zM136.4 104.8l2.4 0.6 -1.8 1 -2.4 -0.6zM138.8 105.4l2.5 0.8 -1.7 1.4 -2.6 -1.2zM141.3 106.2l2.5 1 -1.7 1.2 -2.5 -0.8z" fill="#00ffc0"/><path d="M143.8 107.2l2.5 0.6 -1.7 1.5 -2.5 -0.9zM146.3 107.8l2.2 0.1 -1.5 1.9 -2.4 -0.5z" fill="#00ffff"/><path d="M148.5 107.9l-1.5 1.9 9.5 28.2 1.2 -2.7zM144.6 109.3l2.4 0.5 9.5 28.2 -2.2 0z" fill="#0040ff"/><path d="M66.8 81.2l2.4 0.5 -1.9 0.8 -2.4 -0.5z" fill="#ffff00"/><path d="M64.9 82l2.4 0.5 19.7 58.3 -2.2 0z" fill="#00ffc0"/><path d="M69.2 81.7l2.2 0 -1.9 0.8 -2.2 0zM71.4 81.7l2.5 1 -1.8 0.8 -2.6 -1zM73.9 82.7l2.4 0.5 -1.9 0.7 -2.3 -0.4zM76.3 83.2l2.4 0.7 -1.9 0.6 -2.4 -0.6zM78.7 83.9l2.6 0.9 -1.8 1.1 -2.7 -1.4z" fill="#ffff00"/><path d="M81.3 84.8l2.5 1 -1.6 1.6 -2.7 -1.5zM83.8 85.8l2.5 1 -1.6 1.4 -2.5 -0.8zM86.3 86.8l2.6 1 -1.7 1.3 -2.5 -0.9zM88.9 87.8l2.4 0.8 -1.9 0.7 -2.2 -0.2zM91.3 88.6l2.3 0.2 -1.8 1 -2.4 -0.5zM93.6 88.8l2.5 0.7 -1.8 1.1 -2.5 -0.8zM96.1 89.5l2.4 0.8 -1.7 1.3 -2.5 -1z" fill="#c0ff00"/><path d="M98.5 90.3l2.5 0.9 -1.6 1.4 -2.6 -1zM101 91.2l2.5 0.7 -1.7 1.4 -2.4 -0.7zM103.5 91.9l2.5 0.9 -1.6 1.6 -2.6 -1.1zM106 92.8l2.8 1.8 -1.7 1.3 -2.7 -1.5z" fill="#80ff00"/><path d="M108.8 94.6l2.6 1.1 -1.6 1.5 -2.7 -1.3zM111.4 95.7l2.7 1.5 -1.7 1.3 -2.6 -1.3zM114.1 97.2l2.6 1.3 -1.7 1.2 -2.6 -1.2zM116.7 98.5l2.6 1.1 -1.6 1.5 -2.7 -1.4z" fill="#00ff00"/><path d="M119.3 99.6l2.6 1.1 -1.5 1.8 -2.7 -1.4zM121.9 100.7l2.6 1.2 -1.6 1.6 -2.5 -1zM124.5 101.9l2.7 1.6 -1.6 1.5 -2.7 -1.5zM127.2 103.5l2.6 1 -1.7 1.5 -2.5 -1z" fill="#00ff80"/><path d="M129.8 104.5l2.4 0.6 -1.7 1.2 -2.4 -0.3zM132.2 105.1l2.4 0.7 -1.7 1.2 -2.4 -0.7zM134.6 105.8l2.4 0.6 -1.6 1.4 -2.5 -0.8zM137 106.4l2.6 1.2 -1.7 1.2 -2.5 -1zM139.6 107.6l2.5 0.8 -1.7 1.2 -2.5 -0.8z" fill="#00ffc0"/><path d="M137.9 108.8l2.5 0.8 10.5 31.2 -2.2 0z" fill="#0080ff"/><path d="M142.1 108.4l2.5 0.9 -1.7 1.2 -2.5 -0.9z" fill="#00ffc0"/><path d="M144.6 109.3l-1.7 1.2 10.2 30.3 1.2 -2.8zM140.4 109.6l2.5 0.9 10.2 30.3 -2.2 0z" fill="#0080ff"/><path d="M67.3 82.5l2.2 0 -1.9 0.7 -2.4 -0.6z" fill="#ffc000"/><path d="M65.2 82.6l2.4 0.6 20.4 60.3 -2.2 0z" fill="#00ffc0"/><path d="M69.5 82.5l2.6 1 -2 0.5 -2.5 -0.8z" fill="#ffc000"/><path d="M67.6 83.2l2.5 0.8 20.1 59.5 -2.2 0z" fill="#00ffc0"/><path d="M72.1 83.5l2.3 0.4 -2 0.5 -2.3 -0.4zM74.4 83.9l2.4 0.6 -1.8 1.1 -2.6 -1.2zM76.8 84.5l2.7 1.4 -1.8 1 -2.7 -1.3zM79.5 85.9l2.7 1.5 -1.8 0.9 -2.7 -1.4zM82.2 87.4l2.5 0.8 -1.9 0.9 -2.4 -0.8z" fill="#ffff00"/><path d="M84.7 88.2l2.5 0.9 -1.8 0.9 -2.6 -0.9zM87.2 89.1l2.2 0.2 -1.7 1.2 -2.3 -0.5zM89.4 89.3l2.4 0.5 -1.6 1.5 -2.5 -0.8zM91.8 89.8l2.5 0.8 -1.6 1.6 -2.5 -0.9zM94.3 90.6l2.5 1 -1.7 1.1 -2.4 -0.5zM96.8 91.6l2.6 1 -1.7 1.4 -2.6 -1.3z" fill="#c0ff00"/><path d="M99.4 92.6l2.4 0.7 -1.7 1.3 -2.4 -0.6zM101.8 93.3l2.6 1.1 -1.6 1.6 -2.7 -1.4zM104.4 94.4l2.7 1.5 -1.6 1.6 -2.7 -1.5zM107.1 95.9l2.7 1.3 -1.7 1.5 -2.6 -1.2z" fill="#80ff00"/><path d="M109.8 97.2l2.6 1.3 -1.5 2 -2.8 -1.8zM112.4 98.5l2.6 1.2 -1.4 2.1 -2.7 -1.3zM115 99.7l2.7 1.4 -1.5 1.9 -2.6 -1.2zM117.7 101.1l2.7 1.4 -1.6 1.6 -2.6 -1.1z" fill="#00ff00"/><path d="M120.4 102.5l2.5 1 -1.5 2 -2.6 -1.4zM122.9 103.5l2.7 1.5 -1.6 1.6 -2.6 -1.1zM125.6 105l2.5 1 -1.7 1.3 -2.4 -0.7zM128.1 106l2.4 0.3 -1.7 1.4 -2.4 -0.4zM130.5 106.3l2.4 0.7 -1.8 1.2 -2.3 -0.5z" fill="#00ff80"/><path d="M132.9 107l2.5 0.8 -1.7 1.3 -2.6 -0.9z" fill="#00ffc0"/><path d="M131.1 108.2l2.6 0.9 11.6 34.4 -2.2 0z" fill="#0080ff"/><path d="M135.4 107.8l2.5 1 -1.9 0.9 -2.3 -0.6z" fill="#00ffc0"/><path d="M137.9 108.8l-1.9 0.9 11.5 33.8 1.2 -2.7zM133.7 109.1l2.3 0.6 11.5 33.8 -2.2 0z" fill="#0080ff"/><path d="M70.1 84l2.3 0.4 -1.7 1.3 -2.5 -0.9z" fill="#ffc000"/><path d="M68.2 84.8l2.5 0.9 20.5 60.6 -2.2 0z" fill="#00ffc0"/><path d="M72.4 84.4l2.6 1.2 -1.7 1.2 -2.6 -1.1z" fill="#ffc000"/><path d="M70.7 85.7l2.6 1.1 20.1 59.5 -2.2 0z" fill="#00ffc0"/><path d="M75 85.6l2.7 1.3 -1.7 1.2 -2.7 -1.3z" fill="#ffff00"/><path d="M73.3 86.8l2.7 1.3 19.6 58.2 -2.2 0z" fill="#00ffc0"/><path d="M77.7 86.9l2.7 1.4 -1.9 0.9 -2.5 -1.1zM80.4 88.3l2.4 0.8 -1.7 1.1 -2.6 -1zM82.8 89.1l2.6 0.9 -1.8 1.2 -2.5 -1zM85.4 90l2.3 0.5 -1.6 1.5 -2.5 -0.8z" fill="#ffff00"/><path d="M87.7 90.5l2.5 0.8 -1.7 1.3 -2.4 -0.6zM90.2 91.3l2.5 0.9 -1.7 1.4 -2.5 -1zM92.7 92.2l2.4 0.5 -1.7 1.3 -2.4 -0.4zM95.1 92.7l2.6 1.3 -1.8 1 -2.5 -1zM97.7 94l2.4 0.6 -1.6 1.6 -2.6 -1.2zM100.1 94.6l2.7 1.4 -1.6 1.6 -2.7 -1.4z" fill="#c0ff00"/><path d="M102.8 96l2.7 1.5 -1.6 1.6 -2.7 -1.5zM105.5 97.5l2.6 1.2 -1.5 2 -2.7 -1.6zM108.1 98.7l2.8 1.8 -1.5 1.7 -2.8 -1.5z" fill="#80ff00"/><path d="M110.9 100.5l2.7 1.3 -1.6 1.8 -2.6 -1.4zM113.6 101.8l2.6 1.2 -1.4 2.2 -2.8 -1.6zM116.2 103l2.6 1.1 -1.6 1.8 -2.4 -0.7zM118.8 104.1l2.6 1.4 -1.8 0.9 -2.4 -0.5z" fill="#00ff00"/><path d="M121.4 105.5l2.6 1.1 -1.7 1.2 -2.7 -1.4zM124 106.6l2.4 0.7 -1.7 1.1 -2.4 -0.6z" fill="#00ff80"/><path d="M122.3 107.8l2.4 0.6 12.8 37.9 -2.2 0z" fill="#0080ff"/><path d="M126.4 107.3l2.4 0.4 -1.6 1.6 -2.5 -0.9z" fill="#00ff80"/><path d="M124.7 108.4l2.5 0.9 12.5 37 -2.2 0z" fill="#0080ff"/><path d="M128.8 107.7l2.3 0.5 -1.5 1.7 -2.4 -0.6z" fill="#00ff80"/><path d="M131.1 108.2l-1.5 1.7 12.3 36.4 1.2 -2.8zM127.2 109.3l2.4 0.6 12.3 36.4 -2.2 0z" fill="#0080ff"/><path d="M76 88.1l2.5 1.1 -1.7 1.2 -2.7 -1.3z" fill="#ffff00"/><path d="M74.1 89.1l2.7 1.3 19.8 58.6 -2.2 0z" fill="#00ffc0"/><path d="M78.5 89.2l2.6 1 -1.9 0.9 -2.4 -0.7z" fill="#ffff00"/><path d="M76.8 90.4l2.4 0.7 19.6 57.9 -2.2 0z" fill="#00ffff"/><path d="M81.1 90.2l2.5 1 -1.8 1 -2.6 -1.1z" fill="#ffff00"/><path d="M79.2 91.1l2.6 1.1 19.2 56.8 -2.2 0z" fill="#00ffff"/><path d="M83.6 91.2l2.5 0.8 -1.7 1.2 -2.6 -1z" fill="#ffff00"/><path d="M81.8 92.2l2.6 1 18.8 55.8 -2.2 0z" fill="#00ffff"/><path d="M86.1 92l2.4 0.6 -1.7 1.4 -2.4 -0.8zM88.5 92.6l2.5 1 -1.7 1.1 -2.5 -0.7z" fill="#ffff00"/><path d="M91 93.6l2.4 0.4 -1.7 1.4 -2.4 -0.7zM93.4 94l2.5 1 -1.7 1.4 -2.5 -1zM95.9 95l2.6 1.2 -1.7 1.2 -2.6 -1zM98.5 96.2l2.7 1.4 -1.7 1.4 -2.7 -1.6z" fill="#c0ff00"/><path d="M101.2 97.6l2.7 1.5 -1.7 1.4 -2.7 -1.5zM103.9 99.1l2.7 1.6 -1.5 1.9 -2.9 -2.1zM106.6 100.7l2.8 1.5 -1.6 1.7 -2.7 -1.3zM109.4 102.2l2.6 1.4 -1.7 1.1 -2.5 -0.8z" fill="#80ff00"/><path d="M112 103.6l2.8 1.6 -1.9 0.7 -2.6 -1.2zM114.8 105.2l2.4 0.7 -1.7 1.1 -2.6 -1.1z" fill="#00ff00"/><path d="M112.9 105.9l2.6 1.1 14.2 42 -2.3 0z" fill="#00c0ff"/><path d="M117.2 105.9l2.4 0.5 -1.6 1.7 -2.5 -1.1z" fill="#00ff00"/><path d="M115.5 107l2.5 1.1 13.9 40.9 -2.2 0z" fill="#00c0ff"/><path d="M119.6 106.4l2.7 1.4 -1.8 1.2 -2.5 -0.9z" fill="#00ff00"/><path d="M122.3 107.8l-1.8 1.2 13.6 40 1.2 -2.7zM118 108.1l2.5 0.9 13.6 40 -2.2 0z" fill="#00c0ff"/><path d="M84.4 93.2l2.4 0.8 -1.8 1 -2.5 -0.9z" fill="#ffff00"/><path d="M82.5 94.1l2.5 0.9 19.2 56.8 -2.2 0z" fill="#00ffff"/><path d="M86.8 94l2.5 0.7 -1.7 1.3 -2.6 -1z" fill="#ffff00"/><path d="M85 95l2.6 1 18.8 55.8 -2.2 0z" fill="#00ffff"/><path d="M89.3 94.7l2.4 0.7 -1.7 1.2 -2.4 -0.6z" fill="#ffff00"/><path d="M87.6 96l2.4 0.6 18.6 55.2 -2.2 0z" fill="#00ffff"/><path d="M91.7 95.4l2.5 1 -1.8 1 -2.4 -0.8z" fill="#ffff00"/><path d="M90 96.6l2.4 0.8 18.4 54.4 -2.2 0z" fill="#00ffff"/><path d="M94.2 96.4l2.6 1 -1.7 1.4 -2.7 -1.4z" fill="#c0ff00"/><path d="M92.4 97.4l2.7 1.4 17.9 53 -2.2 0z" fill="#00ffff"/><path d="M96.8 97.4l2.7 1.6 -1.6 1.4 -2.8 -1.6z" fill="#c0ff00"/><path d="M95.1 98.8l2.8 1.6 17.3 51.4 -2.2 0z" fill="#00ffff"/><path d="M99.5 99l2.7 1.5 -1.6 1.4 -2.7 -1.5z" fill="#c0ff00"/><path d="M97.9 100.4l2.7 1.5 16.8 49.9 -2.2 0z" fill="#00ffff"/><path d="M102.2 100.5l2.9 2.1 -1.7 1.1 -2.8 -1.8z" fill="#80ff00"/><path d="M100.6 101.9l2.8 1.8 16.2 48.1 -2.2 0z" fill="#00ffff"/><path d="M105.1 102.6l2.7 1.3 -1.7 1.4 -2.7 -1.6z" fill="#80ff00"/><path d="M103.4 103.7l2.7 1.6 15.7 46.5 -2.2 0z" fill="#00c0ff"/><path d="M107.8 103.9l2.5 0.8 -1.7 1.5 -2.5 -0.9z" fill="#80ff00"/><path d="M106.1 105.3l2.5 0.9 15.4 45.6 -2.2 0z" fill="#00c0ff"/><path d="M110.3 104.7l2.6 1.2 -1.7 1.4 -2.6 -1.1z" fill="#80ff00"/><path d="M112.9 105.9l-1.7 1.4 15 44.5 1.2 -2.8zM108.6 106.2l2.6 1.1 15 44.5 -2.2 0z" fill="#00c0ff"/></g></g><rect x="224.20000000000005" y="8" width="10.8" height="40.7" fill="#f6f6f4"/><path d="M227.40000000000006 13.5l2.2 -2.6l2.2 2.6z M227.40000000000006 43.2l2.2 2.6l2.2 -2.6z" fill="#4a4a4a"/><rect x="225.70000000000005" y="23" width="7.800000000000001" height="10" rx="1" fill="#e6e6e6" stroke="#9a9a9a" stroke-width="0.7"/><rect x="226.20000000000005" y="47.5" width="8" height="8.3" fill="#ff0000"/><rect x="226.20000000000005" y="55.5" width="8" height="8.3" fill="#ff4000"/><rect x="226.20000000000005" y="63.5" width="8" height="8.3" fill="#ff8000"/><rect x="226.20000000000005" y="71.5" width="8" height="8.3" fill="#ffc000"/><rect x="226.20000000000005" y="79.5" width="8" height="8.3" fill="#ffff00"/><rect x="226.20000000000005" y="87.5" width="8" height="8.3" fill="#c0ff00"/><rect x="226.20000000000005" y="95.5" width="8" height="8.3" fill="#80ff00"/><rect x="226.20000000000005" y="103.5" width="8" height="8.3" fill="#00ff00"/><rect x="226.20000000000005" y="111.5" width="8" height="8.3" fill="#00ff80"/><rect x="226.20000000000005" y="119.5" width="8" height="8.3" fill="#00ffc0"/><rect x="226.20000000000005" y="127.5" width="8" height="8.3" fill="#00ffff"/><rect x="226.20000000000005" y="135.5" width="8" height="8.3" fill="#00c0ff"/><rect x="226.20000000000005" y="143.5" width="8" height="8.3" fill="#0080ff"/><rect x="226.20000000000005" y="151.5" width="8" height="8.3" fill="#0040ff"/><rect x="226.20000000000005" y="159.5" width="8" height="8.3" fill="#0000ff"/><rect x="226.20000000000005" y="167.5" width="8" height="8.3" fill="#000080"/><path d="M226.20000000000005 55.5h3.6M226.20000000000005 63.5h3.6M226.20000000000005 71.5h3.6M226.20000000000005 79.5h3.6M226.20000000000005 87.5h3.6M226.20000000000005 95.5h3.6M226.20000000000005 103.5h3.6M226.20000000000005 111.5h3.6M226.20000000000005 119.5h3.6M226.20000000000005 127.5h3.6M226.20000000000005 135.5h3.6M226.20000000000005 143.5h3.6M226.20000000000005 151.5h3.6M226.20000000000005 159.5h3.6M226.20000000000005 167.5h3.6" stroke="#a04030" stroke-width="0.6" opacity="0.8"/><rect x="209.7" y="50.4" width="14" height="10" fill="#d4d0c8" opacity="0.8"/><text x="223.2" y="59.1" font-family="Liberation Sans,sans-serif" font-size="10.5" font-weight="normal" fill="#2a2ae0" text-anchor="end" >15</text><rect x="209.7" y="90.3" width="14" height="10" fill="#d4d0c8" opacity="0.8"/><text x="223.2" y="99" font-family="Liberation Sans,sans-serif" font-size="10.5" font-weight="normal" fill="#2a2ae0" text-anchor="end" >10</text><rect x="216.2" y="130.2" width="7.5" height="10" fill="#d4d0c8" opacity="0.8"/><text x="223.2" y="138.9" font-family="Liberation Sans,sans-serif" font-size="10.5" font-weight="normal" fill="#2a2ae0" text-anchor="end" >5</text><rect x="216.2" y="170" width="7.5" height="10" fill="#d4d0c8" opacity="0.8"/><text x="223.2" y="178.7" font-family="Liberation Sans,sans-serif" font-size="10.5" font-weight="normal" fill="#2a2ae0" text-anchor="end" >0</text><rect x="243" y="0" width="10" height="181" fill="#f0f0f0"/><path d="M245.7 6.5l2.3 -2.8l2.3 2.8z M245.7 174.5l2.3 2.8l2.3 -2.8z" fill="#4a4a4a"/><rect x="243.5" y="85" width="9" height="14" rx="1.5" fill="#e3e3e3" stroke="#8e8e8e" stroke-width="0.8"/><path d="M246.0 90.0h4M246.0 92.0h4M246.0 94.0h4" stroke="#555" stroke-width="0.7"/><rect x="0" y="181" width="243" height="12" fill="#f0f0f0"/><path d="M6.5 184.7l-2.8 2.3l2.8 2.3z M236.5 184.7l2.8 2.3l-2.8 2.3z" fill="#4a4a4a"/><rect x="77.5" y="181.5" width="20.5" height="11" rx="1.5" fill="#e3e3e3" stroke="#8e8e8e" stroke-width="0.8"/><path d="M85.75 185.0v4M87.75 185.0v4M89.75 185.0v4" stroke="#555" stroke-width="0.7"/><rect x="243" y="181" width="10" height="12" fill="#d4d0c8"/></svg></div></div><div class="win act" style="left:696px;top:285px;width:265px;height:218px"><svg class="ti" viewBox="0 0 11 11" style=""><rect width="11" height="11" rx="0.8" fill="#1a5fb4"/><ellipse cx="5.5" cy="4.6" rx="4.2" ry="3.6" fill="none" stroke="#9cc3ee" stroke-width="0.9"/><ellipse cx="5.5" cy="4.4" rx="2.3" ry="2.1" fill="#fff"/><rect x="1.2" y="8.6" width="8.6" height="1.3" fill="#cfe2f7"/></svg><div class="tt" style="top:5.5px;letter-spacing:0.173px;left:19.9px">等高線 [File A] GBIR</div><div class="tr" style="left:118.4px;top:5.5px;letter-spacing:0.518px">12.82µm (1µm/...</div><div class="wb" style="left:191.5px"><svg viewBox="0 0 18 9"><rect x="5.3" y="4.6" width="7.4" height="2.9" rx="0.7" fill="#a0a0a0" stroke="#fff" stroke-width="0.8"/></svg></div><div class="wb" style="left:213.5px"><svg viewBox="0 0 18 9"><rect x="5.6" y="1.8" width="6.8" height="5.2" rx="0.5" fill="#fdfdfd" stroke="#8a8a8a" stroke-width="1"/><rect x="7.3" y="3.6" width="3.4" height="1.8" fill="#4b5a78"/></svg></div><div class="wb cl" style="left:235.5px"><svg viewBox="0 0 18 9"><path d="M6.3 2.3L11.7 6.7M11.7 2.3L6.3 6.7" stroke="#5a2018" stroke-width="3.3" stroke-linecap="square"/><path d="M6.3 2.3L11.7 6.7M11.7 2.3L6.3 6.7" stroke="#fff" stroke-width="1.8" stroke-linecap="square"/></svg></div><div class="cnt" style="left:5px;top:19px;width:253px;height:193px;background:#d4d0c8"><svg width="253" height="193" viewBox="0 0 253 193" style="position:absolute;left:0;top:0;"><clipPath id="cA"><ellipse cx="140.5" cy="99.75" rx="70" ry="72.75"/></clipPath><g clip-path="url(#cA)"><ellipse cx="140.5" cy="99.75" rx="71" ry="73.75" fill="#000080"/><path d="M56.5 12.5l134.2 0 -0.7 1.4 -1.9 1.4 -0.7 0.2 -3.5 -0.5 -1 0.4 -0.5 0.7 0 1.4 -1.3 1.5 0.7 3 2.1 1.6 0.2 1.9 -0.9 0.8 -2.1 0.2 -2.8 2.3 -2.1 0.4 -0.7 0.7 0.1 1.5 -0.9 2.1 4.6 4.4 4.6 10.9 4 6.6 2.2 2.2 0.5 1.4 -0.2 1.5 2.6 1.7 0.7 0.8 0.8 4 0 2.2 3.6 6.5 2.4 5.9 1.8 8.7 2.6 7.1 3 3.8 1.6 1.5 1.7 2.9 1.5 1.4 0.8 2.2 1.1 1.5 4.3 2.1 4.2 0.8 1.4 -0.3 0 73.7 -168 0 0 -174.5z" fill="#0000ff" stroke="#1a1a1a" stroke-width="0.7" stroke-linejoin="round" fill-rule="evenodd"/><path d="M56.5 12.5l107.1 0 -0.7 2.3 -2.2 2.7 -0.2 0.8 0.3 1.4 -1.1 2.2 -0.2 5.1 0.6 1 1.8 1.2 0.5 2.2 5.7 10.9 5 6.5 2.1 4.4 4.5 5.2 2.3 3.5 1.2 4.9 1.9 4.6 1.5 2.2 0.7 3.6 3.6 7.4 2.1 2.8 0.4 5.1 4 8.7 1.2 4.6 3.4 4.9 2.5 2.9 0.6 2.2 3.2 7.2 0.3 2.9 0.5 0.8 3.5 1.8 4.2 -0.3 4.2 1.1 2.1 -0.1 1.4 0.6 0 57.2 -168 0 0 -174.5z" fill="#0040ff" stroke="#1a1a1a" stroke-width="0.7" stroke-linejoin="round" fill-rule="evenodd"/><path d="M56.5 12.5l89.7 0 -0.2 2.1 -0.7 2.2 0.9 3.7 0 3.6 2.7 2.4 1.4 1.9 0.9 3 4 5.7 1.2 4.5 5.5 8.7 2.4 5.4 2.8 2.3 2.1 1.2 2.8 3.5 0.3 2.9 1.9 5 5.3 11 0.4 3.6 1 2.9 0.3 2.9 3.4 5.8 1.1 3 4.2 8 1.6 5 1.8 1.5 1.8 2.5 0.7 2.1 1.6 2.7 1.5 4.3 2.2 3 0.6 2.1 1.8 4 2.1 1.7 4.6 1.6 1.7 1.1 1.4 2 7.7 3.7 2.1 1.8 1.4 0.4 0 39.7 -168 0 0 -174.5z" fill="#0080ff" stroke="#1a1a1a" stroke-width="0.7" stroke-linejoin="round" fill-rule="evenodd"/><path d="M56.5 12.5l70.5 0 0.3 0.7 -0.3 2.2 0.8 2.1 -0.6 1.4 -1.4 0.8 -0.1 0.8 2.3 5 1.4 1.5 2.7 1.6 3.5 3.5 1.3 2.9 0.7 0.7 2.9 0.5 1.4 1 0.8 1.4 1.9 2.2 1.1 3.7 3.9 3.9 4.1 5.5 2.4 4.4 1.6 4.3 6.4 8.8 8.3 16 0.5 2.9 4.1 11.6 2.2 4.4 1.9 2.2 3.5 6.8 3.5 8.7 1.8 1.9 0.7 5.9 1.6 2.1 1.5 1.3 1.8 3.1 3.1 7.9 4.2 3.9 2.8 0.9 0.7 0.9 0.4 1.7 1.8 1.4 1.6 2.2 4.6 1.9 1.4 2 2 1.2 4.3 4.1 2.1 0.3 0 20.3 -168 0 0 -174.5z" fill="#00c0ff" stroke="#1a1a1a" stroke-width="0.7" stroke-linejoin="round" fill-rule="evenodd"/><path d="M56.5 12.5l50.3 0 0.2 0.7 2.1 2.2 1.4 6.5 -0.1 1.9 -1.2 3.2 0.7 2.9 4 3.1 2.8 1.4 2.8 0.8 3.1 2.7 3.9 4.4 2.8 1.8 2.8 1 1.4 2.4 2.1 6.1 1.5 1 2 2.4 3.1 2 3.4 5.1 1 2.2 2 2.2 1.2 4.3 1.9 2.4 1.7 1.3 1.5 2.9 1.7 1.8 0.9 3.3 4 5.1 0.8 2.1 2.2 3 1 2.9 1.8 2.2 3.2 7.2 2.1 3.7 3.9 11.6 2.1 2.9 2.1 8 1.5 2.2 2.7 5.8 0.8 2.9 1.3 1.5 1.2 2.9 2.7 3.5 0.9 2.3 1.6 2.9 1 0.6 1.4 -0.3 0.5 0.5 -0.2 2.1 1.8 2.8 0.7 0.5 2.1 0.6 4.9 4.9 3.5 5.3 3.5 2.2 2.3 4.8 2.8 2.2 2.6 3.6 -163.8 0 0 -174.5z" fill="#00ffff" stroke="#1a1a1a" stroke-width="0.7" stroke-linejoin="round" fill-rule="evenodd"/><path d="M56.5 12.5l17.3 0 1.8 3.6 -0.7 2.9 0 2.9 0.4 0.7 5.7 1.7 2.1 0 2.8 0.7 2.3 1.3 0.9 1.4 0 5.1 1.6 2.2 1.5 3 2.5 1.4 1.7 2.7 2.1 1.6 0.7 1 0.7 0.4 2.1 -0.4 2.8 1.9 2.6 0.8 0.9 1.2 1.4 0.6 1.4 2.5 1.4 1.2 3.5 0.2 4.6 4.5 1 2.4 1.3 1.9 0.9 0.7 2.2 0.8 2.6 3.6 2.1 1.5 1.8 2.1 2 5.9 2.5 2.7 3.5 2 3.7 3.3 4.2 6.5 2.3 1.5 5 8.7 2.3 2 1 1.6 0.9 4.4 5 9.5 -0.2 4.3 1.9 2.2 0.5 2.6 2.8 4 0.8 2.9 0.1 2.9 2.2 2.9 2.4 7.3 0.5 3.6 1.1 2.2 2.6 8 0.8 1 2.1 1.5 1.4 2.1 2.5 1.9 3.3 3.7 1.7 2.9 1.1 0.7 0.5 0.7 0 2.3 2.3 3.6 3.3 2.9 0.5 0.7 -0.1 1.4 -142.5 0 0 -174.5z" fill="#00ffc0" stroke="#1a1a1a" stroke-width="0.7" stroke-linejoin="round" fill-rule="evenodd"/><path d="M56.5 37.2l1.4 -0.2 3.5 1.1 0.7 3.6 0.7 1.6 0.7 0.6 1.4 0.1 1.4 -0.9 0.7 0.1 2.1 0.6 2.1 0 0.7 0.5 0.5 0.9 0 2.2 2.1 1.4 1.6 2.9 2.5 0.8 0.7 2.1 1.3 1.5 1.1 0.5 4.2 0.5 0.9 1.2 0.5 2 0.4 0.2 2.4 -1.4 1.4 0.2 2.7 3.3 2.1 0.8 0.6 0.7 0.2 2.4 8.4 2.9 2.1 1.2 2.8 0.4 3.5 1.5 1.6 3.2 4.9 2.2 1.2 2.6 6.9 6.9 1.8 4.3 3 2.2 1.6 2 2.1 0.9 2.1 3.3 2.2 1.8 4.8 7.6 3.5 3.4 0.6 2.9 1.8 4.3 0.2 2.2 2.2 8 1.3 2.2 2.3 1.8 1.9 3.3 1.2 4.3 3.9 9.5 1.4 2.4 1.5 1.2 0.6 3 1.5 2.9 0.4 2.9 2.7 3.6 1.7 5.1 0.9 1.5 0.4 2.9 -0.7 1.4 -0.1 1.5 2.3 2.2 2.9 5 -124 0 0 -149.8z" fill="#00ff80" stroke="#1a1a1a" stroke-width="0.7" stroke-linejoin="round" fill-rule="evenodd"/><path d="M56.5 63.4l0.7 1.6 1.4 1 1.4 0.2 2.8 -0.8 2.1 1.4 3.5 0.6 1.4 0.7 2.5 1.8 4.7 6.6 0.5 0.3 3.5 0.2 2.1 -0.4 0.4 0.6 0.3 2.4 1.4 0.8 2.1 -0.3 1.4 0.5 1.9 1.7 1.6 2.3 2.2 0.6 3.7 2.2 5.3 -0.6 0.7 0.3 3.5 3.8 4.7 2.3 0.9 2.3 2.4 1.3 1.6 2.2 7.2 6.6 4.9 6 2.8 1.9 2.1 2.4 1.8 2.8 2.1 2.1 1 3 2.1 3.1 2.8 2.7 0.9 2.2 0.7 3.6 3.3 5.7 2.4 3 2.3 8 2 3.7 1 2.9 2.2 3.6 2.7 9.4 2.8 4.4 0.2 2.9 0.9 3.7 1.6 4.3 -110.5 0 0 -123.6z" fill="#00ff00" stroke="#1a1a1a" stroke-width="0.7" stroke-linejoin="round" fill-rule="evenodd"/><path d="M56.5 84.5l3.5 0.3 3.5 3.1 4.2 0.1 3.5 1.6 1.4 1.6 4.9 2.6 1.3 2.3 2.2 1.2 1.4 1.6 6.3 0.5 1.4 2.1 2.8 0.4 9.8 5.1 2.8 0.5 1.9 2.4 3 1.3 4.9 3.9 3.5 0.6 1.1 0.8 2.6 3.6 2.1 1.5 1.3 1.4 2.1 3.7 3.4 7.2 3.3 3.7 2.2 3.6 0.8 2.9 3.1 4.4 1.7 5.1 1.9 3.6 0.3 3.4 2.9 3.9 0.9 3.6 2.8 4.4 2.4 5.1 1.4 9.4 -98.6 0 0 -102.5z" fill="#80ff00" stroke="#1a1a1a" stroke-width="0.7" stroke-linejoin="round" fill-rule="evenodd"/><path d="M60.2 104.8l4 -0.2 6.3 1.4 2.1 0.1 3 2.4 5.4 2.7 2.1 1.7 4.9 0.9 4.9 3.4 2.8 0.7 1.4 1.8 2.8 1.2 2.1 1.6 6.1 2 3 2.5 3.9 2.6 2 2.9 2.5 1.1 2.8 3.1 2.9 6 3.3 4.3 0.4 2.2 3.3 4.4 4.1 8 3 7.3 4 5.8 0.5 3.6 -0.5 5.8 0.2 2.9 -87 0 0 -81.6 3.7 -0.6z" fill="#c0ff00" stroke="#1a1a1a" stroke-width="0.7" stroke-linejoin="round" fill-rule="evenodd"/><path d="M68.8 118.7l1 -0.4 2.8 0.2 2.8 0.9 4.9 3.4 2.8 0.8 6.9 5.3 4.3 2 2.4 2.3 6 3.5 2.1 0.7 2.1 1.9 2.8 0.9 4.2 2.6 4.8 6.4 1 2.2 4.5 5.8 4.4 7.5 1.8 4.2 0.3 2.1 1.7 1.5 -0.2 9.5 1.1 5 -76.8 0 0 -65.6 1.4 -0.6 2.8 0.2 2.1 -0.8 2.1 0.7 2.1 -1.9 1.8 -0.3z" fill="#ffff00" stroke="#1a1a1a" stroke-width="0.7" stroke-linejoin="round" fill-rule="evenodd"/><path d="M72.7 132.5l3.4 -0.3 2.8 2 2.8 0.5 3.1 1.4 1.8 2.2 1.4 1.1 10.5 3.3 2.1 1.6 3.7 5.6 1.9 1.6 2.5 1.4 4.2 5.1 4.1 3.6 2.5 3.6 1.6 4.4 0.9 5.1 0.6 12.3 -66.1 0 0 -44.7 3.6 -1.1 3.4 -4.7 1.5 -0.4 4.1 -2.4 3.6 -1.2z" fill="#ffc000" stroke="#1a1a1a" stroke-width="0.7" stroke-linejoin="round" fill-rule="evenodd"/><path d="M82.4 149.2l1.4 -0.1 2.1 0.5 5.6 2.3 5.7 3.9 3.7 3.6 3.2 1.3 4.2 4.2 2.6 4.7 0.2 1.4 -0.9 2.2 -2.4 2.2 -0.1 0.7 0.4 0.8 1.6 1.4 0.3 0.7 -0.6 1.5 -2.7 2.9 -0.5 2.9 -0.6 0.7 -49.1 0 0 -16.8 1.4 -0.4 0.7 0.3 0.7 1 0.7 0.2 0.3 -0.3 0.3 -0.7 -0.3 -1.4 0.4 -1.5 2.8 -1.9 2.1 -3.1 0.7 -0.1 1.5 0.7 0.4 -0.7 -0.4 -1.4 0.3 -0.8 1 -0.7 1.3 -2.2 2.2 -2.4 4.2 -2.8 5.6 -2.8z" fill="#ff8000" stroke="#1a1a1a" stroke-width="0.7" stroke-linejoin="round" fill-rule="evenodd"/></g><ellipse cx="140.5" cy="99.75" rx="70" ry="72.75" fill="none" stroke="#101010" stroke-width="1"/><path d="M140.5 0V193M0 100H253M69 192.5L253 20" stroke="#b0433a" stroke-width="0.9" fill="none" opacity="0.85"/><path d="M103 161.6l4.6 5h-9.2z" fill="#fff" stroke="#000" stroke-width="0.7"/><path d="M98 167h10" stroke="#000" stroke-width="1.3"/><path d="M203 66.6l4.6 -5h-9.2z" fill="#000" stroke="#fff" stroke-width="0.7"/><path d="M198 61.4h10" stroke="#fff" stroke-width="1.1"/><rect x="236.79999999999995" y="34.5" width="10.8" height="23" fill="#f4f4f2"/><path d="M239.99999999999997 41.4l2.2 -2.6l2.2 2.6z M239.99999999999997 50.599999999999994l2.2 2.6l2.2 -2.6z" fill="#4a4a4a"/><rect x="238.5" y="58.5" width="7.8" height="8.3" fill="#ff0000"/><rect x="238.5" y="66.5" width="7.8" height="8.3" fill="#ff4000"/><rect x="238.5" y="74.4" width="7.8" height="8.3" fill="#ff8000"/><rect x="238.5" y="82.4" width="7.8" height="8.3" fill="#ffc000"/><rect x="238.5" y="90.4" width="7.8" height="8.3" fill="#ffff00"/><rect x="238.5" y="98.3" width="7.8" height="8.3" fill="#c0ff00"/><rect x="238.5" y="106.3" width="7.8" height="8.3" fill="#80ff00"/><rect x="238.5" y="114.3" width="7.8" height="8.3" fill="#00ff00"/><rect x="238.5" y="122.3" width="7.8" height="8.3" fill="#00ff80"/><rect x="238.5" y="130.2" width="7.8" height="8.3" fill="#00ffc0"/><rect x="238.5" y="138.2" width="7.8" height="8.3" fill="#00ffff"/><rect x="238.5" y="146.2" width="7.8" height="8.3" fill="#00c0ff"/><rect x="238.5" y="154.1" width="7.8" height="8.3" fill="#0080ff"/><rect x="238.5" y="162.1" width="7.8" height="8.3" fill="#0040ff"/><rect x="238.5" y="170.1" width="7.8" height="8.3" fill="#0000ff"/><rect x="238.5" y="178.1" width="7.8" height="8.3" fill="#000080"/><path d="M238.5 66.5h3.5M238.5 74.4h3.5M238.5 82.4h3.5M238.5 90.4h3.5M238.5 98.3h3.5M238.5 106.3h3.5M238.5 114.3h3.5M238.5 122.3h3.5M238.5 130.2h3.5M238.5 138.2h3.5M238.5 146.2h3.5M238.5 154.1h3.5M238.5 162.1h3.5M238.5 170.1h3.5M238.5 178.1h3.5" stroke="#a04030" stroke-width="0.6" opacity="0.8"/><text x="235.5" y="70.1" font-family="Liberation Sans,sans-serif" font-size="10.5" font-weight="normal" fill="#2a2ae0" text-anchor="end" >15</text><text x="235.5" y="109.9" font-family="Liberation Sans,sans-serif" font-size="10.5" font-weight="normal" fill="#2a2ae0" text-anchor="end" >10</text><text x="235.5" y="149.79999999999998" font-family="Liberation Sans,sans-serif" font-size="10.5" font-weight="normal" fill="#2a2ae0" text-anchor="end" >5</text><text x="235.5" y="189.6" font-family="Liberation Sans,sans-serif" font-size="10.5" font-weight="normal" fill="#2a2ae0" text-anchor="end" >0</text><text x="2.4" y="178" font-family="Liberation Sans,sans-serif" font-size="9.5" font-weight="normal" fill="#3434e6" text-anchor="start" >X=</text><text x="24.2" y="178" font-family="Liberation Sans,sans-serif" font-size="9.5" font-weight="normal" fill="#3434e6" text-anchor="start" >0.0mm</text><text x="2.4" y="189.2" font-family="Liberation Sans,sans-serif" font-size="9.5" font-weight="normal" fill="#3434e6" text-anchor="start" >Y=</text><text x="24.2" y="189.2" font-family="Liberation Sans,sans-serif" font-size="9.5" font-weight="normal" fill="#3434e6" text-anchor="start" >0.0mm</text></svg></div></div><div class="win" style="left:977px;top:284px;width:265px;height:219px"><svg class="ti" viewBox="0 0 11 11" style=""><rect width="11" height="11" rx="0.8" fill="#1a5fb4"/><ellipse cx="5.5" cy="4.6" rx="4.2" ry="3.6" fill="none" stroke="#9cc3ee" stroke-width="0.9"/><ellipse cx="5.5" cy="4.4" rx="2.3" ry="2.1" fill="#fff"/><rect x="1.2" y="8.6" width="8.6" height="1.3" fill="#cfe2f7"/></svg><div class="tt" style="top:5.5px;letter-spacing:0.135px;left:19.5px">等高線 [File B] GBIR</div><div class="tr" style="left:118.2px;top:5.5px;letter-spacing:0.455px">13.13µm (1µm/...</div><div class="wb" style="left:191.5px"><svg viewBox="0 0 18 9"><rect x="5.3" y="4.6" width="7.4" height="2.9" rx="0.7" fill="#a0a0a0" stroke="#fff" stroke-width="0.8"/></svg></div><div class="wb" style="left:213.5px"><svg viewBox="0 0 18 9"><rect x="5.6" y="1.8" width="6.8" height="5.2" rx="0.5" fill="#fdfdfd" stroke="#8a8a8a" stroke-width="1"/><rect x="7.3" y="3.6" width="3.4" height="1.8" fill="#4b5a78"/></svg></div><div class="wb cl" style="left:235.5px"><svg viewBox="0 0 18 9"><path d="M6.3 2.3L11.7 6.7M11.7 2.3L6.3 6.7" stroke="#fff" stroke-width="3.3" stroke-linecap="square"/><path d="M6.3 2.3L11.7 6.7M11.7 2.3L6.3 6.7" stroke="#8c8c8c" stroke-width="1.9" stroke-linecap="square"/></svg></div><div class="cnt" style="left:5px;top:19px;width:253px;height:193px;background:#d4d0c8"><svg width="253" height="193" viewBox="0 0 253 193" style="position:absolute;left:0;top:0;"><clipPath id="cB"><ellipse cx="139.79999999999995" cy="99.69999999999999" rx="69.8" ry="72.5"/></clipPath><g clip-path="url(#cB)"><ellipse cx="139.79999999999995" cy="99.69999999999999" rx="70.8" ry="73.5" fill="#000080"/><path d="M56 12.7l132 0 0.2 1.4 -3.4 4.4 -1.4 4.3 -2.4 1.8 -1.4 2.1 -2.1 1.5 -1 4.8 2.1 7.2 0.1 2.2 1.4 3.6 -0.1 2.2 1.2 3.6 -0.1 2.9 1.2 5.9 1.6 2.8 2.7 3 1.4 2.8 1.9 2.2 0.4 2.9 3.2 5.9 1.8 4.3 2.4 2.9 1.4 2.9 3 2.9 1.2 1.9 1.4 1 1.4 2.5 0.7 0.4 3.5 0.3 2.1 1.4 7.7 1.6 2.1 1.7 1.4 0.5 0 82.2 -167.6 0 0 -174z" fill="#0000ff" stroke="#1a1a1a" stroke-width="0.7" stroke-linejoin="round" fill-rule="evenodd"/><path d="M56 12.7l108.6 0 0.6 1.4 -0.1 0.8 -2.1 2.1 -0.8 1.5 0.5 3.6 -1.1 1.5 -2.1 1.4 -0.3 1.5 3.8 8.7 1.3 4.3 2.8 3.6 -0.1 2.9 1.6 2.2 1.1 2.9 0.4 4.4 1.2 4.3 7.3 9.4 0.5 2.2 1.4 2.2 0.9 2.2 1.4 5.8 2.6 5 2.6 2.8 2.1 4.2 3.7 4.6 2.1 5.1 0.3 2.2 0.8 2.1 0.7 0.7 2.1 0.7 8.4 5.6 4.9 1.2 2.1 0 8.4 3.1 0 67.8 -167.6 0 0 -174z" fill="#0040ff" stroke="#1a1a1a" stroke-width="0.7" stroke-linejoin="round" fill-rule="evenodd"/><path d="M56 12.7l87.3 0 -0.8 2.9 0.9 2.9 0 1.5 -0.5 0.7 -1.8 0.7 1.8 4.3 1.1 4.4 2.1 3.2 1.9 1.9 3 5.9 6.9 8.6 0.8 1.4 0.4 2.9 2.8 2.9 1.2 6.5 1.8 3.5 2.1 2.6 2.8 1.9 2.8 3.7 2.6 5.7 1.7 7.3 0.6 1.1 1.5 1.1 1.5 2.1 2.6 2.5 2.8 6.2 0.4 3.7 1.5 2.2 0.9 2.1 3.9 5.8 1.4 3.6 0.9 1 3 1.2 2.7 2.2 2.7 1.1 4 2.5 3 0.6 2.8 1.8 3.5 -0.2 2.1 1.6 2.1 0.1 2.8 1 0 55.3 -167.6 0 0 -174z" fill="#0080ff" stroke="#1a1a1a" stroke-width="0.7" stroke-linejoin="round" fill-rule="evenodd"/><path d="M56 12.7l66.4 0 -0.4 1.4 0.3 2.9 -0.2 4.4 3 1.6 0.8 1.3 -0.1 2.5 1.4 0.7 1.8 2.6 0.4 1.5 2 1.6 0.7 2.5 1.3 2.4 0.1 2.9 2.8 3.4 3.5 2.2 3.4 3.8 1.5 0.9 2.8 3.4 2.1 4.4 3.5 3.5 1.3 3 0.8 2.9 1.4 2.2 1.3 3.4 2.8 3.5 2.8 2 2 2.7 1.7 4.3 2.6 3.7 2.8 7.7 3.5 4.3 0.9 3.2 4.7 10.2 0.9 5 2.3 5.8 1.7 1 3.5 0.8 4.1 2.8 3.5 1.2 2.1 1.5 2.1 0.7 2.8 2.6 2.8 1 2.1 2.4 2.1 0.6 3.5 0.1 3.8 4.2 3.2 0.9 1.4 1.2 0 39.2 -167.6 0 0 -174z" fill="#00c0ff" stroke="#1a1a1a" stroke-width="0.7" stroke-linejoin="round" fill-rule="evenodd"/><path d="M56 12.7l45 0 0 1.4 -1 4.8 0.2 1.1 2.4 2.1 0.9 2.8 3 0.1 0.5 2.2 1.4 3.2 2.2 1.9 1.2 2.9 2.4 2.1 0.9 5.1 2 4.4 2.5 1.9 1.4 2.2 1.2 0.9 2.9 1.8 4.9 1 1.8 0.9 3.1 4.2 0.7 1.8 1.4 1.2 0.8 2.2 1.3 0.9 2.1 0.4 3.1 3 1.9 3.7 8 10.1 1.8 3.6 0.6 2.3 6.2 8.6 1.1 2.9 3.1 5.8 0.7 5.1 1.1 2.2 1.7 1.5 2.4 5 3 11.6 0.9 1.4 3.5 3.4 6.3 3.1 6.2 2.1 9.8 7.8 1.4 0.3 2.1 -0.3 1.4 0.5 1.9 2 1.6 3.6 2.8 2 1.4 2 2.8 1.2 3.5 2.7 2.1 0.8 0 22.5 -167.6 0 0 -174z" fill="#00ffff" stroke="#1a1a1a" stroke-width="0.7" stroke-linejoin="round" fill-rule="evenodd"/><path d="M56 12.7l8.9 0 0.2 0.7 3.3 3.6 -0.1 0.8 -1 1.4 0 0.8 2.1 3.6 0.1 1.4 3.3 3.6 2.1 -0.3 1.4 -1.1 4.2 0 0.6 0.7 0.8 3.3 2.3 1.1 1 2.1 1.2 0.8 0.4 0.7 -0.6 2.2 -2.2 1.2 0 1.3 0.7 0.8 2.1 -1 0.6 0.1 4.2 3.6 1.8 4.1 1.8 1.5 2.3 2.9 0.2 1.4 -0.7 2.2 0.3 0.7 2 1.4 1.4 1.9 1.7 1.1 2.5 0.7 4.2 3.3 3.5 1.7 2.1 2.1 2.8 1.3 2.1 -0.4 0.7 0.4 1.1 3.2 7.9 5.5 2.8 1.2 2.8 0.3 3.5 2.2 3.6 5.3 3.9 4.4 1.4 2.1 2.4 2.2 0.8 2.2 2.3 2.9 2.6 5.1 2.5 3.7 1 2.8 4.4 9.4 0.2 3.6 2.2 5.8 0.7 4.4 0.6 1 2.6 1.9 0.9 2.7 1.1 1.6 1.6 1.5 5.7 3.2 1.6 1.8 6.5 5.1 3.1 1.7 2 3.4 3.2 3.6 0.9 2.2 1 0.7 1 2.2 6.3 4.3 1.6 2.5 6.6 4.1 1.1 2.4 1.8 1.9 0.7 2.2 -160.3 0 0 -174z" fill="#00ffc0" stroke="#1a1a1a" stroke-width="0.7" stroke-linejoin="round" fill-rule="evenodd"/><path d="M59.5 54.7l2.1 -0.1 3.4 2.3 -0.3 3.7 0.4 1 1.4 1.2 2.1 0.6 2.8 -0.4 1.8 1.9 1 0.4 0.7 0.1 1.4 -0.8 0.7 0 1.5 2.5 2.5 2.1 -0.7 1.5 0.2 1.2 4.9 3.7 4.1 2.1 2.8 0 2.1 1.8 2.8 0.2 0.7 0.9 0.5 1.7 0.9 0.6 3.5 0.3 2.1 -0.5 1.4 0.5 2.8 -0.1 2.8 0.6 7 5.6 0.7 0.3 2.1 -0.2 2 1.2 1.4 0 0.8 0.4 1.6 2.2 1.1 0.7 2.1 1 3.5 0.5 0.7 0.7 0.3 2.1 0.4 0.7 2.1 0.9 1.4 1.3 2.1 3.7 0.6 2.9 0.8 1.4 1.3 1.5 2.9 1.8 2.8 4.1 0.4 1.3 -0.1 2.9 2.3 4.4 1.2 3.6 0.2 3.6 2 5.1 2.4 2.9 0.8 2.2 2.2 2.9 1.3 2.9 5.2 5.8 3 1.9 2.1 0.7 4.2 3.2 3.5 1.6 2.8 5.6 3.3 4.4 0.7 2.9 2 2.9 0.2 2.2 0.6 1.4 1.6 3.3 2 2.5 -137.5 0 0 -121.1 0.5 -1.4 -0.5 -2.5 0.9 -2.6 -0.2 -0.8 -0.7 -0.5 0 -1 1.4 -1.5 2.1 -0.6z" fill="#00ff80" stroke="#1a1a1a" stroke-width="0.7" stroke-linejoin="round" fill-rule="evenodd"/><path d="M65.8 94.6l1.4 -0.3 2.5 1.8 5.2 0.3 4.9 1.5 4.9 -0.1 3.4 0.9 8.4 -1.8 2.1 1.7 2.1 0.1 2.4 1 2.5 0.3 2.1 -1.3 2.8 0.4 1.4 0.6 2.1 2 2.7 0.9 0.6 2.2 0.9 0.9 2.8 -0.4 2 2 2.2 1.1 0.2 2.2 3.2 4 1.2 2.5 1.8 2.2 3.3 5.9 1.4 1.3 2.8 1.3 2.4 3.8 0.8 3.6 3.5 5.1 2.1 5.1 2.3 2.9 2.9 2.1 4.1 4.7 1.7 3.3 2.3 2.9 4.1 4.4 2.7 2.1 2.5 3.7 2.1 1.7 0.6 3.4 1.1 2.1 1.8 5.8 2.2 2.2 -122.3 0 0 -90.8 1.4 -0.4 2.1 1 3.5 0 1.4 -0.5 1.4 -1.4z" fill="#00ff00" stroke="#1a1a1a" stroke-width="0.7" stroke-linejoin="round" fill-rule="evenodd"/><path d="M66.8 112.8l1.1 -0.2 3.5 1.9 3.5 0.6 2.1 1.4 2.1 0.6 2.1 -0.6 3.9 -0.1 7.2 3.9 4.2 1.4 2.1 1.2 1.4 0.1 1.4 -0.8 1.4 0 4.9 2.3 2.1 1.8 2.8 0.6 1.9 2.5 2.3 0.2 1.1 0.6 1.1 1.4 0.3 2.2 0.6 0.7 1.8 1 2 -0.4 0.7 0.2 3.6 5.7 6.9 3.9 8.9 7 5.1 6.8 2.1 5 1.3 2 8.4 8.5 0.5 3.1 1.2 2.9 -0.6 3.6 1.4 1.4 0.3 1.5 -107.5 0 0 -69.6 2.8 0.4 0.5 -0.4 0.4 -1.5 1 -0.7 3 -1.4 3.1 -0.7z" fill="#80ff00" stroke="#1a1a1a" stroke-width="0.7" stroke-linejoin="round" fill-rule="evenodd"/><path d="M69.1 133l0.9 -0.6 0.7 0.4 0.7 1.7 0.7 0.2 2.8 -1.4 2.1 0.5 2.1 -0.2 4.2 0.4 5.5 1.7 4.2 1.9 2.8 0.3 2.8 0.8 4.9 0.9 2.8 1.9 2.1 0.4 3.5 1.9 4.2 2.7 3.5 0.8 1.4 1.7 4.1 2.9 2.8 -0.1 1.4 0.3 7 6.2 3.5 2.4 2.6 4.3 2 2.1 4.5 8 1.7 5.8 -0.4 3.6 0.8 2.2 -95 0 0 -49.3 5.6 -0.4 0.7 -0.3 1.4 -2.4 0.7 -0.5 2.8 1 0.8 -0.3 1.1 -1.5z" fill="#c0ff00" stroke="#1a1a1a" stroke-width="0.7" stroke-linejoin="round" fill-rule="evenodd"/><path d="M79.1 143.9l1.4 -0.1 6.9 1.6 2.1 0 6.6 1.4 16.6 6.6 1.7 1.4 2.4 3.2 2.1 0.7 2.8 2.2 3.4 1.6 5.9 4.6 2.5 1.1 2.1 1.8 2.3 1.5 1.2 2.4 2.1 2.6 0.9 4.4 -0.4 5.8 -85.7 0 0 -24.8 0.7 -0.2 2.1 -1.7 2.1 -0.9 2.1 -2.2 2.1 -0.9 1.4 -1.8 2.8 -1.6 6.9 -8 2.9 -0.7z" fill="#ffff00" stroke="#1a1a1a" stroke-width="0.7" stroke-linejoin="round" fill-rule="evenodd"/><path d="M88.6 155.5l0.9 -0.2 4.9 0.7 4.2 1.4 3.5 0 2.8 1.7 3.5 1 1.4 1.1 3.5 4 2.1 1.5 2.1 2.4 5.3 4.5 1.3 1.5 0.5 2.9 -1.8 2.9 0.1 3.6 -0.7 2.2 -62.5 0 -0.1 -1.5 0.9 -1.4 3.4 -1.5 0.2 -0.7 -0.7 -2.1 1.9 -2.9 3.1 -2.2 2.3 -0.7 2.1 -0.1 1.5 -0.7 2.6 -2.9 1.5 -4.3 3.4 -4.4 3.6 -4 3.2 -1.8z" fill="#ffc000" stroke="#1a1a1a" stroke-width="0.7" stroke-linejoin="round" fill-rule="evenodd"/></g><ellipse cx="139.79999999999995" cy="99.69999999999999" rx="69.8" ry="72.5" fill="none" stroke="#101010" stroke-width="1"/><path d="M139.5 0V193M0 99.60000000000002H253M75.75 192.25L252 17.25" stroke="#b0433a" stroke-width="0.9" fill="none" opacity="0.85"/><path d="M105.25 162.6l4.6 5h-9.2z" fill="#fff" stroke="#000" stroke-width="0.7"/><path d="M100.25 168h10" stroke="#000" stroke-width="1.3"/><path d="M200.75 66.6l4.6 -5h-9.2z" fill="#000" stroke="#fff" stroke-width="0.7"/><path d="M195.75 61.4h10" stroke="#fff" stroke-width="1.1"/><rect x="236.20000000000005" y="34" width="11.3" height="23" fill="#f4f4f2"/><path d="M239.65000000000006 40.9l2.2 -2.6l2.2 2.6z M239.65000000000006 50.099999999999994l2.2 2.6l2.2 -2.6z" fill="#4a4a4a"/><rect x="237.5" y="58.5" width="8" height="8.3" fill="#ff0000"/><rect x="237.5" y="66.5" width="8" height="8.3" fill="#ff4000"/><rect x="237.5" y="74.4" width="8" height="8.3" fill="#ff8000"/><rect x="237.5" y="82.4" width="8" height="8.3" fill="#ffc000"/><rect x="237.5" y="90.4" width="8" height="8.3" fill="#ffff00"/><rect x="237.5" y="98.3" width="8" height="8.3" fill="#c0ff00"/><rect x="237.5" y="106.3" width="8" height="8.3" fill="#80ff00"/><rect x="237.5" y="114.3" width="8" height="8.3" fill="#00ff00"/><rect x="237.5" y="122.3" width="8" height="8.3" fill="#00ff80"/><rect x="237.5" y="130.2" width="8" height="8.3" fill="#00ffc0"/><rect x="237.5" y="138.2" width="8" height="8.3" fill="#00ffff"/><rect x="237.5" y="146.2" width="8" height="8.3" fill="#00c0ff"/><rect x="237.5" y="154.1" width="8" height="8.3" fill="#0080ff"/><rect x="237.5" y="162.1" width="8" height="8.3" fill="#0040ff"/><rect x="237.5" y="170.1" width="8" height="8.3" fill="#0000ff"/><rect x="237.5" y="178.1" width="8" height="8.3" fill="#000080"/><path d="M237.5 66.5h3.6M237.5 74.4h3.6M237.5 82.4h3.6M237.5 90.4h3.6M237.5 98.3h3.6M237.5 106.3h3.6M237.5 114.3h3.6M237.5 122.3h3.6M237.5 130.2h3.6M237.5 138.2h3.6M237.5 146.2h3.6M237.5 154.1h3.6M237.5 162.1h3.6M237.5 170.1h3.6M237.5 178.1h3.6" stroke="#a04030" stroke-width="0.6" opacity="0.8"/><text x="234.5" y="70.1" font-family="Liberation Sans,sans-serif" font-size="10.5" font-weight="normal" fill="#2a2ae0" text-anchor="end" >15</text><text x="234.5" y="109.9" font-family="Liberation Sans,sans-serif" font-size="10.5" font-weight="normal" fill="#2a2ae0" text-anchor="end" >10</text><text x="234.5" y="149.79999999999998" font-family="Liberation Sans,sans-serif" font-size="10.5" font-weight="normal" fill="#2a2ae0" text-anchor="end" >5</text><text x="234.5" y="189.6" font-family="Liberation Sans,sans-serif" font-size="10.5" font-weight="normal" fill="#2a2ae0" text-anchor="end" >0</text><text x="2.4" y="178" font-family="Liberation Sans,sans-serif" font-size="9.5" font-weight="normal" fill="#3434e6" text-anchor="start" >X=</text><text x="24.2" y="178" font-family="Liberation Sans,sans-serif" font-size="9.5" font-weight="normal" fill="#3434e6" text-anchor="start" >0.0mm</text><text x="2.4" y="189.2" font-family="Liberation Sans,sans-serif" font-size="9.5" font-weight="normal" fill="#3434e6" text-anchor="start" >Y=</text><text x="24.2" y="189.2" font-family="Liberation Sans,sans-serif" font-size="9.5" font-weight="normal" fill="#3434e6" text-anchor="start" >0.0mm</text></svg></div></div><div class="win" style="left:1px;top:331px;width:348px;height:275px"><svg class="ti" viewBox="0 0 11 11" style=""><rect width="11" height="11" rx="0.8" fill="#1a5fb4"/><ellipse cx="5.5" cy="4.6" rx="4.2" ry="3.6" fill="none" stroke="#9cc3ee" stroke-width="0.9"/><ellipse cx="5.5" cy="4.4" rx="2.3" ry="2.1" fill="#fff"/><rect x="1.2" y="8.6" width="8.6" height="1.3" fill="#cfe2f7"/></svg><div class="tt" style="top:5.5px;letter-spacing:0.219px;left:19.1px">鳥瞰図 [File C : File A - File B] GBIR</div><div class="tr" style="left:178px;top:5.5px;letter-spacing:0.444px">1.80µm (0.2µm/scale)</div><div class="wb" style="left:274.5px"><svg viewBox="0 0 18 9"><rect x="5.3" y="4.6" width="7.4" height="2.9" rx="0.7" fill="#a0a0a0" stroke="#fff" stroke-width="0.8"/></svg></div><div class="wb" style="left:296.5px"><svg viewBox="0 0 18 9"><rect x="5.6" y="1.8" width="6.8" height="5.2" rx="0.5" fill="#fdfdfd" stroke="#8a8a8a" stroke-width="1"/><rect x="7.3" y="3.6" width="3.4" height="1.8" fill="#4b5a78"/></svg></div><div class="wb cl" style="left:318.5px"><svg viewBox="0 0 18 9"><path d="M6.3 2.3L11.7 6.7M11.7 2.3L6.3 6.7" stroke="#fff" stroke-width="3.3" stroke-linecap="square"/><path d="M6.3 2.3L11.7 6.7M11.7 2.3L6.3 6.7" stroke="#8c8c8c" stroke-width="1.9" stroke-linecap="square"/></svg></div><div class="cnt" style="left:5px;top:19px;width:335px;height:249px;background:#d4d0c8"><svg width="335" height="249" viewBox="0 0 335 249" style="position:absolute;left:0;top:0;"><clipPath id="fl9k"><rect width="324" height="236.5"/></clipPath><g clip-path="url(#fl9k)"><pattern id="fl9" patternUnits="userSpaceOnUse" width="3.259" height="2.933" patternTransform="matrix(1 0 -0.4420 1 94.266 37.250)"><rect width="3.259" height="2.933" fill="#e8e4dc"/><path d="M0 0H3.259" stroke="#202020" stroke-width="1.9"/><path d="M0 0V2.933" stroke="#202020" stroke-width="1.8"/></pattern><path d="M0.0 213.2L257.5 213.2L335.3 37.2L77.8 37.2z" fill="url(#fl9)" stroke="#111" stroke-width="0.8"/><path d="M77.8 37.2L61.3 0" stroke="#111" stroke-width="0.8"/><g stroke="#000" stroke-width="0.45" stroke-linejoin="round"><path d="M189 62.4l3.2 0 -7.6 -10.9 -0.9 5.2zM192.2 62.4l3.1 -0.2 -9.5 -15.2 -1.2 4.5z" fill="#0000ff"/><path d="M195.3 62.2l1.8 -3.3 -8.8 -13.7 -2.5 1.8zM197.1 58.9l2.1 -2.6 -8.2 -12.1 -2.7 1zM199.2 56.3l2.6 -1.4 -7.7 -11.1 -3.1 0.4zM201.8 54.9l2.7 -1 -7.3 -10.3 -3.1 0.2zM204.5 53.9l3.3 0 -7.5 -10.6 -3.1 0.3zM207.8 53.9l3.7 1.2 -7.8 -11.3 -3.4 -0.5zM211.5 55.1l4 1.7 -7.8 -11.3 -4 -1.7zM215.5 56.8l4.2 2.2 -8.2 -12.2 -3.8 -1.3z" fill="#0040ff"/><path d="M219.7 59l4.6 3.2 -8.2 -12.3 -4.6 -3.1zM224.3 62.2l3.3 0.2 -6.9 -9.5 -4.6 -3zM227.6 62.4l3.2 0 -4.9 -4.8 -5.2 -4.7z" fill="#0000ff"/><path d="M230.8 62.4l-4.9 -4.8 3.6 7.9 1.3 -3.1z" fill="#000080"/><path d="M178 65.5l3.2 0 -7.3 -10 0.2 7.7z" fill="#000080"/><path d="M181.2 65.5l2 -2.6 -9 -14.2 -0.3 6.8z" fill="#0000ff"/><path d="M183.2 62.9l0.5 -6.2 -8.5 -12.8 -1 4.8z" fill="#0040ff"/><path d="M183.7 56.7l0.9 -5.2 -7.3 -10.2 -2.1 2.6z" fill="#0080ff"/><path d="M184.6 51.5l1.2 -4.5 -6.6 -8.7 -1.9 3zM185.8 47l2.5 -1.8 -6.4 -8 -2.7 1.1z" fill="#00c0ff"/><path d="M188.3 45.2l2.7 -1 -5.4 -6 -3.7 -1zM191 44.2l3.1 -0.4 -5.5 -6.1 -3 0.5zM194.1 43.8l3.1 -0.2 -4.8 -4.6 -3.8 -1.3zM197.2 43.6l3.1 -0.3 -4.6 -4.1 -3.3 -0.2zM200.3 43.3l3.4 0.5 -5.2 -5.6 -2.8 1zM203.7 43.8l4 1.7 -6 -7.3 -3.2 0z" fill="#00ffff"/><path d="M207.7 45.5l3.8 1.3 -6.1 -7.5 -3.7 -1.1zM211.5 46.8l4.6 3.1 -6 -7.1 -4.7 -3.5z" fill="#00c0ff"/><path d="M216.1 49.9l4.6 3 -6 -7.1 -4.6 -3zM220.7 52.9l5.2 4.7 -6.6 -8.7 -4.6 -3.1z" fill="#0080ff"/><path d="M225.9 57.6l5.5 5.1 -7 -9.5 -5.1 -4.3z" fill="#0040ff"/><path d="M231.4 62.7l4.5 2.8 -6 -7.2 -5.5 -5.1z" fill="#0000ff"/><path d="M235.9 65.5l3.2 0 -3.7 -2 -5.5 -5.2z" fill="#000080"/><path d="M239.1 65.5l-3.7 -2 2.3 5.2 1.4 -3.2z" fill="#000080"/><path d="M173.3 68.7l0.8 -5.5 -8.4 -12.8 0.4 8.1z" fill="#0000ff"/><path d="M174.1 63.2l-0.2 -7.7 -7.5 -10.8 -0.7 5.7z" fill="#0080ff"/><path d="M173.9 55.5l0.3 -6.8 -6.5 -8.2 -1.3 4.2z" fill="#00c0ff"/><path d="M174.2 48.7l1 -4.8 -5.1 -5.3 -2.4 1.9zM175.2 43.9l2.1 -2.6 -4.8 -4.6 -2.4 1.9z" fill="#00ffff"/><path d="M177.3 41.3l1.9 -3 -4.2 -3.2 -2.5 1.6zM179.2 38.3l2.7 -1.1 -4.4 -3.7 -2.5 1.6zM181.9 37.2l3.7 1 -3.4 -1.4 -4.7 -3.3zM185.6 38.2l3 -0.5 -2.9 -0.3 -3.5 -0.6zM188.6 37.7l3.8 1.3 -2.9 -0.3 -3.8 -1.3zM192.4 39l3.3 0.2 -3.4 -1.3 -2.8 0.8zM195.7 39.2l2.8 -1 -3.9 -2.4 -2.3 2.1zM198.5 38.2l3.2 0 -3.9 -2.4 -3.2 0zM201.7 38.2l3.7 1.1 -3.2 -1 -4.4 -2.5z" fill="#00ffc0"/><path d="M205.4 39.3l4.7 3.5 -4.2 -3.4 -3.7 -1.1zM210.1 42.8l4.6 3 -4.5 -4 -4.3 -2.4z" fill="#00ffff"/><path d="M214.7 45.8l4.6 3.1 -4.9 -4.8 -4.2 -2.3zM219.3 48.9l5.1 4.3 -5.1 -5.4 -4.9 -3.7z" fill="#00c0ff"/><path d="M224.4 53.2l5.5 5.1 -5.6 -6.3 -5 -4.2z" fill="#0080ff"/><path d="M229.9 58.3l5.5 5.2 -6.1 -7.6 -5 -3.9z" fill="#0040ff"/><path d="M235.4 63.5l5.4 5 -5.9 -7.1 -5.6 -5.5z" fill="#0000ff"/><path d="M240.8 68.5l3.4 0.2 -3.1 -0.7 -6.2 -6.6z" fill="#000080"/><path d="M244.2 68.7l-3.1 -0.7 1.7 3.8 1.4 -3.1z" fill="#000080"/><path d="M165.5 71.8l1.5 -3.9 -8.1 -12 1 9.5z" fill="#0000ff"/><path d="M167 67.9l-0.9 -9.4 -7.3 -10.1 0.1 7.5z" fill="#0080ff"/><path d="M166.1 58.5l-0.4 -8.1 -5.8 -6.7 -1.1 4.7z" fill="#00c0ff"/><path d="M165.7 50.4l0.7 -5.7 -4.3 -3.4 -2.2 2.4z" fill="#00ffff"/><path d="M166.4 44.7l1.3 -4.2 -3.6 -2 -2 2.8zM167.7 40.5l2.4 -1.9 -3.8 -2.3 -2.2 2.2z" fill="#00ffc0"/><path d="M170.1 38.6l2.4 -1.9 -3.5 -1.5 -2.7 1.1zM172.5 36.7l2.5 -1.6 -2.6 0.4 -3.4 -0.3zM175 35.1l2.5 -1.6 -2.4 0.8 -2.7 1.2zM177.5 33.5l4.7 3.3 -2.7 0.2 -4.4 -2.7z" fill="#00ff80"/><path d="M182.2 36.8l3.5 0.6 -1.9 2.1 -4.3 -2.5zM185.7 37.4l3.8 1.3 -1.2 3.6 -4.5 -2.8zM189.5 38.7l2.8 -0.8 -0.9 4.2 -3.1 0.2zM192.3 37.9l2.3 -2.1 -0.2 5.8 -3 0.5zM194.6 35.8l3.2 0 -0.2 5.7 -3.2 0.1zM197.8 35.8l4.4 2.5 -1.8 2.2 -2.8 1zM202.2 38.3l3.7 1.1 -1 4 -4.5 -2.9zM205.9 39.4l4.3 2.4 -2.5 0.7 -2.8 0.9z" fill="#00ffc0"/><path d="M210.2 41.8l4.2 2.3 -3 -0.6 -3.7 -1zM214.4 44.1l4.9 3.7 -3.9 -2.4 -4 -1.9z" fill="#00ffff"/><path d="M219.3 47.8l5 4.2 -4.9 -5 -4 -1.6zM224.3 52l5 3.9 -5.1 -5.2 -4.8 -3.7z" fill="#00c0ff"/><path d="M229.3 55.9l5.6 5.5 -5.1 -5.4 -5.6 -5.3z" fill="#0080ff"/><path d="M234.9 61.4l6.2 6.6 -5.6 -6.4 -5.7 -5.6z" fill="#0040ff"/><path d="M241.1 68l4.9 3.8 -4.6 -4.1 -5.9 -6.1z" fill="#0000ff"/><path d="M246 71.8l-4.6 -4.1 3.2 7.3 1.4 -3.2z" fill="#000080"/><path d="M160.9 75l-1 -9.6 -7 -9.6 1.2 10.1z" fill="#0040ff"/><path d="M159.9 65.4l-1 -9.5 -5.9 -7.1 -0.1 7z" fill="#0080ff"/><path d="M158.9 55.9l-0.1 -7.5 -4.6 -4 -1.2 4.4z" fill="#00ffff"/><path d="M158.8 48.4l1.1 -4.7 -2.5 0.7 -3.2 0zM159.9 43.7l2.2 -2.4 -1.7 2.5 -3 0.6zM162.1 41.3l2 -2.8 -0.9 4.2 -2.8 1.1z" fill="#00ffc0"/><path d="M164.1 38.5l2.2 -2.2 -0.9 4.2 -2.2 2.2zM166.3 36.3l2.7 -1.1 -1.3 3.3 -2.3 2zM169 35.2l3.4 0.3 -1.3 3.4 -3.4 -0.4zM172.4 35.5l2.7 -1.2 -0.5 5.2 -3.5 -0.6zM175.1 34.3l4.4 2.7 -0.9 4.2 -4 -1.7zM179.5 37l4.3 2.5 -0.7 4.6 -4.5 -2.9z" fill="#00ff80"/><path d="M183.8 39.5l4.5 2.8 -1.3 3.4 -3.9 -1.6zM188.3 42.3l3.1 -0.2 -1.8 2.2 -2.6 1.4zM191.4 42.1l3 -0.5 -1.7 2.5 -3.1 0.2zM194.4 41.6l3.2 -0.1 -1.3 3.4 -3.6 -0.8zM197.6 41.5l2.8 -1 -1.6 2.7 -2.5 1.7zM200.4 40.5l4.5 2.9 -1.7 2.6 -4.4 -2.8zM204.9 43.4l2.8 -0.9 -1.6 2.7 -2.9 0.8zM207.7 42.5l3.7 1 -2.1 1.6 -3.2 0.1zM211.4 43.5l4 1.9 -2.7 0.1 -3.4 -0.4zM215.4 45.4l4 1.6 -3.8 -2.2 -2.9 0.7z" fill="#00ffc0"/><path d="M219.4 47l4.8 3.7 -4.1 -3 -4.5 -2.9z" fill="#00ffff"/><path d="M224.2 50.7l5.6 5.3 -4.8 -4.4 -4.9 -3.9z" fill="#00c0ff"/><path d="M229.8 56l5.7 5.6 -5.2 -5.3 -5.3 -4.7z" fill="#0080ff"/><path d="M235.5 61.6l5.9 6.1 -5.5 -6.1 -5.6 -5.3z" fill="#0040ff"/><path d="M241.4 67.7l6.2 6.8 -5.6 -6.4 -6.1 -6.5z" fill="#0000ff"/><path d="M247.6 74.5l3.4 0.5 -2.2 1.1 -6.8 -8z" fill="#000080"/><path d="M251 75l-2.2 1.1 0.8 2 1.4 -3.1z" fill="#000080"/><path d="M153.1 78.1l2.8 -1 -7.2 -9.8 2.3 12.4z" fill="#000080"/><path d="M155.9 77.1l-1.8 -11.2 -6.2 -7.8 0.8 9.2z" fill="#0040ff"/><path d="M154.1 65.9l-1.2 -10.1 -5.1 -5.2 0.1 7.5z" fill="#00c0ff"/><path d="M152.9 55.8l0.1 -7 -4.1 -2.9 -1.1 4.7z" fill="#00ffff"/><path d="M153 48.8l1.2 -4.4 -1.9 2 -3.4 -0.5zM154.2 44.4l3.2 0 -1.2 3.4 -3.9 -1.4zM157.4 44.4l3 -0.6 -0.5 5.2 -3.7 -1.2zM160.4 43.8l2.8 -1.1 -0.6 5 -2.7 1.3zM163.2 42.7l2.2 -2.2 0.4 7.3 -3.2 -0.1z" fill="#00ffc0"/><path d="M165.4 40.5l2.3 -2 0.8 7.9 -2.7 1.4zM167.7 38.5l3.4 0.4 0.3 7 -2.9 0.5zM171.1 38.9l3.5 0.6 0.1 6.4 -3.3 0zM174.6 39.5l4 1.7 -0.2 6 -3.7 -1.3z" fill="#00ff80"/><path d="M178.6 41.2l4.5 2.9 -0.7 4.8 -4 -1.7zM183.1 44.1l3.9 1.6 -0.8 4.5 -3.8 -1.3zM187 45.7l2.6 -1.4 -0.1 6 -3.3 -0.1zM189.6 44.3l3.1 -0.2 -1 4 -2.2 2.2zM192.7 44.1l3.6 0.8 -1.5 2.8 -3.1 0.4zM196.3 44.9l2.5 -1.7 -0.4 5.4 -3.6 -0.9zM198.8 43.2l4.4 2.8 -1 4 -3.8 -1.4zM203.2 46l2.9 -0.8 -1.2 3.5 -2.7 1.3zM206.1 45.2l3.2 -0.1 -1.6 2.6 -2.8 1zM209.3 45.1l3.4 0.4 -2.1 1.7 -2.9 0.5zM212.7 45.5l2.9 -0.7 -1.4 3.1 -3.6 -0.7zM215.6 44.8l4.5 2.9 -2.5 0.6 -3.4 -0.4z" fill="#00ffc0"/><path d="M220.1 47.7l4.9 3.9 -2.7 0.2 -4.7 -3.5zM225 51.6l5.3 4.7 -3.9 -2.6 -4.1 -1.9z" fill="#00ffff"/><path d="M230.3 56.3l5.6 5.3 -4.9 -4.7 -4.6 -3.2z" fill="#00c0ff"/><path d="M235.9 61.6l6.1 6.5 -5.5 -6.1 -5.5 -5.1z" fill="#0080ff"/><path d="M242 68.1l6.8 8 -5.7 -6.5 -6.6 -7.6z" fill="#0040ff"/><path d="M248.8 76.1l4.1 2 -2.6 0.4 -7.2 -8.9z" fill="#000080"/><path d="M252.9 78.1l-2.6 0.4 1.2 2.7 1.4 -3.1z" fill="#000080"/><path d="M148.5 81.2l2.5 -1.5 -7.1 -9.7 2.8 13.6z" fill="#000080"/><path d="M151 79.7l-2.3 -12.4 -5.7 -6.8 0.9 9.5z" fill="#0040ff"/><path d="M148.7 67.3l-0.8 -9.2 -4.5 -3.8 -0.4 6.2z" fill="#00c0ff"/><path d="M147.9 58.1l-0.1 -7.5 -2.3 1.1 -2.1 2.6z" fill="#00ffff"/><path d="M147.8 50.6l1.1 -4.7 -1.1 3.7 -2.3 2.1zM148.9 45.9l3.4 0.5 -0.3 5.5 -4.2 -2.3zM152.3 46.4l3.9 1.4 0.1 6.6 -4.3 -2.5zM156.2 47.8l3.7 1.2 -1 3.9 -2.6 1.5zM159.9 49l2.7 -1.3 -0.3 5.6 -3.4 -0.4zM162.6 47.7l3.2 0.1 -0.3 5.6 -3.2 -0.1zM165.8 47.8l2.7 -1.4 -0.6 5 -2.4 2zM168.5 46.4l2.9 -0.5 0.1 6.4 -3.6 -0.9zM171.4 45.9l3.3 0 -0.5 5.1 -2.7 1.3zM174.7 45.9l3.7 1.3 -0.6 4.9 -3.6 -1.1zM178.4 47.2l4 1.7 -1.1 3.7 -3.5 -0.5zM182.4 48.9l3.8 1.3 -1.8 2.2 -3.1 0.2zM186.2 50.2l3.3 0.1 -1.6 2.8 -3.5 -0.7zM189.5 50.3l2.2 -2.2 -0.2 5.8 -3.6 -0.8zM191.7 48.1l3.1 -0.4 -0.6 4.9 -2.7 1.3zM194.8 47.7l3.6 0.9 -0.9 4.3 -3.3 -0.3zM198.4 48.6l3.8 1.4 -1.2 3.6 -3.5 -0.7zM202.2 50l2.7 -1.3 -0.8 4.6 -3.1 0.3zM204.9 48.7l2.8 -1 -0.7 4.8 -2.9 0.8zM207.7 47.7l2.9 -0.5 -0.5 5 -3.1 0.3zM210.6 47.2l3.6 0.7 -1.3 3.3 -2.8 1zM214.2 47.9l3.4 0.4 -1.2 3.6 -3.5 -0.7zM217.6 48.3l4.7 3.5 -2.6 0.3 -3.3 -0.2z" fill="#00ffc0"/><path d="M222.3 51.8l4.1 1.9 -2.9 -0.4 -3.8 -1.2zM226.4 53.7l4.6 3.2 -3 -0.6 -4.5 -3z" fill="#00ffff"/><path d="M231 56.9l5.5 5.1 -3.6 -1.9 -4.9 -3.8z" fill="#00c0ff"/><path d="M236.5 62l6.6 7.6 -4.6 -4.1 -5.6 -5.4z" fill="#0080ff"/><path d="M243.1 69.6l7.2 8.9 -5 -5 -6.8 -8z" fill="#0040ff"/><path d="M250.3 78.5l4.4 2.7 -2.4 1 -7 -8.7z" fill="#000080"/><path d="M254.7 81.2l-2.4 1 1 2.2 1.4 -3.2z" fill="#000080"/><path d="M146.7 83.6l-2.8 -13.6 -6 -7.3 2.1 11.9z" fill="#0040ff"/><path d="M143.9 70l-0.9 -9.5 -4.6 -4 -0.5 6.2z" fill="#00c0ff"/><path d="M143 60.5l0.4 -6.2 -2.7 0.2 -2.3 2z" fill="#00ffff"/><path d="M143.4 54.3l2.1 -2.6 -1.5 2.9 -3.3 -0.1zM145.5 51.7l2.3 -2.1 0.1 6.5 -3.9 -1.5zM147.8 49.6l4.2 2.3 -0.2 5.7 -3.9 -1.5z" fill="#00ffc0"/><path d="M152 51.9l4.3 2.5 -0.8 4.3 -3.7 -1.1zM156.3 54.4l2.6 -1.5 -0.3 5.7 -3.1 0.1zM158.9 52.9l3.4 0.4 -0.4 5.5 -3.3 -0.2zM162.3 53.3l3.2 0.1 -1.2 3.5 -2.4 1.9z" fill="#00ffff"/><path d="M165.5 53.4l2.4 -2 -0.8 4.5 -2.8 1zM167.9 51.4l3.6 0.9 -1 4 -3.4 -0.4zM171.5 52.3l2.7 -1.3 -0.4 5.5 -3.3 -0.2zM174.2 51l3.6 1.1 -0.3 5.6 -3.7 -1.2zM177.8 52.1l3.5 0.5 -0.4 5.5 -3.4 -0.4zM181.3 52.6l3.1 -0.2 -0.6 4.8 -2.9 0.9zM184.4 52.4l3.5 0.7 -1 4 -3.1 0.1z" fill="#00ffc0"/><path d="M187.9 53.1l3.6 0.8 -1.2 3.5 -3.4 -0.3zM191.5 53.9l2.7 -1.3 -0.1 6.2 -3.8 -1.4zM194.2 52.6l3.3 0.3 -0.2 5.9 -3.2 0zM197.5 52.9l3.5 0.7 -0.3 5.6 -3.4 -0.4zM201 53.6l3.1 -0.3 -0.8 4.5 -2.6 1.4zM204.1 53.3l2.9 -0.8 -0.5 5.1 -3.2 0.2z" fill="#00ffff"/><path d="M207 52.5l3.1 -0.3 -0.7 4.7 -2.9 0.7zM210.1 52.2l2.8 -1 -0.8 4.7 -2.7 1zM212.9 51.2l3.5 0.7 -0.9 4.4 -3.4 -0.4zM216.4 51.9l3.3 0.2 -1.2 3.7 -3 0.5zM219.7 52.1l3.8 1.2 -1.4 3.3 -3.6 -0.8z" fill="#00ffc0"/><path d="M223.5 53.3l4.5 3 -2.3 1.2 -3.6 -0.9zM228 56.3l4.9 3.8 -2.8 0 -4.4 -2.6z" fill="#00ffff"/><path d="M232.9 60.1l5.6 5.4 -3.9 -2.5 -4.5 -2.9z" fill="#00c0ff"/><path d="M238.5 65.5l6.8 8 -4.8 -4.5 -5.9 -6z" fill="#0080ff"/><path d="M245.3 73.5l7 8.7 -4.9 -4.8 -6.9 -8.4z" fill="#0040ff"/><path d="M252.3 82.2l4.2 2.2 -1.8 2.2 -7.3 -9.2z" fill="#000080"/><path d="M256.5 84.4l-1.8 2.2 0.4 0.9 1.4 -3.1z" fill="#000080"/><path d="M142.5 87.5l-2.5 -12.9 -5.5 -6 2.6 13z" fill="#0040ff"/><path d="M140 74.6l-2.1 -11.9 -4.1 -2.9 0.7 8.8z" fill="#00c0ff"/><path d="M137.9 62.7l0.5 -6.2 -2.7 0.3 -1.9 3z" fill="#00ffff"/><path d="M138.4 56.5l2.3 -2 -1.7 2.5 -3.3 -0.2zM140.7 54.5l3.3 0.1 -1 4.1 -4 -1.7zM144 54.6l3.9 1.5 -1.2 3.7 -3.7 -1.1zM147.9 56.1l3.9 1.5 -1.8 2.4 -3.3 -0.2z" fill="#00ffc0"/><path d="M151.8 57.6l3.7 1.1 -1.4 3.2 -4.1 -1.9zM155.5 58.7l3.1 -0.1 -0.9 4.1 -3.6 -0.8zM158.6 58.6l3.3 0.2 -1.8 2.2 -2.4 1.7zM161.9 58.8l2.4 -1.9 -0.8 4.5 -3.4 -0.4zM164.3 56.9l2.8 -1 -0.7 4.8 -2.9 0.7zM167.1 55.9l3.4 0.4 -0.4 5.5 -3.7 -1.1zM170.5 56.3l3.3 0.2 0.3 7 -4 -1.7zM173.8 56.5l3.7 1.2 0 6.1 -3.4 -0.3zM177.5 57.7l3.4 0.4 -0.5 5 -2.9 0.7zM180.9 58.1l2.9 -0.9 -1.3 3.5 -2.1 2.4zM183.8 57.2l3.1 -0.1 -1.1 3.7 -3.3 -0.1zM186.9 57.1l3.4 0.3 -0.1 6 -4.4 -2.6zM190.3 57.4l3.8 1.4 -0.5 5.2 -3.4 -0.6zM194.1 58.8l3.2 0 -1 4 -2.7 1.2zM197.3 58.8l3.4 0.4 -1.3 3.3 -3.1 0.3zM200.7 59.2l2.6 -1.4 -0.7 4.6 -3.2 0.1zM203.3 57.8l3.2 -0.2 -0.4 5.6 -3.5 -0.8zM206.5 57.6l2.9 -0.7 -0.2 6 -3.1 0.3zM209.4 56.9l2.7 -1 0 6.3 -2.9 0.7zM212.1 55.9l3.4 0.4 -1.3 3.3 -2.1 2.6z" fill="#00ffff"/><path d="M215.5 56.3l3 -0.5 -0.5 5 -3.8 -1.2z" fill="#00ffc0"/><path d="M218.5 55.8l3.6 0.8 -0.9 4.2 -3.2 0zM222.1 56.6l3.6 0.9 -1.2 3.4 -3.3 -0.1zM225.7 57.5l4.4 2.6 -1.8 2.3 -3.8 -1.5zM230.1 60.1l4.5 2.9 -2.1 1.6 -4.2 -2.2z" fill="#00ffff"/><path d="M234.6 63l5.9 6 -2.9 -0.3 -5.1 -4.1z" fill="#00c0ff"/><path d="M240.5 69l6.9 8.4 -4 -2.9 -5.8 -5.8z" fill="#0080ff"/><path d="M247.4 77.4l7.3 9.2 -4.6 -4.1 -6.7 -8z" fill="#0000ff"/><path d="M254.7 86.6l-4.6 -4.1 3.6 8.2 1.4 -3.2z" fill="#000080"/><path d="M137.9 90.7l-0.8 -9.1 -5.5 -6.1 3 14.1z" fill="#0000ff"/><path d="M137.1 81.6l-2.6 -13 -4.1 -3 1.2 9.9z" fill="#0080ff"/><path d="M134.5 68.6l-0.7 -8.8 -2 1.7 -1.4 4.1z" fill="#00ffff"/><path d="M133.8 59.8l1.9 -3 -1.1 3.7 -2.8 1zM135.7 56.8l3.3 0.2 -0.5 5.1 -3.9 -1.6zM139 57l4 1.7 -0.7 4.6 -3.8 -1.2z" fill="#00ffc0"/><path d="M143 58.7l3.7 1.1 -0.3 5.6 -4.1 -2.1zM146.7 59.8l3.3 0.2 -0.2 5.7 -3.4 -0.3zM150 60l4.1 1.9 -0.7 4.7 -3.6 -0.9zM154.1 61.9l3.6 0.8 -0.9 4.4 -3.4 -0.5zM157.7 62.7l2.4 -1.7 -0.9 4.2 -2.4 1.9zM160.1 61l3.4 0.4 -1 4 -3.3 -0.2zM163.5 61.4l2.9 -0.7 -0.3 5.4 -3.6 -0.7zM166.4 60.7l3.7 1.1 -0.3 5.5 -3.7 -1.2zM170.1 61.8l4 1.7 -0.1 6 -4.2 -2.2zM174.1 63.5l3.4 0.3 -0.2 5.9 -3.3 -0.2zM177.5 63.8l2.9 -0.7 -0.6 5 -2.5 1.6zM180.4 63.1l2.1 -2.4 0.1 6.5 -2.8 0.9zM182.5 60.7l3.3 0.1 0 6.4 -3.2 0zM185.8 60.8l4.4 2.6 -0.9 4.4 -3.5 -0.6zM190.2 63.4l3.4 0.6 -0.2 5.8 -4.1 -2zM193.6 64l2.7 -1.2 0.4 7.1 -3.3 -0.1zM196.3 62.8l3.1 -0.3 0.3 6.9 -3 0.5zM199.4 62.5l3.2 -0.1 -0.1 6.1 -2.8 0.9zM202.6 62.4l3.5 0.8 0.5 7.3 -4.1 -2zM206.1 63.2l3.1 -0.3 0.4 7 -3 0.6zM209.2 62.9l2.9 -0.7 0.5 7.2 -3 0.5zM212.1 62.2l2.1 -2.6 0.8 8.1 -2.4 1.7zM214.2 59.6l3.8 1.2 0.1 6.5 -3.1 0.4zM218 60.8l3.2 0 -0.2 5.9 -2.9 0.6zM221.2 60.8l3.3 0.1 -0.9 4.4 -2.6 1.4zM224.5 60.9l3.8 1.5 -1.3 3.2 -3.4 -0.3zM228.3 62.4l4.2 2.2 -2.3 1 -3.2 0z" fill="#00ffff"/><path d="M232.5 64.6l5.1 4.1 -3 -0.4 -4.4 -2.7zM237.6 68.7l5.8 5.8 -3.3 -1.1 -5.5 -5.1z" fill="#00c0ff"/><path d="M243.4 74.5l6.7 8 -3.9 -2.5 -6.1 -6.6z" fill="#0040ff"/><path d="M250.1 82.5l6.9 8.2 -3.6 -1.8 -7.2 -8.9z" fill="#0000ff"/><path d="M257 90.7l-3.6 -1.8 2.2 4.9 1.4 -3.1z" fill="#000080"/><path d="M133.3 93.8l1.3 -4.2 -5.8 -6.8 3.1 14.2z" fill="#000080"/><path d="M134.6 89.6l-3 -14.1 -5 -5 2.2 12.3z" fill="#0080ff"/><path d="M131.6 75.5l-1.2 -9.9 -3.8 -2.4 0 7.3z" fill="#00ffff"/><path d="M130.4 65.6l1.4 -4.1 -1.7 2.4 -3.5 -0.7zM131.8 61.5l2.8 -1 -0.7 4.8 -3.8 -1.4zM134.6 60.5l3.9 1.6 -0.8 4.5 -3.8 -1.3zM138.5 62.1l3.8 1.2 -1.7 2.6 -2.9 0.7z" fill="#00ffc0"/><path d="M142.3 63.3l4.1 2.1 -1.6 2.5 -4.2 -2zM146.4 65.4l3.4 0.3 -1.8 2.2 -3.2 0zM149.8 65.7l3.6 0.9 -1.9 2.1 -3.5 -0.8zM153.4 66.6l3.4 0.5 -1.8 2.2 -3.5 -0.6zM156.8 67.1l2.4 -1.9 -0.4 5.3 -3.8 -1.2zM159.2 65.2l3.3 0.2 -0.2 5.9 -3.5 -0.8zM162.5 65.4l3.6 0.7 -0.4 5.5 -3.4 -0.3zM166.1 66.1l3.7 1.2 -0.5 5.1 -3.6 -0.8z" fill="#00ffff"/><path d="M169.8 67.3l4.2 2.2 -0.6 4.9 -4.1 -2zM174 69.5l3.3 0.2 -0.8 4.6 -3.1 0.1zM177.3 69.7l2.5 -1.6 0 6.3 -3.3 -0.1zM179.8 68.1l2.8 -0.9 0.6 7.7 -3.4 -0.5zM182.6 67.2l3.2 0 0.5 7.2 -3.1 0.5zM185.8 67.2l3.5 0.6 0.9 8.2 -3.9 -1.6zM189.3 67.8l4.1 2 0.2 6.8 -3.4 -0.6zM193.4 69.8l3.3 0.1 0.2 6.7 -3.3 0zM196.7 69.9l3 -0.5 0.2 6.9 -3 0.3zM199.7 69.4l2.8 -0.9 0.1 6.5 -2.7 1.3zM202.5 68.5l4.1 2 -1.3 3.4 -2.7 1.1zM206.6 70.5l3 -0.6 -0.8 4.6 -3.5 -0.6zM209.6 69.9l3 -0.5 -0.1 6.2 -3.7 -1.1zM212.6 69.4l2.4 -1.7 0.1 6.5 -2.6 1.4zM215 67.7l3.1 -0.4 -0.8 4.5 -2.2 2.4z" fill="#00c0ff"/><path d="M218.1 67.3l2.9 -0.6 -1.1 3.7 -2.6 1.4zM221 66.7l2.6 -1.4 -0.5 5.1 -3.2 0zM223.6 65.3l3.4 0.3 -1.9 2.1 -2 2.7zM227 65.6l3.2 0 -2.7 0.2 -2.4 1.9zM230.2 65.6l4.4 2.7 -3 -0.4 -4.1 -2.1z" fill="#00ffff"/><path d="M234.6 68.3l5.5 5.1 -3 -0.5 -5.5 -5z" fill="#00c0ff"/><path d="M240.1 73.4l6.1 6.6 -3.1 -0.9 -6 -6.2z" fill="#0080ff"/><path d="M246.2 80l7.2 8.9 -3.6 -1.9 -6.7 -7.9z" fill="#0040ff"/><path d="M253.4 88.9l5.4 4.9 -1.7 2.4 -7.3 -9.2z" fill="#000080"/><path d="M258.8 93.8l-1.7 2.4 0.3 0.8 1.4 -3.2z" fill="#000080"/><path d="M131.9 97l-3.1 -14.2 -5 -5.1 3.9 16.2z" fill="#0040ff"/><path d="M128.8 82.8l-2.2 -12.3 -4.1 -2.9 1.3 10.1z" fill="#00c0ff"/><path d="M126.6 70.5l0 -7.3 -1.8 2.4 -2.3 2zM126.6 63.2l3.5 0.7 -1 4.1 -4.3 -2.4zM130.1 63.9l3.8 1.4 -1.2 3.5 -3.6 -0.8zM133.9 65.3l3.8 1.3 -1.8 2.1 -3.2 0.1z" fill="#00ffc0"/><path d="M137.7 66.6l2.9 -0.7 -0.8 4.5 -3.9 -1.7zM140.6 65.9l4.2 2 -1.3 3.5 -3.7 -1zM144.8 67.9l3.2 0 -0.7 4.8 -3.8 -1.3zM148 67.9l3.5 0.8 -0.5 5 -3.7 -1zM151.5 68.7l3.5 0.6 0.1 6.6 -4.1 -2.2zM155 69.3l3.8 1.2 -0.3 5.6 -3.4 -0.2z" fill="#00ffff"/><path d="M158.8 70.5l3.5 0.8 -0.2 5.7 -3.6 -0.9zM162.3 71.3l3.4 0.3 -0.4 5.3 -3.2 0.1zM165.7 71.6l3.6 0.8 -0.2 5.9 -3.8 -1.4zM169.3 72.4l4.1 2 -0.2 5.8 -4.1 -1.9zM173.4 74.4l3.1 -0.1 -0.1 5.9 -3.2 0zM176.5 74.3l3.3 0.1 -0.2 5.8 -3.2 0zM179.8 74.4l3.4 0.5 -0.1 5.9 -3.5 -0.6zM183.2 74.9l3.1 -0.5 0.4 7.2 -3.6 -0.8z" fill="#00c0ff"/><path d="M186.3 74.4l3.9 1.6 0.1 6.5 -3.6 -0.9zM190.2 76l3.4 0.6 -0.4 5.3 -2.9 0.6zM193.6 76.6l3.3 0 -0.5 5.3 -3.2 0zM196.9 76.6l3 -0.3 0.1 6.3 -3.6 -0.7zM199.9 76.3l2.7 -1.3 -0.2 5.8 -2.4 1.8z" fill="#0080ff"/><path d="M202.6 75l2.7 -1.1 -0.2 5.7 -2.7 1.2zM205.3 73.9l3.5 0.6 0.1 6.6 -3.8 -1.5zM208.8 74.5l3.7 1.1 -0.8 4.4 -2.8 1.1zM212.5 75.6l2.6 -1.4 -0.4 5.3 -3 0.5zM215.1 74.2l2.2 -2.4 -0.2 5.8 -2.4 1.9zM217.3 71.8l2.6 -1.4 0.1 6.5 -2.9 0.7zM219.9 70.4l3.2 0 -1 4 -2.1 2.5z" fill="#00c0ff"/><path d="M223.1 70.4l2 -2.7 -1.2 3.4 -1.8 3.3zM225.1 67.7l2.4 -1.9 -1.3 3.4 -2.3 1.9z" fill="#00ffff"/><path d="M227.5 65.8l4.1 2.1 -2.5 0.6 -2.9 0.7z" fill="#00ffc0"/><path d="M231.6 67.9l5.5 5 -2.8 0 -5.2 -4.4z" fill="#00ffff"/><path d="M237.1 72.9l6 6.2 -3 -0.3 -5.8 -5.9z" fill="#00c0ff"/><path d="M243.1 79.1l6.7 7.9 -3.6 -1.8 -6.1 -6.4z" fill="#0080ff"/><path d="M249.8 87l7.3 9.2 -3.8 -2.1 -7.1 -8.9z" fill="#0000ff"/><path d="M257.1 96.2l-3.8 -2.1 2.7 6 1.4 -3.1z" fill="#000080"/><path d="M127.3 100.1l0.4 -6.2 -5.1 -5.3 3.3 14.6z" fill="#0000ff"/><path d="M127.7 93.9l-3.9 -16.2 -3.6 -1.8 2.4 12.7z" fill="#0080ff"/><path d="M123.8 77.7l-1.3 -10.1 -1.8 2.2 -0.5 6.1z" fill="#00ffff"/><path d="M122.5 67.6l2.3 -2 -0.7 4.5 -3.4 -0.3zM124.8 65.6l4.3 2.4 -1.6 2.7 -3.4 -0.6zM129.1 68l3.6 0.8 -0.9 4.2 -4.3 -2.3z" fill="#00ffc0"/><path d="M132.7 68.8l3.2 -0.1 -0.5 5.2 -3.6 -0.9zM135.9 68.7l3.9 1.7 -0.5 5 -3.9 -1.5zM139.8 70.4l3.7 1 -0.2 5.8 -4 -1.8zM143.5 71.4l3.8 1.3 -0.2 5.7 -3.8 -1.2z" fill="#00ffff"/><path d="M147.3 72.7l3.7 1 0 6.3 -3.9 -1.6zM151 73.7l4.1 2.2 -0.6 4.8 -3.5 -0.7zM155.1 75.9l3.4 0.2 -0.4 5.5 -3.6 -0.9zM158.5 76.1l3.6 0.9 -0.8 4.5 -3.2 0.1zM162.1 77l3.2 -0.1 0 6.3 -4 -1.7zM165.3 76.9l3.8 1.4 0.3 7 -4.1 -2.1z" fill="#00c0ff"/><path d="M169.1 78.3l4.1 1.9 -1 4.2 -2.8 0.9zM173.2 80.2l3.2 0 -0.2 5.9 -4 -1.7zM176.4 80.2l3.2 0 -0.4 5.5 -3 0.4zM179.6 80.2l3.5 0.6 -0.6 4.9 -3.3 0zM183.1 80.8l3.6 0.8 -0.7 4.8 -3.5 -0.7zM186.7 81.6l3.6 0.9 -0.5 5.3 -3.8 -1.4zM190.3 82.5l2.9 -0.6 -0.5 5 -2.9 0.9zM193.2 81.9l3.2 0 -0.9 4.1 -2.8 0.9zM196.4 81.9l3.6 0.7 -1.5 3 -3 0.4zM200 82.6l2.4 -1.8 -0.7 4.7 -3.2 0.1zM202.4 80.8l2.7 -1.2 -0.3 5.6 -3.1 0.3zM205.1 79.6l3.8 1.5 -0.9 4.1 -3.2 0zM208.9 81.1l2.8 -1.1 -0.6 4.9 -3.1 0.3zM211.7 80l3 -0.5 -0.9 4.3 -2.7 1.1z" fill="#0080ff"/><path d="M214.7 79.5l2.4 -1.9 -0.2 5.9 -3.1 0.3zM217.1 77.6l2.9 -0.7 0.3 7.1 -3.4 -0.5zM220 76.9l2.1 -2.5 0.4 7.2 -2.2 2.4z" fill="#00c0ff"/><path d="M222.1 74.4l1.8 -3.3 -0.2 6 -1.2 4.5zM223.9 71.1l2.3 -1.9 -1 4 -1.5 3.9z" fill="#00ffff"/><path d="M226.2 69.2l2.9 -0.7 -1.3 3.3 -2.6 1.4z" fill="#00ffc0"/><path d="M229.1 68.5l5.2 4.4 -2.4 0.9 -4.1 -2zM234.3 72.9l5.8 5.9 -2.8 -0.2 -5.4 -4.8z" fill="#00ffff"/><path d="M240.1 78.8l6.1 6.4 -3.6 -1.8 -5.3 -4.8z" fill="#0080ff"/><path d="M246.2 85.2l7.1 8.9 -3.8 -2.4 -6.9 -8.3z" fill="#0040ff"/><path d="M253.3 94.1l5.9 6 -1.4 3.1 -8.3 -11.5z" fill="#000080"/><path d="M259.2 100.1l-1.4 3.1 0 0 1.4 -3.1z" fill="#000080"/><path d="M125.9 103.2l-3.3 -14.6 -3.8 -2.4 4.4 17.3z" fill="#0000ff"/><path d="M122.6 88.6l-2.4 -12.7 -3.5 -1.6 2.1 11.9z" fill="#00c0ff"/><path d="M120.2 75.9l0.5 -6.1 -2.2 1.3 -1.8 3.2zM120.7 69.8l3.4 0.3 -1.8 2.3 -3.8 -1.3zM124.1 70.1l3.4 0.6 -1.1 3.8 -4.1 -2.1zM127.5 70.7l4.3 2.3 -1.2 3.6 -4.2 -2.1z" fill="#00ffc0"/><path d="M131.8 73l3.6 0.9 -1.4 3.2 -3.4 -0.5zM135.4 73.9l3.9 1.5 -1.3 3.4 -4 -1.7zM139.3 75.4l4 1.8 -1.7 2.5 -3.6 -0.9z" fill="#00ffff"/><path d="M143.3 77.2l3.8 1.2 -1.1 3.8 -4.4 -2.5zM147.1 78.4l3.9 1.6 -0.5 5.2 -4.5 -3zM151 80l3.5 0.7 -0.8 4.4 -3.2 0.1zM154.5 80.7l3.6 0.9 -1.3 3.2 -3.1 0.3zM158.1 81.6l3.2 -0.1 -1.4 3.1 -3.1 0.2zM161.3 81.5l4 1.7 -0.9 4.3 -4.5 -2.9z" fill="#00c0ff"/><path d="M165.3 83.2l4.1 2.1 -0.9 4.2 -4.1 -2zM169.4 85.3l2.8 -0.9 -0.7 4.6 -3 0.5zM172.2 84.4l4 1.7 -1.1 3.7 -3.6 -0.8zM176.2 86.1l3 -0.4 -0.3 5.5 -3.8 -1.4zM179.2 85.7l3.3 0 -0.6 5 -3 0.5zM182.5 85.7l3.5 0.7 -0.1 6 -4 -1.7z" fill="#0080ff"/><path d="M186 86.4l3.8 1.4 -0.3 5.5 -3.6 -0.9zM189.8 87.8l2.9 -0.9 0.5 7.5 -3.7 -1.1zM192.7 86.9l2.8 -0.9 -0.1 6.1 -2.2 2.3z" fill="#0040ff"/><path d="M195.5 86l3 -0.4 0.1 6.4 -3.2 0.1zM198.5 85.6l3.2 -0.1 0.2 6.6 -3.3 -0.1zM201.7 85.5l3.1 -0.3 -0.4 5.3 -2.5 1.6zM204.8 85.2l3.2 0 0 6.2 -3.6 -0.9zM208 85.2l3.1 -0.3 0 6.4 -3.1 0.1zM211.1 84.9l2.7 -1.1 -0.6 4.9 -2.1 2.6zM213.8 83.8l3.1 -0.3 -0.5 5.2 -3.2 0zM216.9 83.5l3.4 0.5 -1 4 -2.9 0.7zM220.3 84l2.2 -2.4 -0.6 4.8 -2.6 1.6z" fill="#0080ff"/><path d="M222.5 81.6l1.2 -4.5 0.3 7 -2.1 2.3z" fill="#00c0ff"/><path d="M223.7 77.1l1.5 -3.9 -0.6 5 -0.6 5.9zM225.2 73.2l2.6 -1.4 -0.6 4.9 -2.6 1.5zM227.8 71.8l4.1 2 -0.6 4.9 -4.1 -2zM231.9 73.8l5.4 4.8 -2.6 0.5 -3.4 -0.4z" fill="#00ffff"/><path d="M237.3 78.6l5.3 4.8 -2.8 0 -5.1 -4.3z" fill="#00c0ff"/><path d="M242.6 83.4l6.9 8.3 -3.1 -0.7 -6.6 -7.6z" fill="#0080ff"/><path d="M249.5 91.7l8.3 11.5 -3.4 -1.5 -8 -10.7z" fill="#0000ff"/><path d="M257.8 103.2l-3.4 -1.5 2.1 4.7 1.3 -3.2z" fill="#000080"/><path d="M123.2 103.5l-4.4 -17.3 -3.6 -1.7 3.9 16.1z" fill="#0040ff"/><path d="M118.8 86.2l-2.1 -11.9 -2.2 1.3 0.7 8.9z" fill="#00ffff"/><path d="M116.7 74.3l1.8 -3.2 -1.6 2.7 -2.4 1.8zM118.5 71.1l3.8 1.3 -1.3 3.3 -4.1 -1.9zM122.3 72.4l4.1 2.1 -1.2 3.4 -4.2 -2.2zM126.4 74.5l4.2 2.1 -1.3 3.3 -4.1 -2z" fill="#00ffc0"/><path d="M130.6 76.6l3.4 0.5 -1.7 2.4 -3 0.4zM134 77.1l4 1.7 -1.5 3 -4.2 -2.3zM138 78.8l3.6 0.9 -1 3.9 -4.1 -1.8z" fill="#00ffff"/><path d="M141.6 79.7l4.4 2.5 -1.3 3.5 -4.1 -2.1zM146 82.2l4.5 3 -1.3 3.3 -4.5 -2.8zM150.5 85.2l3.2 -0.1 -0.8 4.5 -3.7 -1.1zM153.7 85.1l3.1 -0.3 -1.3 3.5 -2.6 1.3zM156.8 84.8l3.1 -0.2 -1.4 3.1 -3 0.6zM159.9 84.6l4.5 2.9 -1.8 2.2 -4.1 -2z" fill="#00c0ff"/><path d="M164.4 87.5l4.1 2 -1.5 2.9 -4.4 -2.7zM168.5 89.5l3 -0.5 -1.1 3.8 -3.4 -0.4zM171.5 89l3.6 0.8 -1.3 3.3 -3.4 -0.3zM175.1 89.8l3.8 1.4 -0.9 4.2 -4.2 -2.3z" fill="#0080ff"/><path d="M178.9 91.2l3 -0.5 -0.2 5.9 -3.7 -1.2zM181.9 90.7l4 1.7 -0.7 4.6 -3.5 -0.4zM185.9 92.4l3.6 0.9 -1.1 3.7 -3.2 0zM189.5 93.3l3.7 1.1 -1.1 3.8 -3.7 -1.2zM193.2 94.4l2.2 -2.3 -0.7 4.6 -2.6 1.5zM195.4 92.1l3.2 -0.1 -0.9 4.3 -3 0.4zM198.6 92l3.3 0.1 -0.5 5.4 -3.7 -1.2zM201.9 92.1l2.5 -1.6 -0.3 5.6 -2.7 1.4zM204.4 90.5l3.6 0.9 -0.5 5.3 -3.4 -0.6zM208 91.4l3.1 -0.1 -0.6 4.7 -3 0.7z" fill="#0040ff"/><path d="M211.1 91.3l2.1 -2.6 -0.7 4.8 -2 2.5zM213.2 88.7l3.2 0 -1.2 3.6 -2.7 1.2zM216.4 88.7l2.9 -0.7 -1.6 2.6 -2.5 1.7zM219.3 88l2.6 -1.6 -1.3 3.5 -2.9 0.7z" fill="#0080ff"/><path d="M221.9 86.4l2.1 -2.3 -0.8 4.4 -2.6 1.4zM224 84.1l0.6 -5.9 0.3 6.8 -1.7 3.5z" fill="#00c0ff"/><path d="M224.6 78.2l2.6 -1.5 -0.4 5.4 -1.9 2.9zM227.2 76.7l4.1 2 -0.7 4.7 -3.8 -1.3zM231.3 78.7l3.4 0.4 -1 4.1 -3.1 0.2z" fill="#00ffff"/><path d="M234.7 79.1l5.1 4.3 -2.1 1.5 -4 -1.7zM239.8 83.4l6.6 7.6 -3 -0.5 -5.7 -5.6z" fill="#00c0ff"/><path d="M246.4 91l8 10.7 -3.3 -1.1 -7.7 -10.1z" fill="#0040ff"/><path d="M254.4 101.7l-3.3 -1.1 4 8.9 1.4 -3.1z" fill="#000080"/><path d="M119.9 109.5l-0.8 -8.9 -3.8 -2.3 3.2 14.4z" fill="#0000ff"/><path d="M119.1 100.6l-3.9 -16.1 -2.4 0.8 2.5 13z" fill="#0080ff"/><path d="M115.2 84.5l-0.7 -8.9 -1.2 3.7 -0.5 6z" fill="#00ffff"/><path d="M114.5 75.6l2.4 -1.8 -1.1 3.8 -2.5 1.7zM116.9 73.8l4.1 1.9 -1.1 3.9 -4.1 -2zM121 75.7l4.2 2.2 -0.7 4.8 -4.6 -3.1z" fill="#00ffc0"/><path d="M125.2 77.9l4.1 2 -0.9 4.2 -3.9 -1.4zM129.3 79.9l3 -0.4 -1.2 3.6 -2.7 1zM132.3 79.5l4.2 2.3 -0.6 4.9 -4.8 -3.6zM136.5 81.8l4.1 1.8 -0.6 5 -4.1 -1.9z" fill="#00ffff"/><path d="M140.6 83.6l4.1 2.1 -1 4.1 -3.7 -1.2zM144.7 85.7l4.5 2.8 -1.6 2.7 -3.9 -1.4zM149.2 88.5l3.7 1.1 -1.9 2.1 -3.4 -0.5z" fill="#00c0ff"/><path d="M152.9 89.6l2.6 -1.3 -0.6 4.7 -3.9 -1.3z" fill="#0080ff"/><path d="M155.5 88.3l3 -0.6 -0.7 4.8 -2.9 0.5z" fill="#00c0ff"/><path d="M158.5 87.7l4.1 2 -1.2 3.5 -3.6 -0.7zM162.6 89.7l4.4 2.7 -0.8 4.5 -4.8 -3.7zM167 92.4l3.4 0.4 -0.8 4.5 -3.4 -0.4zM170.4 92.8l3.4 0.3 -0.6 5.1 -3.6 -0.9z" fill="#0080ff"/><path d="M173.8 93.1l4.2 2.3 -1.3 3.4 -3.5 -0.6zM178 95.4l3.7 1.2 -1.6 2.6 -3.4 -0.4zM181.7 96.6l3.5 0.4 -1.3 3.4 -3.8 -1.2zM185.2 97l3.2 0 -1.2 3.7 -3.3 -0.3zM188.4 97l3.7 1.2 -1.1 3.7 -3.8 -1.2zM192.1 98.2l2.6 -1.5 -0.5 5.3 -3.2 -0.1zM194.7 96.7l3 -0.4 -0.8 4.4 -2.7 1.3zM197.7 96.3l3.7 1.2 -1 4 -3.5 -0.8zM201.4 97.5l2.7 -1.4 -0.7 4.8 -3 0.6zM204.1 96.1l3.4 0.6 -0.6 4.8 -3.5 -0.6zM207.5 96.7l3 -0.7 -0.8 4.6 -2.8 0.9zM210.5 96l2 -2.5 -0.7 4.5 -2.1 2.6z" fill="#0040ff"/><path d="M212.5 93.5l2.7 -1.2 -0.7 4.7 -2.7 1zM215.2 92.3l2.5 -1.7 -1.1 3.7 -2.1 2.7zM217.7 90.6l2.9 -0.7 -0.9 4.1 -3.1 0.3zM220.6 89.9l2.6 -1.4 -0.9 4.1 -2.6 1.4z" fill="#0080ff"/><path d="M223.2 88.5l1.7 -3.5 0.3 7.1 -2.9 0.5zM224.9 85l1.9 -2.9 0.5 7.3 -2.1 2.7zM226.8 82.1l3.8 1.3 -0.4 5.3 -2.9 0.7zM230.6 83.4l3.1 -0.2 -1 3.9 -2.5 1.6z" fill="#00c0ff"/><path d="M233.7 83.2l4 1.7 -2.6 0.4 -2.4 1.8z" fill="#00ffff"/><path d="M237.7 84.9l5.7 5.6 -2.7 0.2 -5.6 -5.4z" fill="#00c0ff"/><path d="M243.4 90.5l7.7 10.1 -2.7 0.2 -7.7 -10.1z" fill="#0080ff"/><path d="M251.1 100.6l7.2 8.9 -1.6 2.8 -8.3 -11.5z" fill="#0000ff"/><path d="M258.3 109.5l-1.6 2.8 0.2 0.4 1.4 -3.2z" fill="#000080"/><path d="M118.5 112.7l-3.2 -14.4 -2.7 0 4.2 16.9z" fill="#0000ff"/><path d="M115.3 98.3l-2.5 -13 -2.4 0.9 2.2 12.1z" fill="#00c0ff"/><path d="M112.8 85.3l0.5 -6 -1.7 2.3 -1.2 4.6zM113.3 79.3l2.5 -1.7 -0.4 5.3 -3.8 -1.3zM115.8 77.6l4.1 2 -1.1 3.8 -3.4 -0.5zM119.9 79.6l4.6 3.1 -0.8 4.5 -4.9 -3.8z" fill="#00ffc0"/><path d="M124.5 82.7l3.9 1.4 -1.3 3.5 -3.4 -0.4zM128.4 84.1l2.7 -1 -0.8 4.4 -3.2 0.1zM131.1 83.1l4.8 3.6 -1.9 1.9 -3.7 -1.1z" fill="#00ffff"/><path d="M135.9 86.7l4.1 1.9 -1.4 3.1 -4.6 -3.1zM140 88.6l3.7 1.2 -1.2 3.5 -3.9 -1.6zM143.7 89.8l3.9 1.4 -1.3 3.4 -3.8 -1.3zM147.6 91.2l3.4 0.5 -1.3 3.2 -3.4 -0.3z" fill="#00c0ff"/><path d="M151 91.7l3.9 1.3 -1.3 3.5 -3.9 -1.6zM154.9 93l2.9 -0.5 -0.3 5.5 -3.9 -1.5zM157.8 92.5l3.6 0.7 -0.3 5.7 -3.6 -0.9zM161.4 93.2l4.8 3.7 -1.2 3.6 -3.9 -1.6zM166.2 96.9l3.4 0.4 -1.2 3.6 -3.4 -0.4z" fill="#0080ff"/><path d="M169.6 97.3l3.6 0.9 -1.1 3.7 -3.7 -1zM173.2 98.2l3.5 0.6 -1.2 3.6 -3.4 -0.5zM176.7 98.8l3.4 0.4 -1.6 2.6 -3 0.6zM180.1 99.2l3.8 1.2 -2.3 1.1 -3.1 0.3zM183.9 100.4l3.3 0.3 -2 1.7 -3.6 -0.9zM187.2 100.7l3.8 1.2 -1.8 2.4 -4 -1.9zM191 101.9l3.2 0.1 -1.2 3.5 -3.8 -1.2zM194.2 102l2.7 -1.3 -1.2 3.6 -2.7 1.2zM196.9 100.7l3.5 0.8 -0.9 4.2 -3.8 -1.4zM200.4 101.5l3 -0.6 -1.1 3.9 -2.8 0.9zM203.4 100.9l3.5 0.6 -1.8 2.2 -2.8 1.1zM206.9 101.5l2.8 -0.9 -1.6 2.6 -3 0.5zM209.7 100.6l2.1 -2.6 -1 4.1 -2.7 1.1zM211.8 98l2.7 -1 -1.3 3.2 -2.4 1.9z" fill="#0040ff"/><path d="M214.5 97l2.1 -2.7 -0.8 4.6 -2.6 1.3zM216.6 94.3l3.1 -0.3 -0.9 4.3 -3 0.6zM219.7 94l2.6 -1.4 -1.2 3.7 -2.3 2zM222.3 92.6l2.9 -0.5 -1.3 3.3 -2.8 0.9z" fill="#0080ff"/><path d="M225.2 92.1l2.1 -2.7 -0.6 5 -2.8 1zM227.3 89.4l2.9 -0.7 -1.2 3.6 -2.3 2.1zM230.2 88.7l2.5 -1.6 -1.3 3.4 -2.4 1.8z" fill="#00c0ff"/><path d="M232.7 87.1l2.4 -1.8 -1.9 2 -1.8 3.2zM235.1 85.3l5.6 5.4 -2.5 0.6 -5 -4z" fill="#00ffff"/><path d="M240.7 90.7l7.7 10.1 -2.8 0 -7.4 -9.5z" fill="#0080ff"/><path d="M248.4 100.8l8.3 11.5 -2.2 1.2 -8.9 -12.7z" fill="#0000ff"/><path d="M256.7 112.3l-2.2 1.2 1 2.3 1.4 -3.1z" fill="#000080"/><path d="M116.8 115.2l-4.2 -16.9 -2.7 0.3 4.8 18z" fill="#0000ff"/><path d="M112.6 98.3l-2.2 -12.1 -1.8 2.3 1.3 10.1z" fill="#00c0ff"/><path d="M110.4 86.2l1.2 -4.6 -1.5 3 -1.5 3.9zM111.6 81.6l3.8 1.3 -2 1.8 -3.3 -0.1zM115.4 82.9l3.4 0.5 -1.7 2.3 -3.7 -1zM118.8 83.4l4.9 3.8 -2.4 0.8 -4.2 -2.3z" fill="#00ffc0"/><path d="M123.7 87.2l3.4 0.4 -1.8 2.2 -4 -1.8zM127.1 87.6l3.2 -0.1 -1 4 -4 -1.7zM130.3 87.5l3.7 1.1 -0.7 4.7 -4 -1.8z" fill="#00ffff"/><path d="M134 88.6l4.6 3.1 -1.7 2.5 -3.6 -0.9zM138.6 91.7l3.9 1.6 -1.5 2.8 -4.1 -1.9zM142.5 93.3l3.8 1.3 -2 1.8 -3.3 -0.3zM146.3 94.6l3.4 0.3 -1.5 2.9 -3.9 -1.4z" fill="#00c0ff"/><path d="M149.7 94.9l3.9 1.6 -1.2 3.6 -4.2 -2.3zM153.6 96.5l3.9 1.5 -1.2 3.7 -3.9 -1.6zM157.5 98l3.6 0.9 -1 4.1 -3.8 -1.3zM161.1 98.9l3.9 1.6 -1.2 3.6 -3.7 -1.1z" fill="#0080ff"/><path d="M165 100.5l3.4 0.4 -0.8 4.4 -3.8 -1.2zM168.4 100.9l3.7 1 -0.8 4.5 -3.7 -1.1zM172.1 101.9l3.4 0.5 -1.2 3.6 -3 0.4zM175.5 102.4l3 -0.6 -1.1 3.8 -3.1 0.4zM178.5 101.8l3.1 -0.3 -0.6 5 -3.6 -0.9zM181.6 101.5l3.6 0.9 -0.7 4.6 -3.5 -0.5zM185.2 102.4l4 1.9 -0.9 4.1 -3.8 -1.4zM189.2 104.3l3.8 1.2 -1.6 2.8 -3.1 0.1zM193 105.5l2.7 -1.2 -1.6 2.6 -2.7 1.4zM195.7 104.3l3.8 1.4 -2.1 1.5 -3.3 -0.3zM199.5 105.7l2.8 -0.9 -2.1 1.6 -2.8 0.8zM202.3 104.8l2.8 -1.1 -1.8 2.2 -3.1 0.5zM205.1 103.7l3 -0.5 -1.7 2.5 -3.1 0.2zM208.1 103.2l2.7 -1.1 -1.2 3.7 -3.2 -0.1zM210.8 102.1l2.4 -1.9 -1.4 3.1 -2.2 2.5z" fill="#0040ff"/><path d="M213.2 100.2l2.6 -1.3 -1.5 2.9 -2.5 1.5zM215.8 98.9l3 -0.6 -1.5 2.9 -3 0.6zM218.8 98.3l2.3 -2 -1 4 -2.8 0.9zM221.1 96.3l2.8 -0.9 -1.2 3.6 -2.6 1.3z" fill="#0080ff"/><path d="M223.9 95.4l2.8 -1 -2.1 1.4 -1.9 3.2zM226.7 94.4l2.3 -2.1 -1.8 2.3 -2.6 1.2zM229 92.3l2.4 -1.8 -2.1 1.6 -2.1 2.5z" fill="#00c0ff"/><path d="M231.4 90.5l1.8 -3.2 -1.4 3 -2.5 1.8zM233.2 87.3l5 4 -2.4 0.9 -4 -1.9z" fill="#00ffff"/><path d="M238.2 91.3l7.4 9.5 -2.4 0.8 -7.4 -9.4z" fill="#00c0ff"/><path d="M245.6 100.8l8.9 12.7 -2.6 0.5 -8.7 -12.4z" fill="#0000ff"/><path d="M254.5 113.5l-2.6 0.5 2.2 5 1.4 -3.2z" fill="#000080"/><path d="M114.7 116.6l-4.8 -18 -2 1.7 4.1 16.6z" fill="#0040ff"/><path d="M109.9 98.6l-1.3 -10.1 -2.3 1.1 1.6 10.7z" fill="#00ffff"/><path d="M108.6 88.5l1.5 -3.9 -1.7 2.3 -2.1 2.7zM110.1 84.6l3.3 0.1 -1.6 2.6 -3.4 -0.4zM113.4 84.7l3.7 1 -1.5 3 -3.8 -1.4zM117.1 85.7l4.2 2.3 -1.5 3 -4.2 -2.3z" fill="#00ffc0"/><path d="M121.3 88l4 1.8 -1.4 3 -4.1 -1.8zM125.3 89.8l4 1.7 -1.9 2.1 -3.5 -0.8zM129.3 91.5l4 1.8 -1.7 2.4 -4.2 -2.1z" fill="#00ffff"/><path d="M133.3 93.3l3.6 0.9 -1.3 3.3 -4 -1.8zM136.9 94.2l4.1 1.9 -1.9 1.9 -3.5 -0.5zM141 96.1l3.3 0.3 -1.3 3.3 -3.9 -1.7zM144.3 96.4l3.9 1.4 -0.8 4.4 -4.4 -2.5z" fill="#00c0ff"/><path d="M148.2 97.8l4.2 2.3 -0.2 5.8 -4.8 -3.7zM152.4 100.1l3.9 1.6 -1.1 3.8 -3 0.4zM156.3 101.7l3.8 1.3 -1.3 3.3 -3.6 -0.8z" fill="#0080ff"/><path d="M160.1 103l3.7 1.1 -1 3.9 -4 -1.7zM163.8 104.1l3.8 1.2 -1.6 2.7 -3.2 0zM167.6 105.3l3.7 1.1 -1.2 3.7 -4.1 -2.1zM171.3 106.4l3 -0.4 -0.9 4.2 -3.3 -0.1zM174.3 106l3.1 -0.4 -0.5 5.2 -3.5 -0.6zM177.4 105.6l3.6 0.9 -1.1 3.8 -3 0.5zM181 106.5l3.5 0.5 -1.6 2.9 -3 0.4zM184.5 107l3.8 1.4 -1.4 3.1 -4 -1.6zM188.3 108.4l3.1 -0.1 -1.8 2.2 -2.7 1zM191.4 108.3l2.7 -1.4 -0.6 5.1 -3.9 -1.5zM194.1 106.9l3.3 0.3 -1.5 2.9 -2.4 1.9zM197.4 107.2l2.8 -0.8 -1.8 2.1 -2.5 1.6zM200.2 106.4l3.1 -0.5 -1.8 2.3 -3.1 0.3zM203.3 105.9l3.1 -0.2 -1.2 3.7 -3.7 -1.2zM206.4 105.7l3.2 0.1 -1.6 2.4 -2.8 1.2zM209.6 105.8l2.2 -2.5 -1 4.1 -2.8 0.8z" fill="#0040ff"/><path d="M211.8 103.3l2.5 -1.5 -1.1 3.7 -2.4 1.9zM214.3 101.8l3 -0.6 -1.4 3.1 -2.7 1.2zM217.3 101.2l2.8 -0.9 -2.5 0.7 -1.7 3.3z" fill="#0080ff"/><path d="M220.1 100.3l2.6 -1.3 -2.4 0.9 -2.7 1.1zM222.7 99l1.9 -3.2 -1.5 3.1 -2.8 1zM224.6 95.8l2.6 -1.2 -2.1 1.5 -2 2.8z" fill="#00c0ff"/><path d="M227.2 94.6l2.1 -2.5 -2.5 0.6 -1.7 3.4zM229.3 92.1l2.5 -1.8 -1.9 2 -3.1 0.4zM231.8 90.3l4 1.9 -1.4 3.2 -4.5 -3.1z" fill="#00ffff"/><path d="M235.8 92.2l7.4 9.4 -2.3 1 -6.5 -7.2z" fill="#00c0ff"/><path d="M243.2 101.6l8.7 12.4 -2.2 1.3 -8.8 -12.7z" fill="#0040ff"/><path d="M251.9 114l-2.2 1.3 3 6.8 1.4 -3.1z" fill="#000080"/><path d="M112 116.9l-4.1 -16.6 -2.1 1.5 4.1 16.7z" fill="#0040ff"/><path d="M107.9 100.3l-1.6 -10.7 -2.1 1.4 1.6 10.8z" fill="#00ffff"/><path d="M106.3 89.6l2.1 -2.7 -1.4 3.2 -2.8 0.9zM108.4 86.9l3.4 0.4 -1.1 3.9 -3.7 -1.1zM111.8 87.3l3.8 1.4 -0.4 5.4 -4.5 -2.9zM115.6 88.7l4.2 2.3 -1.3 3.2 -3.3 -0.1z" fill="#00ffc0"/><path d="M119.8 91l4.1 1.8 -1.3 3.4 -4.1 -2zM123.9 92.8l3.5 0.8 -0.6 4.8 -4.2 -2.2zM127.4 93.6l4.2 2.1 -1.4 3.2 -3.4 -0.5zM131.6 95.7l4 1.8 -1.6 2.6 -3.8 -1.2z" fill="#00ffff"/><path d="M135.6 97.5l3.5 0.5 -1.2 3.8 -3.9 -1.7zM139.1 98l3.9 1.7 -1.2 3.4 -3.9 -1.3zM143 99.7l4.4 2.5 -1.3 3.6 -4.3 -2.7z" fill="#00c0ff"/><path d="M147.4 102.2l4.8 3.7 -1.6 2.6 -4.5 -2.7zM152.2 105.9l3 -0.4 -1.5 2.8 -3.1 0.2zM155.2 105.5l3.6 0.8 -1.6 2.6 -3.5 -0.6z" fill="#0080ff"/><path d="M158.8 106.3l4 1.7 -1.7 2.6 -3.9 -1.7zM162.8 108l3.2 0 -1.3 3.3 -3.6 -0.7zM166 108l4.1 2.1 -1.3 3.3 -4.1 -2.1zM170.1 110.1l3.3 0.1 -1 3.9 -3.6 -0.7zM173.4 110.2l3.5 0.6 -1.2 3.5 -3.3 -0.2zM176.9 110.8l3 -0.5 -1.3 3.3 -2.9 0.7zM179.9 110.3l3 -0.4 -1.2 3.5 -3.1 0.2zM182.9 109.9l4 1.6 -1.6 2.8 -3.6 -0.9zM186.9 111.5l2.7 -1 -1.2 3.4 -3.1 0.4zM189.6 110.5l3.9 1.5 -1.4 3.1 -3.7 -1.2zM193.5 112l2.4 -1.9 -1.7 2.4 -2.1 2.6zM195.9 110.1l2.5 -1.6 -1.2 3.6 -3 0.4zM198.4 108.5l3.1 -0.3 -1.1 3.9 -3.2 0zM201.5 108.2l3.7 1.2 -1 3.8 -3.8 -1.1zM205.2 109.4l2.8 -1.2 -1.3 3.4 -2.5 1.6zM208 108.2l2.8 -0.8 -1 4 -3.1 0.2zM210.8 107.4l2.4 -1.9 -1.1 3.9 -2.3 2z" fill="#0040ff"/><path d="M213.2 105.5l2.7 -1.2 -1.3 3.5 -2.5 1.6zM215.9 104.3l1.7 -3.3 -0.7 4.7 -2.3 2.1z" fill="#0080ff"/><path d="M217.6 101l2.7 -1.1 -1.7 2.3 -1.7 3.5zM220.3 99.9l2.8 -1 -2 1.6 -2.5 1.7zM223.1 98.9l2 -2.8 -1.8 2.1 -2.2 2.3z" fill="#00c0ff"/><path d="M225.1 96.1l1.7 -3.4 -2 1.7 -1.5 3.8zM226.8 92.7l3.1 -0.4 -2.3 1.3 -2.8 0.8zM229.9 92.3l4.5 3.1 -1.5 2.8 -5.3 -4.6z" fill="#00ffff"/><path d="M234.4 95.4l6.5 7.2 -1.6 2.7 -6.4 -7.1z" fill="#00c0ff"/><path d="M240.9 102.6l8.8 12.7 -2 1.7 -8.4 -11.7z" fill="#0040ff"/><path d="M249.7 115.3l-2 1.7 3.6 8.2 1.4 -3.1z" fill="#000080"/><path d="M109.9 118.5l-4.1 -16.7 -1.5 3.1 4.3 16.8z" fill="#0040ff"/><path d="M105.8 101.8l-1.6 -10.8 -0.7 4.7 0.8 9.2z" fill="#00ffff"/><path d="M104.2 91l2.8 -0.9 -0.9 4.1 -2.6 1.5zM107 90.1l3.7 1.1 -1.2 3.5 -3.4 -0.5zM110.7 91.2l4.5 2.9 -2.3 1 -3.4 -0.4zM115.2 94.1l3.3 0.1 -1.2 3.6 -4.4 -2.7z" fill="#00ffc0"/><path d="M118.5 94.2l4.1 2 -0.9 4.3 -4.4 -2.7zM122.6 96.2l4.2 2.2 -1.5 2.9 -3.6 -0.8zM126.8 98.4l3.4 0.5 -0.7 4.6 -4.2 -2.2z" fill="#00ffff"/><path d="M130.2 98.9l3.8 1.2 -1 4.1 -3.5 -0.7zM134 100.1l3.9 1.7 -1.5 2.9 -3.4 -0.5zM137.9 101.8l3.9 1.3 -0.8 4.5 -4.6 -2.9z" fill="#00c0ff"/><path d="M141.8 103.1l4.3 2.7 -1 3.9 -4.1 -2.1zM146.1 105.8l4.5 2.7 -1.8 2.2 -3.7 -1zM150.6 108.5l3.1 -0.2 -1.6 2.7 -3.3 -0.3zM153.7 108.3l3.5 0.6 -1.9 2 -3.2 0.1zM157.2 108.9l3.9 1.7 -2.1 1.4 -3.7 -1.1z" fill="#0080ff"/><path d="M161.1 110.6l3.6 0.7 -1.7 2.4 -4 -1.7zM164.7 111.3l4.1 2.1 -2 1.6 -3.8 -1.3zM168.8 113.4l3.6 0.7 -1.2 3.6 -4.4 -2.7zM172.4 114.1l3.3 0.2 -1.5 3.1 -3 0.3zM175.7 114.3l2.9 -0.7 -1.2 3.5 -3.2 0.3zM178.6 113.6l3.1 -0.2 -1.1 3.7 -3.2 0zM181.7 113.4l3.6 0.9 -2.2 1.4 -2.5 1.4zM185.3 114.3l3.1 -0.4 -1.5 3 -3.8 -1.2zM188.4 113.9l3.7 1.2 -2.1 1.5 -3.1 0.3zM192.1 115.1l2.1 -2.6 -1.3 3.4 -2.9 0.7zM194.2 112.5l3 -0.4 -1.9 2 -2.4 1.8zM197.2 112.1l3.2 0 -1.6 2.6 -3.5 -0.6zM200.4 112.1l3.8 1.1 -2 2 -3.4 -0.5zM204.2 113.2l2.5 -1.6 -1.4 3.1 -3.1 0.5zM206.7 111.6l3.1 -0.2 -1.8 2.3 -2.7 1zM209.8 111.4l2.3 -2 -1.8 2 -2.3 2.3z" fill="#0040ff"/><path d="M212.1 109.4l2.5 -1.6 -1.6 2.6 -2.7 1zM214.6 107.8l2.3 -2.1 -1.1 3.7 -2.8 1z" fill="#0080ff"/><path d="M216.9 105.7l1.7 -3.5 -0.8 4.4 -2 2.8zM218.6 102.2l2.5 -1.7 -1.1 3.8 -2.2 2.3zM221.1 100.5l2.2 -2.3 -1 4.1 -2.3 2z" fill="#00c0ff"/><path d="M223.3 98.2l1.5 -3.8 -0.5 5.2 -2 2.7z" fill="#00ffff"/><path d="M224.8 94.4l2.8 -0.8 -1.5 2.7 -1.8 3.3z" fill="#00ffc0"/><path d="M227.6 93.6l5.3 4.6 -2.4 0.7 -4.4 -2.6z" fill="#00ffff"/><path d="M232.9 98.2l6.4 7.1 -1.8 2.2 -7 -8.6z" fill="#00c0ff"/><path d="M239.3 105.3l8.4 11.7 -1.5 3 -8.7 -12.5z" fill="#0040ff"/><path d="M247.7 117l6.9 8.2 -1.4 3.2 -7 -8.4z" fill="#000080"/><path d="M254.6 125.2l-1.4 3.2 0 0 1.4 -3.2z" fill="#000080"/><path d="M108.6 121.7l-4.3 -16.8 -0.7 4.5 3.9 16.2z" fill="#0040ff"/><path d="M104.3 104.9l-0.8 -9.2 -1 4.1 1.1 9.6z" fill="#00ffff"/><path d="M103.5 95.7l2.6 -1.5 -1.5 2.9 -2.1 2.7zM106.1 94.2l3.4 0.5 -1.2 3.6 -3.7 -1.2zM109.5 94.7l3.4 0.4 -1.2 3.7 -3.4 -0.5zM112.9 95.1l4.4 2.7 -1.2 3.7 -4.4 -2.7z" fill="#00ffc0"/><path d="M117.3 97.8l4.4 2.7 -1.1 3.9 -4.5 -2.9zM121.7 100.5l3.6 0.8 -1.6 2.8 -3.1 0.3zM125.3 101.3l4.2 2.2 -2.4 1 -3.4 -0.4z" fill="#00ffff"/><path d="M129.5 103.5l3.5 0.7 -1.7 2.4 -4.2 -2.1zM133 104.2l3.4 0.5 -1.2 3.4 -3.9 -1.5zM136.4 104.7l4.6 2.9 -1.8 2.4 -4 -1.9z" fill="#00c0ff"/><path d="M141 107.6l4.1 2.1 -1.7 2.4 -4.2 -2.1zM145.1 109.7l3.7 1 -1.2 3.7 -4.2 -2.3zM148.8 110.7l3.3 0.3 -1 3.9 -3.5 -0.5zM152.1 111l3.2 -0.1 -1.9 2.1 -2.3 1.9zM155.3 110.9l3.7 1.1 -1.1 3.9 -4.5 -2.9z" fill="#0080ff"/><path d="M159 112l4 1.7 -1.1 3.9 -4 -1.7zM163 113.7l3.8 1.3 -1.4 3.1 -3.5 -0.5zM166.8 115l4.4 2.7 -1.5 3 -4.3 -2.6zM171.2 117.7l3 -0.3 -1.8 2 -2.7 1.3zM174.2 117.4l3.2 -0.3 -1.9 2.2 -3.1 0.1zM177.4 117.1l3.2 0 -1.4 3.3 -3.7 -1.1zM180.6 117.1l2.5 -1.4 -0.9 4.1 -3 0.6zM183.1 115.7l3.8 1.2 -2 1.8 -2.7 1.1zM186.9 116.9l3.1 -0.3 -1.8 2.3 -3.3 -0.2zM190 116.6l2.9 -0.7 -2.8 -0.1 -1.9 3.1zM192.9 115.9l2.4 -1.8 -2.1 1.4 -3.1 0.3zM195.3 114.1l3.5 0.6 -1.9 1.9 -3.7 -1.1zM198.8 114.7l3.4 0.5 -2.3 1 -3 0.4zM202.2 115.2l3.1 -0.5 -2.2 1.5 -3.2 0zM205.3 114.7l2.7 -1 -1.8 2.1 -3.1 0.4z" fill="#0040ff"/><path d="M208 113.7l2.3 -2.3 -1.2 3.6 -2.9 0.8zM210.3 111.4l2.7 -1 -1.9 2 -2 2.6zM213 110.4l2.8 -1 -1.8 2.4 -2.9 0.6z" fill="#0080ff"/><path d="M215.8 109.4l2 -2.8 -2.1 1.7 -1.7 3.5zM217.8 106.6l2.2 -2.3 -1.7 2.6 -2.6 1.4zM220 104.3l2.3 -2 -1.7 2.5 -2.3 2.1z" fill="#00c0ff"/><path d="M222.3 102.3l2 -2.7 -1.4 3.1 -2.3 2.1zM224.3 99.6l1.8 -3.3 -0.9 4.4 -2.3 2zM226.1 96.3l4.4 2.6 -1.4 3.3 -3.9 -1.5z" fill="#00ffff"/><path d="M230.5 98.9l7 8.6 -1.3 3.3 -7.1 -8.6z" fill="#00c0ff"/><path d="M237.5 107.5l8.7 12.5 -1.2 3.4 -8.8 -12.6z" fill="#0040ff"/><path d="M246.2 120l7 8.4 -1.4 3.1 -6.8 -8.1z" fill="#000080"/><path d="M253.2 128.4l-1.4 3.1 0 0 1.4 -3.1zM245 123.4l6.8 8.1 0 0 -3.2 0z" fill="#000080"/><path d="M107.5 125.6l-3.9 -16.2 -1 4.1 4 16.3z" fill="#0040ff"/><path d="M103.6 109.4l-1.1 -9.6 -1.4 3 1.5 10.7z" fill="#00ffff"/><path d="M102.5 99.8l2.1 -2.7 -1.8 2.3 -1.7 3.4zM104.6 97.1l3.7 1.2 -2 1.7 -3.5 -0.6zM108.3 98.3l3.4 0.5 -0.9 4.2 -4.5 -3zM111.7 98.8l4.4 2.7 -1.1 3.7 -4.2 -2.2z" fill="#00ffc0"/><path d="M116.1 101.5l4.5 2.9 -2.6 0.2 -3 0.6zM120.6 104.4l3.1 -0.3 -2 1.8 -3.7 -1.3zM123.7 104.1l3.4 0.4 -2.2 1.1 -3.2 0.3zM127.1 104.5l4.2 2.1 -1.6 2.7 -4.8 -3.7z" fill="#00ffff"/><path d="M131.3 106.6l3.9 1.5 -1.6 2.7 -3.9 -1.5zM135.2 108.1l4 1.9 -1.5 2.8 -4.1 -2zM139.2 110l4.2 2.1 -1.4 3.2 -4.3 -2.5z" fill="#00c0ff"/><path d="M143.4 112.1l4.2 2.3 -1.5 2.9 -4.1 -2zM147.6 114.4l3.5 0.5 -1.6 2.7 -3.4 -0.3zM151.1 114.9l2.3 -1.9 -1.2 3.5 -2.7 1.1zM153.4 113l4.5 2.9 -1.6 2.7 -4.1 -2.1z" fill="#0080ff"/><path d="M157.9 115.9l4 1.7 -2 1.7 -3.6 -0.7zM161.9 117.6l3.5 0.5 -2 1.9 -3.5 -0.7zM165.4 118.1l4.3 2.6 -2.3 1.1 -4 -1.8zM169.7 120.7l2.7 -1.3 -1.8 2.3 -3.2 0.1zM172.4 119.4l3.1 -0.1 -1.3 3.3 -3.6 -0.9zM175.5 119.3l3.7 1.1 -1.7 2.4 -3.3 -0.2zM179.2 120.4l3 -0.6 -1.4 3.1 -3.3 -0.1zM182.2 119.8l2.7 -1.1 -1.5 2.9 -2.6 1.3zM184.9 118.7l3.3 0.2 -2 1.8 -2.8 0.9zM188.2 118.9l1.9 -3.1 -1.5 3 -2.4 1.9z" fill="#0040ff"/><path d="M190.1 115.8l3.1 -0.3 -1.5 3 -3.1 0.3zM193.2 115.5l3.7 1.1 -1.7 2.6 -3.5 -0.7zM196.9 116.6l3 -0.4 -2.3 1.1 -2.4 1.9zM199.9 116.2l3.2 0 -2.7 0.1 -2.8 1zM203.1 116.2l3.1 -0.4 -2.2 1.3 -3.6 -0.8zM206.2 115.8l2.9 -0.8 -2.5 0.7 -2.6 1.4zM209.1 115l2 -2.6 -2.1 1.6 -2.4 1.7z" fill="#0080ff"/><path d="M211.1 112.4l2.9 -0.6 -3 -0.6 -2 2.8zM214 111.8l1.7 -3.5 -1.7 2.4 -3 0.5zM215.7 108.3l2.6 -1.4 -1.2 3.4 -3.1 0.4zM218.3 106.9l2.3 -2.1 -1.2 3.5 -2.3 2z" fill="#00c0ff"/><path d="M220.6 104.8l2.3 -2.1 -1 4 -2.5 1.6zM222.9 102.7l2.3 -2 -0.7 4.7 -2.6 1.3zM225.2 100.7l3.9 1.5 -0.7 4.6 -3.9 -1.4z" fill="#00ffff"/><path d="M229.1 102.2l7.1 8.6 -1.2 3.8 -6.6 -7.8z" fill="#00c0ff"/><path d="M236.2 110.8l8.8 12.6 -1 4.2 -9 -13z" fill="#0040ff"/><path d="M245 123.4l-1 4.2 3.2 7.1 1.4 -3.2z" fill="#000080"/><path d="M106.6 129.8l-4 -16.3 -0.4 5.4 4.2 16.7z" fill="#0040ff"/><path d="M102.6 113.5l-1.5 -10.7 -0.8 4.6 1.9 11.5z" fill="#00ffff"/><path d="M101.1 102.8l1.7 -3.4 -1.4 3.1 -1.1 4.9zM102.8 99.4l3.5 0.6 -1.3 3.5 -3.6 -1zM106.3 100l4.5 3 -1.8 2.1 -4 -1.6zM110.8 103l4.2 2.2 -2.1 1.6 -3.9 -1.7z" fill="#00ffc0"/><path d="M115 105.2l3 -0.6 -1.6 2.8 -3.5 -0.6zM118 104.6l3.7 1.3 -1.5 2.8 -3.8 -1.3zM121.7 105.9l3.2 -0.3 -1 4 -3.7 -0.9zM124.9 105.6l4.8 3.7 -1.6 2.6 -4.2 -2.3z" fill="#00ffff"/><path d="M129.7 109.3l3.9 1.5 -1.4 3.2 -4.1 -2.1zM133.6 110.8l4.1 2 -1.4 3.2 -4.1 -2zM137.7 112.8l4.3 2.5 -1.9 2 -3.8 -1.3z" fill="#00c0ff"/><path d="M142 115.3l4.1 2 -1.9 2 -4.1 -2zM146.1 117.3l3.4 0.3 -1.8 2.2 -3.5 -0.5zM149.5 117.6l2.7 -1.1 -1.3 3.3 -3.2 0zM152.2 116.5l4.1 2.1 -2.7 0.1 -2.7 1.1zM156.3 118.6l3.6 0.7 -1.7 2.6 -4.6 -3.2z" fill="#0080ff"/><path d="M159.9 119.3l3.5 0.7 -1.1 3.7 -4.1 -1.8zM163.4 120l4 1.8 -2.3 1 -2.8 0.9zM167.4 121.8l3.2 -0.1 -2.6 0.5 -2.9 0.6zM170.6 121.7l3.6 0.9 -2.4 0.8 -3.8 -1.2zM174.2 122.6l3.3 0.2 -2.9 -0.2 -2.8 0.8zM177.5 122.8l3.3 0.1 -2.6 0.5 -3.6 -0.8zM180.8 122.9l2.6 -1.3 -2.4 0.9 -2.8 0.9zM183.4 121.6l2.8 -0.9 -2.3 1.1 -2.9 0.7z" fill="#0040ff"/><path d="M186.2 120.7l2.4 -1.9 -1.7 2.3 -3 0.7zM188.6 118.8l3.1 -0.3 -1.7 2.3 -3.1 0.3zM191.7 118.5l3.5 0.7 -1.8 2 -3.4 -0.4zM195.2 119.2l2.4 -1.9 -1.1 3.7 -3.1 0.2zM197.6 117.3l2.8 -1 -1.4 3.1 -2.5 1.6zM200.4 116.3l3.6 0.8 -2.4 0.9 -2.6 1.4zM204 117.1l2.6 -1.4 -2.8 0.1 -2.2 2.2z" fill="#0080ff"/><path d="M206.6 115.7l2.4 -1.7 -2.2 1.3 -3 0.5zM209 114l2 -2.8 -1.8 2.3 -2.4 1.8zM211 111.2l3 -0.5 -1.8 2.2 -3 0.6zM214 110.7l3.1 -0.4 -1.6 2.7 -3.3 -0.1z" fill="#00c0ff"/><path d="M217.1 110.3l2.3 -2 -2 1.8 -1.9 2.9zM219.4 108.3l2.5 -1.6 -2.2 1.3 -2.3 2.1zM221.9 106.7l2.6 -1.3 -2.4 0.7 -2.4 1.9zM224.5 105.4l3.9 1.4 -1.7 2.5 -4.6 -3.2z" fill="#00ffff"/><path d="M228.4 106.8l6.6 7.8 -1.4 2.9 -6.9 -8.2z" fill="#00c0ff"/><path d="M235 114.6l9 13 -0.7 4.6 -9.7 -14.7z" fill="#0040ff"/><path d="M244 127.6l-0.7 4.6 2.5 5.6 1.4 -3.1z" fill="#000080"/><path d="M106.4 135.6l-4.2 -16.7 -0.3 5.7 3.9 15.8z" fill="#0000ff"/><path d="M102.2 118.9l-1.9 -11.5 -0.9 4.2 2.5 13z" fill="#00c0ff"/><path d="M100.3 107.4l1.1 -4.9 -0.6 5 -1.4 4.1zM101.4 102.5l3.6 1 -0.9 4.3 -3.3 -0.3zM105 103.5l4 1.6 -1.4 3.3 -3.5 -0.6zM109 105.1l3.9 1.7 -1.4 3.1 -3.9 -1.5z" fill="#00ffc0"/><path d="M112.9 106.8l3.5 0.6 -1.2 3.5 -3.7 -1zM116.4 107.4l3.8 1.3 -0.8 4.5 -4.2 -2.3zM120.2 108.7l3.7 0.9 -1 4.2 -3.5 -0.6zM123.9 109.6l4.2 2.3 -1.5 3 -3.7 -1.1z" fill="#00ffff"/><path d="M128.1 111.9l4.1 2.1 -1.8 2.1 -3.8 -1.2zM132.2 114l4.1 2 -1.8 2.2 -4.1 -2.1zM136.3 116l3.8 1.3 -1.2 3.4 -4.4 -2.5z" fill="#00c0ff"/><path d="M140.1 117.3l4.1 2 -1.9 2 -3.4 -0.6zM144.2 119.3l3.5 0.5 -2.1 1.5 -3.3 0zM147.7 119.8l3.2 0 -2.4 0.9 -2.9 0.6zM150.9 119.8l2.7 -1.1 -1.8 2.2 -3.3 -0.2zM153.6 118.7l4.6 3.2 -2.2 1.2 -4.2 -2.2zM158.2 121.9l4.1 1.8 -2.4 0.9 -3.9 -1.5zM162.3 123.7l2.8 -0.9 -1.9 1.9 -3.3 -0.1zM165.1 122.8l2.9 -0.6 -2.2 1.3 -2.6 1.2zM168 122.2l3.8 1.2 -3 -0.4 -3 0.5zM171.8 123.4l2.8 -0.8 -2 1.6 -3.8 -1.2zM174.6 122.6l3.6 0.8 -2.4 0.9 -3.2 -0.1zM178.2 123.4l2.8 -0.9 -1.5 2.7 -3.7 -0.9zM181 122.5l2.9 -0.7 -2.3 0.9 -2.1 2.5zM183.9 121.8l3 -0.7 -1.6 2.8 -3.7 -1.2zM186.9 121.1l3.1 -0.3 -2 1.8 -2.7 1.3zM190 120.8l3.4 0.4 -2.4 0.9 -3 0.5zM193.4 121.2l3.1 -0.2 -1.8 2.3 -3.7 -1.2zM196.5 121l2.5 -1.6 -2.3 1.1 -2 2.8zM199 119.4l2.6 -1.4 -2.3 1.1 -2.6 1.4z" fill="#0080ff"/><path d="M201.6 118l2.2 -2.2 -1.7 2.3 -2.8 1zM203.8 115.8l3 -0.5 -1.9 1.9 -2.8 0.9zM206.8 115.3l2.4 -1.8 -1.3 3.3 -3 0.4zM209.2 113.5l3 -0.6 -1.2 3.5 -3.1 0.4zM212.2 112.9l3.3 0.1 -2 1.7 -2.5 1.7z" fill="#00c0ff"/><path d="M215.5 113l1.9 -2.9 -1.8 2.2 -2.1 2.4zM217.4 110.1l2.3 -2.1 -1.7 2.5 -2.4 1.8z" fill="#00ffff"/><path d="M219.7 108l2.4 -1.9 -1.1 3.9 -3 0.5z" fill="#00ffc0"/><path d="M222.1 106.1l4.6 3.2 -1.1 3.9 -4.6 -3.2z" fill="#00ffff"/><path d="M226.7 109.3l6.9 8.2 -0.7 4.7 -7.3 -9z" fill="#00c0ff"/><path d="M233.6 117.5l9.7 14.7 -0.1 6.1 -10.3 -16.1z" fill="#0040ff"/><path d="M243.3 132.2l-0.1 6.1 1.2 2.7 1.4 -3.2z" fill="#000080"/><path d="M105.8 140.4l-3.9 -15.8 0.4 7 2.3 12.5z" fill="#0000ff"/><path d="M101.9 124.6l-2.5 -13 0.1 6.4 2.8 13.6z" fill="#00c0ff"/><path d="M99.4 111.6l1.4 -4.1 -0.8 4.5 -0.5 6z" fill="#00ffff"/><path d="M100.8 107.5l3.3 0.3 -1.7 2.4 -2.4 1.8zM104.1 107.8l3.5 0.6 -1.7 2.4 -3.5 -0.6zM107.6 108.4l3.9 1.5 -2.1 1.4 -3.5 -0.5zM111.5 109.9l3.7 1 -2 1.8 -3.8 -1.4z" fill="#00ffc0"/><path d="M115.2 110.9l4.2 2.3 -2.7 0.2 -3.5 -0.7zM119.4 113.2l3.5 0.6 -2 1.8 -4.2 -2.2zM122.9 113.8l3.7 1.1 -1.4 3 -4.3 -2.3zM126.6 114.9l3.8 1.2 -1.7 2.6 -3.5 -0.8z" fill="#00ffff"/><path d="M130.4 116.1l4.1 2.1 -2.2 1.2 -3.6 -0.7zM134.5 118.2l4.4 2.5 -2.1 1.7 -4.5 -3zM138.9 120.7l3.4 0.6 -2.1 1.4 -3.4 -0.3zM142.3 121.3l3.3 0 -2.5 0.7 -2.9 0.7zM145.6 121.3l2.9 -0.6 -1.8 2.2 -3.6 -0.9zM148.5 120.7l3.3 0.2 -1.7 2.5 -3.4 -0.5z" fill="#00c0ff"/><path d="M151.8 120.9l4.2 2.2 -2 1.8 -3.9 -1.5zM156 123.1l3.9 1.5 -2.1 1.7 -3.8 -1.4zM159.9 124.6l3.3 0.1 -2.6 0.6 -2.8 1zM163.2 124.7l2.6 -1.2 -2.5 0.5 -2.7 1.3zM165.8 123.5l3 -0.5 -1.6 2.5 -3.9 -1.5zM168.8 123l3.8 1.2 -2.2 1.4 -3.2 -0.1zM172.6 124.2l3.2 0.1 -2 1.6 -3.4 -0.3zM175.8 124.3l3.7 0.9 -2.2 1.4 -3.5 -0.7zM179.5 125.2l2.1 -2.5 -1.8 2.2 -2.5 1.7zM181.6 122.7l3.7 1.2 -2.1 1.5 -3.4 -0.5zM185.3 123.9l2.7 -1.3 -1.7 2.4 -3.1 0.4zM188 122.6l3 -0.5 -2 1.8 -2.7 1.1zM191 122.1l3.7 1.2 -3 -0.5 -2.7 1.1zM194.7 123.3l2 -2.8 -1.9 2 -3.1 0.3z" fill="#0080ff"/><path d="M196.7 120.5l2.6 -1.4 -2.3 1.1 -2.2 2.3zM199.3 119.1l2.8 -1 -1.8 2.3 -3.3 -0.2zM202.1 118.1l2.8 -0.9 -1.6 2.8 -3 0.4zM204.9 117.2l3 -0.4 -1.7 2.4 -2.9 0.8zM207.9 116.8l3.1 -0.4 -2.1 1.6 -2.7 1.2z" fill="#00c0ff"/><path d="M211 116.4l2.5 -1.7 -1.9 2.1 -2.7 1.2zM213.5 114.7l2.1 -2.4 -1.7 2.6 -2.3 1.9zM215.6 112.3l2.4 -1.8 -1.6 2.5 -2.5 1.9z" fill="#00ffff"/><path d="M218 110.5l3 -0.5 -1.5 3 -3.1 0z" fill="#00ffc0"/><path d="M221 110l4.6 3.2 -1.6 2.5 -4.5 -2.7z" fill="#00ffff"/><path d="M225.6 113.2l7.3 9 -0.5 5.2 -8.4 -11.7z" fill="#00c0ff"/><path d="M232.9 122.2l10.3 16.1 -0.4 5.4 -10.4 -16.3z" fill="#0000ff"/><path d="M243.2 138.3l-0.4 5.4 0.2 0.4 1.4 -3.1z" fill="#000080"/><path d="M104.6 144.1l-2.3 -12.5 0.6 7.6 0.3 8z" fill="#0000ff"/><path d="M103.2 147.2l-0.3 -8 3.5 8 -3.2 0z" fill="#000080"/><path d="M102.3 131.6l-2.8 -13.6 0.2 6.9 3.2 14.3z" fill="#0080ff"/><path d="M99.5 118l0.5 -6 -0.4 5.3 0.1 7.6z" fill="#00ffff"/><path d="M100 112l2.4 -1.8 -1.8 2 -1 5.1zM102.4 110.2l3.5 0.6 -2.1 1.4 -3.2 0zM105.9 110.8l3.5 0.5 -1.4 3.1 -4.2 -2.2zM109.4 111.3l3.8 1.4 -1.7 2.4 -3.5 -0.7zM113.2 112.7l3.5 0.7 -1.7 2.4 -3.5 -0.7z" fill="#00ffc0"/><path d="M116.7 113.4l4.2 2.2 -2.1 1.4 -3.8 -1.2zM120.9 115.6l4.3 2.3 -2.1 1.7 -4.3 -2.6zM125.2 117.9l3.5 0.8 -2 1.8 -3.6 -0.9zM128.7 118.7l3.6 0.7 -2.5 0.6 -3.1 0.5z" fill="#00ffff"/><path d="M132.3 119.4l4.5 3 -3.2 -1.1 -3.8 -1.3zM136.8 122.4l3.4 0.3 -2.8 0.1 -3.8 -1.5zM140.2 122.7l2.9 -0.7 -1.7 2.5 -4 -1.7zM143.1 122l3.6 0.9 -2.4 0.8 -2.9 0.8zM146.7 122.9l3.4 0.5 -2.4 0.8 -3.4 -0.5zM150.1 123.4l3.9 1.5 -2.9 -0.3 -3.4 -0.4z" fill="#00c0ff"/><path d="M154 124.9l3.8 1.4 -2.7 0 -4 -1.7zM157.8 126.3l2.8 -1 -2.9 -0.4 -2.6 1.4z" fill="#0080ff"/><path d="M160.6 125.3l2.7 -1.3 -2.1 1.6 -3.5 -0.7z" fill="#00c0ff"/><path d="M163.3 124l3.9 1.5 -2.3 1.2 -3.7 -1.1zM167.2 125.5l3.2 0.1 -2.1 1.6 -3.4 -0.5zM170.4 125.6l3.4 0.3 -1.9 2 -3.6 -0.7zM173.8 125.9l3.5 0.7 -2.7 0.2 -2.7 1.1zM177.3 126.6l2.5 -1.7 -2.5 0.7 -2.7 1.2zM179.8 124.9l3.4 0.5 -2.8 -0.1 -3.1 0.3zM183.2 125.4l3.1 -0.4 -2.6 0.5 -3.3 -0.2z" fill="#0080ff"/><path d="M186.3 125l2.7 -1.1 -2.4 0.8 -2.9 0.8zM189 123.9l2.7 -1.1 -2 1.7 -3.1 0.2zM191.7 122.8l3.1 -0.3 -2.3 1.2 -2.8 0.8zM194.8 122.5l2.2 -2.3 -1.6 2.7 -2.9 0.8zM197 120.2l3.3 0.2 -1.6 2.7 -3.3 -0.2zM200.3 120.4l3 -0.4 -1.8 2.2 -2.8 0.9zM203.3 120l2.9 -0.8 -1.3 3.2 -3.4 -0.2zM206.2 119.2l2.7 -1.2 -1.2 3.6 -2.8 0.8z" fill="#00c0ff"/><path d="M208.9 118l2.7 -1.2 -1.3 3.3 -2.6 1.5zM211.6 116.8l2.3 -1.9 -1.2 3.5 -2.4 1.7zM213.9 114.9l2.5 -1.9 -1.2 3.6 -2.5 1.8z" fill="#00ffff"/><path d="M216.4 113l3.1 0 -1.7 2.4 -2.6 1.2z" fill="#00ffc0"/><path d="M219.5 113l4.5 2.7 0.3 7 -6.5 -7.3z" fill="#00ffff"/><path d="M224 115.7l8.4 11.7 0.7 7.8 -8.8 -12.5z" fill="#0080ff"/><path d="M232.4 127.4l10.4 16.3 -1.2 3.5 -8.5 -12z" fill="#0000ff"/><path d="M242.8 143.7l-1.2 3.5 0 0 1.4 -3.1zM233.1 135.2l8.5 12 0 0 -3.2 0z" fill="#000080"/><path d="M102.9 139.2l-3.2 -14.3 0.8 8.1 3.6 15.2z" fill="#0040ff"/><path d="M99.7 124.9l-0.1 -7.6 0 6.3 0.9 9.4z" fill="#00c0ff"/><path d="M99.6 117.3l1 -5.1 -0.8 4.5 -0.2 6.9zM100.6 112.2l3.2 0 -1.6 2.8 -2.4 1.7zM103.8 112.2l4.2 2.2 -2.3 1.2 -3.5 -0.6zM108 114.4l3.5 0.7 -2.4 0.9 -3.4 -0.4zM111.5 115.1l3.5 0.7 -2.6 0.5 -3.3 -0.3zM115 115.8l3.8 1.2 -2.7 0.4 -3.7 -1.1z" fill="#00ffc0"/><path d="M118.8 117l4.3 2.6 -2.6 0.3 -4.4 -2.5zM123.1 119.6l3.6 0.9 -2.7 0.1 -3.5 -0.7zM126.7 120.5l3.1 -0.5 -3 -0.3 -2.8 0.9zM129.8 120l3.8 1.3 -3.1 -0.7 -3.7 -0.9zM133.6 121.3l3.8 1.5 -2.6 0.3 -4.3 -2.5z" fill="#00ffff"/><path d="M137.4 122.8l4 1.7 -1.8 2.3 -4.8 -3.7zM141.4 124.5l2.9 -0.8 -1.9 2 -2.8 1.1zM144.3 123.7l3.4 0.5 -2.5 0.7 -2.8 0.8zM147.7 124.2l3.4 0.4 -2.3 1.1 -3.6 -0.8zM151.1 124.6l4 1.7 -3.1 -0.6 -3.2 0zM155.1 126.3l2.6 -1.4 -2.8 0 -2.9 0.8zM157.7 124.9l3.5 0.7 -2.8 0 -3.5 -0.7zM161.2 125.6l3.7 1.1 -3.1 -0.8 -3.4 -0.3zM164.9 126.7l3.4 0.5 -2.7 0.1 -3.8 -1.4zM168.3 127.2l3.6 0.7 -3 -0.4 -3.3 -0.2zM171.9 127.9l2.7 -1.1 -2.7 0.1 -3 0.6zM174.6 126.8l2.7 -1.2 -2.9 -0.2 -2.5 1.5zM177.3 125.6l3.1 -0.3 -2.5 0.7 -3.5 -0.6zM180.4 125.3l3.3 0.2 -2.2 1.3 -3.6 -0.8zM183.7 125.5l2.9 -0.8 -2.2 1.5 -2.9 0.6zM186.6 124.7l3.1 -0.2 -2.1 1.6 -3.2 0.1zM189.7 124.5l2.8 -0.8 -1.9 1.9 -3 0.5zM192.5 123.7l2.9 -0.8 -1.8 2.2 -3 0.5zM195.4 122.9l3.3 0.2 -2.4 0.7 -2.7 1.3zM198.7 123.1l2.8 -0.9 -1.8 2.2 -3.4 -0.6z" fill="#00c0ff"/><path d="M201.5 122.2l3.4 0.2 -2.2 1.4 -3 0.6zM204.9 122.4l2.8 -0.8 -1.4 3 -3.6 -0.8zM207.7 121.6l2.6 -1.5 -1.3 3.4 -2.7 1.1zM210.3 120.1l2.4 -1.7 -1.6 2.6 -2.1 2.5zM212.7 118.4l2.5 -1.8 -2 2 -2.1 2.4z" fill="#00ffff"/><path d="M215.2 116.6l2.6 -1.2 -0.2 5.7 -4.4 -2.5z" fill="#00ffc0"/><path d="M217.8 115.4l6.5 7.3 0.7 7.9 -7.4 -9.5z" fill="#00ffff"/><path d="M224.3 122.7l8.8 12.5 1.3 9.4 -9.4 -14z" fill="#0080ff"/><path d="M233.1 135.2l1.3 9.4 2.6 5.8 1.4 -3.2z" fill="#000080"/><path d="M104.1 148.2l-3.6 -15.2 1.3 9 1.8 11.5z" fill="#0000ff"/><path d="M100.5 133l-0.9 -9.4 0.5 7.5 1.7 10.9z" fill="#0080ff"/><path d="M99.6 123.6l0.2 -6.9 -0.6 5 0.9 9.4z" fill="#00ffff"/><path d="M99.8 116.7l2.4 -1.7 -2.1 1.6 -0.9 5.1z" fill="#00ffc0"/><path d="M102.2 115l3.5 0.6 -2.2 1.3 -3.4 -0.3z" fill="#00ff80"/><path d="M105.7 115.6l3.4 0.4 -2.2 1.3 -3.4 -0.4zM109.1 116l3.3 0.3 -2.6 0.2 -2.9 0.8zM112.4 116.3l3.7 1.1 -2.8 -0.3 -3.5 -0.6zM116.1 117.4l4.4 2.5 -3.6 -1.9 -3.6 -0.9zM120.5 119.9l3.5 0.7 -3.4 -1.4 -3.7 -1.2zM124 120.6l2.8 -0.9 -2.1 1.5 -4.1 -2zM126.8 119.7l3.7 0.9 -1.7 2.6 -4.1 -2z" fill="#00ffc0"/><path d="M130.5 120.6l4.3 2.5 -1.8 2.2 -4.2 -2.1zM134.8 123.1l4.8 3.7 -2.6 0.4 -4 -1.9z" fill="#00ffff"/><path d="M139.6 126.8l2.8 -1.1 -2.4 0.9 -3 0.6z" fill="#00c0ff"/><path d="M142.4 125.7l2.8 -0.8 -1.5 2.7 -3.7 -1z" fill="#00ffff"/><path d="M145.2 124.9l3.6 0.8 -2.1 1.5 -3 0.4zM148.8 125.7l3.2 0 -2.2 1.2 -3.1 0.3zM152 125.7l2.9 -0.8 -1.4 3.1 -3.7 -1.1z" fill="#00c0ff"/><path d="M154.9 124.9l3.5 0.7 -2.5 0.6 -2.4 1.8zM158.4 125.6l3.4 0.3 -2.7 0.3 -3.2 0z" fill="#00ffff"/><path d="M161.8 125.9l3.8 1.4 -2.5 0.5 -4 -1.6zM165.6 127.3l3.3 0.2 -2.7 0.2 -3.1 0.1zM168.9 127.5l3 -0.6 -2.4 0.9 -3.3 -0.1zM171.9 126.9l2.5 -1.5 -1.6 2.5 -3.3 -0.1zM174.4 125.4l3.5 0.6 -2.3 1.2 -2.8 0.7zM177.9 126l3.6 0.8 -2.5 0.8 -3.4 -0.4zM181.5 126.8l2.9 -0.6 -2.4 0.7 -3 0.7z" fill="#00c0ff"/><path d="M184.4 126.2l3.2 -0.1 -3 -0.6 -2.6 1.4zM187.6 126.1l3 -0.5 -2.8 -0.1 -3.2 0zM190.6 125.6l3 -0.5 -2.5 0.6 -3.3 -0.2zM193.6 125.1l2.7 -1.3 -2.1 1.6 -3.1 0.3zM196.3 123.8l3.4 0.6 -2.9 -0.4 -2.6 1.4zM199.7 124.4l3 -0.6 -2.4 0.9 -3.5 -0.7zM202.7 123.8l3.6 0.8 -3 -0.5 -3 0.6zM206.3 124.6l2.7 -1.1 -2.2 1.4 -3.5 -0.8zM209 123.5l2.1 -2.5 -2.1 1.5 -2.2 2.4z" fill="#00ffff"/><path d="M211.1 121l2.1 -2.4 -1.2 3.5 -3 0.4z" fill="#00ffc0"/><path d="M213.2 118.6l4.4 2.5 0.1 6.5 -5.7 -5.5z" fill="#00ffff"/><path d="M217.6 121.1l7.4 9.5 0.8 8 -8.1 -11z" fill="#00c0ff"/><path d="M225 130.6l9.4 14 1.2 8.9 -9.8 -14.9z" fill="#0000ff"/><path d="M234.4 144.6l1.2 8.9 0 0 1.4 -3.1z" fill="#000080"/><path d="M103.6 153.5l-1.8 -11.5 1.6 10 -1.1 4.7z" fill="#000080"/><path d="M102.3 156.7l1.1 -4.7 2.1 4.7 -3.2 0z" fill="#000080"/><path d="M101.8 142l-1.7 -10.9 1 8.5 2.3 12.4z" fill="#0040ff"/><path d="M100.1 131.1l-0.9 -9.4 0.8 8.1 1.1 9.8z" fill="#00c0ff"/><path d="M99.2 121.7l0.9 -5.1 -0.2 5.8 0.1 7.4z" fill="#00ffc0"/><path d="M100.1 116.6l3.4 0.3 -1.4 3 -2.2 2.5zM103.5 116.9l3.4 0.4 -2.4 0.8 -2.4 1.8zM106.9 117.3l2.9 -0.8 -2.5 0.8 -2.8 0.8zM109.8 116.5l3.5 0.6 -2.9 -0.2 -3.1 0.4zM113.3 117.1l3.6 0.9 -1.9 2 -4.6 -3.1z" fill="#00ff80"/><path d="M116.9 118l3.7 1.2 -2 1.7 -3.6 -0.9zM120.6 119.2l4.1 2 -1.6 2.7 -4.5 -3zM124.7 121.2l4.1 2 -1.7 2.4 -4 -1.7z" fill="#00ffc0"/><path d="M128.8 123.2l4.2 2.1 -1.5 2.8 -4.4 -2.5zM133 125.3l4 1.9 -2.1 1.5 -3.4 -0.6zM137 127.2l3 -0.6 -1.9 1.9 -3.2 0.2zM140 126.6l3.7 1 -2.9 -0.1 -2.7 1zM143.7 127.6l3 -0.4 -3.5 -1.5 -2.4 1.8zM146.7 127.2l3.1 -0.3 -2.9 -0.3 -3.7 -0.9zM149.8 126.9l3.7 1.1 -2.7 0.3 -3.9 -1.7zM153.5 128l2.4 -1.8 -2 1.8 -3.1 0.3zM155.9 126.2l3.2 0 -1.7 2.4 -3.5 -0.6zM159.1 126.2l4 1.6 -2.4 1 -3.3 -0.2zM163.1 127.8l3.1 -0.1 -3.1 -0.7 -2.4 1.8zM166.2 127.7l3.3 0.1 -2.9 -0.2 -3.5 -0.6zM169.5 127.8l3.3 0.1 -2.7 0.3 -3.5 -0.6zM172.8 127.9l2.8 -0.7 -1.9 1.9 -3.6 -0.9zM175.6 127.2l3.4 0.4 -2.5 0.5 -2.8 1zM179 127.6l3 -0.7 -2.5 0.8 -3 0.4zM182 126.9l2.6 -1.4 -1.7 2.6 -3.4 -0.4zM184.6 125.5l3.2 0 -2.7 0.3 -2.2 2.3zM187.8 125.5l3.3 0.2 -2.5 0.6 -3.5 -0.5zM191.1 125.7l3.1 -0.3 -2.9 -0.2 -2.7 1.1zM194.2 125.4l2.6 -1.4 -2.8 0.1 -2.7 1.1z" fill="#00ffff"/><path d="M196.8 124l3.5 0.7 -2.8 0 -3.5 -0.6zM200.3 124.7l3 -0.6 -3 -0.4 -2.8 1zM203.3 124.1l3.5 0.8 -2.8 -0.2 -3.7 -1zM206.8 124.9l2.2 -2.4 -1.5 3 -3.5 -0.8zM209 122.5l3 -0.4 -0.5 5 -4 -1.6z" fill="#00ffc0"/><path d="M212 122.1l5.7 5.5 0.4 7.2 -6.6 -7.7z" fill="#00ffff"/><path d="M217.7 127.6l8.1 11 1.4 9.4 -9.1 -13.2z" fill="#0080ff"/><path d="M225.8 138.6l9.8 14.9 -1.4 3.2 -7 -8.7z" fill="#0000ff"/><path d="M235.6 153.5l-1.4 3.2 0 0 1.4 -3.2zM227.2 148l7 8.7 0 0 -3.2 0z" fill="#000080"/><path d="M103.4 152l-2.3 -12.4 1.4 9.4 1.6 10.8z" fill="#0000ff"/><path d="M104.1 159.8l-1.6 -10.8 4.8 10.8 -3.2 0z" fill="#000080"/><path d="M101.1 139.6l-1.1 -9.8 1.1 8.8 1.4 10.4z" fill="#0080ff"/><path d="M100 129.8l-0.1 -7.4 0.7 7.9 0.5 8.3z" fill="#00ffff"/><path d="M99.9 122.4l2.2 -2.5 0 6.4 -1.5 4z" fill="#00ffc0"/><path d="M102.1 119.9l2.4 -1.8 -1.2 3.6 -1.2 4.6zM104.5 118.1l2.8 -0.8 -1.7 2.4 -2.3 2zM107.3 117.3l3.1 -0.4 -1.2 3.7 -3.6 -0.9zM110.4 116.9l4.6 3.1 -1.4 3.2 -4.4 -2.6zM115 120l3.6 0.9 -0.9 4.3 -4.1 -2z" fill="#00ff80"/><path d="M118.6 120.9l4.5 3 -2 1.7 -3.4 -0.4zM123.1 123.9l4 1.7 -2.2 1.4 -3.8 -1.4zM127.1 125.6l4.4 2.5 -2.9 0 -3.7 -1.1z" fill="#00ffc0"/><path d="M131.5 128.1l3.4 0.6 -2.6 0.3 -3.7 -0.9zM134.9 128.7l3.2 -0.2 -2.8 0 -3 0.5zM138.1 128.5l2.7 -1 -2.9 -0.2 -2.6 1.2z" fill="#00ffff"/><path d="M140.8 127.5l2.4 -1.8 -2.7 0 -2.6 1.6zM143.2 125.7l3.7 0.9 -2.8 0 -3.6 -0.9zM146.9 126.6l3.9 1.7 -3.4 -1.4 -3.3 -0.3z" fill="#00ffc0"/><path d="M150.8 128.3l3.1 -0.3 -2.6 0.3 -3.9 -1.4zM153.9 128l3.5 0.6 -2.2 1.3 -3.9 -1.6zM157.4 128.6l3.3 0.2 -2 1.8 -3.5 -0.7zM160.7 128.8l2.4 -1.8 -1.8 2.1 -2.6 1.5zM163.1 127l3.5 0.6 -2.5 0.6 -2.8 0.9zM166.6 127.6l3.5 0.6 -2.5 0.5 -3.5 -0.5zM170.1 128.2l3.6 0.9 -3.2 -1.1 -2.9 0.7zM173.7 129.1l2.8 -1 -3.6 -1.8 -2.4 1.7z" fill="#00ffff"/><path d="M176.5 128.1l3 -0.4 -3.6 -1.9 -3 0.5zM179.5 127.7l3.4 0.4 -3.1 -0.9 -3.9 -1.4zM182.9 128.1l2.2 -2.3 -2.1 1.5 -3.2 -0.1zM185.1 125.8l3.5 0.5 -1.8 2.4 -3.8 -1.4zM188.6 126.3l2.7 -1.1 -1.8 2.2 -2.7 1.3zM191.3 125.2l2.7 -1.1 -2.1 1.4 -2.4 1.9zM194 124.1l3.5 0.6 -2.1 1.5 -3.5 -0.7zM197.5 124.7l2.8 -1 -1.3 3.3 -3.6 -0.8zM200.3 123.7l3.7 1 -1.6 2.8 -3.4 -0.5zM204 124.7l3.5 0.8 -1.7 2.5 -3.4 -0.5z" fill="#00ffc0"/><path d="M207.5 125.5l4 1.6 -0.1 6.1 -5.6 -5.2z" fill="#00ffff"/><path d="M211.5 127.1l6.6 7.7 1 8.5 -7.7 -10.1z" fill="#00c0ff"/><path d="M218.1 134.8l9.1 13.2 2 10.9 -10.1 -15.6z" fill="#0040ff"/><path d="M227.2 148l2 10.9 0.4 0.9 1.4 -3.1z" fill="#000080"/><path d="M102.5 149l-1.4 -10.4 1.5 9.6 2 11.7z" fill="#0040ff"/><path d="M101.1 138.6l-0.5 -8.3 1.4 9.3 0.6 8.6z" fill="#00c0ff"/><path d="M100.6 130.3l1.5 -4 0.8 8.2 -0.9 5.1z" fill="#00ffff"/><path d="M102.1 126.3l1.2 -4.6 0.9 8.2 -1.3 4.6z" fill="#00ffc0"/><path d="M103.3 121.7l2.3 -2 0.8 8.1 -2.2 2.1zM105.6 119.7l3.6 0.9 -0.2 5.8 -2.6 1.4zM109.2 120.6l4.4 2.6 -0.7 4.6 -3.9 -1.4z" fill="#00ff80"/><path d="M113.6 123.2l4.1 2 -0.6 4.8 -4.2 -2.2zM117.7 125.2l3.4 0.4 -1 4.1 -3 0.3zM121.1 125.6l3.8 1.4 -2.4 0.6 -2.4 2.1zM124.9 127l3.7 1.1 -2.6 0.3 -3.5 -0.8zM128.6 128.1l3.7 0.9 -1.9 2 -4.4 -2.6zM132.3 129l3 -0.5 -2.6 0.4 -2.3 2.1zM135.3 128.5l2.6 -1.2 -3 -0.5 -2.2 2.1zM137.9 127.3l2.6 -1.6 -3.1 -0.6 -2.5 1.7zM140.5 125.7l3.6 0.9 -3.3 -1.2 -3.4 -0.3zM144.1 126.6l3.3 0.3 -3.2 -1 -3.4 -0.5zM147.4 126.9l3.9 1.4 -2.9 -0.1 -4.2 -2.3zM151.3 128.3l3.9 1.6 -3 -0.6 -3.8 -1.1zM155.2 129.9l3.5 0.7 -2.9 -0.4 -3.6 -0.9zM158.7 130.6l2.6 -1.5 -3 -0.5 -2.5 1.6zM161.3 129.1l2.8 -0.9 -2.1 1.5 -3.7 -1.1zM164.1 128.2l3.5 0.5 -3.2 -0.7 -2.4 1.7zM167.6 128.7l2.9 -0.7 -3.4 -1.2 -2.7 1.2zM170.5 128l2.4 -1.7 -3.4 -1.3 -2.4 1.8z" fill="#00ffc0"/><path d="M172.9 126.3l3 -0.5 -3.8 -2.4 -2.6 1.6zM175.9 125.8l3.9 1.4 -4.1 -2.8 -3.6 -1z" fill="#00ff80"/><path d="M179.8 127.2l3.2 0.1 -3.1 -0.9 -4.2 -2zM183 127.3l3.8 1.4 -2.4 0.8 -4.5 -3.1zM186.8 128.7l2.7 -1.3 -1.6 2.6 -3.5 -0.5zM189.5 127.4l2.4 -1.9 -0.9 4.3 -3.1 0.2zM191.9 125.5l3.5 0.7 -1.1 3.9 -3.3 -0.3zM195.4 126.2l3.6 0.8 -1.7 2.6 -3 0.5zM199 127l3.4 0.5 -1.8 2.3 -3.3 -0.2zM202.4 127.5l3.4 0.5 -0.9 4 -4.3 -2.2z" fill="#00ffc0"/><path d="M205.8 128l5.6 5.2 0.9 8.4 -7.4 -9.6z" fill="#00ffff"/><path d="M211.4 133.2l7.7 10.1 2.6 12.2 -9.4 -13.9z" fill="#0080ff"/><path d="M219.1 143.3l10.1 15.6 -1 4.1 -6.5 -7.5z" fill="#0000ff"/><path d="M229.2 158.9l-1 4.1 0 0 1.4 -3.2zM221.7 155.5l6.5 7.5 0 0 -3.2 0z" fill="#000080"/><path d="M104.6 159.9l-2 -11.7 2.1 11 -0.2 6.9z" fill="#0000ff"/><path d="M104.5 166.1l0.2 -6.9 3 6.9 -3.2 0z" fill="#000080"/><path d="M102.6 148.2l-0.6 -8.6 2.1 10.9 0.6 8.7z" fill="#0040ff"/><path d="M102 139.6l0.9 -5.1 1.2 8.9 0 7.1z" fill="#00c0ff"/><path d="M102.9 134.5l1.3 -4.6 0.7 7.9 -0.8 5.6z" fill="#00ffff"/><path d="M104.2 129.9l2.2 -2.1 -0.1 6 -1.4 4zM106.4 127.8l2.6 -1.4 0.1 6.5 -2.8 0.9zM109 126.4l3.9 1.4 -0.6 5.1 -3.2 0zM112.9 127.8l4.2 2.2 -1.2 3.7 -3.6 -0.8zM117.1 130l3 -0.3 -0.7 4.7 -3.5 -0.7zM120.1 129.7l2.4 -2.1 -1.2 3.7 -1.9 3.1zM122.5 127.6l3.5 0.8 -1.9 2 -2.8 0.9zM126 128.4l4.4 2.6 -2.9 -0.1 -3.4 -0.5zM130.4 131l2.3 -2.1 -2.8 0 -2.4 2z" fill="#00ffc0"/><path d="M132.7 128.9l2.2 -2.1 -2.4 0.7 -2.6 1.4zM134.9 126.8l2.5 -1.7 -2.5 0.5 -2.4 1.9zM137.4 125.1l3.4 0.3 -2.9 -0.3 -3 0.5zM140.8 125.4l3.4 0.5 -2.3 1.2 -4 -2zM144.2 125.9l4.2 2.3 -2.9 -0.4 -3.6 -0.7z" fill="#00ff80"/><path d="M148.4 128.2l3.8 1.1 -2.3 1.1 -4.4 -2.6zM152.2 129.3l3.6 0.9 -2.5 0.8 -3.4 -0.6zM155.8 130.2l2.5 -1.6 -2.3 1.1 -2.7 1.3zM158.3 128.6l3.7 1.1 -3.3 -1.2 -2.7 1.2z" fill="#00ffc0"/><path d="M162 129.7l2.4 -1.7 -3 -0.7 -2.7 1.2zM164.4 128l2.7 -1.2 -4 -2.8 -1.7 3.3zM167.1 126.8l2.4 -1.8 -4 -2.8 -2.4 1.8z" fill="#00ff80"/><path d="M169.5 125l2.6 -1.6 -3.7 -2.1 -2.9 0.9zM172.1 123.4l3.6 1 -3.8 -2.5 -3.5 -0.6z" fill="#00ff00"/><path d="M175.7 124.4l4.2 2 -3.1 -0.6 -4.9 -3.9zM179.9 126.4l4.5 3.1 -3.1 -0.7 -4.5 -3z" fill="#00ff80"/><path d="M184.4 129.5l3.5 0.5 -2 1.9 -4.6 -3.1zM187.9 130l3.1 -0.2 -1.3 3.2 -3.8 -1.1zM191 129.8l3.3 0.3 -1.4 3 -3.2 -0.1zM194.3 130.1l3 -0.5 -2 1.6 -2.4 1.9zM197.3 129.6l3.3 0.2 -0.8 4.4 -4.5 -3z" fill="#00ffc0"/><path d="M200.6 129.8l4.3 2.2 0.9 8.5 -6 -6.3z" fill="#00ffff"/><path d="M204.9 132l7.4 9.6 2.7 12.2 -9.2 -13.3z" fill="#00c0ff"/><path d="M212.3 141.6l9.4 13.9 1.9 10.6 -8.6 -12.3z" fill="#0040ff"/><path d="M221.7 155.5l1.9 10.6 0 0 1.4 -3.1zM215 153.8l8.6 12.3 0 0 -3.2 0z" fill="#000080"/><path d="M104.7 159.2l-0.6 -8.7 2 10.8 0.3 7.9z" fill="#0000ff"/><path d="M106.4 169.2l-0.3 -7.9 3.5 7.9 -3.2 0z" fill="#000080"/><path d="M104.1 150.5l0 -7.1 1.8 10.4 0.2 7.5z" fill="#0080ff"/><path d="M104.1 143.4l0.8 -5.6 1.6 9.9 -0.6 6.1z" fill="#00c0ff"/><path d="M104.9 137.8l1.4 -4 0.9 8.3 -0.7 5.6z" fill="#00ffff"/><path d="M106.3 133.8l2.8 -0.9 -0.2 5.7 -1.7 3.5zM109.1 132.9l3.2 0 -0.9 4.1 -2.5 1.6zM112.3 132.9l3.6 0.8 -0.9 4.3 -3.6 -1zM115.9 133.7l3.5 0.7 -1.8 2 -2.6 1.6zM119.4 134.4l1.9 -3.1 -1 4.1 -2.7 1zM121.3 131.3l2.8 -0.9 -1.5 2.8 -2.3 2.2zM124.1 130.4l3.4 0.5 -1.4 3 -3.5 -0.7z" fill="#00ffc0"/><path d="M127.5 130.9l2.4 -2 -1.2 3.5 -2.6 1.5zM129.9 128.9l2.6 -1.4 -1.6 2.8 -2.2 2.1zM132.5 127.5l2.4 -1.9 -2 1.9 -2 2.8z" fill="#00ff80"/><path d="M134.9 125.6l3 -0.5 -1.4 3.2 -3.6 -0.8z" fill="#00ff00"/><path d="M137.9 125.1l4 2 -1.8 2 -3.6 -0.8zM141.9 127.1l3.6 0.7 -2.1 1.6 -3.3 -0.3zM145.5 127.8l4.4 2.6 -2.3 1.2 -4.2 -2.2zM149.9 130.4l3.4 0.6 -2.1 1.4 -3.6 -0.8zM153.3 131l2.7 -1.3 -1.9 1.9 -2.9 0.8zM156 129.7l2.7 -1.2 -2.1 1.5 -2.5 1.6zM158.7 128.5l2.7 -1.2 -2.3 1.2 -2.5 1.5z" fill="#00ff80"/><path d="M161.4 127.3l1.7 -3.3 -2.2 1.2 -1.8 3.3zM163.1 124l2.4 -1.8 -2.4 0.7 -2.2 2.3zM165.5 122.2l2.9 -0.9 -1.3 3.3 -4 -1.7zM168.4 121.3l3.5 0.6 -1.4 3.2 -3.4 -0.5zM171.9 121.9l4.9 3.9 -1.8 2.1 -4.5 -2.8z" fill="#00ff00"/><path d="M176.8 125.8l4.5 3 -2.1 1.5 -4.2 -2.4zM181.3 128.8l4.6 3.1 -2.8 -0.2 -3.9 -1.4z" fill="#00ff80"/><path d="M185.9 131.9l3.8 1.1 -2.1 1.6 -4.5 -2.9zM189.7 133l3.2 0.1 -1.5 2.9 -3.8 -1.4zM192.9 133.1l2.4 -1.9 0 6.3 -3.9 -1.5zM195.3 131.2l4.5 3 1.3 9.2 -5.8 -5.9z" fill="#00ffc0"/><path d="M199.8 134.2l6 6.3 3.2 13.5 -7.9 -10.6z" fill="#00c0ff"/><path d="M205.8 140.5l9.2 13.3 3.5 14.3 -9.5 -14.1z" fill="#0040ff"/><path d="M215 153.8l3.5 14.3 0.5 1.1 1.4 -3.1z" fill="#000080"/><path d="M106.1 161.3l-0.2 -7.5 1.8 10.3 0.3 7.9z" fill="#0000ff"/><path d="M105.9 153.8l0.6 -6.1 1.3 9.3 -0.1 7.1z" fill="#0040ff"/><path d="M106.5 147.7l0.7 -5.6 1.4 9.4 -0.8 5.5z" fill="#00c0ff"/><path d="M107.2 142.1l1.7 -3.5 0.5 7.5 -0.8 5.4zM108.9 138.6l2.5 -1.6 0.7 8 -2.7 1.1zM111.4 137l3.6 1 -0.6 4.8 -2.3 2.2z" fill="#00ffff"/><path d="M115 138l2.6 -1.6 -0.1 6.2 -3.1 0.2zM117.6 136.4l2.7 -1 -0.6 5 -2.2 2.2zM120.3 135.4l2.3 -2.2 -0.6 5 -2.3 2.2zM122.6 133.2l3.5 0.7 -1.8 2.3 -2.3 2z" fill="#00ffc0"/><path d="M126.1 133.9l2.6 -1.5 -0.7 4.8 -3.7 -1zM128.7 132.4l2.2 -2.1 -0.7 4.6 -2.2 2.3zM130.9 130.3l2 -2.8 0.1 6.5 -2.8 0.9zM132.9 127.5l3.6 0.8 -0.6 4.9 -2.9 0.8zM136.5 128.3l3.6 0.8 -0.7 4.8 -3.5 -0.7zM140.1 129.1l3.3 0.3 -0.1 5.9 -3.9 -1.4zM143.4 129.4l4.2 2.2 -0.3 5.5 -4 -1.8zM147.6 131.6l3.6 0.8 -1.2 3.6 -2.7 1.1zM151.2 132.4l2.9 -0.8 -2 1.8 -2.1 2.6zM154.1 131.6l2.5 -1.6 -1.4 3.3 -3.1 0.1zM156.6 130l2.5 -1.5 -2 1.8 -1.9 3z" fill="#00ff80"/><path d="M159.1 128.5l1.8 -3.3 -0.9 4.4 -2.9 0.7zM160.9 125.2l2.2 -2.3 -0.6 4.9 -2.5 1.8zM163.1 122.9l4 1.7 -0.6 5.1 -4 -1.9zM167.1 124.6l3.4 0.5 0.2 6.8 -4.2 -2.2zM170.5 125.1l4.5 2.8 -0.5 5.3 -3.8 -1.3z" fill="#00ff00"/><path d="M175 127.9l4.2 2.4 -1.3 3.3 -3.4 -0.4zM179.2 130.3l3.9 1.4 -0.8 4.5 -4.4 -2.6zM183.1 131.7l4.5 2.9 -1.6 2.7 -3.7 -1.1z" fill="#00ff80"/><path d="M187.6 134.6l3.8 1.4 -0.3 5.6 -5.1 -4.3z" fill="#00ffc0"/><path d="M191.4 136l3.9 1.5 1.4 9.4 -5.6 -5.3z" fill="#00ffff"/><path d="M195.3 137.5l5.8 5.9 2.7 12.4 -7.1 -8.9z" fill="#00c0ff"/><path d="M201.1 143.4l7.9 10.6 4.1 15.4 -9.3 -13.6z" fill="#0040ff"/><path d="M209 154l9.5 14.1 -0.9 4.3 -4.5 -3z" fill="#000080"/><path d="M218.5 168.1l-0.9 4.3 0 0 1.4 -3.2zM213.1 169.4l4.5 3 0 0 -3.2 0z" fill="#000080"/><path d="M108 172l-0.3 -7.9 2 10.8 -2.9 0.6z" fill="#000080"/><path d="M106.8 175.5l2.9 -0.6 0.3 0.6 -3.2 0z" fill="#000080"/><path d="M107.7 164.1l0.1 -7.1 1.7 10.2 0.2 7.7z" fill="#0000ff"/><path d="M107.8 157l0.8 -5.5 1.4 9.4 -0.5 6.3z" fill="#0040ff"/><path d="M108.6 151.5l0.8 -5.4 1.5 9.5 -0.9 5.3z" fill="#0080ff"/><path d="M109.4 146.1l2.7 -1.1 0.9 8.1 -2.1 2.5z" fill="#00c0ff"/><path d="M112.1 145l2.3 -2.2 0.8 8 -2.2 2.3zM114.4 142.8l3.1 -0.2 -0.1 5.9 -2.2 2.3zM117.5 142.6l2.2 -2.2 -0.2 5.8 -2.1 2.3z" fill="#00ffff"/><path d="M119.7 140.4l2.3 -2.2 -0.4 5.3 -2.1 2.7zM122 138.2l2.3 -2 -0.1 5.9 -2.6 1.4zM124.3 136.2l3.7 1 -0.4 5.3 -3.4 -0.4zM128 137.2l2.2 -2.3 -0.2 5.8 -2.4 1.8z" fill="#00ffc0"/><path d="M130.2 134.9l2.8 -0.9 -0.8 4.5 -2.2 2.2zM133 134l2.9 -0.8 -0.2 6 -3.5 -0.7zM135.9 133.2l3.5 0.7 -0.4 5.4 -3.3 -0.1zM139.4 133.9l3.9 1.4 -1.3 3.5 -3 0.5zM143.3 135.3l4 1.8 -1.8 2.3 -3.5 -0.6zM147.3 137.1l2.7 -1.1 -1 4 -3.5 -0.6zM150 136l2.1 -2.6 -0.9 4.2 -2.2 2.4zM152.1 133.4l3.1 -0.1 -1.7 2.4 -2.3 1.9zM155.2 133.3l1.9 -3 -0.5 5 -3.1 0.4z" fill="#00ff80"/><path d="M157.1 130.3l2.9 -0.7 -0.5 5 -2.9 0.7zM160 129.6l2.5 -1.8 -0.1 6.2 -2.9 0.6zM162.5 127.8l4 1.9 -0.2 5.7 -3.9 -1.4z" fill="#00ff00"/><path d="M166.5 129.7l4.2 2.2 -0.8 4.4 -3.6 -0.9zM170.7 131.9l3.8 1.3 -1 4.1 -3.6 -1zM174.5 133.2l3.4 0.4 -1.4 3 -3 0.7zM177.9 133.6l4.4 2.6 -1.8 2.4 -4 -2z" fill="#00ff80"/><path d="M182.3 136.2l3.7 1.1 0 6.3 -5.5 -5z" fill="#00ffc0"/><path d="M186 137.3l5.1 4.3 1.3 9.2 -6.4 -7.2z" fill="#00ffff"/><path d="M191.1 141.6l5.6 5.3 2.6 12.2 -6.9 -8.3z" fill="#00c0ff"/><path d="M196.7 146.9l7.1 8.9 4.3 15.9 -8.8 -12.6z" fill="#0080ff"/><path d="M203.8 155.8l9.3 13.6 -0.1 6.1 -4.9 -3.8z" fill="#0000ff"/><path d="M213.1 169.4l-0.1 6.1 0 0 1.4 -3.1zM208.1 171.7l4.9 3.8 0 0 -3.2 0z" fill="#000080"/><path d="M109.7 174.9l-0.2 -7.7 2.2 11.1 -3.1 0.4z" fill="#000080"/><path d="M108.6 178.7l3.1 -0.4 0.1 0.4 -3.2 0z" fill="#000080"/><path d="M109.5 167.2l0.5 -6.3 2 10.8 -0.3 6.6z" fill="#0000ff"/><path d="M111.7 178.3l0.3 -6.6 3.1 7 -3.3 0z" fill="#000080"/><path d="M110 160.9l0.9 -5.3 1.8 10.5 -0.7 5.6z" fill="#0040ff"/><path d="M110.9 155.6l2.1 -2.5 1.1 8.8 -1.4 4.2z" fill="#0080ff"/><path d="M113 153.1l2.2 -2.3 0.9 8.3 -2 2.8zM115.2 150.8l2.2 -2.3 0.2 6.9 -1.5 3.7z" fill="#00c0ff"/><path d="M117.4 148.5l2.1 -2.3 0.1 6.4 -2 2.8zM119.5 146.2l2.1 -2.7 -0.2 5.9 -1.8 3.2z" fill="#00ffff"/><path d="M121.6 143.5l2.6 -1.4 -0.1 6.1 -2.7 1.2zM124.2 142.1l3.4 0.4 -0.6 5.1 -2.9 0.6zM127.6 142.5l2.4 -1.8 -0.1 6.2 -2.9 0.7zM130 140.7l2.2 -2.2 -0.7 4.6 -1.6 3.8z" fill="#00ffc0"/><path d="M132.2 138.5l3.5 0.7 -1.5 2.7 -2.7 1.2zM135.7 139.2l3.3 0.1 -1.8 2.1 -3 0.5zM139 139.3l3 -0.5 -0.7 4.6 -4.1 -2zM142 138.8l3.5 0.6 -1.2 3.7 -3 0.3z" fill="#00ff80"/><path d="M145.5 139.4l3.5 0.6 -1.4 3.2 -3.3 -0.1z" fill="#00ffc0"/><path d="M149 140l2.2 -2.4 -0.9 4.5 -2.7 1.1zM151.2 137.6l2.3 -1.9 -0.7 4.7 -2.5 1.7zM153.5 135.7l3.1 -0.4 -1.1 3.8 -2.7 1.3zM156.6 135.3l2.9 -0.7 -0.1 6 -3.9 -1.5zM159.5 134.6l2.9 -0.6 -0.3 5.6 -2.7 1zM162.4 134l3.9 1.4 -0.4 5.4 -3.8 -1.2zM166.3 135.4l3.6 0.9 0.3 7 -4.3 -2.5zM169.9 136.3l3.6 1 -0.4 5.3 -2.9 0.7zM173.5 137.3l3 -0.7 0.3 7.1 -3.7 -1.1z" fill="#00ff80"/><path d="M176.5 136.6l4 2 0.9 8.2 -4.6 -3.1zM180.5 138.6l5.5 5 1.7 10.1 -6.3 -6.9z" fill="#00ffc0"/><path d="M186 143.6l6.4 7.2 3 13.1 -7.7 -10.2z" fill="#00c0ff"/><path d="M192.4 150.8l6.9 8.3 4.8 17.2 -8.7 -12.4z" fill="#0040ff"/><path d="M199.3 159.1l8.8 12.6 0.3 7 -4.3 -2.4z" fill="#0000ff"/><path d="M208.1 171.7l0.3 7 0 0 1.4 -3.2zM204.1 176.3l4.3 2.4 0 0 -3.2 0z" fill="#000080"/><path d="M112 171.7l0.7 -5.6 2.2 11.2 -1.2 4.5z" fill="#0000ff"/><path d="M113.7 181.8l1.2 -4.5 2 4.5 -3.2 0z" fill="#000080"/><path d="M112.7 166.1l1.4 -4.2 1.7 10.1 -0.9 5.3zM114.1 161.9l2 -2.8 1 8.6 -1.3 4.3z" fill="#0040ff"/><path d="M116.1 159.1l1.5 -3.7 1.3 9.2 -1.8 3.1z" fill="#0080ff"/><path d="M117.6 155.4l2 -2.8 1.1 8.7 -1.8 3.3zM119.6 152.6l1.8 -3.2 1.2 9 -1.9 2.9z" fill="#00c0ff"/><path d="M121.4 149.4l2.7 -1.2 0.8 8 -2.3 2.2zM124.1 148.2l2.9 -0.6 0.2 6.6 -2.3 2zM127 147.6l2.9 -0.7 -0.2 5.7 -2.5 1.6z" fill="#00ffff"/><path d="M129.9 146.9l1.6 -3.8 0 6.4 -1.8 3.1zM131.5 143.1l2.7 -1.2 -0.4 5.4 -2.3 2.2z" fill="#00ffc0"/><path d="M134.2 141.9l3 -0.5 -0.6 5 -2.8 0.9z" fill="#00ff80"/><path d="M137.2 141.4l4.1 2 -1.2 3.7 -3.5 -0.7zM141.3 143.4l3 -0.3 -1.6 2.6 -2.6 1.4z" fill="#00ffc0"/><path d="M144.3 143.1l3.3 0.1 -1.7 2.5 -3.2 0zM147.6 143.2l2.7 -1.1 -1.3 3.3 -3.1 0.3zM150.3 142.1l2.5 -1.7 -1 4 -2.8 1zM152.8 140.4l2.7 -1.3 -0.8 4.7 -2.9 0.6zM155.5 139.1l3.9 1.5 -0.2 6 -4.5 -2.8zM159.4 140.6l2.7 -1 0.6 7.6 -3.5 -0.6zM162.1 139.6l3.8 1.2 0.1 6.5 -3.3 -0.1z" fill="#00ff80"/><path d="M165.9 140.8l4.3 2.5 -0.8 4.5 -3.4 -0.5zM170.2 143.3l2.9 -0.7 0.2 6.8 -3.9 -1.6zM173.1 142.6l3.7 1.1 1.9 10.6 -5.4 -4.9z" fill="#00ffc0"/><path d="M176.8 143.7l4.6 3.1 3.7 14.5 -6.4 -7z" fill="#00ffff"/><path d="M181.4 146.8l6.3 6.9 4.6 16.8 -7.2 -9.2z" fill="#00c0ff"/><path d="M187.7 153.7l7.7 10.2 4.9 17.4 -8 -10.8z" fill="#0040ff"/><path d="M192.3 170.5l8 10.8 0.3 0.5 -3.2 0z" fill="#000080"/><path d="M195.4 163.9l8.7 12.4 -0.3 5.5 -3.5 -0.5z" fill="#000080"/><path d="M204.1 176.3l-0.3 5.5 0 0 1.4 -3.1zM200.3 181.3l3.5 0.5 0 0 -3.2 0z" fill="#000080"/><path d="M114.9 177.3l0.9 -5.3 2.2 11.4 -2.5 1.6z" fill="#000080"/><path d="M115.5 185l2.5 -1.6 0.7 1.6 -3.2 0z" fill="#000080"/><path d="M115.8 172l1.3 -4.3 1.9 10.7 -1 5z" fill="#0000ff"/><path d="M118 183.4l1 -5 2.9 6.6 -3.2 0z" fill="#000080"/><path d="M117.1 167.7l1.8 -3.1 1.7 10 -1.6 3.8z" fill="#0040ff"/><path d="M118.9 164.6l1.8 -3.3 1.7 10.1 -1.8 3.2zM120.7 161.3l1.9 -2.9 1.3 9.2 -1.5 3.8z" fill="#0080ff"/><path d="M122.6 158.4l2.3 -2.2 1.1 8.9 -2.1 2.5zM124.9 156.2l2.3 -2 0.9 8.3 -2.1 2.6z" fill="#00c0ff"/><path d="M127.2 154.2l2.5 -1.6 0.5 7.4 -2.1 2.5zM129.7 152.6l1.8 -3.1 1.3 9 -2.6 1.5zM131.5 149.5l2.3 -2.2 1.5 9.8 -2.5 1.4z" fill="#00ffff"/><path d="M133.8 147.3l2.8 -0.9 1 8.6 -2.3 2.1zM136.6 146.4l3.5 0.7 -0.1 5.9 -2.4 2zM140.1 147.1l2.6 -1.4 0.1 6.4 -2.8 0.9zM142.7 145.7l3.2 0 0.1 6.4 -3.2 0zM145.9 145.7l3.1 -0.3 0 6.1 -3 0.6zM149 145.4l2.8 -1 -0.1 6 -2.7 1.1z" fill="#00ffc0"/><path d="M151.8 144.4l2.9 -0.6 -0.1 5.8 -2.9 0.8z" fill="#00ff80"/><path d="M154.7 143.8l4.5 2.8 -0.2 5.9 -4.4 -2.9zM159.2 146.6l3.5 0.6 0.2 6.8 -3.9 -1.5zM162.7 147.2l3.3 0.1 1 8.5 -4.1 -1.8zM166 147.3l3.4 0.5 1.9 10.4 -4.3 -2.4z" fill="#00ffc0"/><path d="M169.4 147.8l3.9 1.6 3.3 13.6 -5.3 -4.8z" fill="#00ffff"/><path d="M173.3 149.4l5.4 4.9 4.3 15.9 -6.4 -7.2z" fill="#00c0ff"/><path d="M178.7 154.3l6.4 7 5.3 18.2 -7.4 -9.3z" fill="#0080ff"/><path d="M185.1 161.3l7.2 9.2 3.7 14.5 -5.6 -5.5z" fill="#0000ff"/><path d="M192.3 170.5l3.7 14.5 0 0 1.4 -3.2zM190.4 179.5l5.6 5.5 0 0 -3.2 0z" fill="#000080"/><path d="M119 178.4l1.6 -3.8 2.1 11.1 -2.1 2.4z" fill="#000080"/><path d="M120.6 188.1l2.1 -2.4 1.1 2.4 -3.2 0z" fill="#000080"/><path d="M120.6 174.6l1.8 -3.2 1.8 10.3 -1.5 4z" fill="#0000ff"/><path d="M122.7 185.7l1.5 -4 2.8 6.4 -3.2 0z" fill="#000080"/><path d="M122.4 171.4l1.5 -3.8 1.9 10.6 -1.6 3.5zM123.9 167.6l2.1 -2.5 1.6 9.9 -1.8 3.2z" fill="#0040ff"/><path d="M126 165.1l2.1 -2.6 1.8 10.3 -2.3 2.2zM128.1 162.5l2.1 -2.5 1.9 10.6 -2.2 2.2z" fill="#0080ff"/><path d="M130.2 160l2.6 -1.5 1.5 9.9 -2.2 2.2zM132.8 158.5l2.5 -1.4 1.3 9 -2.3 2.3z" fill="#00c0ff"/><path d="M135.3 157.1l2.3 -2.1 1.4 9.4 -2.4 1.7zM137.6 155l2.4 -2 1.2 9.1 -2.2 2.3zM140 153l2.8 -0.9 1.5 9.6 -3.1 0.4zM142.8 152.1l3.2 0 1.4 9.5 -3.1 0.1zM146 152.1l3 -0.6 1.4 9.5 -3 0.6zM149 151.5l2.7 -1.1 1.7 10.1 -3 0.5z" fill="#00ffff"/><path d="M151.7 150.4l2.9 -0.8 2.1 11.1 -3.3 -0.2z" fill="#00ffc0"/><path d="M154.6 149.6l4.4 2.9 1.9 10.5 -4.2 -2.3zM159 152.5l3.9 1.5 2.4 11.6 -4.4 -2.6z" fill="#00ffff"/><path d="M162.9 154l4.1 1.8 3.2 13.7 -4.9 -3.9zM167 155.8l4.3 2.4 4.5 16.5 -5.6 -5.2z" fill="#00c0ff"/><path d="M171.3 158.2l5.3 4.8 5.4 18.5 -6.2 -6.8z" fill="#0080ff"/><path d="M176.6 163l6.4 7.2 5.1 17.8 -6.1 -6.5z" fill="#0040ff"/><path d="M182 181.5l6.1 6.5 0 0.1 -3.2 0z" fill="#000080"/><path d="M183 170.2l7.4 9.3 1 8.6 -3.3 -0.1z" fill="#000080"/><path d="M190.4 179.5l1 8.6 0 0 1.4 -3.1zM188.1 188l3.3 0.1 0 0 -3.3 0z" fill="#000080"/><path d="M124.2 181.7l1.6 -3.5 2.5 12 -2.7 1z" fill="#000080"/><path d="M125.6 191.2l2.7 -1 0.5 1 -3.2 0z" fill="#000080"/><path d="M125.8 178.2l1.8 -3.2 2.5 11.9 -1.8 3.3z" fill="#0000ff"/><path d="M128.3 190.2l1.8 -3.3 1.9 4.3 -3.2 0z" fill="#000080"/><path d="M127.6 175l2.3 -2.2 2.2 11.3 -2 2.8z" fill="#0000ff"/><path d="M129.9 172.8l2.2 -2.2 2 10.8 -2 2.7zM132.1 170.6l2.2 -2.2 2.1 10.9 -2.3 2.1z" fill="#0040ff"/><path d="M134.3 168.4l2.3 -2.3 2.3 11.5 -2.5 1.7zM136.6 166.1l2.4 -1.7 2.4 11.7 -2.5 1.5zM139 164.4l2.2 -2.3 3 12.9 -2.8 1.1z" fill="#0080ff"/><path d="M141.2 162.1l3.1 -0.4 3 13.2 -3.1 0.1zM144.3 161.7l3.1 -0.1 2.9 12.8 -3 0.5zM147.4 161.6l3 -0.6 2.8 12.6 -2.9 0.8zM150.4 161l3 -0.5 3.8 14.9 -4 -1.8zM153.4 160.5l3.3 0.2 4.2 15.8 -3.7 -1.1z" fill="#00c0ff"/><path d="M156.7 160.7l4.2 2.3 4.3 16 -4.3 -2.5zM160.9 163l4.4 2.6 4.9 17.4 -5 -4z" fill="#0080ff"/><path d="M165.3 165.6l4.9 3.9 5.6 18.9 -5.6 -5.4z" fill="#0040ff"/><path d="M170.2 183l5.6 5.4 1.3 2.8 -3.2 0z" fill="#000080"/><path d="M170.2 169.5l5.6 5.2 4.5 16.5 -4.5 -2.8z" fill="#0000ff"/><path d="M175.8 188.4l4.5 2.8 0 0 -3.2 0z" fill="#000080"/><path d="M175.8 174.7l6.2 6.8 1.5 9.7 -3.2 0z" fill="#000080"/><path d="M182 181.5l1.5 9.7 0 0 1.4 -3.1zM180.3 191.2l3.2 0 0 0 -3.2 0z" fill="#000080"/><path d="M130.1 186.9l2 -2.8 1.8 10.3 -3.3 0z" fill="#000080"/><path d="M130.6 194.4l3.3 0 0 0 -3.3 0z" fill="#000080"/><path d="M132.1 184.1l2 -2.7 3 13 -3.2 0z" fill="#000080"/><path d="M133.9 194.4l3.2 0 0 0 -3.2 0z" fill="#000080"/><path d="M134.1 181.4l2.3 -2.1 3.2 13.5 -2.5 1.6z" fill="#0000ff"/><path d="M137.1 194.4l2.5 -1.6 0.7 1.6 -3.2 0z" fill="#000080"/><path d="M136.4 179.3l2.5 -1.7 3.2 13.6 -2.5 1.6z" fill="#0000ff"/><path d="M139.6 192.8l2.5 -1.6 1.4 3.2 -3.2 0z" fill="#000080"/><path d="M138.9 177.6l2.5 -1.5 3.3 13.6 -2.6 1.5z" fill="#0000ff"/><path d="M142.1 191.2l2.6 -1.5 2 4.7 -3.2 0z" fill="#000080"/><path d="M141.4 176.1l2.8 -1.1 3.3 13.9 -2.8 0.8z" fill="#0040ff"/><path d="M144.7 189.7l2.8 -0.8 2.5 5.5 -3.3 0z" fill="#000080"/><path d="M144.2 175l3.1 -0.1 3.5 14.1 -3.3 -0.1z" fill="#0040ff"/><path d="M147.5 188.9l3.3 0.1 2.4 5.4 -3.2 0z" fill="#000080"/><path d="M147.3 174.9l3 -0.5 3.7 14.7 -3.2 -0.1z" fill="#0040ff"/><path d="M150.8 189l3.2 0.1 2.4 5.3 -3.2 0z" fill="#000080"/><path d="M150.3 174.4l2.9 -0.8 4.5 16.5 -3.7 -1z" fill="#0040ff"/><path d="M154 189.1l3.7 1 1.9 4.3 -3.2 0z" fill="#000080"/><path d="M153.2 173.6l4 1.8 4.5 16.5 -4 -1.8z" fill="#0000ff"/><path d="M157.7 190.1l4 1.8 1.1 2.5 -3.2 0z" fill="#000080"/><path d="M157.2 175.4l3.7 1.1 5.2 17.9 -4.4 -2.5z" fill="#0000ff"/><path d="M161.7 191.9l4.4 2.5 0 0 -3.3 0z" fill="#000080"/><path d="M160.9 176.5l4.3 2.5 4.1 15.4 -3.2 0z" fill="#0000ff"/><path d="M166.1 194.4l3.2 0 0 0 -3.2 0z" fill="#000080"/><path d="M165.2 179l5 4 2.3 11.4 -3.2 0z" fill="#0000ff"/><path d="M170.2 183l2.3 11.4 0 0 1.4 -3.2zM169.3 194.4l3.2 0 0 0 -3.2 0z" fill="#000080"/></g></g><rect x="308" y="36.60000000000002" width="10.3" height="41.3" fill="#f6f6f4"/><path d="M310.95 42.10000000000002l2.2 -2.6l2.2 2.6z M310.95 72.40000000000002l2.2 2.6l2.2 -2.6z" fill="#4a4a4a"/><rect x="309.5" y="49" width="7.300000000000001" height="13" rx="1" fill="#e6e6e6" stroke="#9a9a9a" stroke-width="0.7"/><rect x="309.2" y="103.2" width="8.3" height="8.3" fill="#ff0000"/><rect x="309.2" y="111.2" width="8.3" height="8.3" fill="#ff4000"/><rect x="309.2" y="119.2" width="8.3" height="8.3" fill="#ff8000"/><rect x="309.2" y="127.2" width="8.3" height="8.3" fill="#ffc000"/><rect x="309.2" y="135.2" width="8.3" height="8.3" fill="#ffff00"/><rect x="309.2" y="143.2" width="8.3" height="8.3" fill="#c0ff00"/><rect x="309.2" y="151.2" width="8.3" height="8.3" fill="#80ff00"/><rect x="309.2" y="159.2" width="8.3" height="8.3" fill="#00ff00"/><rect x="309.2" y="167.2" width="8.3" height="8.3" fill="#00ff80"/><rect x="309.2" y="175.2" width="8.3" height="8.3" fill="#00ffc0"/><rect x="309.2" y="183.2" width="8.3" height="8.3" fill="#00ffff"/><rect x="309.2" y="191.2" width="8.3" height="8.3" fill="#00c0ff"/><rect x="309.2" y="199.2" width="8.3" height="8.3" fill="#0080ff"/><rect x="309.2" y="207.2" width="8.3" height="8.3" fill="#0040ff"/><rect x="309.2" y="215.2" width="8.3" height="8.3" fill="#0000ff"/><rect x="309.2" y="223.2" width="8.3" height="8.3" fill="#000080"/><path d="M309.2 111.2h3.7M309.2 119.2h3.7M309.2 127.2h3.7M309.2 135.2h3.7M309.2 143.2h3.7M309.2 151.2h3.7M309.2 159.2h3.7M309.2 167.2h3.7M309.2 175.2h3.7M309.2 183.2h3.7M309.2 191.2h3.7M309.2 199.2h3.7M309.2 207.2h3.7M309.2 215.2h3.7M309.2 223.2h3.7" stroke="#a04030" stroke-width="0.6" opacity="0.8"/><rect x="299.2" y="106" width="7.5" height="10" fill="#d4d0c8" opacity="0.8"/><text x="306.2" y="114.7" font-family="Liberation Sans,sans-serif" font-size="10.5" font-weight="normal" fill="#2a2ae0" text-anchor="end" >3</text><rect x="299.2" y="146.2" width="7.5" height="10" fill="#d4d0c8" opacity="0.8"/><text x="306.2" y="154.9" font-family="Liberation Sans,sans-serif" font-size="10.5" font-weight="normal" fill="#2a2ae0" text-anchor="end" >2</text><rect x="299.2" y="186.3" width="7.5" height="10" fill="#d4d0c8" opacity="0.8"/><text x="306.2" y="195" font-family="Liberation Sans,sans-serif" font-size="10.5" font-weight="normal" fill="#2a2ae0" text-anchor="end" >1</text><rect x="299.2" y="226.5" width="7.5" height="10" fill="#d4d0c8" opacity="0.8"/><text x="306.2" y="235.2" font-family="Liberation Sans,sans-serif" font-size="10.5" font-weight="normal" fill="#2a2ae0" text-anchor="end" >0</text><rect x="324" y="0" width="11" height="236.5" fill="#f0f0f0"/><path d="M327.2 6.5l2.3 -2.8l2.3 2.8z M327.2 230.0l2.3 2.8l2.3 -2.8z" fill="#4a4a4a"/><rect x="324.5" y="109.69999999999999" width="10" height="20" rx="1.5" fill="#e3e3e3" stroke="#8e8e8e" stroke-width="0.8"/><path d="M327.5 117.69999999999999h4M327.5 119.69999999999999h4M327.5 121.69999999999999h4" stroke="#555" stroke-width="0.7"/><rect x="0" y="236.5" width="324" height="12.5" fill="#f0f0f0"/><path d="M6.5 240.45l-2.8 2.3l2.8 2.3z M317.5 240.45l2.8 2.3l-2.8 2.3z" fill="#4a4a4a"/><rect x="103" y="237.0" width="28" height="11.5" rx="1.5" fill="#e3e3e3" stroke="#8e8e8e" stroke-width="0.8"/><path d="M115.0 240.75v4M117.0 240.75v4M119.0 240.75v4" stroke="#555" stroke-width="0.7"/><rect x="324" y="236.5" width="11" height="12.5" fill="#d4d0c8"/></svg></div></div><div class="win" style="left:348px;top:331px;width:348px;height:138px"><svg class="ti" viewBox="0 0 11 11" style=""><rect width="11" height="11" rx="0.8" fill="#1a5fb4"/><ellipse cx="5.5" cy="4.6" rx="4.2" ry="3.6" fill="none" stroke="#9cc3ee" stroke-width="0.9"/><ellipse cx="5.5" cy="4.4" rx="2.3" ry="2.1" fill="#fff"/><rect x="1.2" y="8.6" width="8.6" height="1.3" fill="#cfe2f7"/></svg><div class="tt" style="top:5.5px;letter-spacing:0.171px;left:20.2px">Ｘ断面 [File C : File A - File B] GBIR</div><div class="tr" style="left:180.8px;top:5.5px;letter-spacing:0.418px">(0.2µm/scale)</div><div class="wb cl" style="left:318.5px"><svg viewBox="0 0 18 9"><path d="M6.3 2.3L11.7 6.7M11.7 2.3L6.3 6.7" stroke="#fff" stroke-width="3.3" stroke-linecap="square"/><path d="M6.3 2.3L11.7 6.7M11.7 2.3L6.3 6.7" stroke="#8c8c8c" stroke-width="1.9" stroke-linecap="square"/></svg></div><div class="cnt" style="left:5px;top:19px;width:335px;height:112px;background:#d4d0c8"><svg width="335" height="112" viewBox="0 0 335 112" style="position:absolute;left:0;top:0;"><rect x="0" y="0" width="8" height="6.4" fill="#ff0000"/><rect x="0" y="6.1" width="8" height="6.4" fill="#ff4000"/><rect x="0" y="12.2" width="8" height="6.4" fill="#ff8000"/><rect x="0" y="18.3" width="8" height="6.4" fill="#ffc000"/><rect x="0" y="24.4" width="8" height="6.4" fill="#ffff00"/><rect x="0" y="30.5" width="8" height="6.4" fill="#c0ff00"/><rect x="0" y="36.6" width="8" height="6.4" fill="#80ff00"/><rect x="0" y="42.7" width="8" height="6.4" fill="#00ff00"/><rect x="0" y="48.8" width="8" height="6.4" fill="#00ff80"/><rect x="0" y="54.8" width="8" height="6.4" fill="#00ffc0"/><rect x="0" y="60.9" width="8" height="6.4" fill="#00ffff"/><rect x="0" y="67" width="8" height="6.4" fill="#00c0ff"/><rect x="0" y="73.1" width="8" height="6.4" fill="#0080ff"/><rect x="0" y="79.2" width="8" height="6.4" fill="#0040ff"/><rect x="0" y="85.3" width="8" height="6.4" fill="#0000ff"/><rect x="0" y="91.4" width="8" height="6.4" fill="#000080"/><path d="M0 6.1h3.6M0 12.2h3.6M0 18.3h3.6M0 24.4h3.6M0 30.5h3.6M0 36.6h3.6M0 42.7h3.6M0 48.8h3.6M0 54.8h3.6M0 60.9h3.6M0 67h3.6M0 73.1h3.6M0 79.2h3.6M0 85.3h3.6M0 91.4h3.6" stroke="#555" stroke-width="0.6" opacity="0.8"/><text x="12.5" y="10.3" font-family="Liberation Sans,sans-serif" font-size="10.5" font-weight="normal" fill="#2a2ae0" text-anchor="start" >3</text><text x="12.5" y="41.3" font-family="Liberation Sans,sans-serif" font-size="10.5" font-weight="normal" fill="#2a2ae0" text-anchor="start" >2</text><text x="12.5" y="72.2" font-family="Liberation Sans,sans-serif" font-size="10.5" font-weight="normal" fill="#2a2ae0" text-anchor="start" >1</text><text x="12.5" y="98.8" font-family="Liberation Sans,sans-serif" font-size="10.5" font-weight="normal" fill="#2a2ae0" text-anchor="start" >0</text><path d="M92.1 98.5l0 -1.6 0 -1.6 0.1 -1.7 0 -1.6 0 -1.4 0 -1.2 0.1 -1.7 0 -2.1 0.3 -1.5 0.5 -1.7 0.4 -2.1 0.5 -1.5 0.5 -1.1 0.4 -1.3 0.6 -1.6 0.6 -1.8 0.7 -1.4 0.6 -1.1 0.6 -1.1 0.6 -1.5 0.7 -2 0.6 -1.6 1 -1.2 1.1 -1.3 1.1 -1.3 1 -1.3 1.2 -0.7 1.5 -0.9 1.4 -1.3 1.5 0.2 1.4 1.1 1.4 1.3 1.3 0.7 1.2 0.5 1.2 1.2 1.2 1.7 1.2 1.5 1.3 0.8 1.4 0.7 1.4 1.2 1.4 0.6 1.3 0.2 1.5 0.6 1.5 0.7 1.6 -0.1 1.5 0.2 1.6 0.8 1.6 0.1 1.6 -0.3 1.6 0.1 1.6 0.4 1.6 0.4 1.5 0.1 1.6 0.5 1.5 1.5 1.6 0.8 1.5 -0.2 1.6 0.3 1.5 0.9 1.6 0.7 1.5 -0.3 1.6 -0.6 1.6 0.6 1.6 1.4 1.6 0.8 1.6 -0.3 1.6 0.2 1.6 0.6 1.6 0.2 1.6 0.1 1.6 -0.2 1.5 -0.2 1.6 0.3 1.6 0.4 1.5 0.1 1.6 0.7 1.6 1 1.6 0.6 1.5 0.3 1.6 0.4 1.6 0.6 1.5 0.7 1.6 0.3 1.6 0.1 1.5 0.5 1.6 0.4 1.5 -0.2 1.6 0.6 1.5 0.7 1.6 0.4 1.5 0.9 1.6 0.6 1.6 0 1.6 0 1.6 0.2 1.7 -0.1 1.6 0.2 1.5 -0.1 1.6 -0.4 1.5 -0.1 1.5 -0.5 1.5 -1.1 1.5 -1.6 1.4 -0.8 1.4 -0.3 1.5 -0.9 1.5 -0.6 1.5 -0.3 1.5 -0.6 1.5 -0.5 1.5 -0.7 1.4 -0.8 1.5 -0.8 1.5 -0.9 1.4 -0.6 1.5 -0.5 1.2 -0.9 1.3 -0.4 1.3 -0.7 1.2 -1.8 1.1 -1.5 1.1 -0.9 1 -1.7 1.1 -1.1 0.9 -0.8 0.9 -1.7 0.9 -1.5 0.9 -1.3 0.8 -1 1.2 -0.8 1.1 -1 1.2 -1.1 1.2 -1.9 1.5 -0.3 1.5 1 1.5 1.2 1.2 1 1.1 1.1 1.1 1.3 1 1 0.8 1.2 0.7 1.8 0.7 1.6 0.8 0.9 0.7 1.2 0.6 1.8 0.6 1.5 0.6 1.1 0.5 1.4 0.6 1.7 0.5 1.5 0.5 1.9 0.4 2.2 0.5 1.7 0.4 1.3 0.4 0.9 0.3 1.1 0.3 2.2 0.3 2 0.1 1.4 0.1 1.6 0 1.7 0.1 1.6 0 1.6z" fill="#808080" stroke="#2a2ae0" stroke-width="1" stroke-linejoin="round"/><path d="M0 98.5H335" stroke="#e02020" stroke-width="1.2"/><rect x="0.4" y="99.3" width="334.2" height="12.3" fill="#d4d0c8" stroke="#8a8782" stroke-width="0.8"/><text x="122" y="109.1" font-family="Liberation Mono,monospace" font-size="10.8" font-weight="normal" fill="#2a2ae0" text-anchor="middle" >Y=0.0mm</text><text x="201" y="109.1" font-family="Liberation Mono,monospace" font-size="10.8" font-weight="normal" fill="#2a2ae0" text-anchor="middle" >H=1.05µm</text></svg></div></div><div class="win" style="left:348px;top:468px;width:348px;height:138px"><svg class="ti" viewBox="0 0 11 11" style=""><rect width="11" height="11" rx="0.8" fill="#1a5fb4"/><ellipse cx="5.5" cy="4.6" rx="4.2" ry="3.6" fill="none" stroke="#9cc3ee" stroke-width="0.9"/><ellipse cx="5.5" cy="4.4" rx="2.3" ry="2.1" fill="#fff"/><rect x="1.2" y="8.6" width="8.6" height="1.3" fill="#cfe2f7"/></svg><div class="tt" style="top:5.5px;letter-spacing:0.189px;left:19.3px">任意断面 [File C : File A - File B] GBIR</div><div class="tr" style="left:188.5px;top:5.5px;letter-spacing:0.418px">(0.2µm/scale)</div><div class="wb cl" style="left:318.5px"><svg viewBox="0 0 18 9"><path d="M6.3 2.3L11.7 6.7M11.7 2.3L6.3 6.7" stroke="#fff" stroke-width="3.3" stroke-linecap="square"/><path d="M6.3 2.3L11.7 6.7M11.7 2.3L6.3 6.7" stroke="#8c8c8c" stroke-width="1.9" stroke-linecap="square"/></svg></div><div class="cnt" style="left:5px;top:20px;width:335px;height:111px;background:#d4d0c8"><svg width="335" height="111" viewBox="0 0 335 111" style="position:absolute;left:0;top:0;"><rect x="0" y="0" width="8" height="6.3" fill="#ff0000"/><rect x="0" y="6" width="8" height="6.3" fill="#ff4000"/><rect x="0" y="12.1" width="8" height="6.3" fill="#ff8000"/><rect x="0" y="18.1" width="8" height="6.3" fill="#ffc000"/><rect x="0" y="24.2" width="8" height="6.3" fill="#ffff00"/><rect x="0" y="30.2" width="8" height="6.3" fill="#c0ff00"/><rect x="0" y="36.3" width="8" height="6.3" fill="#80ff00"/><rect x="0" y="42.3" width="8" height="6.3" fill="#00ff00"/><rect x="0" y="48.4" width="8" height="6.3" fill="#00ff80"/><rect x="0" y="54.4" width="8" height="6.3" fill="#00ffc0"/><rect x="0" y="60.5" width="8" height="6.3" fill="#00ffff"/><rect x="0" y="66.5" width="8" height="6.3" fill="#00c0ff"/><rect x="0" y="72.6" width="8" height="6.3" fill="#0080ff"/><rect x="0" y="78.6" width="8" height="6.3" fill="#0040ff"/><rect x="0" y="84.7" width="8" height="6.3" fill="#0000ff"/><rect x="0" y="90.7" width="8" height="6.3" fill="#000080"/><path d="M0 6h3.6M0 12.1h3.6M0 18.1h3.6M0 24.2h3.6M0 30.2h3.6M0 36.3h3.6M0 42.3h3.6M0 48.4h3.6M0 54.4h3.6M0 60.5h3.6M0 66.5h3.6M0 72.6h3.6M0 78.6h3.6M0 84.7h3.6M0 90.7h3.6" stroke="#555" stroke-width="0.6" opacity="0.8"/><text x="12.5" y="9.3" font-family="Liberation Sans,sans-serif" font-size="10.5" font-weight="normal" fill="#2a2ae0" text-anchor="start" >3</text><text x="12.5" y="40.4" font-family="Liberation Sans,sans-serif" font-size="10.5" font-weight="normal" fill="#2a2ae0" text-anchor="start" >2</text><text x="12.5" y="71.6" font-family="Liberation Sans,sans-serif" font-size="10.5" font-weight="normal" fill="#2a2ae0" text-anchor="start" >1</text><text x="12.5" y="97.8" font-family="Liberation Sans,sans-serif" font-size="10.5" font-weight="normal" fill="#2a2ae0" text-anchor="start" >0</text><path d="M35 97.8l0.9 -1.3 0.9 -1.4 0.9 -1.3 1 -1.4 0.9 -1.4 0.9 -1.3 0.9 -1.6 0.9 -1.5 0.9 -1.2 0.8 -1.5 0.9 -1.8 0.9 -1.4 0.7 -1.2 0.7 -1.4 0.7 -1.3 0.7 -0.9 0.8 -1.3 0.7 -1.8 0.7 -1.5 0.7 -1.5 0.8 -1.6 0.7 -0.7 0.7 -0.9 0.8 -2.3 0.7 -2.2 0.9 -1.4 1 -1.5 0.9 -1.5 1 -0.9 0.9 -0.8 1.1 -0.7 1.2 -1.6 1.1 -1.3 1.1 -0.6 1.2 -1.4 1.3 -1.9 1.2 -1.2 1.3 -0.4 1.4 -0.2 1.3 -0.5 1.5 -0.7 1.4 -1.1 1.5 -0.8 1.5 -0.3 1.5 -0.2 1.7 -0.4 1.5 0 1.6 0.3 1.6 0.6 1.5 0.8 1.5 0.5 1.5 0.6 1.5 1 1.5 1.1 1.5 0.6 1.3 0 1.4 0.4 1.4 1.4 1.4 1.2 1.4 1 1.4 1.1 1.4 0.4 1.5 0.5 1.4 0.5 1.6 -0.1 1.6 0.3 1.6 0.2 1.6 0.1 1.6 0.5 1.6 0.7 1.7 0.2 1.6 -0.2 1.6 0.3 1.6 0.6 1.6 -0.1 1.7 -0.5 1.6 -0.4 1.6 0 1.6 0.1 1.6 0.2 1.6 0.6 1.6 0.4 1.5 0.3 1.5 0.5 1.5 0.9 1.1 1.8 1.2 1 1.2 0.2 1.2 1 1.2 1.4 1.2 1.2 1.1 0.9 1.1 1.2 1.1 1.1 1.1 1.3 0.9 1.7 1 1.2 0.9 1.1 0.8 1.4 0.7 1.5 0.8 2.1 0.7 1.6 0.5 1.1 0.6 1.5 0.6 1.4 0.3 1.6 0.3 1.6 0.4 1.5 0.1 1.6 0.1 1.6 0 1.7 0.1 1.6 0.1 1.6z" fill="#808080" stroke="#2a2ae0" stroke-width="1" stroke-linejoin="round"/><path d="M0 97.8H335" stroke="#e02020" stroke-width="1.2"/><rect x="0.4" y="98.6" width="334.2" height="12" fill="#d4d0c8" stroke="#8a8782" stroke-width="0.8"/><text x="197" y="108.2" font-family="Liberation Mono,monospace" font-size="10.8" font-weight="normal" fill="#2a2ae0" text-anchor="middle" >H=1.80µm</text></svg></div></div><div class="win" style="left:1px;top:606px;width:694px;height:113px;border-radius:4px 4px 0 0;background:linear-gradient(#bccbdb 0,#c9d7e7 9px,#d9e5f2 17px,#dbe6f3 18px)"><div class="tt" style="left:4px;top:1px;font-size:8.6px;color:#6a6a6a;letter-spacing:0">コメント</div><div class="abs" style="left:2px;top:16px;width:690px;height:95px;background:#f0f0f0"></div><div class="abs" style="left:3px;top:16px;width:466px;height:94px;background:#fff;border-top:1px solid #b4b4b4"></div><div class="abs" style="left:468px;top:17px;width:11px;height:93px;background:#f0f0f0"><svg width="11" height="93" style="position:absolute;left:0;top:0"><path d="M3.3 8.5l2.2 -2.4l2.2 2.4zM3.3 85.5l2.2 2.4l2.2 -2.4z" fill="#9a9a9a"/></svg></div><div class="abs" style="left:481px;top:23px;width:210px;height:85px;border:1px solid #e0e0e0;border-radius:2px"></div><div class="abs" style="left:484px;top:17px;padding:0 1px;background:#f0f0f0;font-size:9.4px;font-weight:300;line-height:12px;white-space:nowrap;letter-spacing:-1.278px">ステータス</div><div class="abs" style="left:488.5px;top:28px;font-size:9.4px;font-weight:300;line-height:13px;white-space:nowrap;letter-spacing:-1.027px">差分マップデータあり</div><div class="abs" style="left:643px;top:28px;font-size:9.4px;font-weight:300;line-height:13px;white-space:nowrap;letter-spacing:0.071px">表面干渉</div><div class="abs" style="left:485px;top:94px;width:201px;height:11px;border:1px solid #b2b2b2;border-radius:2px;background:linear-gradient(#d8d8d8,#c4c4c4 45%,#bdbdbd 55%,#cfcfcf)"></div></div></div></body></html>
